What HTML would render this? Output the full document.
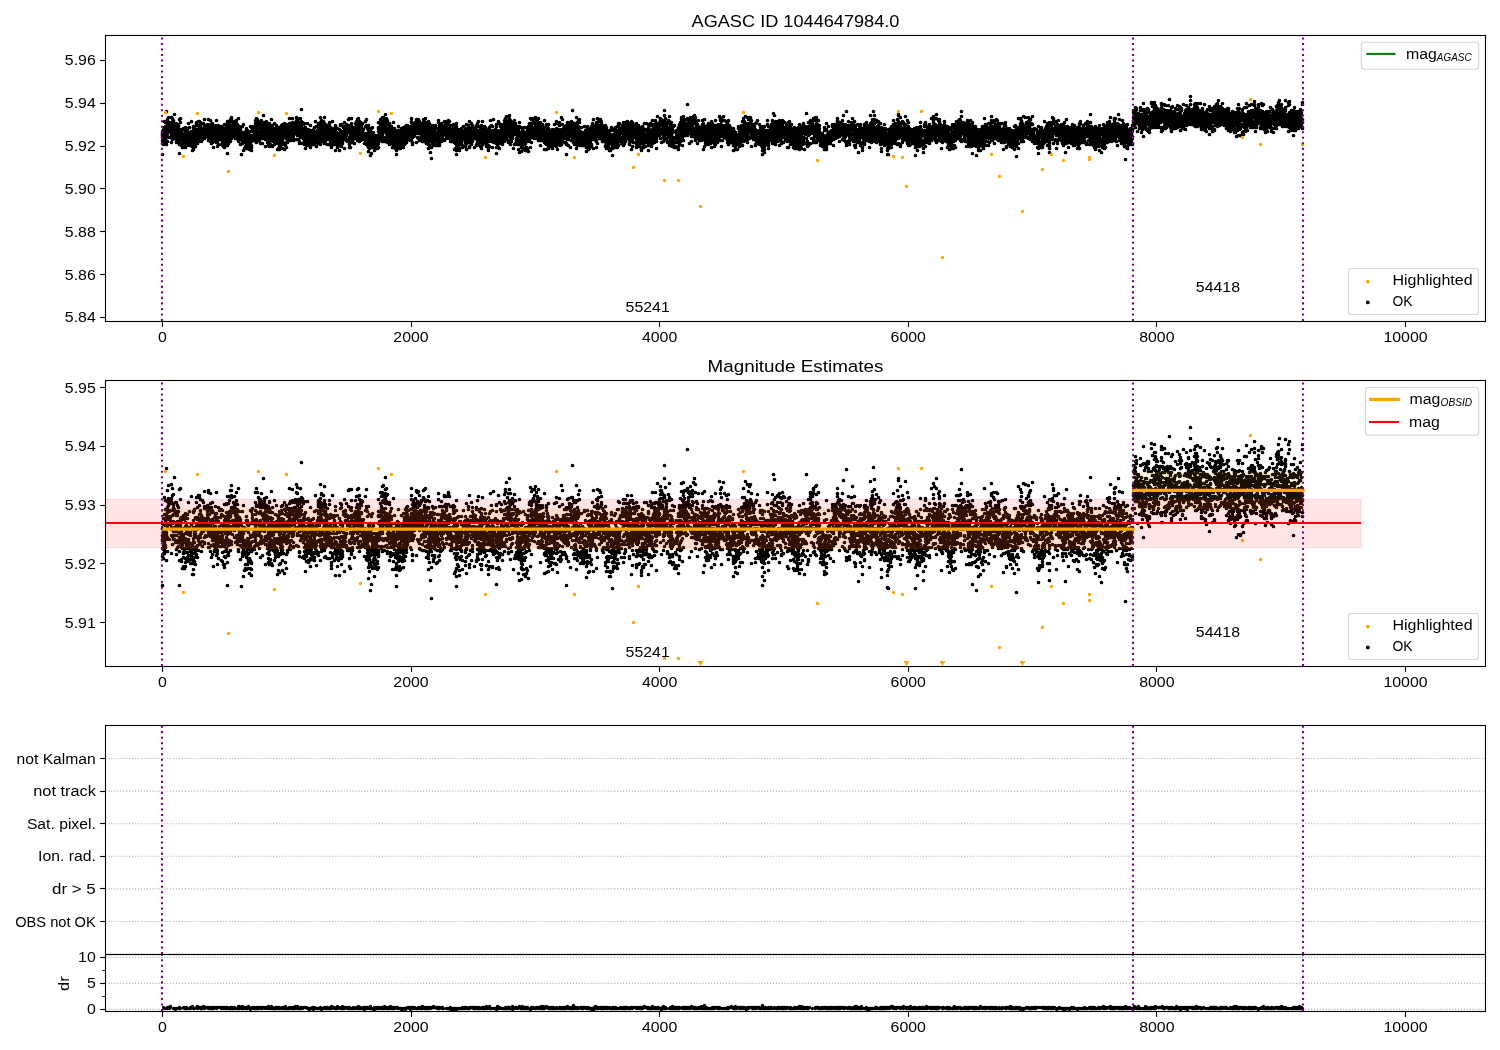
<!DOCTYPE html>
<html><head><meta charset="utf-8"><style>html,body{margin:0;padding:0;background:#fff;overflow:hidden}svg{display:block;will-change:transform}</style></head><body>
<svg width="1500" height="1050" viewBox="0 0 1500 1050" font-family="'Liberation Sans', sans-serif" fill="#000">
<rect width="1500" height="1050" fill="#fff"/>
<defs><clipPath id="c1"><rect x="105.5" y="35.5" width="1380.0" height="286.0"/></clipPath><clipPath id="c2"><rect x="105.5" y="380.5" width="1380.0" height="286.0"/></clipPath><clipPath id="c4"><rect x="105.5" y="954.5" width="1380.0" height="57.0"/></clipPath></defs>
<text x="795.50" y="26.90" font-size="16.67" text-anchor="middle" textLength="207.93" lengthAdjust="spacingAndGlyphs">AGASC ID 1044647984.0</text>
<g clip-path="url(#c1)">
<path d="M1625 1355h0m0 80h0m0 110h0m0 -170h0m0 0h0m0 0h0m0 -60h0m0 90h0m0 -50h0m0 20h0m0 -40h0m10 10h0m0 60h0m0 -10h0m0 -80h0m0 60h0m0 70h0m0 -110h0m0 80h0m0 10h0m0 -70h0m0 0h0m0 -60h0m10 130h0m0 -30h0m0 -100h0m0 -80h0m0 130h0m0 10h0m0 -10h0m0 40h0m0 0h0m0 -90h0m0 20h0m0 100h0m0 -140h0m0 80h0m0 60h0m0 -60h0m10 -130h0m0 120h0m0 -40h0m0 -40h0m0 70h0m0 70h0m0 -100h0m0 0h0m0 30h0m0 -10h0m0 70h0m0 -30h0m0 -50h0m10 130h0m0 -330h0m0 180h0m0 60h0m0 20h0m0 -20h0m0 -10h0m0 -60h0m10 10h0m0 -30h0m0 30h0m0 40h0m0 -10h0m0 90h0m0 -180h0m0 60h0m0 70h0m0 -90h0m0 -80h0m0 120h0m0 -60h0m10 -20h0m0 -60h0m0 70h0m0 -20h0m10 60h0m0 -60h0m0 70h0m0 -30h0m0 110h0m10 -110h0m0 50h0m0 -10h0m0 -10h0m0 20h0m10 -80h0m0 100h0m0 -160h0m0 50h0m0 130h0m0 70h0m0 -180h0m0 80h0m10 -10h0m0 -130h0m0 60h0m0 120h0m0 -100h0m0 90h0m0 -140h0m0 180h0m0 -10h0m0 -100h0m10 -30h0m0 120h0m0 -110h0m0 -20h0m0 40h0m0 20h0m0 -40h0m0 80h0m0 -80h0m0 -60h0m0 60h0m0 90h0m0 -20h0m10 10h0m0 -10h0m0 -190h0m0 120h0m0 50h0m0 10h0m0 30h0m0 0h0m0 -90h0m0 110h0m10 -100h0m0 0h0m0 110h0m0 -50h0m0 -100h0m10 90h0m0 -10h0m0 -80h0m0 40h0m0 10h0m0 60h0m0 80h0m0 -70h0m0 -30h0m0 90h0m0 -180h0m0 120h0m10 30h0m0 20h0m0 -160h0m0 40h0m0 90h0m0 -90h0m0 50h0m0 -30h0m0 20h0m0 0h0m0 50h0m0 -60h0m0 -10h0m10 90h0m0 -140h0m0 60h0m0 -50h0m0 50h0m0 60h0m0 10h0m0 -70h0m0 20h0m0 -30h0m10 20h0m0 10h0m0 -30h0m0 10h0m0 220h0m0 -340h0m0 220h0m0 -40h0m0 -30h0m0 20h0m0 80h0m0 -100h0m10 -20h0m0 -30h0m0 70h0m0 -60h0m0 0h0m0 50h0m0 30h0m0 -200h0m0 210h0m0 -100h0m0 -70h0m10 160h0m0 10h0m0 -50h0m0 -40h0m0 90h0m0 -60h0m0 50h0m0 20h0m0 -40h0m0 90h0m0 -160h0m0 150h0m0 -130h0m10 60h0m0 0h0m0 -40h0m0 140h0m0 -80h0m0 10h0m0 -40h0m0 30h0m10 -110h0m0 120h0m0 20h0m0 -40h0m0 90h0m0 -50h0m0 -70h0m0 -60h0m0 60h0m0 80h0m10 40h0m0 -100h0m0 -90h0m0 130h0m0 0h0m0 -120h0m10 110h0m0 -100h0m0 40h0m0 40h0m0 -60h0m0 -40h0m0 170h0m0 20h0m0 -200h0m0 20h0m0 120h0m0 -50h0m0 80h0m10 -60h0m0 0h0m0 60h0m0 -110h0m0 120h0m0 -110h0m0 -60h0m0 120h0m0 -110h0m0 40h0m0 60h0m0 -70h0m0 -10h0m10 80h0m0 -10h0m0 20h0m0 20h0m0 -70h0m0 80h0m0 -90h0m0 -50h0m0 80h0m0 70h0m0 -70h0m0 -90h0m10 -50h0m0 140h0m0 0h0m0 0h0m0 -20h0m0 70h0m0 -40h0m0 60h0m0 -60h0m0 0h0m0 20h0m10 50h0m0 -10h0m0 0h0m0 -170h0m0 130h0m0 -80h0m10 80h0m0 50h0m0 -70h0m0 30h0m0 -70h0m0 10h0m0 30h0m10 -70h0m0 100h0m0 20h0m0 -10h0m0 -210h0m0 210h0m10 20h0m0 -110h0m0 0h0m0 70h0m0 60h0m0 40h0m0 -110h0m0 50h0m0 -50h0m10 -120h0m0 150h0m0 60h0m0 -40h0m0 -140h0m0 60h0m0 -50h0m0 10h0m0 -60h0m0 120h0m0 0h0m0 110h0m0 -170h0m10 40h0m0 70h0m0 -50h0m0 -40h0m0 0h0m0 20h0m0 -10h0m0 50h0m0 -140h0m0 0h0m0 190h0m0 -120h0m10 30h0m0 60h0m0 -20h0m0 -110h0m0 0h0m0 60h0m0 -10h0m0 10h0m0 0h0m0 110h0m0 -170h0m0 120h0m10 -190h0m0 200h0m0 -30h0m0 -60h0m0 -40h0m0 110h0m0 -80h0m0 40h0m0 -130h0m0 80h0m0 20h0m10 0h0m0 -40h0m0 70h0m0 -110h0m0 80h0m0 100h0m0 -40h0m0 -100h0m10 120h0m0 -50h0m0 -150h0m0 150h0m0 -150h0m0 80h0m0 10h0m0 10h0m0 50h0m0 10h0m10 -70h0m0 80h0m0 -70h0m0 10h0m0 -110h0m0 90h0m0 20h0m0 -70h0m0 20h0m0 50h0m0 -30h0m0 -80h0m0 90h0m10 -10h0m0 90h0m0 -160h0m0 40h0m0 120h0m0 -120h0m0 90h0m0 10h0m0 -10h0m0 30h0m0 0h0m0 -20h0m0 -90h0m10 70h0m0 -50h0m0 10h0m0 20h0m0 -40h0m0 60h0m0 -40h0m0 20h0m0 90h0m10 -120h0m0 90h0m0 -60h0m0 -20h0m0 90h0m0 -70h0m0 -90h0m0 100h0m0 0h0m10 -100h0m0 80h0m0 -10h0m0 0h0m0 40h0m10 -30h0m0 -60h0m0 130h0m0 -190h0m0 110h0m0 20h0m0 -60h0m0 100h0m0 -50h0m0 -20h0m0 10h0m0 -50h0m0 130h0m10 -60h0m0 -60h0m0 90h0m0 -30h0m0 10h0m0 -30h0m10 30h0m0 30h0m0 -60h0m0 0h0m0 30h0m0 0h0m0 -10h0m10 -70h0m0 80h0m0 -70h0m0 10h0m0 -30h0m0 50h0m0 0h0m0 -10h0m0 -40h0m10 100h0m0 -30h0m0 70h0m0 -90h0m0 30h0m0 -70h0m0 100h0m0 -160h0m0 0h0m0 210h0m0 -140h0m10 90h0m0 -70h0m0 120h0m0 -80h0m0 -70h0m0 10h0m0 70h0m10 -30h0m0 -40h0m0 -60h0m0 40h0m0 110h0m0 -10h0m0 -20h0m0 -20h0m0 110h0m0 -50h0m10 -40h0m0 40h0m0 70h0m0 -80h0m0 -80h0m0 -20h0m0 140h0m10 -90h0m0 30h0m0 -20h0m0 -80h0m0 100h0m0 30h0m0 -20h0m0 10h0m0 70h0m0 -130h0m0 80h0m0 -100h0m0 -10h0m0 80h0m10 0h0m0 10h0m0 0h0m0 40h0m0 -20h0m0 100h0m0 -170h0m0 -30h0m0 90h0m0 -20h0m10 -20h0m0 30h0m0 -20h0m0 80h0m0 -90h0m0 20h0m0 -10h0m0 80h0m0 -20h0m0 -100h0m0 100h0m0 0h0m10 -90h0m0 30h0m0 60h0m0 -60h0m0 -10h0m0 -70h0m0 30h0m0 90h0m0 -30h0m0 60h0m10 -50h0m0 -40h0m0 60h0m0 -20h0m0 -50h0m0 -100h0m0 90h0m0 0h0m0 60h0m0 -60h0m0 110h0m0 -20h0m0 40h0m0 -150h0m10 70h0m0 0h0m0 0h0m0 10h0m0 10h0m0 -20h0m0 80h0m0 40h0m0 -50h0m0 -20h0m10 -90h0m0 -10h0m0 70h0m0 -110h0m0 80h0m0 40h0m0 70h0m10 -100h0m0 -20h0m0 60h0m0 0h0m0 10h0m0 -130h0m0 110h0m10 -10h0m0 10h0m0 0h0m0 -10h0m0 -100h0m0 30h0m0 0h0m10 100h0m0 -50h0m0 100h0m0 -120h0m0 10h0m0 -70h0m0 80h0m0 -60h0m0 90h0m10 -20h0m0 100h0m0 -70h0m0 -20h0m0 60h0m0 -90h0m0 -70h0m0 120h0m0 10h0m0 -110h0m10 40h0m0 60h0m0 -60h0m0 70h0m0 70h0m0 -80h0m0 -70h0m0 20h0m0 0h0m10 60h0m0 20h0m0 -100h0m0 30h0m0 -100h0m0 190h0m0 -150h0m0 20h0m0 40h0m0 120h0m0 10h0m0 -160h0m10 -20h0m0 20h0m0 80h0m0 -20h0m0 -30h0m0 90h0m0 -80h0m0 -10h0m0 -30h0m0 100h0m10 -130h0m0 70h0m0 -10h0m0 60h0m0 -20h0m0 -60h0m0 70h0m0 -60h0m0 0h0m0 30h0m0 40h0m0 -130h0m0 -30h0m0 0h0m10 130h0m0 -20h0m0 20h0m0 -30h0m0 0h0m0 0h0m0 -30h0m0 30h0m0 -40h0m0 230h0m0 -240h0m0 160h0m0 -240h0m0 220h0m0 -80h0m0 -20h0m10 -90h0m0 170h0m0 -30h0m0 -80h0m0 120h0m0 -210h0m0 60h0m0 160h0m0 -140h0m0 30h0m0 70h0m0 -110h0m10 60h0m0 -70h0m0 50h0m0 -100h0m0 50h0m0 40h0m0 30h0m0 30h0m0 -70h0m0 -30h0m0 20h0m10 50h0m0 -10h0m0 -50h0m0 0h0m0 -90h0m0 220h0m0 -80h0m0 20h0m0 -70h0m10 -70h0m0 170h0m0 -60h0m0 -70h0m0 80h0m0 -70h0m0 110h0m0 -160h0m0 40h0m0 80h0m0 -140h0m0 -20h0m0 100h0m10 0h0m0 30h0m0 50h0m10 -120h0m0 70h0m0 -30h0m0 40h0m0 -10h0m10 -30h0m0 -30h0m0 20h0m0 60h0m0 -110h0m0 50h0m0 -10h0m0 -10h0m0 10h0m0 80h0m0 -20h0m0 50h0m10 -120h0m0 140h0m0 -100h0m0 40h0m0 -10h0m0 20h0m0 -80h0m0 40h0m0 30h0m0 -10h0m0 10h0m10 -120h0m0 120h0m0 -40h0m0 30h0m0 -40h0m0 30h0m0 50h0m0 -60h0m0 -60h0m0 0h0m0 150h0m10 -140h0m0 20h0m0 50h0m0 -50h0m0 90h0m0 -70h0m0 100h0m0 -100h0m0 -20h0m0 100h0m0 20h0m10 -60h0m0 90h0m0 -120h0m0 20h0m0 -130h0m0 150h0m0 70h0m0 -90h0m10 20h0m0 -70h0m0 100h0m0 -30h0m0 10h0m0 0h0m0 20h0m0 -70h0m0 20h0m0 60h0m10 -70h0m0 -10h0m0 80h0m0 20h0m0 -30h0m0 -50h0m0 30h0m0 10h0m0 90h0m0 -70h0m10 -20h0m0 -30h0m0 30h0m0 40h0m0 0h0m0 -60h0m0 40h0m0 170h0m10 -110h0m0 -20h0m0 -70h0m0 20h0m0 -10h0m0 20h0m0 50h0m0 10h0m0 -70h0m0 -10h0m0 -90h0m0 140h0m0 -20h0m10 0h0m0 -140h0m0 110h0m0 -30h0m0 60h0m0 10h0m0 -60h0m0 170h0m0 -90h0m0 -70h0m10 40h0m0 100h0m0 -80h0m0 -20h0m0 30h0m0 -90h0m0 90h0m0 -40h0m10 90h0m0 -80h0m0 -50h0m0 10h0m0 130h0m0 -80h0m0 30h0m10 -10h0m0 20h0m0 0h0m0 -50h0m0 -80h0m0 90h0m0 -110h0m0 150h0m0 50h0m0 -60h0m0 -40h0m0 50h0m10 30h0m0 -160h0m0 10h0m0 20h0m0 30h0m0 20h0m0 40h0m0 -20h0m0 -20h0m10 60h0m0 -50h0m0 -10h0m0 20h0m0 -10h0m0 10h0m0 -90h0m0 130h0m0 10h0m0 -30h0m0 -80h0m0 30h0m0 100h0m10 -30h0m0 -130h0m0 180h0m10 -130h0m0 -100h0m0 210h0m0 -120h0m0 90h0m0 -50h0m0 20h0m10 90h0m0 -100h0m0 -50h0m0 30h0m0 -110h0m0 180h0m0 -40h0m0 60h0m0 -10h0m0 -150h0m10 -20h0m0 10h0m0 60h0m0 0h0m0 -100h0m0 20h0m0 90h0m0 -80h0m0 70h0m0 -100h0m10 50h0m0 40h0m10 50h0m0 -40h0m0 -30h0m0 10h0m0 10h0m0 40h0m0 -40h0m10 -10h0m0 -80h0m0 70h0m0 -30h0m0 70h0m0 0h0m0 20h0m0 -20h0m0 -70h0m0 -70h0m0 130h0m0 -160h0m0 120h0m0 -40h0m10 140h0m0 -110h0m0 -20h0m0 -40h0m0 100h0m0 -20h0m0 0h0m0 60h0m0 -150h0m0 60h0m0 -120h0m10 130h0m0 -40h0m0 120h0m0 -40h0m0 0h0m0 -160h0m0 120h0m10 80h0m0 -80h0m0 70h0m0 -170h0m0 120h0m10 20h0m0 -20h0m0 -110h0m0 110h0m0 -90h0m0 70h0m0 0h0m0 -60h0m0 90h0m0 -70h0m0 70h0m0 60h0m0 -80h0m0 10h0m0 20h0m0 -40h0m10 10h0m0 -70h0m0 50h0m0 80h0m0 -50h0m0 -20h0m0 -40h0m0 0h0m0 90h0m0 -140h0m0 40h0m0 40h0m0 30h0m0 100h0m10 -230h0m0 30h0m0 10h0m0 120h0m0 10h0m0 -40h0m0 -10h0m0 60h0m0 -60h0m10 -80h0m0 190h0m0 -150h0m0 0h0m0 60h0m0 -20h0m0 10h0m0 -20h0m0 -60h0m10 130h0m0 -230h0m0 80h0m0 60h0m0 -20h0m10 30h0m0 -80h0m0 0h0m0 150h0m0 -100h0m0 -30h0m0 100h0m0 -60h0m0 10h0m0 20h0m0 10h0m0 -70h0m10 110h0m0 -100h0m0 0h0m0 30h0m0 70h0m0 30h0m0 -20h0m0 -40h0m0 -40h0m0 170h0m10 -220h0m0 130h0m0 -80h0m0 80h0m0 -10h0m0 -70h0m0 100h0m0 -180h0m0 160h0m0 20h0m0 -110h0m10 -10h0m0 120h0m0 -90h0m0 120h0m0 -170h0m0 100h0m0 50h0m0 -110h0m0 30h0m10 -10h0m0 80h0m0 -130h0m0 60h0m0 80h0m0 -60h0m0 60h0m0 10h0m0 -150h0m0 -10h0m0 0h0m0 190h0m0 -80h0m0 -40h0m0 130h0m10 0h0m0 -200h0m0 90h0m0 20h0m0 60h0m0 -190h0m0 150h0m0 30h0m0 -180h0m0 130h0m0 100h0m0 -150h0m0 10h0m0 80h0m0 -60h0m0 -70h0m0 -10h0m0 30h0m0 100h0m10 -100h0m0 30h0m0 120h0m0 -90h0m0 50h0m0 -70h0m0 70h0m0 -130h0m0 110h0m0 -10h0m0 10h0m0 -110h0m10 120h0m0 60h0m0 -50h0m0 -100h0m0 20h0m0 -130h0m0 150h0m0 0h0m0 30h0m0 -40h0m0 10h0m0 -10h0m0 120h0m10 -180h0m0 80h0m0 30h0m0 10h0m0 -50h0m0 -30h0m0 -20h0m0 40h0m0 -80h0m0 210h0m10 -110h0m0 -40h0m0 0h0m0 30h0m0 70h0m0 -30h0m0 -50h0m0 60h0m10 -80h0m0 100h0m0 -40h0m0 70h0m0 -50h0m0 -70h0m0 50h0m0 40h0m0 -180h0m0 160h0m10 -60h0m0 -50h0m0 140h0m0 -50h0m0 0h0m0 -50h0m0 20h0m0 50h0m0 30h0m0 10h0m0 -100h0m10 -30h0m0 70h0m0 10h0m0 -70h0m0 100h0m0 -10h0m0 -150h0m0 80h0m10 30h0m0 130h0m0 -160h0m0 80h0m0 -100h0m0 10h0m0 50h0m0 -40h0m0 -50h0m10 10h0m0 80h0m0 -30h0m0 40h0m0 -10h0m0 60h0m0 -140h0m0 70h0m0 -30h0m0 90h0m0 60h0m0 -60h0m10 -80h0m0 -10h0m0 -60h0m0 80h0m0 20h0m0 -70h0m0 50h0m0 -30h0m0 -40h0m0 180h0m0 -160h0m0 190h0m10 -100h0m0 10h0m0 -40h0m0 -90h0m0 110h0m0 -20h0m0 -20h0m0 80h0m0 30h0m0 -110h0m0 0h0m0 10h0m0 20h0m0 50h0m0 -110h0m10 90h0m0 -110h0m0 120h0m0 -30h0m0 10h0m0 -130h0m0 100h0m0 -70h0m0 100h0m0 -140h0m10 80h0m0 -40h0m0 30h0m0 90h0m0 -140h0m0 60h0m0 -90h0m0 200h0m0 -30h0m0 -110h0m0 20h0m0 160h0m0 -90h0m0 10h0m0 -60h0m10 -50h0m0 20h0m0 60h0m0 -20h0m0 0h0m0 70h0m0 -100h0m0 30h0m10 140h0m0 -140h0m0 -40h0m0 -50h0m0 80h0m0 -30h0m0 50h0m0 -40h0m0 0h0m0 20h0m0 30h0m0 0h0m0 -140h0m10 50h0m0 -20h0m0 70h0m0 -20h0m0 140h0m0 -90h0m0 -50h0m0 50h0m0 -30h0m10 90h0m0 -40h0m0 -110h0m0 200h0m0 -160h0m0 10h0m0 -10h0m0 -70h0m0 10h0m0 90h0m0 -10h0m10 40h0m0 10h0m0 40h0m0 -40h0m0 -120h0m0 0h0m0 20h0m0 20h0m0 50h0m0 -20h0m0 80h0m0 -100h0m10 10h0m0 0h0m0 40h0m0 -10h0m0 10h0m0 -100h0m0 20h0m0 50h0m0 -80h0m10 10h0m0 -30h0m0 140h0m0 -100h0m0 20h0m0 30h0m0 60h0m0 -50h0m0 20h0m0 -90h0m0 -80h0m0 220h0m0 -70h0m0 -50h0m10 110h0m0 -50h0m0 -80h0m0 140h0m0 -170h0m0 30h0m0 50h0m0 0h0m10 10h0m0 30h0m0 -60h0m0 -40h0m0 0h0m0 30h0m0 90h0m0 -30h0m10 -120h0m0 50h0m0 -10h0m0 -80h0m0 180h0m0 -130h0m0 0h0m10 110h0m0 60h0m0 -50h0m0 -60h0m0 100h0m0 -10h0m0 -80h0m0 30h0m0 -60h0m10 60h0m0 -30h0m0 -30h0m0 60h0m0 -50h0m0 -10h0m0 -20h0m0 50h0m0 30h0m0 -20h0m0 -50h0m10 70h0m0 -50h0m0 10h0m0 -30h0m0 -30h0m0 -10h0m0 100h0m0 -40h0m0 -30h0m10 40h0m0 -30h0m0 130h0m0 -220h0m0 100h0m0 -70h0m0 80h0m0 -50h0m10 10h0m0 -40h0m0 120h0m0 -80h0m0 110h0m0 -30h0m0 20h0m0 -70h0m0 -90h0m0 170h0m0 -150h0m0 70h0m10 30h0m0 20h0m0 -100h0m0 40h0m0 -30h0m0 70h0m0 90h0m0 0h0m10 -130h0m0 80h0m0 -70h0m0 50h0m0 0h0m0 90h0m0 -190h0m0 190h0m0 -80h0m0 -70h0m0 170h0m0 -150h0m0 -40h0m10 -60h0m0 140h0m0 -60h0m0 90h0m0 -120h0m0 70h0m0 70h0m0 -50h0m10 -40h0m0 30h0m0 -100h0m0 110h0m0 20h0m0 -90h0m0 70h0m0 40h0m0 -140h0m0 110h0m0 -70h0m0 50h0m0 -220h0m0 230h0m0 -20h0m10 10h0m0 40h0m0 -130h0m0 100h0m0 10h0m0 -50h0m0 150h0m10 -100h0m0 -20h0m0 -70h0m0 70h0m0 70h0m0 -60h0m0 -30h0m0 60h0m0 80h0m0 -70h0m0 -20h0m0 -40h0m10 100h0m0 40h0m0 -70h0m0 30h0m0 -110h0m0 -60h0m0 180h0m0 -130h0m10 140h0m0 60h0m0 -90h0m0 -60h0m0 10h0m0 0h0m0 20h0m0 10h0m0 -10h0m0 70h0m0 -100h0m0 -60h0m0 60h0m0 10h0m0 -40h0m0 30h0m0 -10h0m10 90h0m0 -20h0m0 40h0m0 -30h0m0 50h0m0 -90h0m0 30h0m10 0h0m0 -90h0m0 50h0m0 0h0m0 30h0m0 -30h0m0 20h0m0 -140h0m0 130h0m0 60h0m10 20h0m0 -120h0m0 40h0m0 -70h0m0 80h0m0 20h0m0 60h0m0 -60h0m0 -30h0m0 90h0m0 -90h0m0 50h0m0 30h0m0 -100h0m10 100h0m0 -50h0m0 -50h0m0 -40h0m0 0h0m0 100h0m0 -80h0m10 90h0m0 -30h0m0 -80h0m0 60h0m0 80h0m0 -20h0m0 50h0m0 -40h0m0 -180h0m0 110h0m0 30h0m0 10h0m0 -100h0m0 40h0m0 20h0m10 60h0m0 -40h0m0 -70h0m0 70h0m0 40h0m0 -80h0m0 10h0m0 60h0m0 -10h0m0 -80h0m10 -20h0m0 130h0m0 -90h0m0 100h0m0 -130h0m0 20h0m0 40h0m0 20h0m0 30h0m10 20h0m0 -90h0m0 30h0m0 -30h0m0 -60h0m0 90h0m0 -30h0m10 80h0m0 -160h0m0 50h0m0 20h0m0 -20h0m0 120h0m0 -60h0m0 -20h0m0 -30h0m0 60h0m0 -50h0m0 0h0m0 70h0m0 -80h0m0 30h0m0 0h0m10 -10h0m0 50h0m0 -80h0m0 0h0m0 70h0m0 -20h0m0 20h0m0 -180h0m0 120h0m0 50h0m0 40h0m10 -70h0m0 -40h0m0 80h0m0 -60h0m0 50h0m0 30h0m0 -100h0m0 150h0m0 -200h0m10 150h0m0 -80h0m0 -30h0m0 0h0m0 20h0m0 50h0m10 -130h0m0 190h0m0 -160h0m0 40h0m0 -80h0m0 60h0m0 -40h0m0 160h0m0 -180h0m0 20h0m0 120h0m0 -20h0m0 -120h0m10 90h0m0 -20h0m0 0h0m0 -70h0m0 140h0m0 -110h0m0 90h0m0 0h0m10 20h0m0 20h0m0 -150h0m0 -20h0m0 70h0m0 -120h0m0 210h0m0 0h0m0 -110h0m0 -40h0m0 160h0m0 -50h0m0 -30h0m0 40h0m0 -50h0m0 140h0m0 -60h0m0 -120h0m0 10h0m0 -40h0m10 20h0m0 150h0m0 -100h0m0 -20h0m0 90h0m0 -60h0m0 40h0m0 60h0m0 -160h0m0 40h0m0 -50h0m0 -40h0m0 80h0m0 -20h0m0 0h0m0 120h0m0 -180h0m10 140h0m0 0h0m0 60h0m0 -150h0m0 50h0m10 -90h0m0 110h0m0 0h0m0 70h0m0 -160h0m0 70h0m0 -40h0m0 130h0m0 0h0m0 -110h0m0 60h0m0 -10h0m0 40h0m10 -60h0m0 20h0m0 -30h0m0 70h0m0 -200h0m0 150h0m0 -90h0m0 20h0m0 100h0m0 -90h0m0 150h0m0 20h0m0 -70h0m0 -50h0m0 -80h0m10 100h0m0 -80h0m0 20h0m0 100h0m0 -100h0m0 -30h0m0 10h0m0 100h0m0 -40h0m0 10h0m0 70h0m0 40h0m0 -80h0m0 -70h0m0 120h0m0 -130h0m10 110h0m0 -110h0m0 100h0m0 -70h0m0 70h0m0 -60h0m0 10h0m0 30h0m0 0h0m0 -40h0m0 -20h0m0 50h0m0 -40h0m10 20h0m0 -70h0m0 190h0m0 -80h0m0 -10h0m0 30h0m10 10h0m0 -10h0m0 -40h0m0 0h0m0 10h0m0 -30h0m0 40h0m0 30h0m10 -100h0m0 -50h0m0 50h0m0 90h0m0 -10h0m0 -150h0m0 220h0m0 -160h0m10 50h0m0 60h0m0 30h0m0 -150h0m0 40h0m0 20h0m0 40h0m0 20h0m0 -40h0m0 30h0m0 -20h0m10 40h0m0 -10h0m0 -100h0m0 80h0m0 90h0m0 -10h0m0 -90h0m0 10h0m0 100h0m0 -150h0m10 -110h0m0 170h0m0 50h0m0 -150h0m0 30h0m0 120h0m10 -10h0m0 -60h0m0 30h0m0 -60h0m0 70h0m0 -60h0m0 -50h0m0 40h0m10 -10h0m0 40h0m0 -80h0m0 20h0m0 140h0m0 -140h0m0 120h0m0 -140h0m0 130h0m0 -30h0m0 10h0m10 -10h0m0 20h0m0 100h0m0 -130h0m0 -110h0m0 60h0m0 80h0m0 -90h0m0 -60h0m10 170h0m0 10h0m0 -100h0m0 60h0m0 -40h0m0 70h0m0 -100h0m0 120h0m0 -30h0m0 -20h0m0 -10h0m0 30h0m10 -20h0m0 20h0m0 -70h0m0 70h0m0 -50h0m0 -80h0m0 50h0m0 10h0m0 70h0m0 60h0m0 -70h0m10 20h0m0 -30h0m0 -50h0m0 110h0m10 -20h0m0 -40h0m0 -50h0m0 50h0m0 110h0m0 -100h0m0 -70h0m0 70h0m0 -110h0m0 70h0m0 0h0m10 50h0m0 -170h0m0 170h0m0 -30h0m0 -20h0m0 60h0m0 -90h0m0 0h0m0 40h0m0 20h0m0 -80h0m0 -60h0m0 50h0m10 70h0m0 70h0m0 -80h0m0 100h0m0 -210h0m0 140h0m0 -60h0m0 60h0m0 20h0m0 -170h0m0 70h0m10 100h0m0 -50h0m0 -30h0m0 100h0m0 -120h0m0 20h0m0 90h0m0 -100h0m10 70h0m0 -10h0m0 -10h0m0 -30h0m0 -70h0m0 -10h0m0 100h0m0 20h0m0 -20h0m0 20h0m10 -160h0m0 60h0m0 200h0m0 -100h0m0 -10h0m0 -90h0m0 80h0m10 -80h0m0 -20h0m0 40h0m0 50h0m0 10h0m0 -90h0m0 110h0m0 0h0m0 -70h0m0 40h0m0 -40h0m10 20h0m0 60h0m0 -40h0m0 40h0m0 -150h0m0 160h0m10 -90h0m0 100h0m0 -130h0m0 30h0m0 100h0m0 -110h0m10 -110h0m0 100h0m0 110h0m0 -150h0m0 160h0m10 -40h0m0 40h0m0 -10h0m0 40h0m0 -60h0m0 -60h0m0 -140h0m0 140h0m0 -10h0m0 0h0m0 -30h0m0 190h0m10 -120h0m0 -100h0m0 220h0m0 -130h0m0 -30h0m0 -50h0m0 120h0m10 40h0m0 -120h0m0 30h0m0 30h0m0 -100h0m0 160h0m0 -120h0m0 -50h0m0 -70h0m0 130h0m0 -30h0m0 10h0m0 -60h0m10 170h0m0 -70h0m0 50h0m0 -20h0m0 -50h0m0 -30h0m0 0h0m0 130h0m0 0h0m0 -90h0m0 -20h0m10 80h0m0 -70h0m0 30h0m0 -20h0m0 -30h0m0 70h0m0 -70h0m0 50h0m10 40h0m0 -10h0m0 -50h0m0 0h0m0 20h0m0 -70h0m0 50h0m0 110h0m0 -70h0m10 -60h0m0 -10h0m0 80h0m0 -100h0m0 -40h0m0 50h0m0 90h0m0 -30h0m0 0h0m0 -20h0m10 -70h0m0 20h0m0 -60h0m0 100h0m0 -30h0m0 0h0m0 -30h0m0 50h0m0 40h0m10 10h0m0 -160h0m0 180h0m0 30h0m0 -190h0m0 60h0m0 0h0m0 -30h0m0 100h0m0 20h0m0 -80h0m0 40h0m0 -30h0m0 -20h0m10 40h0m0 -50h0m0 130h0m0 -100h0m0 -30h0m0 30h0m0 20h0m0 -30h0m0 40h0m0 -20h0m0 20h0m0 -140h0m0 200h0m0 -50h0m0 0h0m10 -50h0m0 120h0m0 -60h0m0 70h0m0 -100h0m0 90h0m0 -60h0m0 -120h0m0 170h0m0 -90h0m0 -90h0m0 40h0m0 140h0m0 -140h0m0 30h0m0 0h0m10 120h0m0 -180h0m0 100h0m0 70h0m0 -60h0m0 -20h0m0 -70h0m0 50h0m0 50h0m0 -40h0m0 -30h0m0 40h0m0 -10h0m0 50h0m0 30h0m0 -60h0m10 -50h0m0 30h0m0 -30h0m0 -40h0m0 70h0m0 -30h0m0 20h0m0 60h0m0 -120h0m0 20h0m10 130h0m0 -60h0m0 -20h0m0 90h0m0 -30h0m0 -60h0m0 20h0m0 70h0m0 -50h0m0 -20h0m0 -20h0m0 10h0m0 20h0m0 0h0m0 -100h0m0 110h0m0 10h0m10 20h0m0 -10h0m0 10h0m0 -80h0m0 40h0m10 100h0m0 -80h0m0 30h0m0 -40h0m0 20h0m0 -20h0m10 60h0m0 -70h0m0 -70h0m0 -50h0m0 140h0m0 10h0m0 30h0m10 -50h0m0 100h0m0 -10h0m0 -180h0m0 -60h0m0 160h0m0 20h0m0 -10h0m0 -100h0m0 180h0m10 -40h0m0 -20h0m0 -110h0m0 10h0m0 90h0m0 10h0m0 10h0m0 0h0m0 -30h0m0 90h0m0 -50h0m0 30h0m0 -90h0m0 80h0m0 -50h0m10 -60h0m0 80h0m0 80h0m0 -50h0m0 90h0m0 -260h0m0 90h0m0 -10h0m10 150h0m0 -50h0m0 10h0m0 40h0m0 -160h0m0 -40h0m0 90h0m0 -60h0m0 30h0m0 120h0m0 -60h0m0 50h0m0 -30h0m0 -90h0m0 90h0m0 -70h0m0 60h0m10 -100h0m0 30h0m0 0h0m0 30h0m0 30h0m0 -50h0m0 110h0m0 90h0m0 -190h0m0 50h0m0 20h0m10 20h0m0 -90h0m0 40h0m0 70h0m0 -190h0m0 50h0m0 200h0m10 -60h0m0 -80h0m0 -10h0m0 70h0m0 -180h0m0 60h0m0 50h0m0 -10h0m0 30h0m0 20h0m10 -100h0m0 150h0m0 -130h0m0 20h0m0 10h0m0 0h0m0 70h0m0 -20h0m0 30h0m0 -50h0m0 50h0m10 -30h0m0 10h0m0 70h0m0 -40h0m0 -20h0m0 -70h0m0 50h0m0 -40h0m0 40h0m0 -30h0m0 -10h0m10 60h0m0 20h0m0 -50h0m0 -10h0m0 -50h0m10 10h0m0 110h0m0 -50h0m0 -70h0m0 50h0m0 10h0m0 -60h0m0 50h0m0 -30h0m0 80h0m0 -70h0m0 90h0m0 -70h0m0 -20h0m0 10h0m0 10h0m0 0h0m10 50h0m0 -90h0m0 0h0m0 120h0m0 -120h0m0 90h0m10 -90h0m0 -80h0m0 190h0m0 -250h0m0 90h0m0 50h0m0 -90h0m0 100h0m0 -90h0m0 110h0m0 30h0m0 -10h0m0 -40h0m0 40h0m0 20h0m0 -80h0m0 20h0m10 -100h0m0 80h0m0 -70h0m0 20h0m0 60h0m0 30h0m0 -50h0m10 -10h0m0 -50h0m0 -90h0m0 130h0m0 40h0m0 -10h0m0 -110h0m0 90h0m0 40h0m10 -20h0m0 -40h0m0 10h0m0 -20h0m0 -40h0m0 140h0m0 -130h0m0 30h0m0 50h0m0 -100h0m0 -40h0m0 70h0m0 110h0m0 -130h0m10 30h0m0 10h0m0 40h0m0 -50h0m0 30h0m0 -130h0m0 10h0m0 210h0m0 -160h0m0 70h0m0 -10h0m0 30h0m0 -10h0m0 -100h0m0 130h0m0 -70h0m0 -120h0m0 240h0m0 -60h0m0 -30h0m0 -50h0m0 -40h0m0 30h0m0 60h0m0 -20h0m10 -40h0m0 40h0m0 -10h0m0 80h0m0 -60h0m0 -140h0m0 60h0m0 40h0m0 -60h0m0 90h0m10 90h0m0 -110h0m0 10h0m0 120h0m0 -130h0m0 -10h0m10 -130h0m0 140h0m0 -80h0m0 -10h0m0 30h0m0 80h0m0 -60h0m0 10h0m0 120h0m10 -80h0m0 100h0m0 0h0m0 -80h0m0 20h0m0 -10h0m0 -30h0m0 -20h0m0 100h0m0 -50h0m0 -80h0m0 -10h0m0 -20h0m0 -30h0m10 190h0m0 -50h0m0 0h0m0 30h0m0 -30h0m0 -20h0m0 120h0m0 -100h0m0 50h0m0 30h0m0 10h0m0 -210h0m0 150h0m0 -40h0m10 -30h0m0 80h0m0 -50h0m0 20h0m0 20h0m0 -10h0m0 0h0m0 -60h0m0 30h0m0 10h0m0 -90h0m0 0h0m0 70h0m10 60h0m0 -120h0m0 50h0m0 20h0m0 70h0m0 -60h0m0 40h0m0 -90h0m0 90h0m0 -70h0m0 -60h0m0 150h0m0 60h0m10 -150h0m0 70h0m0 20h0m0 40h0m0 -20h0m0 0h0m0 -60h0m0 90h0m0 -20h0m0 -90h0m0 10h0m0 50h0m0 -110h0m0 40h0m10 60h0m0 20h0m0 -30h0m0 20h0m0 50h0m0 -170h0m0 20h0m0 10h0m0 30h0m0 20h0m0 30h0m0 -20h0m0 20h0m10 10h0m0 -50h0m0 30h0m0 30h0m0 30h0m0 -60h0m0 110h0m10 -120h0m0 -40h0m0 -90h0m0 180h0m0 -30h0m0 10h0m0 -20h0m0 90h0m0 -80h0m0 -20h0m0 10h0m0 60h0m0 -80h0m0 50h0m10 -10h0m0 0h0m0 -100h0m0 90h0m0 -10h0m0 -30h0m0 70h0m10 -40h0m0 60h0m0 10h0m0 -50h0m0 10h0m0 40h0m0 -50h0m0 0h0m0 100h0m0 -120h0m0 0h0m0 -50h0m0 160h0m0 -100h0m0 -20h0m10 120h0m0 -50h0m0 -10h0m0 40h0m0 -130h0m0 -10h0m0 40h0m0 150h0m0 -70h0m0 -100h0m0 30h0m0 180h0m10 -240h0m0 60h0m0 60h0m0 -10h0m0 30h0m0 -50h0m0 -20h0m0 -30h0m0 20h0m0 -40h0m0 110h0m10 -170h0m0 90h0m0 40h0m0 10h0m0 -60h0m0 110h0m0 -90h0m0 120h0m0 -180h0m0 20h0m0 120h0m0 -130h0m10 90h0m0 40h0m0 -130h0m0 120h0m0 -110h0m0 -10h0m0 120h0m0 30h0m0 -50h0m0 70h0m0 -70h0m0 -30h0m0 10h0m10 10h0m0 30h0m0 -30h0m0 -60h0m0 10h0m0 10h0m0 110h0m0 -120h0m0 130h0m0 -140h0m0 40h0m10 40h0m0 30h0m0 -110h0m0 100h0m0 -30h0m0 -50h0m0 50h0m0 -70h0m0 60h0m0 -60h0m0 10h0m0 30h0m0 0h0m0 -100h0m0 130h0m10 40h0m0 -130h0m0 90h0m0 30h0m0 -80h0m0 -50h0m0 0h0m0 30h0m0 -10h0m0 90h0m0 -80h0m0 10h0m0 20h0m0 -40h0m10 140h0m0 -40h0m0 40h0m0 -200h0m0 60h0m0 30h0m0 -30h0m0 60h0m0 -10h0m0 50h0m0 -60h0m0 30h0m10 -80h0m0 70h0m0 -30h0m0 20h0m0 -20h0m0 30h0m0 50h0m0 -130h0m0 20h0m0 -40h0m0 20h0m0 -20h0m0 10h0m10 40h0m0 -80h0m0 90h0m0 80h0m0 -20h0m0 -80h0m0 -30h0m0 80h0m0 20h0m0 -40h0m0 -60h0m0 70h0m0 20h0m0 -80h0m0 0h0m10 -30h0m0 110h0m0 -120h0m0 0h0m0 10h0m0 60h0m0 -20h0m0 90h0m0 -120h0m0 -40h0m0 100h0m0 70h0m10 -170h0m0 70h0m0 -30h0m0 0h0m0 80h0m0 -50h0m0 40h0m0 -10h0m0 -100h0m0 140h0m0 -110h0m10 50h0m0 0h0m0 -40h0m0 60h0m0 10h0m0 10h0m0 -70h0m0 0h0m0 60h0m0 -30h0m0 -70h0m0 120h0m10 -60h0m0 50h0m0 -20h0m0 0h0m0 -40h0m0 -10h0m0 50h0m10 -90h0m0 60h0m0 20h0m0 -30h0m0 90h0m0 -40h0m0 -60h0m10 -80h0m0 -40h0m0 100h0m0 40h0m0 -30h0m0 -10h0m0 -10h0m0 -60h0m0 190h0m0 -60h0m10 -40h0m0 70h0m0 -90h0m0 80h0m0 -90h0m0 80h0m0 90h0m0 -170h0m0 50h0m0 -10h0m0 30h0m0 -80h0m0 20h0m0 0h0m0 -30h0m0 180h0m0 -190h0m0 180h0m10 -140h0m0 -10h0m0 -30h0m0 -10h0m0 60h0m0 60h0m0 -120h0m0 10h0m0 20h0m0 100h0m0 -130h0m10 60h0m0 -10h0m0 30h0m0 10h0m0 -50h0m0 10h0m0 50h0m0 -40h0m0 -10h0m0 -10h0m0 40h0m0 40h0m0 -70h0m0 50h0m10 -30h0m0 -30h0m0 10h0m0 10h0m0 30h0m0 -100h0m0 70h0m0 -40h0m0 80h0m0 -60h0m0 50h0m0 -60h0m0 70h0m0 -50h0m10 20h0m0 -110h0m0 0h0m0 80h0m0 -30h0m0 80h0m0 100h0m0 -100h0m0 0h0m0 -40h0m10 20h0m0 -10h0m0 20h0m0 -110h0m0 30h0m0 20h0m0 60h0m0 60h0m0 -60h0m10 -10h0m0 -30h0m0 0h0m0 -80h0m0 80h0m0 30h0m0 30h0m0 -10h0m0 0h0m0 0h0m0 -30h0m0 90h0m10 -140h0m0 160h0m0 -170h0m0 100h0m0 -10h0m0 -40h0m0 -70h0m0 190h0m0 -20h0m0 -60h0m10 -60h0m0 30h0m0 80h0m0 -130h0m0 0h0m0 60h0m0 100h0m0 -90h0m10 -40h0m0 -40h0m0 0h0m0 130h0m0 -30h0m0 20h0m0 -90h0m0 20h0m0 0h0m0 0h0m0 10h0m10 100h0m0 -70h0m0 30h0m0 -50h0m0 -20h0m0 50h0m0 80h0m0 -120h0m10 -70h0m0 120h0m0 20h0m0 -70h0m0 0h0m0 -20h0m0 -80h0m0 110h0m10 -10h0m0 -40h0m0 50h0m0 -60h0m0 120h0m0 50h0m0 -70h0m0 40h0m0 -90h0m0 -100h0m0 30h0m0 70h0m0 30h0m10 -140h0m0 180h0m0 -30h0m0 -50h0m0 60h0m0 -30h0m0 40h0m0 -70h0m0 -50h0m0 110h0m0 30h0m0 -20h0m0 -50h0m0 -80h0m0 120h0m0 50h0m0 -30h0m0 -90h0m10 30h0m0 10h0m0 120h0m0 -100h0m0 80h0m0 -180h0m0 30h0m0 10h0m0 -20h0m0 80h0m0 10h0m0 -30h0m0 10h0m10 80h0m0 30h0m0 -80h0m0 -40h0m0 -50h0m0 30h0m0 -70h0m0 90h0m0 80h0m0 -110h0m0 60h0m0 -90h0m0 60h0m10 30h0m0 80h0m0 -210h0m0 40h0m0 130h0m0 0h0m0 -10h0m0 -120h0m0 230h0m0 -60h0m0 -50h0m0 70h0m10 -90h0m0 -10h0m0 20h0m0 -20h0m0 10h0m0 10h0m0 -60h0m0 110h0m0 40h0m0 -160h0m0 0h0m0 -60h0m10 150h0m0 20h0m0 -80h0m0 10h0m0 -50h0m0 30h0m0 60h0m0 150h0m0 -150h0m0 -100h0m0 100h0m0 -10h0m0 30h0m10 -60h0m0 -20h0m0 80h0m0 -50h0m0 130h0m0 -150h0m0 30h0m0 10h0m0 220h0m0 -290h0m0 120h0m10 -60h0m0 -40h0m0 -60h0m0 100h0m0 80h0m0 -90h0m0 -40h0m0 -30h0m0 70h0m0 -20h0m0 80h0m0 -90h0m10 -60h0m0 120h0m0 -50h0m0 60h0m0 60h0m0 -50h0m0 60h0m0 -90h0m0 10h0m0 -70h0m0 -20h0m10 80h0m0 -20h0m0 90h0m0 -160h0m0 150h0m0 -20h0m0 -20h0m0 -30h0m0 -40h0m0 90h0m0 -110h0m0 70h0m0 20h0m10 20h0m0 -80h0m0 30h0m0 10h0m0 20h0m0 -30h0m0 -100h0m0 90h0m0 -20h0m0 20h0m0 30h0m0 0h0m0 -40h0m10 60h0m0 -10h0m0 -20h0m0 -20h0m0 110h0m10 -90h0m0 -80h0m0 50h0m0 40h0m0 80h0m0 -40h0m0 -30h0m0 -30h0m10 20h0m0 -40h0m0 -130h0m0 80h0m0 40h0m0 60h0m0 10h0m0 -20h0m0 -70h0m0 50h0m0 -130h0m0 170h0m0 40h0m0 -60h0m10 -40h0m0 60h0m0 -70h0m0 10h0m0 90h0m0 -100h0m0 70h0m0 -90h0m0 -50h0m0 60h0m0 140h0m0 -10h0m0 -140h0m10 30h0m0 40h0m0 40h0m0 -160h0m0 150h0m0 -50h0m0 -30h0m0 80h0m10 -130h0m0 40h0m0 -10h0m0 10h0m0 40h0m0 60h0m0 -120h0m0 0h0m0 30h0m0 -90h0m10 60h0m0 50h0m0 60h0m0 -50h0m0 -20h0m0 -80h0m0 10h0m0 10h0m0 40h0m0 70h0m0 -110h0m0 0h0m0 90h0m10 -40h0m0 -30h0m0 40h0m0 10h0m0 -30h0m0 -20h0m0 50h0m0 -30h0m0 80h0m10 10h0m0 -190h0m0 110h0m0 10h0m0 -20h0m0 -30h0m0 -70h0m0 60h0m10 -30h0m0 50h0m0 30h0m0 0h0m0 -30h0m0 -10h0m0 10h0m0 50h0m0 -50h0m0 50h0m0 -90h0m0 70h0m0 -30h0m0 40h0m10 30h0m0 -110h0m0 -40h0m0 40h0m0 60h0m0 -50h0m0 -20h0m0 140h0m0 -140h0m0 130h0m10 -20h0m0 -10h0m0 -40h0m10 20h0m0 -30h0m0 -90h0m0 160h0m0 -80h0m0 80h0m0 -160h0m0 120h0m0 -80h0m0 70h0m10 20h0m0 -120h0m0 130h0m0 0h0m0 -60h0m0 20h0m0 -20h0m0 100h0m10 -130h0m0 70h0m0 -30h0m0 100h0m0 -30h0m0 -70h0m0 120h0m0 -60h0m10 -60h0m0 110h0m0 -30h0m0 10h0m0 -40h0m0 -90h0m0 160h0m0 -120h0m0 60h0m0 40h0m10 -20h0m0 -30h0m0 20h0m0 40h0m10 0h0m0 -140h0m0 -20h0m0 70h0m0 50h0m0 -40h0m0 -50h0m0 40h0m0 -50h0m0 100h0m10 10h0m0 -10h0m0 -30h0m0 -80h0m0 70h0m0 100h0m0 -150h0m0 70h0m0 -20h0m0 -30h0m0 10h0m0 190h0m0 -170h0m10 50h0m0 -10h0m0 -40h0m0 -20h0m0 130h0m0 -90h0m0 40h0m0 -80h0m0 180h0m0 -110h0m0 -40h0m10 110h0m0 -70h0m0 -20h0m0 120h0m0 -240h0m0 150h0m0 -60h0m0 80h0m0 -10h0m0 -40h0m0 150h0m0 -70h0m0 -60h0m0 -50h0m0 -60h0m0 280h0m0 -160h0m10 20h0m0 -30h0m0 20h0m0 -100h0m0 130h0m0 -100h0m0 30h0m0 20h0m0 -30h0m0 120h0m10 -170h0m0 110h0m0 -60h0m0 10h0m0 -20h0m0 40h0m0 20h0m0 80h0m10 10h0m0 -110h0m0 10h0m0 -80h0m0 200h0m0 -130h0m0 60h0m0 -30h0m0 -60h0m10 -40h0m0 90h0m0 10h0m0 -50h0m0 90h0m0 -70h0m0 -20h0m0 50h0m0 -40h0m10 50h0m0 -60h0m0 30h0m0 -30h0m0 -40h0m0 120h0m0 -70h0m0 -30h0m0 0h0m0 0h0m0 80h0m0 -130h0m0 90h0m0 20h0m0 -60h0m10 120h0m0 -110h0m0 30h0m0 100h0m10 -80h0m0 -70h0m0 -60h0m10 60h0m0 60h0m0 -60h0m0 50h0m0 -70h0m0 80h0m0 0h0m10 -10h0m0 -90h0m0 170h0m0 -30h0m0 -70h0m0 60h0m0 -40h0m0 90h0m0 -160h0m0 60h0m0 -20h0m10 90h0m0 -120h0m0 20h0m0 40h0m0 -50h0m0 80h0m0 90h0m0 -110h0m0 -140h0m0 160h0m0 -30h0m10 20h0m0 -50h0m0 -10h0m0 30h0m0 -20h0m0 20h0m0 -20h0m0 -50h0m0 70h0m10 -60h0m0 80h0m0 -120h0m0 120h0m0 -30h0m0 -40h0m0 0h0m0 -60h0m0 170h0m0 -90h0m10 -10h0m0 0h0m0 60h0m0 90h0m0 -10h0m0 -250h0m0 0h0m0 210h0m0 -100h0m0 30h0m10 -50h0m0 0h0m0 40h0m0 -60h0m0 130h0m10 -50h0m0 -80h0m0 -50h0m0 210h0m0 -120h0m10 30h0m0 -30h0m0 -70h0m0 90h0m0 60h0m0 -70h0m0 80h0m0 -150h0m0 130h0m10 -30h0m0 -10h0m0 -50h0m0 0h0m0 -10h0m0 40h0m0 30h0m0 -30h0m0 -50h0m0 60h0m10 0h0m0 -20h0m0 -30h0m0 80h0m0 -40h0m0 -50h0m0 190h0m10 -190h0m0 10h0m0 90h0m0 -10h0m0 -40h0m10 30h0m0 -100h0m0 40h0m0 150h0m0 -200h0m0 100h0m0 -50h0m0 140h0m0 -150h0m0 70h0m0 -20h0m0 -20h0m10 30h0m0 70h0m0 -30h0m0 -160h0m0 200h0m0 -30h0m0 20h0m0 -90h0m0 30h0m10 0h0m0 80h0m0 -230h0m0 90h0m0 60h0m0 -40h0m0 30h0m0 30h0m10 -120h0m0 40h0m0 80h0m0 -40h0m0 10h0m0 0h0m0 60h0m0 -80h0m0 60h0m0 -130h0m0 0h0m10 40h0m0 60h0m0 30h0m0 30h0m0 -110h0m0 40h0m0 0h0m0 50h0m0 -110h0m0 170h0m0 -120h0m0 60h0m10 -60h0m0 120h0m0 -180h0m0 200h0m0 -110h0m0 -20h0m0 -50h0m0 20h0m0 10h0m0 20h0m0 -100h0m0 210h0m0 -190h0m10 80h0m0 -50h0m0 90h0m0 -180h0m0 230h0m0 -140h0m0 110h0m0 -100h0m0 -10h0m0 50h0m0 0h0m0 30h0m10 10h0m0 -10h0m0 -20h0m0 -20h0m0 60h0m0 -110h0m0 70h0m0 -20h0m0 10h0m0 10h0m0 30h0m0 -50h0m10 10h0m0 30h0m0 -80h0m0 60h0m0 20h0m0 -40h0m0 60h0m0 -10h0m0 -20h0m0 0h0m0 40h0m0 -150h0m0 150h0m0 -30h0m0 -90h0m10 10h0m0 -30h0m0 40h0m0 120h0m0 -20h0m0 -110h0m0 30h0m10 40h0m0 90h0m0 -120h0m0 30h0m0 -20h0m0 10h0m0 0h0m0 -40h0m0 40h0m0 0h0m0 50h0m0 -90h0m0 110h0m0 -120h0m0 -20h0m10 60h0m0 40h0m0 -80h0m0 70h0m0 -30h0m0 -30h0m10 60h0m0 -90h0m0 70h0m0 0h0m0 140h0m0 -180h0m0 130h0m0 -100h0m0 30h0m0 0h0m0 100h0m10 -110h0m0 -30h0m0 50h0m0 -10h0m0 -110h0m0 190h0m0 -160h0m0 110h0m10 -30h0m0 -80h0m0 60h0m0 20h0m0 -180h0m0 60h0m0 70h0m0 0h0m0 70h0m0 -40h0m10 -40h0m0 20h0m0 10h0m0 -10h0m0 50h0m0 -40h0m0 -100h0m10 220h0m0 -60h0m0 -30h0m0 -60h0m0 60h0m0 -30h0m0 20h0m0 -110h0m0 120h0m0 10h0m0 -50h0m0 50h0m0 -20h0m0 100h0m10 -70h0m0 -40h0m0 60h0m0 -70h0m0 30h0m0 -60h0m0 -130h0m0 150h0m0 -40h0m0 50h0m10 0h0m0 20h0m0 30h0m0 10h0m0 -70h0m0 80h0m10 -70h0m0 -60h0m0 100h0m0 20h0m0 -60h0m0 -20h0m10 200h0m0 -60h0m0 -110h0m0 50h0m0 -50h0m0 -60h0m0 -60h0m0 140h0m0 -10h0m0 0h0m0 -130h0m0 20h0m0 170h0m10 -20h0m0 30h0m0 -60h0m0 90h0m0 -160h0m0 -10h0m0 20h0m0 70h0m0 -20h0m0 -70h0m10 50h0m0 50h0m0 -50h0m0 70h0m0 -60h0m0 -150h0m0 260h0m0 -140h0m0 10h0m0 -30h0m10 20h0m0 50h0m0 -20h0m0 -20h0m0 90h0m0 -50h0m0 100h0m0 -100h0m0 10h0m0 10h0m0 -60h0m0 -30h0m0 60h0m0 -140h0m0 200h0m0 -90h0m0 -110h0m10 130h0m0 -20h0m0 -80h0m0 90h0m0 70h0m0 -70h0m0 -50h0m0 60h0m0 20h0m10 0h0m0 -60h0m0 50h0m0 -130h0m0 140h0m0 -60h0m0 -50h0m0 40h0m10 130h0m0 -120h0m0 40h0m0 -10h0m0 30h0m0 -50h0m0 -10h0m0 70h0m0 30h0m10 -120h0m0 -10h0m0 -30h0m0 60h0m0 30h0m10 30h0m0 -120h0m0 10h0m0 -70h0m0 150h0m0 -10h0m0 -110h0m0 150h0m0 30h0m0 -70h0m0 -80h0m10 -20h0m0 100h0m0 -30h0m0 80h0m0 -200h0m0 -10h0m0 110h0m10 40h0m0 -70h0m0 0h0m0 70h0m0 40h0m0 -20h0m0 -190h0m0 210h0m0 -40h0m10 -40h0m0 30h0m0 0h0m0 -50h0m0 10h0m0 -70h0m0 110h0m0 -40h0m0 -30h0m0 30h0m0 30h0m10 -10h0m0 120h0m0 -160h0m0 10h0m0 20h0m0 -90h0m0 210h0m0 -130h0m0 60h0m0 -70h0m0 130h0m0 -80h0m0 -90h0m0 50h0m10 10h0m0 -30h0m0 -10h0m0 20h0m0 80h0m0 10h0m0 -140h0m0 -40h0m0 -30h0m10 90h0m0 50h0m0 -50h0m0 60h0m0 -100h0m0 30h0m0 210h0m0 -180h0m0 20h0m0 110h0m0 -20h0m10 -50h0m0 -40h0m0 30h0m0 -50h0m0 150h0m0 -100h0m0 -20h0m0 -30h0m0 50h0m0 80h0m10 -150h0m0 100h0m0 -70h0m0 70h0m0 -30h0m0 70h0m0 -20h0m0 0h0m0 -80h0m0 -60h0m0 0h0m0 70h0m0 20h0m10 170h0m0 -180h0m0 10h0m0 -10h0m0 40h0m0 -70h0m0 -40h0m0 80h0m10 -110h0m0 50h0m0 0h0m0 50h0m0 140h0m0 -140h0m0 20h0m0 -60h0m0 50h0m10 0h0m0 120h0m0 -100h0m0 -40h0m0 30h0m0 -90h0m0 110h0m0 -20h0m0 20h0m10 -20h0m0 60h0m0 -70h0m0 30h0m0 -30h0m0 -30h0m0 50h0m0 -60h0m0 130h0m0 -100h0m0 110h0m10 -90h0m0 20h0m0 30h0m0 70h0m0 -130h0m0 -40h0m0 120h0m0 -40h0m0 40h0m0 -20h0m0 -110h0m0 50h0m0 40h0m10 30h0m0 0h0m0 -110h0m0 40h0m0 0h0m0 20h0m0 -30h0m0 190h0m0 -140h0m0 80h0m0 -80h0m0 -40h0m0 100h0m10 30h0m0 -10h0m0 -210h0m0 220h0m0 -110h0m0 -70h0m0 150h0m0 -60h0m0 170h0m0 -110h0m0 -30h0m10 40h0m0 -60h0m0 -90h0m0 100h0m0 30h0m0 -20h0m0 -40h0m0 50h0m0 -50h0m10 20h0m0 150h0m0 -110h0m0 70h0m0 -20h0m0 20h0m0 -30h0m0 -60h0m0 40h0m0 -100h0m0 110h0m0 20h0m10 20h0m0 -40h0m0 -30h0m0 -100h0m0 100h0m0 -30h0m0 90h0m0 -120h0m0 -10h0m0 20h0m0 -10h0m0 30h0m0 -30h0m0 90h0m10 60h0m0 -50h0m0 -70h0m0 -100h0m0 70h0m0 -30h0m0 130h0m0 -20h0m0 60h0m0 -110h0m0 -20h0m0 10h0m10 80h0m0 -40h0m0 -50h0m0 40h0m0 -50h0m0 60h0m0 -10h0m0 -50h0m0 50h0m0 -50h0m0 40h0m0 -10h0m10 -30h0m0 50h0m0 40h0m0 70h0m0 -80h0m0 10h0m0 -60h0m0 -40h0m0 50h0m0 -110h0m0 110h0m0 -60h0m0 40h0m10 0h0m0 10h0m0 120h0m0 -80h0m0 -80h0m0 140h0m0 -130h0m10 30h0m0 -50h0m0 40h0m0 120h0m0 -190h0m0 90h0m0 -40h0m0 50h0m0 -30h0m0 -70h0m10 -30h0m0 60h0m0 -40h0m0 120h0m0 -30h0m0 140h0m0 -210h0m0 30h0m10 60h0m0 20h0m0 -40h0m0 -140h0m0 80h0m0 -70h0m0 80h0m0 30h0m0 0h0m0 -90h0m0 50h0m10 30h0m0 -110h0m0 240h0m0 -170h0m0 20h0m0 -140h0m0 190h0m0 -70h0m0 0h0m0 10h0m10 110h0m0 -180h0m0 40h0m0 -10h0m0 -40h0m0 0h0m0 140h0m0 -60h0m0 -70h0m0 80h0m0 -90h0m0 120h0m0 -160h0m0 70h0m10 10h0m0 50h0m0 -10h0m0 0h0m0 -20h0m0 0h0m0 10h0m0 20h0m0 10h0m0 -30h0m0 -30h0m0 70h0m0 -50h0m0 70h0m0 -90h0m0 -90h0m0 160h0m0 -150h0m0 40h0m0 90h0m10 -30h0m0 -10h0m0 -50h0m0 120h0m0 -70h0m0 -60h0m10 90h0m0 -20h0m0 40h0m0 50h0m0 -30h0m0 -40h0m0 -100h0m0 -20h0m0 120h0m0 -10h0m10 -30h0m0 10h0m0 20h0m0 -40h0m0 40h0m0 -70h0m0 110h0m0 -40h0m0 -130h0m0 110h0m0 50h0m0 -40h0m10 -30h0m0 -10h0m0 10h0m0 -70h0m0 130h0m0 -80h0m10 70h0m0 -20h0m0 -80h0m0 70h0m0 100h0m0 -80h0m0 -80h0m0 110h0m0 -20h0m0 0h0m0 -60h0m0 40h0m0 60h0m10 -60h0m0 80h0m0 -150h0m0 110h0m0 -110h0m0 -40h0m0 110h0m0 110h0m0 -140h0m0 -30h0m0 80h0m10 0h0m0 -20h0m0 10h0m0 -10h0m0 20h0m0 -10h0m0 20h0m0 -80h0m0 40h0m0 70h0m10 100h0m0 -100h0m0 -100h0m0 90h0m0 -20h0m0 0h0m0 -100h0m0 130h0m0 30h0m0 -10h0m0 30h0m0 -140h0m0 130h0m0 -110h0m0 30h0m0 10h0m10 -40h0m0 110h0m0 -90h0m0 40h0m0 -20h0m0 60h0m0 -40h0m0 30h0m0 -40h0m0 -40h0m10 10h0m0 50h0m0 10h0m0 -80h0m0 -30h0m0 30h0m0 120h0m0 -50h0m0 -30h0m0 -20h0m0 -60h0m0 130h0m10 -40h0m0 -60h0m0 90h0m0 -80h0m0 110h0m0 -80h0m0 50h0m10 60h0m0 -30h0m0 -80h0m0 110h0m0 70h0m0 -140h0m0 0h0m0 50h0m0 -200h0m10 100h0m0 40h0m0 90h0m0 -40h0m0 20h0m0 -10h0m0 -60h0m0 20h0m0 -30h0m0 70h0m10 -140h0m0 140h0m0 0h0m0 -10h0m0 -20h0m0 -120h0m0 110h0m0 50h0m0 -90h0m0 120h0m0 -200h0m0 140h0m0 0h0m0 40h0m0 -40h0m0 -50h0m0 -10h0m0 60h0m0 110h0m10 -160h0m0 0h0m0 10h0m0 70h0m0 -140h0m0 90h0m0 10h0m0 -30h0m0 -40h0m0 -20h0m0 130h0m0 10h0m10 -10h0m0 -10h0m0 -120h0m0 70h0m0 -30h0m0 140h0m0 -220h0m0 200h0m0 -110h0m0 -40h0m0 140h0m0 50h0m0 -130h0m10 100h0m0 -70h0m0 0h0m0 -80h0m0 30h0m0 40h0m0 -50h0m0 20h0m10 0h0m0 -10h0m0 80h0m0 30h0m0 -110h0m0 40h0m0 50h0m0 -10h0m0 -110h0m0 160h0m0 -100h0m10 50h0m0 40h0m0 -90h0m0 20h0m0 20h0m0 30h0m0 -70h0m0 0h0m0 -20h0m0 70h0m10 -70h0m0 -20h0m0 50h0m0 50h0m0 60h0m0 -190h0m0 30h0m0 0h0m10 40h0m0 0h0m0 -40h0m0 20h0m0 -40h0m0 140h0m0 -70h0m0 40h0m0 -110h0m10 40h0m0 30h0m0 -40h0m0 70h0m0 -50h0m0 40h0m0 60h0m0 -70h0m0 -140h0m10 160h0m0 50h0m0 -140h0m0 50h0m0 30h0m0 -30h0m0 40h0m0 -110h0m0 40h0m0 70h0m10 -190h0m0 170h0m0 80h0m0 -180h0m0 80h0m0 -20h0m0 60h0m0 -10h0m0 -70h0m0 -90h0m0 90h0m0 -10h0m0 110h0m0 -140h0m10 60h0m0 20h0m0 -20h0m0 40h0m0 30h0m0 80h0m0 -160h0m0 -20h0m0 90h0m0 -110h0m0 100h0m10 0h0m0 50h0m0 -110h0m0 -40h0m0 40h0m0 60h0m0 0h0m10 0h0m0 -140h0m0 -30h0m0 100h0m0 40h0m0 -40h0m0 -20h0m0 -50h0m10 160h0m0 -70h0m0 10h0m0 100h0m0 -100h0m0 80h0m0 -130h0m0 30h0m0 -20h0m10 20h0m0 40h0m0 70h0m0 0h0m0 -130h0m0 -140h0m0 160h0m0 -20h0m0 -10h0m0 -10h0m0 0h0m0 10h0m0 50h0m0 10h0m10 -60h0m0 0h0m0 120h0m0 -230h0m0 230h0m0 -80h0m0 50h0m0 -150h0m10 130h0m0 -50h0m0 20h0m0 -20h0m0 0h0m0 -30h0m0 80h0m0 -80h0m0 70h0m0 -20h0m0 20h0m0 -80h0m0 70h0m10 20h0m0 -50h0m0 -20h0m0 0h0m0 30h0m0 10h0m0 80h0m0 -160h0m0 70h0m0 50h0m0 -90h0m0 60h0m0 -20h0m0 -40h0m0 50h0m10 40h0m0 -50h0m0 10h0m0 80h0m0 -100h0m0 -30h0m0 80h0m10 -50h0m0 -20h0m0 0h0m0 30h0m0 210h0m0 -230h0m0 -30h0m0 10h0m0 140h0m0 -170h0m0 -10h0m0 190h0m0 -10h0m0 -70h0m0 -50h0m0 20h0m10 -60h0m0 20h0m0 -40h0m0 -30h0m0 130h0m0 -70h0m0 90h0m0 -50h0m0 70h0m0 -140h0m10 70h0m0 10h0m0 -80h0m0 80h0m0 30h0m0 90h0m0 -70h0m0 -160h0m0 170h0m0 -140h0m10 110h0m0 -120h0m0 60h0m0 50h0m0 -10h0m0 -40h0m0 40h0m0 -90h0m10 0h0m0 220h0m0 -170h0m0 -10h0m0 -30h0m0 70h0m0 -50h0m0 80h0m0 -10h0m0 0h0m0 10h0m10 -100h0m0 -10h0m0 -40h0m0 100h0m0 40h0m0 50h0m0 -160h0m0 40h0m0 20h0m10 -200h0m0 200h0m0 0h0m0 30h0m0 40h0m0 -150h0m10 70h0m0 -10h0m0 -20h0m0 160h0m0 -70h0m0 0h0m0 -120h0m0 110h0m10 50h0m0 -40h0m0 -30h0m0 30h0m0 -90h0m0 -30h0m0 90h0m0 80h0m0 -130h0m0 170h0m0 -20h0m0 -110h0m0 -50h0m10 0h0m0 80h0m0 -60h0m0 120h0m0 -10h0m0 -90h0m0 70h0m0 20h0m0 -60h0m0 -100h0m0 50h0m0 -50h0m10 100h0m0 10h0m0 -70h0m0 170h0m0 -140h0m0 180h0m0 -130h0m0 -40h0m0 20h0m0 -40h0m0 20h0m0 110h0m0 -20h0m0 -230h0m0 250h0m0 -60h0m0 -10h0m10 -30h0m0 -30h0m0 160h0m0 -100h0m0 -130h0m0 30h0m0 70h0m0 -40h0m0 0h0m0 130h0m10 -90h0m0 90h0m0 -120h0m0 -90h0m0 130h0m0 50h0m0 -120h0m0 160h0m0 -60h0m0 60h0m0 -130h0m0 50h0m10 -150h0m0 80h0m0 150h0m0 -50h0m0 10h0m0 -160h0m0 140h0m10 70h0m0 -40h0m0 -30h0m0 40h0m0 -40h0m0 90h0m0 -140h0m0 30h0m10 -10h0m0 -60h0m0 60h0m0 80h0m0 -40h0m0 -40h0m0 90h0m0 -80h0m0 10h0m10 10h0m0 50h0m0 20h0m0 -100h0m0 120h0m0 -100h0m0 -30h0m0 110h0m0 -80h0m0 30h0m0 -50h0m0 110h0m0 -20h0m10 -20h0m0 -60h0m0 100h0m0 -10h0m0 20h0m10 -190h0m0 170h0m0 0h0m0 -60h0m0 50h0m0 -10h0m0 -40h0m0 20h0m0 -130h0m0 70h0m10 60h0m0 -40h0m0 70h0m0 -10h0m0 -110h0m0 150h0m10 -40h0m0 10h0m0 -80h0m0 50h0m0 40h0m0 40h0m0 -40h0m0 -100h0m0 0h0m0 50h0m0 30h0m0 20h0m0 -90h0m0 170h0m10 -170h0m0 -60h0m0 110h0m0 -130h0m0 190h0m0 10h0m10 -150h0m0 40h0m0 10h0m0 -80h0m0 30h0m0 0h0m0 -10h0m0 70h0m0 -30h0m0 150h0m0 -60h0m0 -130h0m10 20h0m0 110h0m0 -90h0m0 30h0m0 60h0m0 -10h0m0 -40h0m0 100h0m0 -150h0m0 -30h0m0 50h0m10 20h0m0 10h0m0 70h0m0 -40h0m0 -30h0m0 -80h0m0 90h0m0 -110h0m0 80h0m0 40h0m0 -70h0m10 60h0m0 -70h0m0 40h0m0 -100h0m0 10h0m0 50h0m0 -50h0m0 80h0m0 90h0m0 -60h0m0 -60h0m0 -10h0m0 60h0m0 -90h0m0 0h0m0 70h0m0 20h0m0 90h0m10 -170h0m0 70h0m0 10h0m0 20h0m0 -90h0m0 70h0m0 -40h0m0 -60h0m0 -40h0m10 70h0m0 180h0m0 -120h0m0 0h0m0 -70h0m0 100h0m0 -200h0m0 150h0m0 10h0m0 -10h0m10 40h0m0 10h0m0 -60h0m0 -80h0m0 80h0m0 -30h0m10 60h0m0 -110h0m0 20h0m0 80h0m0 -40h0m0 -40h0m0 60h0m0 -30h0m0 -30h0m0 120h0m0 -90h0m10 -20h0m0 70h0m0 -130h0m0 90h0m0 160h0m0 -170h0m0 -50h0m0 40h0m0 0h0m0 -20h0m0 140h0m0 -10h0m0 -40h0m0 -40h0m0 -70h0m0 20h0m0 40h0m10 -130h0m0 130h0m0 -70h0m0 90h0m0 0h0m0 -60h0m0 160h0m0 -180h0m0 -10h0m0 10h0m0 70h0m0 -100h0m10 80h0m0 -50h0m0 -40h0m0 130h0m0 -20h0m10 10h0m0 20h0m0 -160h0m0 80h0m0 90h0m0 -20h0m0 40h0m0 -70h0m0 30h0m0 -20h0m0 -20h0m0 -30h0m10 -80h0m0 100h0m0 30h0m0 -70h0m0 50h0m0 30h0m0 -20h0m0 -30h0m10 90h0m0 0h0m0 -130h0m0 80h0m0 0h0m0 60h0m0 -170h0m0 100h0m0 10h0m0 40h0m0 -130h0m0 140h0m0 -130h0m0 60h0m0 60h0m0 -70h0m0 20h0m10 10h0m0 40h0m0 -20h0m0 30h0m0 30h0m0 -150h0m0 160h0m0 -100h0m10 -50h0m0 80h0m0 0h0m0 10h0m0 60h0m0 -130h0m0 120h0m0 -80h0m0 20h0m0 -60h0m0 60h0m0 -50h0m10 70h0m0 10h0m0 -80h0m0 30h0m0 40h0m0 10h0m0 -70h0m0 0h0m0 -10h0m0 -30h0m10 -10h0m0 60h0m0 140h0m0 -50h0m0 60h0m0 -170h0m0 -10h0m10 -10h0m0 50h0m0 80h0m0 -60h0m0 140h0m0 -80h0m0 -110h0m0 60h0m0 50h0m0 30h0m0 -80h0m0 -30h0m0 -10h0m10 50h0m0 20h0m0 20h0m0 70h0m0 -80h0m0 50h0m0 -100h0m0 70h0m0 20h0m0 -120h0m0 80h0m0 -30h0m0 80h0m0 -40h0m10 -40h0m0 80h0m0 -100h0m0 -10h0m0 0h0m0 100h0m0 -110h0m0 130h0m0 -140h0m0 80h0m10 -40h0m0 30h0m0 50h0m0 50h0m0 10h0m0 -190h0m0 30h0m0 170h0m0 -130h0m0 40h0m10 -70h0m0 160h0m0 -70h0m0 60h0m0 10h0m0 -160h0m0 90h0m0 -90h0m0 50h0m0 90h0m0 -90h0m10 0h0m0 -110h0m0 110h0m0 -100h0m0 -20h0m0 100h0m0 -20h0m0 60h0m0 10h0m0 0h0m10 -120h0m0 70h0m0 110h0m0 70h0m0 -100h0m0 -30h0m0 -10h0m10 60h0m0 -20h0m0 20h0m0 -130h0m0 60h0m0 -20h0m0 10h0m0 40h0m0 -80h0m0 50h0m0 10h0m0 -20h0m10 20h0m0 -70h0m0 100h0m0 -90h0m0 -70h0m0 140h0m0 30h0m0 -40h0m0 10h0m10 -110h0m0 60h0m0 -60h0m0 40h0m0 70h0m0 -40h0m0 -70h0m0 50h0m0 60h0m0 20h0m0 -40h0m0 30h0m0 -160h0m0 200h0m10 -130h0m0 70h0m0 -50h0m0 50h0m0 -70h0m0 60h0m0 -20h0m0 -80h0m0 110h0m0 -40h0m0 -50h0m0 140h0m0 -90h0m10 30h0m0 -140h0m0 40h0m0 80h0m0 -50h0m0 140h0m0 -20h0m0 -100h0m0 60h0m0 -50h0m0 80h0m0 -110h0m0 60h0m10 -30h0m0 -100h0m0 140h0m0 50h0m0 -70h0m0 -150h0m0 150h0m0 30h0m0 -30h0m0 0h0m0 10h0m0 -20h0m10 -80h0m0 50h0m0 10h0m0 20h0m0 -40h0m0 80h0m0 -110h0m0 -70h0m0 60h0m0 70h0m0 -70h0m0 60h0m0 30h0m0 -30h0m0 -10h0m10 -60h0m0 20h0m0 -20h0m0 50h0m10 100h0m0 -40h0m0 -80h0m0 60h0m0 -70h0m0 100h0m0 -120h0m0 120h0m10 -100h0m0 -20h0m0 50h0m0 -80h0m0 20h0m0 60h0m0 -70h0m10 60h0m0 0h0m0 -40h0m0 40h0m0 130h0m0 -70h0m0 -140h0m0 -20h0m0 20h0m0 120h0m10 70h0m0 -130h0m0 -60h0m0 80h0m0 100h0m0 -140h0m0 30h0m0 40h0m0 -70h0m0 110h0m0 -130h0m0 70h0m0 40h0m10 -150h0m0 90h0m0 90h0m0 -130h0m0 40h0m0 -50h0m0 150h0m0 0h0m10 -70h0m0 -10h0m0 -60h0m0 20h0m0 -50h0m0 60h0m0 10h0m0 -30h0m0 -30h0m0 20h0m0 100h0m10 -90h0m0 20h0m0 0h0m0 80h0m0 -170h0m0 60h0m0 90h0m0 -30h0m0 -40h0m0 30h0m0 30h0m0 -50h0m10 70h0m0 10h0m0 -60h0m0 -80h0m0 30h0m0 110h0m10 -150h0m0 60h0m0 30h0m0 80h0m0 40h0m0 -90h0m0 80h0m0 -80h0m0 -90h0m0 120h0m0 -130h0m10 20h0m0 0h0m0 70h0m0 -50h0m0 -40h0m0 60h0m0 50h0m0 -130h0m0 100h0m0 -70h0m10 10h0m0 80h0m0 -20h0m0 160h0m0 -130h0m0 -150h0m0 150h0m0 -10h0m0 0h0m0 20h0m0 -40h0m0 50h0m0 -150h0m10 120h0m0 -10h0m0 -120h0m0 170h0m0 -140h0m0 50h0m0 110h0m0 -90h0m0 60h0m0 -20h0m0 20h0m0 -30h0m0 -40h0m0 150h0m10 -110h0m0 -20h0m0 -10h0m0 40h0m0 60h0m0 -80h0m0 -10h0m0 -30h0m0 -60h0m0 70h0m0 -60h0m0 90h0m0 -70h0m10 80h0m0 -30h0m0 30h0m0 0h0m0 -60h0m0 20h0m0 50h0m0 -30h0m0 -60h0m0 0h0m0 100h0m10 -30h0m0 -10h0m0 10h0m0 -40h0m0 30h0m0 -70h0m0 60h0m10 60h0m0 -20h0m0 -100h0m0 170h0m0 -100h0m0 -100h0m0 60h0m0 170h0m0 -80h0m0 -130h0m0 220h0m0 -150h0m0 -60h0m0 150h0m10 10h0m0 -70h0m0 -50h0m0 40h0m0 0h0m0 -20h0m0 -20h0m0 90h0m0 -20h0m0 10h0m0 -50h0m10 -40h0m0 -40h0m0 130h0m0 -30h0m0 110h0m0 -40h0m0 -70h0m0 -70h0m0 10h0m0 130h0m0 -40h0m0 -130h0m0 70h0m10 10h0m0 -10h0m0 40h0m0 -40h0m0 10h0m0 70h0m0 50h0m0 -90h0m0 -80h0m0 130h0m10 -50h0m0 -20h0m0 -50h0m0 60h0m0 80h0m0 -100h0m0 60h0m0 -30h0m0 -80h0m0 50h0m10 30h0m0 -90h0m0 80h0m0 80h0m0 -20h0m0 -90h0m0 10h0m0 150h0m0 20h0m0 -140h0m0 0h0m0 130h0m0 -140h0m0 10h0m10 110h0m0 -70h0m0 -100h0m0 90h0m0 40h0m0 -50h0m0 -120h0m0 210h0m0 -110h0m0 -30h0m10 -10h0m0 -40h0m0 190h0m0 -180h0m0 0h0m0 60h0m0 40h0m0 50h0m0 -20h0m0 -20h0m0 10h0m0 -70h0m10 120h0m0 -80h0m0 -80h0m0 100h0m0 20h0m0 -190h0m0 70h0m10 160h0m0 -120h0m0 0h0m0 40h0m0 0h0m0 -80h0m0 70h0m0 0h0m0 50h0m0 -130h0m0 60h0m10 20h0m0 -20h0m0 50h0m0 20h0m0 0h0m0 -190h0m0 120h0m0 -10h0m0 0h0m0 70h0m10 -20h0m0 -40h0m0 30h0m0 -10h0m0 -80h0m0 40h0m0 -20h0m10 50h0m0 90h0m0 -20h0m0 -190h0m0 260h0m0 -180h0m0 -50h0m0 0h0m0 0h0m0 160h0m0 -90h0m0 110h0m0 -100h0m0 -30h0m10 -30h0m0 130h0m0 0h0m0 -40h0m0 50h0m0 -140h0m0 20h0m0 40h0m0 10h0m0 70h0m10 -130h0m0 -70h0m0 140h0m0 20h0m0 -60h0m0 60h0m0 -20h0m0 -40h0m0 40h0m0 -50h0m0 60h0m0 -60h0m10 110h0m0 -180h0m0 0h0m0 110h0m0 -30h0m0 100h0m0 -60h0m0 -130h0m0 140h0m0 80h0m0 -100h0m0 -50h0m0 70h0m0 -20h0m10 -30h0m0 10h0m0 60h0m0 -110h0m0 0h0m0 50h0m0 -20h0m0 -120h0m0 110h0m0 50h0m0 -70h0m0 140h0m0 -140h0m10 110h0m0 -10h0m0 0h0m0 -70h0m0 -30h0m0 50h0m0 -60h0m0 0h0m0 50h0m0 -90h0m0 0h0m10 60h0m0 -40h0m0 10h0m0 140h0m0 -110h0m0 120h0m0 -130h0m0 -10h0m0 50h0m0 -80h0m0 130h0m0 -140h0m10 30h0m0 70h0m0 -40h0m0 70h0m0 -80h0m0 30h0m0 -120h0m0 170h0m0 -140h0m0 70h0m0 90h0m0 -40h0m0 0h0m10 130h0m0 -110h0m0 -60h0m0 -40h0m0 -40h0m0 180h0m0 -70h0m0 50h0m0 -30h0m0 -90h0m0 60h0m0 20h0m10 -40h0m0 20h0m0 -60h0m0 -110h0m0 120h0m0 10h0m0 -30h0m0 60h0m0 -60h0m10 60h0m0 -80h0m0 0h0m0 100h0m0 -110h0m0 40h0m0 -10h0m0 50h0m0 -20h0m0 -40h0m0 50h0m0 0h0m0 -60h0m10 80h0m0 -40h0m0 -30h0m0 90h0m0 -70h0m0 -40h0m0 -10h0m0 120h0m0 -10h0m0 20h0m0 -50h0m0 40h0m0 -110h0m10 60h0m0 10h0m0 -110h0m0 190h0m0 -130h0m0 -30h0m0 -20h0m0 40h0m0 60h0m0 -120h0m10 110h0m0 -100h0m0 60h0m0 -50h0m0 110h0m0 0h0m0 110h0m0 -170h0m0 -60h0m10 110h0m0 -100h0m0 20h0m0 20h0m0 50h0m0 20h0m0 -60h0m0 0h0m0 70h0m0 -70h0m0 50h0m0 30h0m0 -30h0m10 -20h0m0 30h0m0 -80h0m0 60h0m0 60h0m0 60h0m0 -60h0m0 -70h0m0 90h0m0 -10h0m10 -100h0m0 -50h0m0 50h0m0 -160h0m0 290h0m0 -40h0m0 -200h0m0 190h0m0 -50h0m0 -80h0m0 100h0m0 10h0m0 -10h0m0 -40h0m0 -10h0m0 70h0m10 -40h0m0 -110h0m0 100h0m10 60h0m0 -80h0m0 120h0m0 -70h0m0 -20h0m0 -70h0m0 30h0m0 70h0m0 -30h0m0 -50h0m0 0h0m0 50h0m0 30h0m10 -40h0m0 130h0m0 0h0m0 10h0m0 -130h0m0 -20h0m0 70h0m0 -70h0m10 60h0m0 -130h0m0 170h0m0 -40h0m0 10h0m0 -60h0m0 70h0m0 -20h0m0 -20h0m10 30h0m0 -60h0m0 -120h0m0 190h0m0 100h0m0 -230h0m0 120h0m0 10h0m0 10h0m0 -10h0m0 70h0m0 -210h0m0 20h0m0 200h0m10 -100h0m0 50h0m0 -30h0m0 10h0m0 -30h0m0 -10h0m0 0h0m0 -60h0m0 110h0m0 80h0m0 -150h0m0 30h0m0 -30h0m0 90h0m0 -20h0m0 -90h0m0 110h0m10 -50h0m0 -60h0m0 90h0m0 20h0m0 -170h0m0 140h0m0 -30h0m0 30h0m0 20h0m0 -70h0m0 40h0m0 50h0m0 -110h0m10 130h0m0 -30h0m0 -20h0m0 -120h0m0 40h0m0 10h0m0 0h0m0 20h0m0 50h0m0 20h0m0 70h0m0 -30h0m0 -60h0m10 0h0m0 -60h0m0 80h0m0 60h0m0 -190h0m10 120h0m0 90h0m0 -220h0m10 170h0m0 -110h0m0 150h0m0 -80h0m0 0h0m10 -20h0m0 110h0m0 -170h0m0 40h0m0 40h0m0 0h0m0 40h0m10 -20h0m0 -50h0m0 -30h0m0 40h0m0 10h0m10 -100h0m0 190h0m0 30h0m0 -150h0m0 10h0m0 50h0m0 -80h0m0 -20h0m0 -20h0m0 70h0m0 -70h0m10 20h0m0 40h0m0 -10h0m0 100h0m0 -190h0m0 60h0m0 80h0m0 -130h0m0 190h0m0 -190h0m0 60h0m0 40h0m0 40h0m0 -110h0m10 -10h0m0 80h0m0 -50h0m0 -80h0m0 190h0m0 -150h0m0 120h0m0 -110h0m0 -20h0m10 70h0m0 -60h0m0 -90h0m0 230h0m0 -210h0m0 110h0m0 40h0m0 -20h0m0 -50h0m0 -80h0m0 90h0m0 -10h0m0 60h0m0 40h0m10 -130h0m0 70h0m0 140h0m0 -170h0m0 50h0m0 20h0m0 -10h0m0 -110h0m0 120h0m0 -90h0m0 60h0m0 50h0m10 -160h0m0 40h0m0 -50h0m0 80h0m0 -40h0m0 -80h0m0 150h0m0 -80h0m0 40h0m0 -20h0m0 90h0m0 -40h0m0 100h0m0 -130h0m10 -10h0m0 60h0m0 -130h0m0 60h0m0 10h0m0 90h0m0 -70h0m0 -60h0m0 110h0m0 0h0m0 -40h0m0 -10h0m10 -40h0m0 20h0m0 80h0m0 -110h0m0 40h0m0 -30h0m0 100h0m0 -40h0m0 -20h0m0 -30h0m10 20h0m0 80h0m0 -160h0m0 100h0m0 -10h0m0 -90h0m0 100h0m10 -10h0m0 -50h0m0 10h0m0 110h0m0 -80h0m0 -90h0m0 -140h0m0 280h0m0 -140h0m10 30h0m0 30h0m0 -40h0m0 120h0m0 -40h0m0 30h0m0 -80h0m0 -40h0m0 90h0m10 -40h0m0 -40h0m0 90h0m0 10h0m0 130h0m0 -100h0m0 -80h0m0 60h0m10 10h0m0 -150h0m0 80h0m0 -40h0m0 -10h0m0 50h0m0 -40h0m0 120h0m0 -130h0m0 90h0m10 50h0m0 70h0m0 -220h0m0 170h0m0 -150h0m0 120h0m0 -70h0m0 -60h0m10 70h0m0 70h0m0 -50h0m0 0h0m0 50h0m0 -40h0m0 40h0m0 -50h0m0 -50h0m0 -30h0m0 120h0m0 -40h0m0 -60h0m0 -30h0m0 40h0m0 -50h0m10 40h0m0 130h0m0 -30h0m0 -170h0m0 140h0m10 -20h0m0 70h0m0 -30h0m0 -40h0m0 50h0m0 -180h0m0 170h0m10 -120h0m0 150h0m0 10h0m0 40h0m0 -80h0m0 -20h0m0 80h0m0 -20h0m0 -190h0m0 110h0m0 10h0m0 20h0m10 -50h0m0 110h0m0 -20h0m0 0h0m0 30h0m0 -40h0m0 -110h0m0 80h0m0 -60h0m0 120h0m10 -130h0m0 40h0m0 10h0m0 70h0m0 70h0m0 -130h0m0 50h0m0 10h0m10 -40h0m0 40h0m0 -160h0m0 110h0m0 20h0m0 -40h0m0 -30h0m0 110h0m0 -40h0m0 0h0m0 -70h0m10 60h0m0 50h0m0 -80h0m0 10h0m0 10h0m0 10h0m0 80h0m0 -70h0m0 20h0m0 10h0m0 -30h0m10 40h0m0 -30h0m0 0h0m0 -70h0m0 20h0m0 30h0m0 -40h0m10 -10h0m0 20h0m0 20h0m0 20h0m0 70h0m10 -70h0m0 -90h0m0 50h0m0 40h0m0 40h0m0 -20h0m0 30h0m0 -80h0m0 30h0m0 -130h0m0 190h0m0 -10h0m0 -130h0m0 70h0m0 -50h0m0 60h0m10 -10h0m0 40h0m0 130h0m0 -160h0m0 160h0m0 -220h0m0 30h0m0 -20h0m0 -50h0m10 -40h0m0 130h0m0 10h0m0 0h0m0 -60h0m0 190h0m0 -100h0m0 -10h0m0 10h0m0 -100h0m0 50h0m10 -10h0m0 -20h0m0 50h0m0 20h0m0 -70h0m0 120h0m0 -60h0m0 90h0m0 -50h0m0 -70h0m0 -40h0m0 140h0m0 -100h0m0 80h0m0 -50h0m0 20h0m0 -100h0m0 140h0m0 -50h0m10 40h0m0 -90h0m0 30h0m0 110h0m0 -100h0m0 80h0m0 -150h0m0 40h0m0 60h0m10 0h0m0 60h0m0 -50h0m0 -100h0m0 140h0m0 -50h0m0 -60h0m0 -60h0m0 40h0m0 40h0m10 -60h0m0 90h0m0 -130h0m0 50h0m0 20h0m0 -10h0m0 30h0m0 10h0m0 100h0m0 -70h0m0 40h0m0 40h0m0 -110h0m0 60h0m10 -20h0m0 -110h0m0 40h0m0 40h0m0 0h0m0 20h0m0 -20h0m0 -30h0m0 80h0m0 -60h0m0 50h0m0 -10h0m0 -50h0m0 50h0m0 -50h0m10 -10h0m0 -80h0m0 100h0m0 50h0m0 -30h0m0 10h0m0 -80h0m0 0h0m0 130h0m0 20h0m0 0h0m0 -200h0m10 80h0m0 50h0m0 -50h0m0 30h0m0 60h0m0 70h0m0 -80h0m0 -100h0m0 10h0m0 50h0m0 50h0m0 -190h0m0 120h0m10 -20h0m0 40h0m0 -90h0m0 -30h0m0 150h0m0 -130h0m0 80h0m0 20h0m0 20h0m0 -90h0m0 50h0m0 30h0m0 60h0m10 -140h0m0 80h0m0 -10h0m0 -50h0m0 40h0m0 0h0m0 -50h0m0 60h0m0 -20h0m0 -50h0m0 20h0m10 10h0m0 0h0m0 -60h0m0 40h0m0 80h0m0 -90h0m0 70h0m0 50h0m0 0h0m0 60h0m0 -100h0m0 70h0m0 -160h0m0 80h0m0 20h0m0 -10h0m0 10h0m10 -30h0m0 30h0m0 -40h0m0 10h0m0 -10h0m0 110h0m0 -60h0m0 -100h0m0 -30h0m0 60h0m0 80h0m0 -20h0m0 -170h0m0 240h0m0 -130h0m10 -60h0m0 170h0m0 -40h0m0 -70h0m0 100h0m0 -40h0m0 -60h0m10 70h0m0 -110h0m0 80h0m0 0h0m0 70h0m0 -100h0m0 -40h0m0 30h0m0 90h0m0 -90h0m0 60h0m0 -50h0m10 -20h0m0 50h0m0 -70h0m0 50h0m0 -10h0m0 -20h0m0 30h0m0 -60h0m0 100h0m0 -110h0m0 110h0m0 -10h0m0 -30h0m0 -90h0m0 30h0m0 110h0m0 20h0m0 -10h0m0 -80h0m0 50h0m10 -110h0m0 20h0m0 60h0m0 -30h0m0 40h0m0 -10h0m0 70h0m0 -50h0m0 -10h0m0 -180h0m0 190h0m10 -10h0m0 -150h0m0 150h0m0 -140h0m0 40h0m0 160h0m10 -70h0m0 130h0m0 -160h0m0 30h0m0 30h0m0 0h0m0 -180h0m0 30h0m10 50h0m0 30h0m0 10h0m0 20h0m0 -30h0m0 -40h0m0 10h0m0 50h0m0 40h0m0 50h0m0 -150h0m10 40h0m0 0h0m0 -30h0m0 -100h0m0 200h0m0 -60h0m0 0h0m10 -100h0m0 120h0m0 -40h0m0 90h0m0 -100h0m0 70h0m10 -40h0m0 -30h0m0 40h0m0 10h0m0 -70h0m0 120h0m0 -60h0m0 60h0m10 -160h0m0 130h0m0 30h0m0 -70h0m0 -30h0m0 60h0m0 -80h0m0 -10h0m0 130h0m0 10h0m0 -30h0m0 -10h0m10 50h0m0 -60h0m0 50h0m0 -20h0m0 -140h0m0 90h0m0 -50h0m0 140h0m0 20h0m0 -90h0m0 10h0m0 50h0m0 -80h0m10 50h0m0 -20h0m0 -140h0m0 150h0m0 -40h0m0 130h0m0 -150h0m0 100h0m0 -40h0m0 40h0m10 30h0m0 -10h0m0 -130h0m0 -30h0m0 0h0m0 150h0m0 10h0m0 -110h0m0 80h0m10 -90h0m0 40h0m0 0h0m0 50h0m0 -10h0m0 -80h0m0 110h0m0 -40h0m0 40h0m0 20h0m0 -150h0m10 130h0m0 -40h0m0 -40h0m0 0h0m0 40h0m0 -60h0m10 30h0m0 40h0m0 -60h0m0 -20h0m0 20h0m0 60h0m0 -30h0m0 -40h0m0 90h0m10 -20h0m0 80h0m0 -110h0m0 40h0m0 50h0m0 -150h0m0 220h0m0 -70h0m0 20h0m0 -100h0m0 90h0m0 0h0m0 -60h0m10 -50h0m0 0h0m0 50h0m0 -30h0m0 50h0m0 -60h0m0 0h0m0 -30h0m0 130h0m0 -70h0m0 80h0m10 -40h0m0 -90h0m0 150h0m0 -120h0m0 10h0m0 70h0m0 -50h0m0 30h0m0 80h0m0 -150h0m0 110h0m0 -100h0m10 0h0m0 40h0m0 30h0m0 20h0m0 -20h0m10 0h0m0 -60h0m0 20h0m0 110h0m10 -100h0m0 -30h0m0 10h0m0 60h0m0 -20h0m0 -130h0m0 60h0m0 0h0m0 -80h0m0 180h0m0 -100h0m10 0h0m0 -10h0m0 130h0m0 -40h0m0 -40h0m0 -50h0m0 -20h0m0 -30h0m10 60h0m0 -70h0m0 100h0m0 -30h0m0 0h0m0 110h0m0 -50h0m0 -60h0m0 80h0m0 -40h0m0 -30h0m0 10h0m10 -40h0m0 -20h0m0 50h0m0 0h0m0 -100h0m0 50h0m0 0h0m0 80h0m0 -80h0m0 20h0m10 130h0m0 -80h0m0 -110h0m0 0h0m0 -50h0m0 70h0m0 110h0m0 -50h0m0 -40h0m0 0h0m0 50h0m10 10h0m0 -10h0m0 -100h0m0 90h0m0 -160h0m0 130h0m0 -10h0m0 110h0m0 -10h0m0 -70h0m0 70h0m0 -80h0m10 -20h0m0 -50h0m0 -20h0m0 100h0m0 70h0m0 -60h0m0 -130h0m0 110h0m0 40h0m10 0h0m0 -110h0m0 0h0m0 60h0m0 -150h0m0 80h0m0 70h0m0 -70h0m0 90h0m0 -50h0m0 80h0m10 -130h0m0 40h0m0 20h0m0 90h0m0 -120h0m0 30h0m0 20h0m0 10h0m0 60h0m0 -110h0m0 120h0m0 -90h0m10 0h0m0 50h0m0 -180h0m0 250h0m0 -170h0m0 60h0m0 60h0m0 -70h0m0 90h0m0 -150h0m0 10h0m10 -20h0m0 70h0m0 60h0m0 -130h0m0 -40h0m0 60h0m0 20h0m0 90h0m10 -60h0m0 80h0m0 -60h0m0 -10h0m0 -70h0m0 20h0m0 -90h0m0 100h0m0 -20h0m0 0h0m0 20h0m0 20h0m10 -70h0m0 80h0m0 20h0m0 -10h0m0 -140h0m0 70h0m0 30h0m0 30h0m10 -100h0m0 260h0m0 -150h0m0 -20h0m0 50h0m0 0h0m0 30h0m0 -130h0m0 30h0m0 -40h0m0 110h0m10 0h0m0 30h0m0 -130h0m0 110h0m10 -110h0m0 20h0m0 50h0m0 -50h0m0 30h0m0 10h0m0 -50h0m0 20h0m0 40h0m0 -40h0m0 -30h0m0 150h0m0 -90h0m10 40h0m0 -60h0m0 70h0m0 30h0m0 -30h0m0 -90h0m0 70h0m0 40h0m10 80h0m0 -110h0m0 -10h0m0 -40h0m0 -60h0m0 60h0m0 50h0m0 0h0m0 100h0m0 -70h0m0 -80h0m10 -70h0m0 80h0m0 80h0m0 -50h0m0 80h0m0 -50h0m0 -10h0m0 30h0m0 -70h0m10 120h0m0 -60h0m0 -40h0m0 100h0m0 -230h0m10 180h0m0 -10h0m0 10h0m0 50h0m0 -100h0m0 90h0m0 -110h0m0 60h0m10 70h0m0 -140h0m0 -60h0m0 130h0m0 30h0m0 -90h0m0 0h0m0 120h0m0 -40h0m10 -130h0m0 120h0m0 -120h0m0 110h0m0 60h0m0 -140h0m0 70h0m0 -90h0m0 140h0m10 -40h0m0 -40h0m0 -10h0m0 20h0m0 40h0m0 -20h0m0 80h0m0 10h0m0 -40h0m0 10h0m10 120h0m0 -180h0m0 40h0m0 70h0m0 -140h0m0 50h0m0 20h0m0 -90h0m0 40h0m0 -90h0m0 110h0m0 -10h0m0 -60h0m0 130h0m0 -50h0m0 70h0m0 -170h0m0 40h0m0 180h0m10 -120h0m0 0h0m0 -60h0m0 100h0m0 -130h0m0 130h0m0 -100h0m0 100h0m0 -30h0m0 50h0m10 -60h0m0 110h0m0 -60h0m0 -110h0m0 -10h0m0 30h0m0 30h0m0 150h0m0 -260h0m0 160h0m0 -90h0m0 30h0m0 30h0m0 70h0m10 -160h0m0 120h0m0 20h0m0 -50h0m0 -20h0m0 0h0m0 -60h0m10 110h0m0 -10h0m0 -110h0m0 120h0m0 0h0m0 -30h0m0 -20h0m0 40h0m10 -170h0m0 80h0m0 110h0m0 -40h0m0 -60h0m0 70h0m0 10h0m0 -210h0m0 100h0m0 120h0m0 0h0m0 -30h0m0 -40h0m0 0h0m0 50h0m10 50h0m0 -60h0m0 -60h0m0 30h0m0 120h0m0 -50h0m0 -130h0m0 20h0m0 20h0m0 -80h0m10 60h0m0 -10h0m0 10h0m0 20h0m0 40h0m0 -40h0m0 0h0m0 50h0m0 10h0m0 -20h0m10 -10h0m0 -100h0m0 60h0m0 0h0m0 -30h0m10 10h0m0 40h0m0 30h0m0 -90h0m0 -10h0m0 120h0m0 -110h0m0 50h0m0 -60h0m0 -40h0m0 60h0m0 -40h0m0 80h0m0 -30h0m0 20h0m0 -70h0m0 90h0m10 0h0m0 80h0m0 -140h0m0 90h0m0 -30h0m0 -120h0m0 10h0m0 -40h0m0 210h0m0 -120h0m0 100h0m0 -20h0m10 -110h0m0 70h0m0 90h0m0 -70h0m0 -220h0m0 240h0m0 -30h0m0 0h0m0 -70h0m0 80h0m0 60h0m0 -90h0m10 -20h0m0 120h0m0 -20h0m0 -100h0m0 30h0m0 40h0m0 -150h0m0 20h0m0 40h0m0 -130h0m10 160h0m0 20h0m0 -120h0m0 150h0m0 80h0m0 -90h0m0 10h0m0 -80h0m0 30h0m0 -10h0m10 0h0m0 -60h0m0 130h0m0 0h0m0 -30h0m0 30h0m0 -100h0m0 100h0m10 -140h0m0 160h0m0 20h0m0 -80h0m0 -120h0m0 120h0m0 -40h0m0 60h0m10 -60h0m0 -40h0m0 80h0m0 30h0m0 -150h0m0 150h0m0 -10h0m0 -50h0m10 60h0m0 -70h0m0 -90h0m0 70h0m0 70h0m0 -80h0m0 190h0m0 -180h0m0 60h0m0 -60h0m0 120h0m10 -50h0m0 -120h0m0 80h0m0 40h0m0 60h0m0 -100h0m0 30h0m0 -100h0m0 160h0m0 -120h0m10 -50h0m0 40h0m0 160h0m0 10h0m0 -80h0m0 60h0m0 -60h0m0 -60h0m10 50h0m0 0h0m0 20h0m0 -160h0m0 130h0m0 0h0m0 0h0m0 30h0m0 -120h0m0 100h0m0 -50h0m0 -50h0m0 120h0m0 -40h0m0 -20h0m0 10h0m10 50h0m0 60h0m0 -150h0m0 80h0m0 -10h0m0 30h0m0 -90h0m0 -70h0m0 90h0m0 70h0m10 -70h0m0 -20h0m0 -60h0m0 80h0m0 40h0m10 0h0m0 -30h0m0 30h0m0 -50h0m0 30h0m0 0h0m0 30h0m0 30h0m0 -70h0m0 90h0m0 -100h0m10 60h0m0 -130h0m0 50h0m0 70h0m0 -100h0m10 80h0m0 -70h0m0 60h0m0 20h0m0 70h0m0 60h0m0 -160h0m0 -50h0m0 60h0m10 150h0m0 -190h0m0 20h0m0 70h0m0 -50h0m0 -10h0m0 50h0m0 -110h0m0 150h0m0 -180h0m0 80h0m0 50h0m10 20h0m0 20h0m0 -70h0m0 20h0m0 -30h0m0 -100h0m0 100h0m0 -20h0m0 20h0m0 30h0m0 -70h0m0 -30h0m0 140h0m10 -130h0m0 10h0m0 150h0m0 -110h0m0 100h0m0 -110h0m0 150h0m0 -130h0m0 -20h0m0 70h0m10 -30h0m0 -50h0m0 -40h0m0 140h0m0 -40h0m0 40h0m0 -30h0m0 0h0m0 -30h0m0 -10h0m10 110h0m0 -20h0m0 -60h0m0 20h0m0 -50h0m0 70h0m0 10h0m0 10h0m0 -30h0m0 -70h0m0 20h0m0 30h0m0 -10h0m10 60h0m0 -20h0m0 60h0m0 -120h0m0 90h0m0 -60h0m0 -60h0m0 180h0m10 -80h0m0 30h0m0 -70h0m0 130h0m0 -130h0m0 -70h0m0 170h0m0 -90h0m0 0h0m0 20h0m0 -20h0m0 -90h0m0 20h0m10 190h0m0 -110h0m0 60h0m0 -10h0m0 -40h0m0 40h0m0 -140h0m0 90h0m0 -50h0m0 70h0m0 -50h0m0 50h0m10 0h0m0 -30h0m0 20h0m0 -90h0m0 80h0m0 80h0m0 -60h0m0 -10h0m0 -40h0m0 30h0m0 -90h0m0 60h0m0 -10h0m0 30h0m10 70h0m0 -40h0m0 50h0m0 -20h0m0 50h0m0 10h0m0 -130h0m0 110h0m0 -60h0m10 10h0m0 -140h0m0 110h0m0 100h0m0 -60h0m0 -30h0m0 -20h0m0 60h0m0 0h0m0 10h0m0 -120h0m0 130h0m0 -110h0m10 10h0m0 20h0m0 -70h0m0 190h0m0 -170h0m0 20h0m0 -100h0m0 90h0m0 0h0m10 60h0m0 -110h0m0 40h0m0 140h0m0 0h0m0 -60h0m10 -100h0m0 180h0m0 -60h0m0 -50h0m0 0h0m0 -100h0m0 -10h0m0 80h0m0 50h0m0 -50h0m10 40h0m0 -60h0m0 120h0m0 -140h0m0 120h0m0 -110h0m0 70h0m10 -80h0m0 120h0m0 -10h0m0 -80h0m0 -20h0m0 -80h0m0 30h0m0 70h0m0 40h0m0 10h0m10 -110h0m0 110h0m0 0h0m0 0h0m0 -50h0m0 -40h0m0 200h0m0 -190h0m10 130h0m0 -170h0m0 20h0m0 60h0m0 40h0m0 -100h0m0 20h0m10 40h0m0 40h0m0 -80h0m0 10h0m0 30h0m0 -40h0m0 -30h0m0 -140h0m0 160h0m0 30h0m10 -50h0m0 190h0m0 -180h0m0 0h0m0 -10h0m0 30h0m0 -20h0m0 60h0m0 -50h0m0 120h0m10 -120h0m0 150h0m0 -220h0m0 120h0m0 -10h0m0 -70h0m0 190h0m0 -100h0m0 -60h0m0 10h0m10 40h0m0 -10h0m0 10h0m0 -20h0m10 -50h0m0 -70h0m0 130h0m0 -120h0m0 10h0m0 50h0m0 160h0m0 -190h0m0 40h0m0 40h0m0 -70h0m0 -50h0m0 120h0m10 -30h0m0 -30h0m0 120h0m0 -100h0m10 30h0m0 -20h0m0 -40h0m0 -40h0m0 90h0m0 -40h0m0 -20h0m0 40h0m0 -50h0m10 -50h0m0 150h0m0 -50h0m0 100h0m0 10h0m0 -210h0m0 240h0m0 -220h0m0 0h0m0 70h0m0 10h0m0 0h0m10 130h0m0 -120h0m0 20h0m0 0h0m0 90h0m0 -100h0m0 60h0m10 -110h0m0 100h0m0 -100h0m0 40h0m0 20h0m0 20h0m0 -160h0m0 130h0m0 120h0m0 -110h0m10 -50h0m0 80h0m0 -30h0m0 -110h0m0 80h0m0 40h0m0 -150h0m0 60h0m0 10h0m0 180h0m10 -40h0m0 -120h0m0 60h0m0 10h0m0 -90h0m0 100h0m10 0h0m0 -50h0m0 30h0m0 20h0m0 30h0m0 -170h0m0 100h0m0 -10h0m0 -10h0m0 -10h0m0 90h0m0 -40h0m0 10h0m0 -40h0m0 90h0m0 20h0m10 -120h0m0 -30h0m0 70h0m0 -10h0m0 80h0m0 -10h0m0 -40h0m0 40h0m0 -40h0m0 20h0m10 80h0m0 -40h0m0 -60h0m0 110h0m0 -70h0m0 30h0m10 -20h0m0 0h0m0 -60h0m0 90h0m0 0h0m0 -50h0m0 20h0m0 10h0m0 30h0m0 -70h0m0 70h0m0 -40h0m10 20h0m0 -70h0m0 20h0m0 100h0m0 -70h0m0 -60h0m10 20h0m0 70h0m0 -20h0m0 20h0m0 20h0m0 10h0m0 -90h0m0 0h0m0 -10h0m0 30h0m0 10h0m10 10h0m0 20h0m0 70h0m0 -30h0m0 -160h0m0 -30h0m0 90h0m0 40h0m0 -10h0m0 100h0m0 -110h0m0 40h0m0 -60h0m10 20h0m0 -10h0m0 -10h0m0 40h0m0 10h0m0 50h0m0 -30h0m0 -40h0m10 20h0m0 -110h0m0 90h0m0 -160h0m0 220h0m0 -160h0m0 200h0m0 -100h0m0 0h0m0 -30h0m0 110h0m0 -120h0m10 -10h0m0 70h0m0 -10h0m0 -60h0m0 40h0m0 -40h0m0 0h0m0 20h0m10 70h0m0 -70h0m0 20h0m0 -20h0m0 30h0m0 -60h0m0 50h0m0 -60h0m0 -60h0m10 60h0m0 50h0m0 10h0m0 -30h0m0 50h0m0 -30h0m0 -50h0m10 110h0m0 -30h0m0 -60h0m0 60h0m0 -70h0m0 30h0m0 -50h0m0 0h0m10 80h0m0 -80h0m0 -10h0m0 100h0m0 -60h0m0 60h0m0 0h0m0 -100h0m10 -60h0m0 100h0m0 30h0m0 10h0m0 -70h0m0 -50h0m0 -10h0m0 130h0m10 -90h0m0 90h0m0 -60h0m0 30h0m0 -90h0m0 80h0m0 50h0m0 60h0m10 -70h0m0 -90h0m0 -50h0m0 30h0m0 10h0m0 50h0m0 -30h0m0 30h0m0 40h0m0 -100h0m0 90h0m0 -80h0m10 100h0m0 -80h0m0 -40h0m0 -20h0m0 120h0m0 -50h0m0 -60h0m0 120h0m0 -110h0m0 20h0m10 -10h0m0 50h0m0 10h0m0 -40h0m0 70h0m0 -110h0m0 50h0m0 -40h0m0 60h0m0 -50h0m0 0h0m0 40h0m0 -60h0m10 80h0m0 -30h0m0 -70h0m0 30h0m0 10h0m0 0h0m0 -60h0m0 50h0m0 -60h0m0 -20h0m0 130h0m0 10h0m0 50h0m10 -60h0m0 0h0m0 -80h0m0 100h0m0 -90h0m0 -10h0m10 50h0m0 -40h0m0 20h0m0 80h0m0 -70h0m0 0h0m0 0h0m0 90h0m0 -140h0m0 130h0m0 -30h0m0 90h0m0 -100h0m10 -60h0m0 20h0m0 60h0m0 -50h0m0 -40h0m0 30h0m0 70h0m0 -60h0m0 50h0m10 -50h0m0 -60h0m0 70h0m0 20h0m0 -20h0m10 -90h0m0 90h0m0 40h0m0 60h0m0 -130h0m0 20h0m0 -80h0m10 100h0m0 -60h0m0 -90h0m0 210h0m0 -10h0m0 -70h0m0 -20h0m0 0h0m0 -10h0m0 100h0m10 -30h0m0 -30h0m0 90h0m0 -70h0m0 50h0m0 -80h0m0 60h0m0 60h0m0 -140h0m10 -20h0m0 20h0m0 70h0m0 -40h0m0 -50h0m0 170h0m0 -50h0m10 70h0m0 -160h0m0 30h0m0 -190h0m0 230h0m0 -40h0m0 150h0m0 -180h0m0 50h0m0 -20h0m0 0h0m10 -30h0m0 30h0m0 0h0m0 10h0m0 0h0m0 -30h0m0 10h0m0 30h0m0 90h0m0 -80h0m10 -120h0m0 60h0m0 -20h0m0 40h0m0 40h0m0 -20h0m0 -50h0m0 0h0m10 130h0m0 -60h0m0 10h0m0 20h0m0 70h0m0 -30h0m0 40h0m0 -140h0m10 60h0m0 -110h0m0 90h0m0 -70h0m0 30h0m0 20h0m0 50h0m0 -40h0m0 60h0m0 -100h0m0 30h0m10 40h0m0 -140h0m0 170h0m0 -40h0m0 -20h0m0 30h0m0 20h0m0 -90h0m0 60h0m0 -70h0m10 50h0m0 0h0m0 -150h0m0 160h0m0 10h0m0 -20h0m0 20h0m0 -10h0m0 -100h0m0 20h0m10 110h0m0 -80h0m0 50h0m0 50h0m0 -100h0m0 50h0m0 50h0m0 -110h0m0 90h0m0 40h0m0 -120h0m0 -50h0m10 90h0m0 40h0m0 80h0m0 -130h0m0 0h0m0 -10h0m0 50h0m0 -10h0m0 -70h0m0 90h0m0 -160h0m0 120h0m10 -70h0m0 -10h0m0 220h0m0 -60h0m0 -120h0m0 60h0m0 100h0m10 -50h0m0 -20h0m0 -90h0m0 60h0m0 -30h0m0 70h0m0 0h0m0 -80h0m0 60h0m0 -60h0m0 100h0m10 -40h0m0 -130h0m0 180h0m0 -50h0m0 -50h0m0 -10h0m10 40h0m0 20h0m0 10h0m0 140h0m0 -190h0m0 60h0m0 -80h0m0 -10h0m10 40h0m0 -40h0m0 10h0m0 80h0m0 -140h0m0 160h0m0 -70h0m0 -60h0m10 150h0m0 -60h0m0 -80h0m0 -20h0m0 -30h0m0 110h0m0 -30h0m0 40h0m0 -50h0m0 140h0m0 -80h0m0 -70h0m10 130h0m0 -90h0m0 -20h0m0 -20h0m0 0h0m10 200h0m0 -150h0m0 120h0m0 -130h0m0 -30h0m0 110h0m0 -140h0m0 60h0m0 20h0m10 50h0m0 -40h0m0 50h0m0 -50h0m0 -70h0m0 120h0m0 -10h0m0 10h0m0 -40h0m0 -60h0m0 30h0m0 -60h0m10 -10h0m0 -40h0m0 160h0m0 -70h0m0 -60h0m0 130h0m0 -10h0m0 50h0m0 -40h0m0 40h0m0 -150h0m0 130h0m0 -80h0m0 -90h0m0 40h0m10 70h0m0 -120h0m0 20h0m0 110h0m0 -60h0m0 30h0m0 30h0m0 10h0m0 -40h0m0 50h0m10 -20h0m0 -20h0m0 -50h0m0 -40h0m0 110h0m0 -50h0m0 -50h0m0 60h0m0 -10h0m0 -100h0m0 180h0m0 -80h0m10 -70h0m0 120h0m0 -90h0m0 -20h0m0 90h0m0 -40h0m10 50h0m0 -80h0m0 40h0m0 0h0m0 20h0m0 -50h0m0 70h0m0 -40h0m0 -50h0m0 30h0m0 30h0m0 50h0m0 -80h0m10 0h0m0 0h0m0 -10h0m0 10h0m0 -20h0m0 190h0m0 -100h0m0 -90h0m0 -10h0m0 60h0m0 50h0m0 -40h0m0 70h0m0 -50h0m0 -40h0m10 90h0m0 -90h0m0 -80h0m0 -10h0m0 -80h0m0 160h0m0 -10h0m0 -20h0m0 50h0m0 10h0m0 30h0m0 -130h0m0 90h0m10 60h0m0 -100h0m0 130h0m0 -70h0m0 -110h0m0 70h0m0 30h0m0 -110h0m0 120h0m0 -100h0m0 -20h0m0 150h0m0 -20h0m0 -110h0m0 -30h0m10 190h0m0 -180h0m0 170h0m0 -210h0m0 110h0m0 20h0m0 -10h0m0 -20h0m0 110h0m0 -180h0m0 60h0m0 -70h0m0 170h0m0 -140h0m0 90h0m0 -120h0m10 20h0m0 150h0m0 -40h0m0 -80h0m0 80h0m0 10h0m0 40h0m0 -280h0m0 160h0m0 90h0m0 -30h0m0 -110h0m0 70h0m10 -60h0m0 110h0m0 -70h0m0 10h0m0 50h0m0 -20h0m0 -160h0m0 160h0m0 40h0m0 -120h0m0 120h0m0 -60h0m0 -100h0m0 100h0m10 40h0m0 -110h0m0 170h0m0 20h0m0 -70h0m0 -40h0m0 0h0m10 60h0m0 60h0m0 -80h0m0 -40h0m0 50h0m0 0h0m0 30h0m0 -180h0m0 190h0m0 -10h0m10 -80h0m0 -20h0m0 80h0m0 -20h0m0 -80h0m0 80h0m10 -20h0m0 70h0m0 -80h0m0 60h0m0 20h0m0 -70h0m0 10h0m0 -30h0m0 70h0m0 -50h0m0 -10h0m0 10h0m0 -110h0m0 40h0m0 80h0m0 -10h0m0 -70h0m0 50h0m10 90h0m0 -110h0m0 10h0m0 -60h0m0 80h0m0 100h0m0 -80h0m0 -30h0m0 80h0m0 20h0m0 10h0m0 -90h0m10 30h0m0 50h0m0 40h0m0 -150h0m0 80h0m0 -140h0m0 120h0m0 30h0m0 20h0m0 -170h0m10 170h0m0 -110h0m0 90h0m0 130h0m0 -240h0m0 0h0m0 210h0m0 -150h0m0 90h0m10 10h0m0 -140h0m0 50h0m0 60h0m0 20h0m0 -60h0m0 30h0m0 0h0m0 -40h0m0 30h0m0 -50h0m0 -20h0m10 10h0m0 90h0m0 -110h0m0 -20h0m0 130h0m0 -80h0m0 80h0m10 0h0m0 -170h0m0 0h0m0 160h0m0 10h0m0 -120h0m0 70h0m0 90h0m0 -90h0m0 10h0m0 70h0m0 -20h0m0 20h0m0 -50h0m0 -10h0m0 -70h0m0 100h0m0 -30h0m0 50h0m0 -40h0m0 0h0m10 -110h0m0 70h0m0 10h0m0 0h0m0 30h0m0 -90h0m0 40h0m0 90h0m10 -60h0m0 60h0m0 -50h0m0 60h0m0 -60h0m10 20h0m0 40h0m0 -20h0m0 -30h0m0 30h0m0 80h0m0 -110h0m0 40h0m0 -100h0m0 210h0m0 -60h0m0 -60h0m10 40h0m0 -30h0m0 -90h0m0 140h0m0 -40h0m0 -20h0m0 -50h0m0 90h0m0 -110h0m0 20h0m0 170h0m0 -250h0m0 50h0m10 -20h0m0 30h0m0 90h0m0 -70h0m0 90h0m0 -120h0m0 0h0m0 -30h0m0 60h0m0 60h0m0 -60h0m10 20h0m0 -110h0m0 110h0m0 60h0m0 -10h0m0 -100h0m0 50h0m0 80h0m0 -30h0m0 10h0m0 -60h0m0 -70h0m0 90h0m0 -50h0m10 30h0m0 80h0m0 -120h0m0 70h0m0 -110h0m0 60h0m0 -60h0m0 130h0m0 -100h0m0 -80h0m0 20h0m10 50h0m0 10h0m0 90h0m0 -70h0m0 30h0m0 0h0m0 -120h0m0 70h0m0 -60h0m0 120h0m0 -10h0m10 -70h0m0 40h0m0 -40h0m0 0h0m0 -120h0m0 130h0m0 -90h0m10 170h0m0 10h0m0 -110h0m0 80h0m0 -120h0m0 60h0m0 40h0m0 -80h0m0 -20h0m0 110h0m10 50h0m0 -80h0m0 0h0m0 -20h0m0 -70h0m0 70h0m0 -30h0m0 -70h0m0 170h0m0 -100h0m0 60h0m0 -90h0m0 110h0m0 -20h0m0 -90h0m10 60h0m0 -100h0m0 100h0m0 -60h0m0 0h0m0 50h0m0 -20h0m0 -30h0m0 20h0m0 -40h0m10 90h0m0 0h0m0 -110h0m0 50h0m0 90h0m0 -80h0m0 -100h0m0 90h0m0 20h0m0 30h0m0 -50h0m0 -40h0m0 10h0m0 70h0m0 0h0m0 40h0m0 -80h0m0 160h0m10 -170h0m0 50h0m0 -50h0m0 -60h0m0 220h0m0 -50h0m0 -60h0m0 -180h0m0 170h0m0 -160h0m0 100h0m0 0h0m0 50h0m0 -40h0m0 10h0m0 10h0m0 0h0m10 90h0m0 -50h0m0 -50h0m0 30h0m0 60h0m0 -110h0m0 80h0m0 -50h0m0 0h0m0 -30h0m0 -10h0m10 200h0m0 -100h0m0 -40h0m0 0h0m0 30h0m0 -160h0m0 140h0m0 -80h0m0 40h0m0 -20h0m0 0h0m0 210h0m0 -190h0m0 30h0m10 40h0m0 -70h0m0 60h0m0 -20h0m0 -20h0m0 0h0m0 10h0m0 -30h0m0 80h0m0 -40h0m0 40h0m0 -60h0m0 -10h0m0 60h0m10 10h0m0 30h0m0 0h0m0 -170h0m0 210h0m0 -120h0m0 20h0m0 90h0m0 -180h0m0 80h0m0 20h0m0 -50h0m10 20h0m0 80h0m0 -80h0m0 0h0m0 -10h0m0 -70h0m0 60h0m10 50h0m0 -30h0m0 -60h0m0 30h0m0 30h0m0 20h0m0 40h0m0 -50h0m0 40h0m0 -40h0m0 20h0m0 0h0m0 -30h0m10 20h0m0 -80h0m0 70h0m0 -150h0m0 230h0m0 -40h0m0 -10h0m0 0h0m0 -60h0m0 -10h0m10 40h0m0 -10h0m0 50h0m0 -20h0m0 40h0m0 20h0m0 -70h0m0 -50h0m0 -10h0m0 140h0m0 -50h0m0 -90h0m0 100h0m0 -40h0m0 20h0m0 -40h0m10 80h0m0 -70h0m0 -110h0m0 230h0m0 -170h0m0 150h0m0 -50h0m0 -100h0m0 60h0m10 -50h0m0 -50h0m0 40h0m0 130h0m0 -30h0m0 50h0m0 -70h0m0 110h0m0 -190h0m0 30h0m0 100h0m0 -10h0m10 -40h0m0 -10h0m0 0h0m0 20h0m0 -60h0m0 30h0m0 10h0m0 90h0m0 -90h0m0 60h0m0 -110h0m0 170h0m10 -10h0m0 -80h0m0 -60h0m0 40h0m0 90h0m0 -140h0m0 130h0m0 -90h0m0 70h0m0 20h0m10 -30h0m0 -100h0m0 120h0m0 -70h0m0 50h0m0 -70h0m0 110h0m0 -70h0m0 40h0m0 -70h0m0 30h0m0 30h0m10 10h0m0 -40h0m0 -50h0m0 20h0m0 40h0m0 -30h0m0 60h0m10 -60h0m0 -10h0m0 20h0m0 70h0m0 -40h0m0 -20h0m0 40h0m0 30h0m0 -80h0m10 -30h0m0 60h0m0 -80h0m0 110h0m0 -130h0m0 130h0m0 -20h0m0 -20h0m0 -80h0m0 80h0m0 -10h0m0 -20h0m0 80h0m0 0h0m10 50h0m0 -40h0m0 -40h0m0 50h0m0 -150h0m0 130h0m0 -60h0m0 190h0m0 -240h0m0 80h0m0 -10h0m10 -30h0m0 -20h0m0 -60h0m0 190h0m0 -80h0m0 50h0m0 -70h0m10 40h0m0 30h0m0 70h0m0 -200h0m0 80h0m0 70h0m0 -40h0m0 50h0m0 40h0m0 -60h0m0 10h0m10 -170h0m0 100h0m0 50h0m0 20h0m0 -110h0m0 50h0m0 40h0m0 -50h0m0 20h0m0 -100h0m0 -30h0m0 120h0m0 -70h0m0 40h0m10 100h0m0 -90h0m0 90h0m0 -140h0m0 30h0m0 60h0m0 50h0m0 -90h0m0 40h0m0 20h0m0 -130h0m0 10h0m0 30h0m0 60h0m0 10h0m10 -190h0m0 160h0m0 -120h0m0 90h0m0 20h0m0 30h0m10 40h0m0 -40h0m0 -110h0m0 40h0m0 100h0m0 -20h0m0 -50h0m0 -20h0m0 110h0m10 -30h0m0 -10h0m0 -110h0m0 40h0m0 80h0m0 -100h0m10 200h0m0 -40h0m0 -80h0m0 40h0m0 -40h0m0 40h0m0 0h0m0 -110h0m10 60h0m0 -130h0m0 160h0m0 -70h0m0 -110h0m0 60h0m0 110h0m10 -10h0m0 -50h0m0 70h0m0 -90h0m0 30h0m0 0h0m0 30h0m0 -10h0m0 80h0m0 -230h0m0 130h0m0 10h0m0 -40h0m0 -110h0m0 130h0m0 -10h0m10 20h0m0 -60h0m0 40h0m0 40h0m0 40h0m0 -60h0m0 0h0m0 -100h0m0 70h0m0 -20h0m0 60h0m0 40h0m10 -40h0m0 -50h0m0 80h0m0 -60h0m0 -80h0m0 60h0m0 30h0m0 -10h0m0 10h0m0 -50h0m0 -10h0m10 80h0m0 30h0m0 -100h0m0 -10h0m0 40h0m0 50h0m0 -120h0m10 160h0m0 10h0m0 -150h0m0 -40h0m0 60h0m0 -40h0m0 50h0m10 -50h0m0 110h0m0 -30h0m0 10h0m0 10h0m0 -80h0m0 50h0m10 70h0m0 -220h0m0 150h0m10 30h0m0 -20h0m0 -20h0m0 -30h0m0 -20h0m10 110h0m0 -220h0m0 60h0m0 160h0m0 -100h0m0 20h0m0 80h0m0 -50h0m0 -30h0m0 -100h0m0 120h0m0 -70h0m10 90h0m0 -70h0m0 -90h0m0 60h0m0 20h0m0 20h0m10 10h0m0 40h0m0 30h0m0 -90h0m0 20h0m0 110h0m0 -80h0m0 60h0m0 -140h0m0 120h0m10 -70h0m0 -110h0m0 -40h0m0 170h0m0 110h0m0 -120h0m10 -40h0m0 10h0m0 10h0m0 10h0m0 60h0m0 -20h0m0 -60h0m0 -10h0m0 70h0m0 -10h0m10 -20h0m0 -40h0m0 80h0m0 50h0m0 -50h0m0 -30h0m0 -110h0m0 60h0m0 80h0m10 -130h0m0 190h0m0 -50h0m0 -160h0m0 100h0m0 20h0m0 60h0m0 -30h0m0 -100h0m0 70h0m0 30h0m0 -90h0m0 -30h0m10 140h0m0 -100h0m0 40h0m0 10h0m0 70h0m0 -70h0m0 60h0m0 -40h0m0 -50h0m0 40h0m0 -20h0m0 -30h0m0 -30h0m10 50h0m0 0h0m0 70h0m0 40h0m0 -110h0m0 90h0m0 -10h0m0 -40h0m0 -10h0m0 -70h0m0 160h0m0 0h0m0 70h0m10 -170h0m0 10h0m0 30h0m0 10h0m0 0h0m0 50h0m0 10h0m0 -40h0m0 -80h0m0 -20h0m0 70h0m0 -20h0m10 40h0m0 -70h0m0 10h0m0 -60h0m0 100h0m0 40h0m0 -60h0m0 50h0m10 -30h0m0 -80h0m0 80h0m0 -10h0m0 10h0m0 -60h0m0 -50h0m0 140h0m0 -170h0m0 140h0m0 10h0m0 -20h0m0 60h0m0 -30h0m0 10h0m0 -70h0m10 90h0m0 -80h0m0 80h0m0 -30h0m0 -10h0m0 40h0m0 -50h0m0 40h0m0 -120h0m10 120h0m0 -10h0m0 -80h0m0 110h0m0 -40h0m0 -40h0m0 50h0m10 90h0m0 -70h0m0 -140h0m0 130h0m0 -70h0m0 30h0m0 20h0m0 20h0m0 -40h0m0 40h0m0 -70h0m10 40h0m0 20h0m0 -10h0m0 -40h0m0 40h0m0 40h0m0 20h0m0 0h0m0 -40h0m0 -50h0m0 -50h0m0 30h0m0 -10h0m0 100h0m0 40h0m0 -130h0m0 -10h0m10 120h0m0 -70h0m0 -30h0m0 -40h0m0 200h0m0 -220h0m0 90h0m0 20h0m0 -30h0m0 80h0m10 20h0m0 -70h0m0 -20h0m0 50h0m0 30h0m0 -160h0m10 120h0m0 60h0m0 -40h0m0 10h0m0 -70h0m10 -40h0m0 -10h0m0 80h0m0 -40h0m0 100h0m0 -40h0m0 -100h0m0 170h0m0 -70h0m0 -170h0m0 140h0m0 -20h0m0 10h0m0 0h0m0 0h0m0 -10h0m0 -100h0m10 80h0m0 -10h0m0 30h0m0 120h0m0 -160h0m0 90h0m0 -70h0m0 40h0m0 -110h0m0 100h0m10 30h0m0 -20h0m0 -30h0m0 20h0m0 80h0m0 -70h0m0 -70h0m0 -70h0m0 130h0m0 -80h0m10 100h0m0 10h0m0 -60h0m0 10h0m0 -10h0m0 130h0m0 -160h0m0 0h0m10 30h0m0 -30h0m0 -100h0m0 100h0m0 10h0m0 40h0m0 -90h0m0 90h0m0 -110h0m10 110h0m0 20h0m0 -40h0m0 -130h0m0 50h0m0 60h0m0 60h0m0 -90h0m0 70h0m0 -50h0m0 10h0m0 -20h0m0 -40h0m10 30h0m0 20h0m0 20h0m0 20h0m0 -90h0m0 70h0m0 -10h0m0 -60h0m0 -10h0m0 -20h0m10 40h0m0 -10h0m0 40h0m0 50h0m0 -70h0m0 -90h0m0 80h0m0 -60h0m0 110h0m10 30h0m0 -120h0m0 40h0m0 80h0m0 30h0m0 -50h0m0 70h0m0 -110h0m0 -90h0m0 60h0m0 120h0m0 -110h0m0 -30h0m10 40h0m0 -30h0m0 10h0m0 10h0m0 -110h0m0 170h0m0 -10h0m0 0h0m0 -210h0m0 300h0m0 -150h0m10 50h0m0 -10h0m0 -20h0m0 -50h0m0 40h0m0 60h0m0 -70h0m10 20h0m0 0h0m0 110h0m0 -170h0m0 40h0m0 30h0m0 -40h0m0 80h0m10 30h0m0 -70h0m0 80h0m0 -60h0m0 0h0m0 40h0m0 -30h0m0 80h0m0 -170h0m10 170h0m0 -100h0m0 -40h0m0 -10h0m0 160h0m0 -130h0m0 -10h0m10 50h0m0 -40h0m0 0h0m0 180h0m0 -140h0m0 -70h0m10 -40h0m0 120h0m0 30h0m0 -50h0m0 -60h0m0 60h0m0 -110h0m10 180h0m0 -30h0m0 -20h0m0 20h0m0 -50h0m0 10h0m0 120h0m0 -130h0m0 90h0m0 -30h0m0 30h0m0 -50h0m0 20h0m0 -60h0m0 40h0m0 -20h0m0 -90h0m0 40h0m0 130h0m0 -80h0m0 -80h0m10 220h0m0 -130h0m0 50h0m0 -120h0m0 50h0m0 -50h0m0 40h0m0 50h0m0 60h0m0 40h0m0 -60h0m0 -130h0m0 100h0m0 -110h0m10 150h0m0 0h0m0 -30h0m0 -60h0m0 70h0m0 -80h0m0 130h0m0 -90h0m0 -60h0m0 -40h0m0 -40h0m10 120h0m0 70h0m0 -120h0m0 190h0m0 -120h0m0 0h0m0 80h0m0 -10h0m0 10h0m10 -60h0m0 -80h0m0 -60h0m0 70h0m0 80h0m0 10h0m0 -130h0m0 10h0m0 130h0m0 -10h0m0 -40h0m0 190h0m0 -80h0m0 -50h0m10 -30h0m0 -10h0m0 10h0m0 -40h0m0 20h0m0 -60h0m0 30h0m0 60h0m10 -50h0m0 90h0m0 -80h0m0 110h0m0 -170h0m0 90h0m0 -110h0m0 60h0m0 70h0m10 -20h0m0 0h0m0 -80h0m0 130h0m0 -80h0m0 -60h0m0 -20h0m0 80h0m0 40h0m0 70h0m10 -140h0m0 10h0m0 230h0m0 -90h0m0 -110h0m0 60h0m0 -80h0m0 30h0m0 20h0m0 10h0m0 -90h0m10 10h0m0 80h0m0 -100h0m0 70h0m0 80h0m0 -50h0m0 70h0m0 -110h0m10 -10h0m0 10h0m0 120h0m0 -50h0m0 80h0m0 -100h0m0 -70h0m0 50h0m0 -20h0m10 10h0m0 70h0m0 -30h0m0 10h0m0 -80h0m0 0h0m0 90h0m0 -10h0m0 -80h0m0 10h0m0 40h0m10 -100h0m0 120h0m0 -80h0m0 30h0m0 -60h0m0 80h0m0 -80h0m0 20h0m0 180h0m0 -100h0m0 -80h0m10 70h0m0 -90h0m0 50h0m0 100h0m0 -120h0m0 -10h0m0 -30h0m0 20h0m0 -10h0m10 10h0m0 70h0m0 -120h0m0 70h0m0 110h0m0 20h0m0 -180h0m0 30h0m0 0h0m0 90h0m0 -80h0m0 10h0m0 110h0m0 -60h0m10 -20h0m0 120h0m0 -50h0m0 -80h0m0 -40h0m0 40h0m0 10h0m0 -10h0m10 -40h0m0 60h0m0 -50h0m0 -20h0m0 20h0m0 -50h0m0 70h0m0 -30h0m0 110h0m0 -50h0m0 -190h0m0 230h0m10 40h0m0 -110h0m0 -20h0m0 -60h0m0 40h0m0 0h0m0 80h0m0 -140h0m10 10h0m0 0h0m0 80h0m0 -40h0m0 80h0m0 -20h0m0 -60h0m0 0h0m0 70h0m0 -10h0m10 -80h0m0 10h0m0 60h0m0 -30h0m0 100h0m0 -110h0m0 30h0m0 -30h0m0 10h0m10 -80h0m0 60h0m0 30h0m0 -30h0m0 30h0m0 50h0m0 -40h0m0 120h0m0 -150h0m10 20h0m0 -30h0m0 80h0m0 -20h0m0 -10h0m0 30h0m0 50h0m0 -90h0m0 50h0m10 -150h0m0 90h0m0 -10h0m0 -30h0m0 90h0m0 -110h0m0 70h0m0 -100h0m0 40h0m0 -30h0m0 80h0m0 50h0m0 -70h0m0 70h0m0 -70h0m0 20h0m0 0h0m0 30h0m10 -80h0m0 -70h0m0 190h0m0 -20h0m0 -40h0m0 -170h0m0 190h0m0 -140h0m10 130h0m0 -20h0m0 0h0m0 60h0m0 -110h0m0 50h0m0 80h0m0 -130h0m0 0h0m0 50h0m0 -60h0m10 10h0m0 90h0m0 -160h0m0 110h0m0 10h0m0 -100h0m0 70h0m0 50h0m0 -70h0m0 110h0m10 -160h0m0 210h0m0 -140h0m0 90h0m0 -60h0m0 30h0m10 10h0m0 -70h0m0 -30h0m0 50h0m0 -30h0m0 60h0m0 -20h0m0 -80h0m0 130h0m0 -120h0m10 120h0m0 -40h0m0 -10h0m0 60h0m0 -80h0m0 20h0m0 -70h0m0 50h0m0 -40h0m0 30h0m0 -100h0m10 110h0m0 50h0m0 40h0m0 -30h0m0 -50h0m0 10h0m0 -120h0m0 110h0m0 0h0m10 -80h0m0 20h0m0 10h0m0 140h0m0 -50h0m0 0h0m0 -110h0m0 -10h0m0 100h0m0 -60h0m0 -20h0m10 70h0m0 -10h0m0 -50h0m0 40h0m0 70h0m0 -60h0m0 0h0m0 20h0m0 10h0m0 -10h0m0 50h0m0 -10h0m0 -30h0m0 60h0m0 -20h0m0 -10h0m0 -100h0m0 100h0m10 -140h0m0 140h0m0 0h0m0 -50h0m0 -20h0m0 10h0m0 -10h0m10 30h0m0 -20h0m0 10h0m0 70h0m0 30h0m0 -20h0m0 -30h0m0 -80h0m10 60h0m0 -120h0m0 100h0m0 60h0m0 0h0m0 -40h0m0 -60h0m0 60h0m0 -30h0m0 50h0m10 50h0m0 70h0m0 -160h0m0 30h0m0 -70h0m0 0h0m0 90h0m0 -70h0m0 40h0m0 50h0m0 -40h0m0 -20h0m0 -60h0m0 100h0m10 20h0m0 -10h0m0 -130h0m0 90h0m0 10h0m0 20h0m0 -10h0m0 0h0m0 50h0m0 -90h0m0 -70h0m0 90h0m10 30h0m0 -70h0m0 30h0m0 -60h0m0 80h0m0 -140h0m0 130h0m0 -80h0m0 100h0m0 -20h0m0 -20h0m0 50h0m0 -130h0m10 210h0m0 -150h0m0 100h0m0 -80h0m0 50h0m0 -50h0m0 -10h0m0 70h0m0 -50h0m0 130h0m10 -90h0m0 -100h0m0 0h0m0 10h0m0 70h0m0 -50h0m0 100h0m0 -50h0m0 30h0m0 0h0m10 20h0m0 -110h0m0 -10h0m0 140h0m0 -90h0m0 -10h0m0 -10h0m0 50h0m0 -10h0m0 -40h0m0 90h0m10 -80h0m0 110h0m0 -80h0m0 -70h0m0 50h0m0 10h0m0 70h0m0 -90h0m0 -50h0m0 20h0m10 70h0m0 -50h0m0 70h0m0 -40h0m0 90h0m0 20h0m0 -30h0m0 -60h0m10 40h0m0 -110h0m0 70h0m0 -60h0m0 20h0m0 20h0m0 -40h0m0 40h0m10 40h0m0 40h0m0 0h0m0 -30h0m0 -70h0m0 -30h0m0 170h0m0 -50h0m0 -50h0m10 70h0m0 -110h0m0 70h0m0 0h0m0 40h0m10 -30h0m0 -80h0m0 160h0m0 -230h0m0 110h0m0 40h0m0 -70h0m0 110h0m0 -70h0m0 -20h0m0 -50h0m10 90h0m0 -10h0m0 -40h0m0 50h0m0 -150h0m0 70h0m0 50h0m0 0h0m0 -60h0m0 20h0m0 0h0m0 -30h0m10 0h0m0 160h0m0 100h0m0 -230h0m0 -30h0m0 60h0m0 10h0m0 -20h0m0 80h0m0 -140h0m10 130h0m0 -140h0m0 80h0m0 40h0m0 -30h0m0 -60h0m0 40h0m0 -20h0m0 30h0m0 10h0m0 -50h0m10 160h0m0 -210h0m0 160h0m0 -60h0m0 10h0m0 0h0m0 -90h0m0 90h0m0 -10h0m0 -190h0m0 100h0m10 100h0m0 -50h0m0 -20h0m0 -10h0m0 70h0m10 0h0m0 -120h0m0 60h0m0 50h0m0 -80h0m0 20h0m0 -70h0m0 120h0m0 -170h0m0 150h0m10 -130h0m0 150h0m0 50h0m0 -70h0m0 -70h0m0 -10h0m0 70h0m0 -10h0m0 -100h0m0 80h0m0 120h0m10 -180h0m0 90h0m0 10h0m0 0h0m0 -40h0m0 70h0m0 20h0m0 -80h0m0 110h0m10 -80h0m0 -70h0m0 40h0m0 -20h0m0 -20h0m0 150h0m0 -250h0m10 160h0m0 -10h0m0 -60h0m0 0h0m10 90h0m0 0h0m0 0h0m0 -40h0m0 -30h0m0 90h0m0 -20h0m0 -170h0m0 200h0m0 -110h0m0 90h0m10 -30h0m0 40h0m0 -70h0m0 -70h0m0 20h0m0 90h0m0 -60h0m0 100h0m10 -80h0m0 -40h0m0 80h0m0 -70h0m0 40h0m0 -10h0m0 10h0m0 70h0m10 -200h0m0 40h0m0 110h0m0 10h0m0 -60h0m0 -40h0m0 70h0m0 80h0m0 -110h0m0 20h0m0 10h0m0 -90h0m0 80h0m10 -30h0m0 10h0m0 -10h0m0 60h0m0 -120h0m0 110h0m0 -30h0m0 -50h0m0 50h0m10 60h0m0 -110h0m0 80h0m0 -20h0m0 10h0m0 10h0m0 -10h0m0 20h0m0 -20h0m0 30h0m0 -140h0m0 40h0m0 120h0m0 10h0m0 -120h0m0 0h0m0 150h0m10 -160h0m0 80h0m0 60h0m0 -40h0m0 -40h0m10 0h0m0 -130h0m0 140h0m0 40h0m0 -100h0m0 50h0m0 30h0m0 10h0m0 80h0m10 -100h0m0 90h0m0 -70h0m0 -10h0m0 50h0m0 -20h0m0 -30h0m0 50h0m10 20h0m0 30h0m0 -70h0m0 -70h0m0 70h0m0 30h0m0 10h0m0 40h0m0 -140h0m10 100h0m0 10h0m0 -10h0m0 10h0m0 -30h0m10 20h0m0 -10h0m0 -20h0m0 -70h0m0 120h0m0 -120h0m0 110h0m0 10h0m0 -120h0m0 60h0m0 50h0m10 20h0m0 -20h0m0 70h0m0 -160h0m0 120h0m0 -100h0m10 80h0m0 -40h0m0 40h0m0 70h0m0 -90h0m0 30h0m0 -60h0m0 40h0m0 -140h0m0 270h0m10 -90h0m0 0h0m0 30h0m0 -10h0m0 -30h0m0 -100h0m10 -40h0m0 30h0m0 100h0m0 -80h0m0 10h0m0 0h0m10 -60h0m0 120h0m0 -40h0m0 -100h0m0 30h0m0 120h0m0 -120h0m0 30h0m0 20h0m0 70h0m0 -10h0m0 10h0m0 50h0m0 -180h0m10 70h0m0 30h0m0 70h0m0 -10h0m0 -130h0m0 100h0m0 -60h0m0 110h0m0 -130h0m0 -10h0m0 70h0m0 40h0m0 -140h0m0 20h0m0 10h0m10 50h0m0 -20h0m0 -40h0m0 110h0m0 -50h0m0 50h0m0 -40h0m0 20h0m10 -70h0m0 -30h0m0 110h0m0 -210h0m0 140h0m0 -30h0m0 100h0m0 -100h0m0 70h0m0 0h0m0 10h0m0 -90h0m10 -30h0m0 50h0m0 -40h0m0 80h0m0 40h0m10 -60h0m0 60h0m0 -70h0m0 -30h0m0 -50h0m0 80h0m10 30h0m0 80h0m0 -130h0m0 60h0m0 -80h0m0 -10h0m0 80h0m0 -90h0m0 -50h0m0 90h0m0 0h0m0 20h0m0 30h0m10 40h0m0 -120h0m0 60h0m0 -60h0m0 -30h0m0 100h0m0 -80h0m0 90h0m0 -50h0m0 -40h0m0 20h0m0 70h0m10 -70h0m0 -10h0m0 170h0m0 -60h0m0 -10h0m0 90h0m0 -160h0m0 130h0m0 70h0m0 -100h0m0 -200h0m0 80h0m0 10h0m0 -70h0m0 130h0m0 -110h0m10 90h0m0 10h0m0 -70h0m0 0h0m0 30h0m10 10h0m0 -80h0m0 110h0m0 -130h0m0 20h0m0 50h0m0 40h0m10 -60h0m0 20h0m0 -10h0m0 100h0m0 -100h0m0 -120h0m0 140h0m0 50h0m0 -140h0m10 -40h0m0 110h0m0 20h0m0 10h0m0 -130h0m0 40h0m0 200h0m10 -220h0m0 70h0m0 40h0m0 -20h0m0 -20h0m0 20h0m0 -10h0m0 40h0m0 0h0m10 0h0m0 -30h0m0 100h0m0 -130h0m0 120h0m0 -140h0m0 60h0m0 -10h0m0 90h0m0 -80h0m0 -20h0m10 60h0m0 130h0m0 -270h0m0 140h0m0 -70h0m0 50h0m0 -80h0m0 70h0m0 -20h0m0 10h0m10 120h0m0 -190h0m0 170h0m0 -150h0m10 20h0m0 50h0m0 20h0m0 0h0m0 -20h0m0 -130h0m0 90h0m0 60h0m0 -10h0m0 50h0m0 -140h0m0 90h0m0 0h0m10 20h0m0 -40h0m0 20h0m0 20h0m0 -30h0m0 -60h0m0 50h0m0 -10h0m0 40h0m0 -20h0m10 -10h0m0 20h0m0 -70h0m0 120h0m0 -40h0m0 -60h0m0 50h0m10 20h0m0 -120h0m0 160h0m0 -130h0m0 90h0m0 -50h0m0 30h0m10 90h0m0 -100h0m0 90h0m0 -30h0m0 -60h0m0 70h0m0 -70h0m0 10h0m0 30h0m0 -70h0m0 10h0m0 90h0m10 50h0m0 -70h0m0 -140h0m0 80h0m0 20h0m0 -10h0m0 30h0m0 30h0m0 0h0m0 10h0m10 -20h0m0 -30h0m0 0h0m0 -60h0m0 110h0m0 -70h0m0 -70h0m0 90h0m0 -130h0m0 40h0m0 80h0m0 -70h0m0 -10h0m0 40h0m0 60h0m10 -40h0m0 40h0m0 40h0m0 -100h0m0 30h0m0 190h0m0 -150h0m0 -40h0m0 30h0m0 -60h0m0 50h0m0 30h0m0 40h0m10 -110h0m0 0h0m0 -120h0m0 240h0m0 -90h0m0 10h0m10 -30h0m0 -60h0m0 90h0m0 10h0m0 -90h0m0 10h0m0 120h0m0 -60h0m10 -40h0m0 50h0m0 -60h0m0 60h0m0 -80h0m0 130h0m0 70h0m0 -150h0m0 0h0m10 100h0m0 -80h0m0 40h0m0 -70h0m0 70h0m0 -90h0m0 10h0m10 -30h0m0 90h0m0 -10h0m0 10h0m0 -10h0m0 -40h0m0 -30h0m0 110h0m0 -60h0m0 -50h0m0 80h0m0 0h0m10 -10h0m0 60h0m0 -30h0m0 50h0m0 -120h0m0 -30h0m0 120h0m0 -60h0m0 -30h0m10 -20h0m0 60h0m0 50h0m0 -100h0m0 50h0m0 0h0m0 40h0m0 -70h0m0 10h0m0 -50h0m0 -40h0m0 100h0m0 10h0m0 -30h0m0 30h0m10 30h0m0 -110h0m0 50h0m0 20h0m0 110h0m0 -130h0m0 -70h0m0 80h0m0 0h0m10 40h0m0 -60h0m0 70h0m0 20h0m0 -10h0m0 0h0m0 -80h0m0 110h0m0 -80h0m0 -90h0m0 200h0m0 -120h0m10 -40h0m0 80h0m0 0h0m0 -50h0m0 -20h0m10 70h0m0 -20h0m0 -30h0m0 120h0m0 -90h0m0 10h0m0 -30h0m0 40h0m0 -60h0m0 50h0m10 60h0m0 -130h0m0 -20h0m0 0h0m0 60h0m0 20h0m0 -20h0m0 30h0m0 -10h0m0 60h0m0 -110h0m0 100h0m0 0h0m0 -80h0m0 160h0m10 -30h0m0 -50h0m0 10h0m0 -90h0m0 10h0m0 40h0m0 -100h0m0 80h0m0 30h0m10 30h0m0 -180h0m0 200h0m0 50h0m0 -110h0m0 40h0m0 -170h0m0 50h0m0 -20h0m0 10h0m10 130h0m0 -130h0m0 80h0m0 -20h0m0 -110h0m0 180h0m0 -120h0m0 10h0m0 -10h0m0 -80h0m0 100h0m0 30h0m0 -20h0m10 40h0m0 60h0m0 -40h0m0 -100h0m0 130h0m0 -80h0m0 90h0m0 -80h0m10 10h0m0 -40h0m0 -30h0m0 30h0m0 70h0m10 -110h0m0 60h0m0 -40h0m0 50h0m0 -40h0m0 120h0m0 -40h0m0 20h0m0 -20h0m0 0h0m0 -70h0m0 60h0m0 -20h0m0 0h0m0 -100h0m0 50h0m0 80h0m10 -80h0m0 10h0m0 60h0m0 -30h0m0 30h0m0 -40h0m0 70h0m10 -70h0m0 -100h0m0 80h0m0 110h0m0 -100h0m0 30h0m0 10h0m0 -10h0m0 -70h0m10 40h0m0 100h0m0 -60h0m0 -130h0m0 50h0m0 160h0m0 -120h0m10 -80h0m0 100h0m0 -70h0m0 -30h0m0 -30h0m0 50h0m0 30h0m10 -40h0m0 30h0m0 120h0m0 -80h0m0 20h0m0 20h0m0 -50h0m0 0h0m0 0h0m10 40h0m0 -60h0m0 10h0m0 140h0m0 -100h0m0 -30h0m10 -90h0m0 200h0m0 -120h0m0 40h0m0 40h0m0 -120h0m0 -120h0m10 210h0m0 -90h0m0 70h0m0 -60h0m0 30h0m0 40h0m0 -20h0m0 80h0m0 -110h0m0 90h0m0 -30h0m0 -90h0m0 180h0m0 -100h0m0 -30h0m0 -50h0m0 70h0m10 50h0m0 -90h0m0 110h0m0 -80h0m0 40h0m0 30h0m0 -10h0m0 -10h0m0 -10h0m0 -50h0m0 40h0m10 10h0m0 -40h0m0 70h0m0 -80h0m0 140h0m0 -110h0m0 90h0m0 -90h0m0 -50h0m0 100h0m0 -90h0m0 30h0m0 -50h0m0 140h0m10 -70h0m0 -50h0m0 170h0m0 -160h0m0 20h0m0 90h0m0 -40h0m0 -100h0m0 40h0m10 30h0m0 -50h0m0 20h0m0 20h0m0 -10h0m0 -30h0m0 190h0m0 -160h0m0 10h0m0 -80h0m10 50h0m0 100h0m0 -20h0m0 -30h0m0 -20h0m0 20h0m0 100h0m0 -100h0m0 70h0m0 -110h0m0 60h0m0 0h0m0 50h0m0 -50h0m10 40h0m0 -30h0m0 -30h0m0 -40h0m0 90h0m0 30h0m0 -160h0m0 180h0m0 -100h0m0 50h0m10 -80h0m0 70h0m0 -10h0m0 -80h0m0 50h0m0 80h0m0 -40h0m0 -20h0m0 -70h0m0 150h0m0 -70h0m0 0h0m10 -100h0m0 100h0m0 20h0m0 -50h0m0 10h0m0 -80h0m0 140h0m0 -180h0m0 80h0m0 0h0m0 -50h0m0 220h0m10 -50h0m0 -70h0m0 -90h0m0 100h0m0 10h0m0 -10h0m0 30h0m0 10h0m0 -110h0m0 110h0m10 90h0m0 -90h0m0 -120h0m0 90h0m0 0h0m0 -60h0m0 80h0m0 -80h0m0 60h0m0 -60h0m0 100h0m10 -160h0m0 130h0m0 -100h0m0 160h0m0 -170h0m0 90h0m0 60h0m0 -60h0m0 -70h0m0 110h0m0 -130h0m0 150h0m0 -130h0m10 130h0m0 -100h0m0 20h0m0 40h0m0 -170h0m10 200h0m0 40h0m0 -160h0m0 60h0m0 -80h0m0 70h0m0 -70h0m0 -30h0m10 80h0m0 10h0m0 20h0m0 -10h0m0 -20h0m0 -80h0m0 200h0m0 -160h0m0 40h0m0 50h0m0 -60h0m10 -10h0m0 0h0m0 -10h0m0 80h0m0 -90h0m0 110h0m0 -170h0m0 20h0m0 110h0m0 -50h0m10 30h0m0 -140h0m0 160h0m0 -20h0m0 30h0m0 30h0m0 -70h0m0 -40h0m0 0h0m0 110h0m0 -140h0m0 30h0m10 -10h0m0 40h0m0 60h0m0 10h0m0 -70h0m0 -110h0m10 90h0m0 -90h0m0 30h0m0 60h0m0 20h0m0 10h0m0 -20h0m0 -30h0m0 50h0m0 -80h0m0 0h0m0 90h0m0 -90h0m0 30h0m0 30h0m0 30h0m0 -30h0m0 -110h0m0 140h0m0 -150h0m0 70h0m10 70h0m0 -90h0m0 130h0m0 -40h0m0 -60h0m0 0h0m0 100h0m0 -220h0m10 120h0m0 10h0m0 0h0m0 0h0m0 30h0m0 30h0m0 50h0m0 -90h0m0 -30h0m10 40h0m0 20h0m0 30h0m0 -50h0m0 10h0m0 -70h0m0 -30h0m0 90h0m10 -10h0m0 -20h0m0 0h0m0 80h0m0 -50h0m0 -30h0m0 20h0m0 70h0m0 -40h0m0 -40h0m0 10h0m0 30h0m0 -60h0m0 0h0m10 -90h0m0 150h0m0 -110h0m0 140h0m0 10h0m0 -130h0m0 70h0m0 -70h0m0 100h0m0 -110h0m0 150h0m0 -210h0m0 -10h0m0 40h0m10 40h0m0 60h0m0 -70h0m0 20h0m0 70h0m0 50h0m0 -80h0m0 -40h0m0 60h0m0 40h0m0 -20h0m0 -30h0m0 -140h0m10 130h0m0 -30h0m0 130h0m0 -130h0m0 20h0m0 10h0m0 20h0m0 20h0m10 -60h0m0 60h0m0 -40h0m0 0h0m0 -60h0m0 -20h0m0 220h0m0 -130h0m0 -40h0m10 40h0m0 -60h0m0 -120h0m0 180h0m0 40h0m0 -120h0m0 120h0m0 -10h0m0 -70h0m10 40h0m0 80h0m0 -40h0m0 -10h0m0 -160h0m0 90h0m0 -30h0m0 120h0m0 -110h0m0 50h0m0 -40h0m0 0h0m0 40h0m10 -50h0m0 60h0m0 -70h0m0 50h0m0 50h0m0 -10h0m0 -90h0m0 20h0m0 90h0m0 -20h0m10 30h0m0 -60h0m0 70h0m0 -30h0m0 -20h0m0 100h0m0 -70h0m0 -10h0m10 70h0m0 -30h0m0 -80h0m0 10h0m0 80h0m0 -40h0m0 -100h0m0 -60h0m0 90h0m10 110h0m0 -160h0m0 20h0m0 50h0m0 10h0m0 -50h0m0 100h0m0 60h0m0 -130h0m0 50h0m0 50h0m0 10h0m0 -180h0m10 90h0m0 50h0m0 80h0m0 -90h0m0 100h0m0 -70h0m0 -30h0m10 10h0m0 0h0m0 90h0m0 -140h0m0 40h0m0 -20h0m0 10h0m0 240h0m0 -300h0m0 -40h0m10 130h0m0 -30h0m0 -80h0m0 130h0m0 -40h0m0 -10h0m0 0h0m0 70h0m0 -110h0m0 90h0m0 70h0m0 -60h0m0 -10h0m0 -90h0m10 -70h0m0 100h0m0 -50h0m0 190h0m0 -80h0m0 -50h0m0 -20h0m0 130h0m10 -20h0m0 -80h0m0 -60h0m0 30h0m0 0h0m10 50h0m0 -80h0m0 30h0m0 100h0m0 0h0m0 -100h0m0 90h0m0 -60h0m0 -50h0m0 90h0m10 40h0m0 -70h0m0 -80h0m0 70h0m0 -20h0m0 -60h0m10 50h0m0 70h0m0 -40h0m0 10h0m0 60h0m0 -80h0m0 -10h0m0 -20h0m10 120h0m0 -150h0m0 90h0m0 50h0m0 -70h0m0 -70h0m0 10h0m0 -50h0m10 -80h0m0 -70h0m0 110h0m0 -90h0m0 50h0m0 50h0m0 -20h0m10 -30h0m0 -30h0m0 40h0m0 -50h0m0 130h0m0 -150h0m0 110h0m0 -30h0m0 -10h0m0 -40h0m10 -70h0m0 20h0m0 20h0m0 10h0m0 150h0m0 -100h0m0 40h0m0 0h0m0 -50h0m0 -10h0m0 80h0m10 -140h0m0 -10h0m0 150h0m0 -60h0m0 30h0m0 -50h0m0 50h0m10 10h0m0 -80h0m0 180h0m0 -120h0m0 30h0m10 -60h0m0 -30h0m0 0h0m0 70h0m0 -20h0m0 0h0m0 -10h0m0 -10h0m0 40h0m0 -10h0m0 -20h0m0 40h0m0 10h0m0 -50h0m0 -10h0m0 20h0m0 -40h0m10 140h0m0 -70h0m0 -40h0m0 40h0m0 -10h0m0 40h0m0 -40h0m0 30h0m0 20h0m0 -70h0m10 -80h0m0 70h0m0 20h0m0 0h0m0 -10h0m0 0h0m0 -110h0m0 80h0m10 60h0m0 -70h0m0 70h0m0 10h0m0 -20h0m0 20h0m0 20h0m0 -50h0m0 80h0m0 0h0m0 50h0m0 -120h0m10 90h0m0 -10h0m0 -110h0m0 60h0m0 -10h0m0 -50h0m0 40h0m0 40h0m0 10h0m0 -160h0m0 140h0m10 -80h0m0 -130h0m0 150h0m0 180h0m0 -270h0m0 180h0m0 -40h0m0 -70h0m0 10h0m0 10h0m0 30h0m0 60h0m0 -50h0m10 20h0m0 -120h0m0 60h0m0 30h0m0 -10h0m0 40h0m0 20h0m0 -20h0m10 -30h0m0 40h0m0 -90h0m0 -70h0m0 190h0m0 -60h0m0 -110h0m0 30h0m10 100h0m0 -10h0m0 -40h0m0 90h0m0 0h0m0 -120h0m0 30h0m0 -90h0m0 190h0m0 -130h0m0 -10h0m0 80h0m0 -10h0m0 -20h0m0 -100h0m10 100h0m0 100h0m0 -100h0m0 -120h0m0 90h0m0 -10h0m0 30h0m10 30h0m0 -130h0m0 20h0m0 -20h0m0 100h0m0 10h0m0 -20h0m0 10h0m0 -70h0m0 190h0m0 -120h0m10 90h0m0 -40h0m0 10h0m0 -90h0m0 50h0m0 -40h0m0 150h0m0 -70h0m0 40h0m10 -90h0m0 -20h0m0 40h0m0 -20h0m0 20h0m0 -70h0m10 10h0m0 110h0m0 -150h0m0 130h0m0 -60h0m0 10h0m0 -170h0m0 -10h0m0 170h0m0 0h0m10 -40h0m0 -20h0m0 -70h0m0 120h0m0 10h0m0 30h0m0 -70h0m10 100h0m0 -140h0m0 90h0m0 70h0m0 -10h0m0 -100h0m0 110h0m0 -40h0m0 -100h0m0 60h0m10 -110h0m0 30h0m0 60h0m0 30h0m0 40h0m0 -40h0m0 -40h0m0 -10h0m0 70h0m0 -170h0m0 160h0m0 -70h0m0 -30h0m0 120h0m0 -210h0m10 130h0m0 40h0m0 -30h0m0 20h0m0 -60h0m0 20h0m0 -70h0m0 -20h0m0 160h0m10 -110h0m0 120h0m0 -60h0m0 60h0m0 -50h0m0 100h0m0 -40h0m0 -100h0m0 -60h0m0 80h0m0 -70h0m0 70h0m0 90h0m0 -160h0m0 90h0m0 20h0m10 10h0m0 10h0m0 -80h0m0 -30h0m0 -20h0m0 190h0m0 -130h0m10 -20h0m0 50h0m0 70h0m0 -100h0m0 50h0m0 -10h0m0 50h0m0 -60h0m0 90h0m10 -160h0m0 80h0m0 10h0m0 0h0m0 -30h0m0 -10h0m0 20h0m0 -60h0m0 50h0m10 60h0m0 -20h0m0 -50h0m0 -50h0m0 30h0m0 0h0m0 70h0m0 70h0m10 10h0m0 -250h0m0 40h0m0 90h0m0 150h0m0 -40h0m0 -90h0m0 -100h0m0 -40h0m0 150h0m0 -20h0m0 10h0m10 30h0m0 -40h0m0 20h0m0 110h0m0 -180h0m0 70h0m0 -90h0m0 90h0m0 -50h0m0 -100h0m10 50h0m0 180h0m0 -180h0m0 100h0m0 0h0m0 -10h0m0 0h0m0 0h0m0 0h0m0 -70h0m0 50h0m0 0h0m10 -120h0m0 130h0m0 80h0m0 -90h0m0 10h0m0 -50h0m0 100h0m0 -20h0m10 0h0m0 -150h0m0 220h0m0 -80h0m0 -90h0m0 120h0m0 50h0m0 -20h0m0 -130h0m0 160h0m0 -110h0m0 -30h0m10 120h0m0 -50h0m0 -70h0m0 130h0m0 -20h0m0 -140h0m0 100h0m0 -40h0m0 50h0m0 -70h0m0 40h0m0 -30h0m10 80h0m0 -120h0m0 70h0m0 60h0m0 -110h0m0 50h0m0 -90h0m0 50h0m0 100h0m10 -60h0m0 0h0m0 -10h0m0 -60h0m0 -70h0m0 110h0m0 90h0m0 -90h0m0 80h0m0 -100h0m10 110h0m0 -60h0m0 -30h0m0 -50h0m0 60h0m0 -10h0m0 10h0m0 -180h0m0 210h0m0 -10h0m0 -30h0m0 -50h0m0 120h0m0 -50h0m10 -20h0m0 -40h0m0 150h0m0 -110h0m0 30h0m0 -30h0m0 -30h0m0 -10h0m0 60h0m0 40h0m0 -120h0m10 60h0m0 -10h0m0 140h0m0 -80h0m0 90h0m0 -60h0m0 -170h0m0 160h0m0 -110h0m0 190h0m10 -250h0m0 170h0m0 -50h0m0 50h0m0 -10h0m0 -50h0m0 70h0m0 -30h0m0 -20h0m0 -40h0m0 -40h0m0 110h0m0 40h0m10 -30h0m0 50h0m10 -110h0m0 0h0m0 40h0m0 -40h0m0 40h0m0 -100h0m0 30h0m0 20h0m0 -20h0m0 50h0m10 60h0m0 -170h0m0 100h0m0 100h0m0 -50h0m0 -100h0m0 130h0m0 -90h0m10 10h0m0 -10h0m0 20h0m0 -20h0m0 90h0m0 -70h0m0 60h0m10 -60h0m0 -30h0m0 60h0m0 0h0m0 -170h0m0 160h0m0 -120h0m0 180h0m10 -140h0m0 100h0m0 -20h0m0 -50h0m0 90h0m0 -70h0m0 20h0m0 -70h0m10 100h0m0 -100h0m0 110h0m0 -10h0m0 -70h0m0 60h0m0 -30h0m0 -130h0m0 150h0m0 30h0m0 -40h0m0 -120h0m0 140h0m0 -80h0m10 110h0m0 -140h0m0 190h0m0 -50h0m0 10h0m0 -190h0m0 20h0m0 50h0m10 60h0m0 -20h0m0 30h0m0 0h0m0 50h0m0 -90h0m0 -90h0m0 20h0m10 180h0m0 -110h0m0 0h0m0 50h0m0 60h0m0 -120h0m0 120h0m10 -60h0m0 -180h0m0 150h0m0 -20h0m0 60h0m0 -20h0m0 10h0m0 40h0m10 -30h0m0 -70h0m0 30h0m0 -60h0m0 40h0m10 0h0m0 -70h0m0 80h0m0 110h0m0 -80h0m0 -80h0m0 0h0m0 60h0m0 30h0m10 -170h0m0 130h0m0 -90h0m0 70h0m0 10h0m0 0h0m0 20h0m0 20h0m0 -30h0m0 70h0m0 -150h0m10 40h0m0 50h0m0 0h0m0 30h0m0 -120h0m0 60h0m0 10h0m0 50h0m10 -150h0m0 50h0m0 120h0m0 -110h0m0 -40h0m0 90h0m0 -80h0m0 130h0m0 -160h0m0 40h0m0 30h0m10 -10h0m0 70h0m0 -100h0m0 70h0m0 50h0m0 -10h0m0 0h0m0 -10h0m10 -240h0m0 230h0m0 -90h0m0 100h0m0 -200h0m0 170h0m0 -40h0m0 90h0m0 -180h0m0 50h0m0 100h0m0 -50h0m0 50h0m0 -70h0m10 0h0m0 90h0m0 30h0m0 -50h0m10 -50h0m0 -20h0m0 60h0m0 -60h0m0 90h0m0 -120h0m10 50h0m0 60h0m0 20h0m0 -20h0m0 20h0m0 -70h0m0 30h0m10 -110h0m0 180h0m0 -120h0m0 -90h0m0 90h0m0 -30h0m0 10h0m0 60h0m0 -70h0m0 110h0m10 -100h0m0 40h0m0 30h0m0 80h0m0 -200h0m0 90h0m0 20h0m0 20h0m0 -50h0m0 -10h0m0 -40h0m0 0h0m0 80h0m0 60h0m0 -200h0m10 50h0m0 40h0m0 30h0m0 30h0m0 80h0m0 -90h0m0 -10h0m0 40h0m0 -120h0m0 70h0m0 50h0m0 -10h0m0 -140h0m0 170h0m0 -110h0m10 -30h0m0 0h0m0 110h0m0 20h0m0 -180h0m0 200h0m0 -110h0m0 -20h0m0 0h0m0 -30h0m0 190h0m10 -100h0m0 -20h0m0 10h0m0 20h0m0 30h0m0 -50h0m0 40h0m0 0h0m0 60h0m10 -80h0m0 80h0m0 -30h0m0 -120h0m0 80h0m0 -70h0m0 120h0m0 -70h0m0 -40h0m0 110h0m10 10h0m0 -30h0m0 -100h0m0 60h0m0 0h0m0 -40h0m0 90h0m0 -60h0m0 30h0m0 50h0m0 -210h0m0 110h0m10 140h0m0 -100h0m0 10h0m0 10h0m0 90h0m0 -30h0m0 10h0m0 -80h0m10 -50h0m0 80h0m0 -120h0m0 100h0m0 -120h0m0 50h0m0 130h0m0 -130h0m10 50h0m0 110h0m0 -40h0m0 -70h0m0 -20h0m0 50h0m0 -10h0m0 -80h0m0 20h0m10 70h0m0 -30h0m0 60h0m0 -60h0m0 -20h0m0 -120h0m0 170h0m10 0h0m0 10h0m0 50h0m0 20h0m0 -70h0m0 30h0m0 -120h0m0 120h0m0 -30h0m0 80h0m10 -140h0m0 -20h0m0 -30h0m0 120h0m0 80h0m0 0h0m0 -110h0m0 -60h0m0 50h0m0 -60h0m0 110h0m0 -100h0m10 -10h0m0 50h0m0 40h0m0 -50h0m0 70h0m0 20h0m0 -170h0m0 50h0m0 0h0m10 30h0m0 60h0m0 -30h0m0 -10h0m0 10h0m0 50h0m0 -30h0m0 -50h0m0 10h0m10 100h0m0 -220h0m0 140h0m0 -110h0m0 0h0m0 50h0m0 90h0m0 -80h0m0 190h0m0 -130h0m10 -70h0m0 110h0m0 -150h0m0 50h0m0 10h0m0 120h0m0 -200h0m0 140h0m0 -40h0m0 10h0m0 90h0m0 -90h0m0 50h0m0 -30h0m0 -40h0m10 90h0m0 -40h0m0 0h0m0 -30h0m0 10h0m0 -100h0m10 120h0m0 60h0m0 30h0m0 -50h0m0 -80h0m0 -100h0m0 130h0m10 -20h0m0 10h0m0 -50h0m0 -30h0m10 30h0m0 -10h0m0 -80h0m0 240h0m0 -200h0m0 120h0m0 -10h0m0 -60h0m0 -40h0m0 180h0m10 -210h0m0 10h0m0 60h0m0 -20h0m0 110h0m0 -80h0m0 90h0m0 -40h0m0 -110h0m0 110h0m0 -100h0m10 30h0m0 40h0m0 -70h0m0 80h0m0 -20h0m0 -130h0m0 110h0m0 -30h0m0 40h0m10 -50h0m0 110h0m0 40h0m0 -210h0m0 90h0m0 -10h0m0 10h0m0 20h0m0 20h0m0 -40h0m0 50h0m0 -20h0m0 20h0m0 -80h0m0 -80h0m10 150h0m0 0h0m0 20h0m0 -70h0m0 -130h0m0 130h0m0 60h0m0 -40h0m0 20h0m0 -60h0m0 40h0m0 -60h0m0 70h0m0 -80h0m0 80h0m0 60h0m0 30h0m10 -150h0m0 90h0m0 -20h0m0 80h0m0 -40h0m0 -20h0m0 -40h0m0 -50h0m0 70h0m0 -40h0m0 40h0m10 10h0m0 -80h0m0 -40h0m0 70h0m0 40h0m0 -30h0m0 -40h0m0 -30h0m0 90h0m0 -20h0m0 10h0m0 -40h0m0 110h0m0 -80h0m0 100h0m0 -60h0m0 -90h0m10 60h0m0 -10h0m0 10h0m0 0h0m0 -70h0m0 70h0m0 -10h0m0 -20h0m0 30h0m0 10h0m0 0h0m0 -90h0m0 90h0m0 30h0m0 20h0m0 20h0m10 -100h0m0 20h0m0 -120h0m0 50h0m0 160h0m0 -100h0m0 -20h0m10 20h0m0 60h0m0 -50h0m0 0h0m0 -60h0m0 80h0m0 -50h0m10 10h0m0 100h0m0 0h0m0 -50h0m0 0h0m0 70h0m0 -10h0m10 -40h0m0 -20h0m0 60h0m0 -50h0m0 -60h0m0 90h0m0 0h0m10 40h0m0 -150h0m0 50h0m0 120h0m0 -120h0m0 80h0m0 -150h0m0 130h0m0 -70h0m0 20h0m10 -90h0m0 120h0m0 -60h0m0 30h0m0 40h0m0 -80h0m0 120h0m0 -120h0m0 -50h0m10 90h0m0 20h0m0 10h0m0 -30h0m0 -90h0m0 130h0m0 -70h0m0 90h0m0 -20h0m0 -30h0m0 90h0m0 -140h0m0 100h0m0 20h0m0 -170h0m0 220h0m0 -200h0m0 140h0m10 -60h0m0 -20h0m0 130h0m0 -80h0m0 10h0m0 50h0m0 -110h0m0 30h0m0 40h0m0 -100h0m0 110h0m10 -40h0m0 -40h0m0 90h0m0 -90h0m0 -10h0m0 70h0m0 -40h0m0 100h0m0 -90h0m0 -50h0m0 150h0m0 -70h0m0 90h0m0 -160h0m0 100h0m10 -20h0m0 -40h0m0 40h0m0 -40h0m0 70h0m0 0h0m0 -60h0m0 40h0m0 -30h0m10 -100h0m0 100h0m0 -10h0m0 -50h0m0 80h0m0 10h0m0 50h0m0 -10h0m0 -130h0m0 30h0m10 -10h0m0 70h0m0 -100h0m0 110h0m0 10h0m0 30h0m0 -150h0m0 40h0m0 -20h0m0 10h0m10 -50h0m0 170h0m0 -80h0m0 90h0m0 20h0m0 -200h0m0 70h0m0 30h0m0 -70h0m0 0h0m0 -20h0m0 50h0m0 -20h0m0 60h0m0 -20h0m10 90h0m0 -160h0m0 40h0m0 -40h0m0 110h0m0 50h0m0 -40h0m0 0h0m0 70h0m0 -150h0m0 -40h0m10 120h0m0 -130h0m0 90h0m0 -60h0m0 60h0m0 150h0m0 -110h0m0 -70h0m10 100h0m0 -120h0m0 40h0m0 -10h0m0 30h0m0 -140h0m0 220h0m0 -140h0m0 90h0m0 -70h0m0 70h0m0 0h0m0 -100h0m0 120h0m10 -180h0m0 130h0m0 60h0m0 -240h0m0 220h0m0 -120h0m0 60h0m0 -20h0m0 -30h0m0 30h0m0 10h0m0 0h0m0 -70h0m0 120h0m0 110h0m10 -170h0m0 -100h0m0 60h0m0 150h0m0 -60h0m0 -70h0m0 120h0m0 -10h0m0 -30h0m0 -120h0m0 90h0m10 30h0m0 20h0m0 -110h0m0 0h0m0 0h0m0 130h0m0 70h0m0 0h0m10 -190h0m0 30h0m0 -20h0m0 20h0m0 -10h0m0 -50h0m0 30h0m0 20h0m0 20h0m0 -50h0m0 20h0m0 70h0m10 -60h0m0 0h0m0 -90h0m0 110h0m0 -80h0m0 70h0m0 -30h0m0 30h0m0 -50h0m0 50h0m0 -70h0m0 200h0m10 -130h0m0 -60h0m0 210h0m0 -160h0m0 80h0m0 50h0m10 -150h0m0 110h0m0 -100h0m0 70h0m0 -40h0m0 -20h0m0 40h0m0 -70h0m0 60h0m0 -140h0m0 180h0m0 -60h0m10 20h0m0 0h0m0 100h0m0 -240h0m0 140h0m0 -20h0m0 -20h0m0 110h0m0 -100h0m0 50h0m0 -80h0m0 120h0m0 -200h0m0 110h0m0 40h0m0 -30h0m10 30h0m0 -60h0m0 120h0m0 -250h0m0 230h0m0 -30h0m0 -160h0m0 220h0m0 -130h0m0 140h0m0 -160h0m0 110h0m0 -90h0m0 -10h0m10 60h0m0 -50h0m0 40h0m0 -10h0m0 -20h0m0 80h0m0 -100h0m0 150h0m0 -140h0m0 50h0m10 -100h0m0 40h0m0 60h0m0 -60h0m0 -10h0m0 80h0m0 -20h0m0 20h0m0 -30h0m10 -10h0m0 0h0m0 10h0m0 20h0m0 -50h0m0 -40h0m0 30h0m0 80h0m0 -180h0m0 150h0m0 -30h0m0 -10h0m10 110h0m0 -130h0m0 30h0m0 20h0m0 -40h0m0 -40h0m0 50h0m0 100h0m0 -150h0m10 30h0m0 90h0m0 -130h0m0 100h0m0 -10h0m0 80h0m0 -230h0m0 150h0m0 30h0m0 -80h0m0 50h0m0 20h0m0 0h0m0 -50h0m0 40h0m10 -30h0m0 70h0m0 -10h0m0 -80h0m0 -50h0m0 170h0m0 -100h0m0 -50h0m0 30h0m0 -40h0m0 0h0m10 140h0m0 20h0m10 -120h0m0 10h0m0 -40h0m0 130h0m0 -130h0m0 20h0m0 70h0m0 -200h0m0 230h0m0 -140h0m0 50h0m0 -100h0m0 -10h0m0 80h0m0 110h0m0 -120h0m0 60h0m10 140h0m0 -180h0m0 -50h0m0 140h0m0 40h0m0 -90h0m0 20h0m0 -10h0m0 -60h0m10 150h0m0 -60h0m0 10h0m0 10h0m0 -70h0m0 40h0m0 -30h0m0 0h0m0 0h0m0 80h0m0 -70h0m0 10h0m0 -30h0m0 50h0m0 -40h0m10 30h0m0 -70h0m0 10h0m0 50h0m0 -100h0m0 80h0m0 10h0m0 -20h0m10 20h0m0 -10h0m0 -30h0m0 40h0m0 -140h0m0 60h0m0 -30h0m0 140h0m0 -30h0m0 -140h0m0 20h0m0 90h0m10 10h0m0 20h0m0 -10h0m0 -60h0m0 120h0m0 -20h0m0 -80h0m0 50h0m0 -30h0m0 10h0m10 -30h0m0 20h0m0 80h0m0 -80h0m0 120h0m0 -60h0m0 10h0m0 60h0m0 -180h0m0 50h0m0 30h0m0 -40h0m0 10h0m0 30h0m0 50h0m10 -200h0m0 120h0m0 70h0m0 -190h0m0 210h0m0 -30h0m0 -40h0m0 20h0m10 40h0m0 10h0m0 -30h0m0 -10h0m0 10h0m0 10h0m0 30h0m0 30h0m0 -230h0m0 90h0m0 90h0m0 -120h0m10 150h0m0 -120h0m0 90h0m0 -190h0m0 200h0m0 -70h0m0 100h0m10 -100h0m0 30h0m0 70h0m0 -100h0m0 120h0m0 -40h0m0 -110h0m0 30h0m0 70h0m0 0h0m0 -30h0m0 50h0m10 -20h0m0 -120h0m0 20h0m0 180h0m0 -90h0m0 10h0m0 -20h0m0 20h0m0 -50h0m0 30h0m0 -50h0m10 110h0m0 -60h0m0 10h0m0 20h0m0 -30h0m0 -110h0m0 120h0m0 10h0m0 50h0m10 20h0m0 -90h0m0 -70h0m0 40h0m0 80h0m0 -110h0m0 -20h0m10 -30h0m0 50h0m0 70h0m0 30h0m0 -70h0m0 -50h0m0 60h0m0 30h0m0 -70h0m0 100h0m0 -100h0m0 30h0m0 0h0m10 70h0m0 -110h0m0 -40h0m0 130h0m0 -90h0m0 60h0m0 30h0m0 -60h0m10 -110h0m0 150h0m0 -60h0m0 80h0m0 30h0m0 -50h0m0 -60h0m10 0h0m0 20h0m0 40h0m0 -50h0m0 140h0m0 -80h0m0 60h0m0 -80h0m0 -50h0m0 130h0m0 -120h0m0 40h0m0 -10h0m0 -50h0m0 130h0m0 -100h0m0 40h0m0 50h0m10 -180h0m0 40h0m0 50h0m0 10h0m0 20h0m0 -40h0m10 110h0m0 -60h0m0 -110h0m0 50h0m0 120h0m0 40h0m10 -160h0m0 40h0m0 30h0m0 -20h0m0 30h0m0 -40h0m0 20h0m0 -40h0m0 -50h0m0 60h0m10 30h0m0 -100h0m0 40h0m0 -40h0m0 10h0m0 70h0m0 50h0m0 -80h0m0 -30h0m0 20h0m0 110h0m10 -150h0m0 160h0m0 -80h0m0 -80h0m0 -60h0m0 40h0m0 150h0m0 -190h0m10 100h0m0 -80h0m0 150h0m0 -60h0m0 -10h0m0 -70h0m0 140h0m0 -180h0m0 120h0m0 40h0m0 20h0m10 -180h0m0 170h0m0 -20h0m0 -60h0m0 -10h0m0 70h0m0 -30h0m0 70h0m0 -170h0m0 130h0m0 -140h0m0 140h0m0 -180h0m10 160h0m0 -180h0m0 210h0m0 -120h0m0 0h0m0 80h0m0 0h0m0 70h0m10 -30h0m0 -70h0m0 50h0m0 -60h0m0 -60h0m0 80h0m0 50h0m0 -90h0m0 110h0m10 -180h0m0 120h0m0 -60h0m0 40h0m0 -70h0m0 80h0m0 90h0m0 -160h0m10 100h0m0 30h0m0 50h0m0 -90h0m0 -30h0m0 -50h0m0 50h0m0 0h0m0 10h0m0 -60h0m0 40h0m0 120h0m0 -70h0m10 10h0m0 -20h0m0 60h0m0 -60h0m0 60h0m0 -110h0m0 10h0m0 0h0m0 90h0m0 40h0m0 -100h0m0 50h0m0 -90h0m0 40h0m10 10h0m0 10h0m0 40h0m0 -20h0m0 -90h0m0 70h0m0 40h0m0 10h0m0 -50h0m0 -90h0m0 80h0m0 -50h0m10 -30h0m0 -90h0m0 70h0m0 70h0m0 -40h0m0 50h0m0 -70h0m0 10h0m0 80h0m10 90h0m0 -70h0m0 70h0m0 -70h0m0 -30h0m0 0h0m0 20h0m0 80h0m0 -70h0m0 40h0m0 0h0m0 -10h0m0 -60h0m0 20h0m10 -40h0m0 60h0m0 20h0m0 -10h0m0 10h0m0 -70h0m0 0h0m0 0h0m10 70h0m0 -10h0m0 -40h0m0 140h0m0 -260h0m0 110h0m0 0h0m0 30h0m0 -170h0m10 190h0m0 60h0m0 -90h0m0 -60h0m0 -110h0m0 180h0m0 80h0m0 -40h0m0 10h0m0 -60h0m0 -140h0m0 160h0m0 -60h0m10 100h0m0 60h0m0 -70h0m0 -10h0m0 -10h0m0 40h0m0 -120h0m0 60h0m10 70h0m0 -20h0m0 0h0m0 -80h0m0 40h0m0 0h0m0 60h0m0 -90h0m0 -70h0m0 120h0m0 30h0m0 0h0m0 -50h0m0 20h0m10 0h0m0 -60h0m0 110h0m0 -80h0m0 30h0m0 -80h0m0 70h0m0 10h0m0 -20h0m0 0h0m0 -20h0m10 90h0m0 30h0m0 -170h0m0 80h0m0 -70h0m0 30h0m0 60h0m0 10h0m0 -110h0m0 -30h0m0 250h0m0 -150h0m0 -20h0m10 70h0m0 -40h0m0 0h0m0 -10h0m0 10h0m0 -40h0m0 130h0m0 -160h0m0 40h0m0 -110h0m0 90h0m0 10h0m0 60h0m0 -60h0m0 -40h0m10 150h0m0 -30h0m0 10h0m0 -50h0m0 -10h0m0 0h0m0 60h0m0 -150h0m0 190h0m0 -50h0m0 30h0m0 20h0m0 -190h0m0 170h0m0 20h0m10 -40h0m0 -60h0m0 60h0m0 -40h0m0 10h0m0 0h0m0 -10h0m0 0h0m10 0h0m0 -80h0m0 0h0m0 50h0m0 20h0m0 60h0m0 -110h0m0 30h0m0 -60h0m0 80h0m0 50h0m0 0h0m0 0h0m0 -150h0m0 140h0m10 -30h0m0 -100h0m0 160h0m0 -100h0m0 80h0m0 -60h0m0 -40h0m0 60h0m0 -20h0m0 20h0m0 40h0m0 -70h0m0 20h0m10 -90h0m0 140h0m0 -110h0m0 80h0m0 20h0m0 0h0m0 -60h0m0 20h0m10 30h0m0 -150h0m0 100h0m0 -60h0m0 50h0m0 -50h0m0 20h0m10 40h0m0 60h0m0 -70h0m0 40h0m0 -100h0m0 130h0m0 -20h0m0 -90h0m0 60h0m0 20h0m10 -200h0m0 200h0m0 -30h0m0 -150h0m0 240h0m0 -60h0m0 -10h0m0 70h0m0 -10h0m0 -80h0" transform="scale(0.1)" fill="none" stroke="#000" stroke-width="37" stroke-linecap="round"/>
<path d="M1655 1125h0m320 10h0m-140 430h0m450 150h0m300 -590h0m160 430h0m120 -420h0m740 400h0m180 -420h0m130 20h0m940 440h0m710 -450h0m180 450h0m640 -30h0m-50 130h0m310 130h0m140 0h0m220 260h0m430 -940h0m740 480h0m810 -490h0m230 0h0m-280 450h0m90 10h0m40 290h0m360 710h0m490 -1030h0m80 220h0m230 350h0m200 -420h0m90 -150h0m120 60h0m260 -30h0m0 20h0m1530 -220h0m80 -380h0m100 450h0m420 0h0" transform="scale(0.1)" fill="none" stroke="#ffa500" stroke-width="34" stroke-linecap="round"/>
<line x1="162.00" y1="321.00" x2="162.00" y2="35.5" stroke="#800080" stroke-width="2.08" stroke-dasharray="2.08 3.44"/>
<line x1="1133.00" y1="321.00" x2="1133.00" y2="35.5" stroke="#800080" stroke-width="2.08" stroke-dasharray="2.08 3.44"/>
<line x1="1303.00" y1="321.00" x2="1303.00" y2="35.5" stroke="#800080" stroke-width="2.08" stroke-dasharray="2.08 3.44"/>
</g>
<text x="647.71" y="311.90" font-size="13.89" text-anchor="middle" textLength="44.18" lengthAdjust="spacingAndGlyphs">55241</text>
<text x="1217.98" y="291.90" font-size="13.89" text-anchor="middle" textLength="44.18" lengthAdjust="spacingAndGlyphs">54418</text>
<rect x="105.5" y="35.5" width="1380.0" height="286.0" fill="none" stroke="#000" stroke-width="1.1"/>
<line x1="162.50" y1="321.5" x2="162.50" y2="326.86" stroke="#000" stroke-width="1.1"/>
<text x="162.40" y="341.90" font-size="13.89" text-anchor="middle" textLength="8.84" lengthAdjust="spacingAndGlyphs">0</text>
<line x1="411.50" y1="321.5" x2="411.50" y2="326.86" stroke="#000" stroke-width="1.1"/>
<text x="411.02" y="341.90" font-size="13.89" text-anchor="middle" textLength="35.35" lengthAdjust="spacingAndGlyphs">2000</text>
<line x1="659.50" y1="321.5" x2="659.50" y2="326.86" stroke="#000" stroke-width="1.1"/>
<text x="659.64" y="341.90" font-size="13.89" text-anchor="middle" textLength="35.35" lengthAdjust="spacingAndGlyphs">4000</text>
<line x1="908.50" y1="321.5" x2="908.50" y2="326.86" stroke="#000" stroke-width="1.1"/>
<text x="908.26" y="341.90" font-size="13.89" text-anchor="middle" textLength="35.35" lengthAdjust="spacingAndGlyphs">6000</text>
<line x1="1156.50" y1="321.5" x2="1156.50" y2="326.86" stroke="#000" stroke-width="1.1"/>
<text x="1156.88" y="341.90" font-size="13.89" text-anchor="middle" textLength="35.35" lengthAdjust="spacingAndGlyphs">8000</text>
<line x1="1405.50" y1="321.5" x2="1405.50" y2="326.86" stroke="#000" stroke-width="1.1"/>
<text x="1405.50" y="341.90" font-size="13.89" text-anchor="middle" textLength="44.18" lengthAdjust="spacingAndGlyphs">10000</text>
<line x1="100.14" y1="60.50" x2="105.5" y2="60.50" stroke="#000" stroke-width="1.1"/>
<text x="95.80" y="65.00" font-size="13.89" text-anchor="end" textLength="30.92" lengthAdjust="spacingAndGlyphs">5.96</text>
<line x1="100.14" y1="103.50" x2="105.5" y2="103.50" stroke="#000" stroke-width="1.1"/>
<text x="95.80" y="108.00" font-size="13.89" text-anchor="end" textLength="30.92" lengthAdjust="spacingAndGlyphs">5.94</text>
<line x1="100.14" y1="146.50" x2="105.5" y2="146.50" stroke="#000" stroke-width="1.1"/>
<text x="95.80" y="151.00" font-size="13.89" text-anchor="end" textLength="30.92" lengthAdjust="spacingAndGlyphs">5.92</text>
<line x1="100.14" y1="188.50" x2="105.5" y2="188.50" stroke="#000" stroke-width="1.1"/>
<text x="95.80" y="194.00" font-size="13.89" text-anchor="end" textLength="30.92" lengthAdjust="spacingAndGlyphs">5.90</text>
<line x1="100.14" y1="231.50" x2="105.5" y2="231.50" stroke="#000" stroke-width="1.1"/>
<text x="95.80" y="237.00" font-size="13.89" text-anchor="end" textLength="30.92" lengthAdjust="spacingAndGlyphs">5.88</text>
<line x1="100.14" y1="274.50" x2="105.5" y2="274.50" stroke="#000" stroke-width="1.1"/>
<text x="95.80" y="280.00" font-size="13.89" text-anchor="end" textLength="30.92" lengthAdjust="spacingAndGlyphs">5.86</text>
<line x1="100.14" y1="317.50" x2="105.5" y2="317.50" stroke="#000" stroke-width="1.1"/>
<text x="95.80" y="322.00" font-size="13.89" text-anchor="end" textLength="30.92" lengthAdjust="spacingAndGlyphs">5.84</text>
<rect x="1361.4" y="42.3" width="117.29999999999995" height="27.0" rx="2.8" fill="#fff" fill-opacity="0.8" stroke="#d6d6d6" stroke-width="1.11"/>
<line x1="1366.4" y1="53.9" x2="1395.6" y2="53.9" stroke="#008000" stroke-width="2.08"/>
<text x="1406.00" y="58.70" font-size="13.89" text-anchor="start" textLength="30.86" lengthAdjust="spacingAndGlyphs">mag</text>
<text x="1436.86" y="60.90" font-size="10.00" text-anchor="start" textLength="34.76" lengthAdjust="spacingAndGlyphs" font-style="italic">AGASC</text>
<rect x="1348.5" y="268.5" width="130.0" height="46.0" rx="2.8" fill="#fff" fill-opacity="0.8" stroke="#d6d6d6" stroke-width="1.11"/>
<circle cx="1367.8" cy="281.6" r="1.9" fill="#ffa500"/>
<circle cx="1367.8" cy="302.4" r="1.9" fill="#000"/>
<text x="1392.50" y="284.80" font-size="13.89" text-anchor="start" textLength="80.07" lengthAdjust="spacingAndGlyphs">Highlighted</text>
<text x="1392.50" y="305.80" font-size="13.89" text-anchor="start" textLength="20.04" lengthAdjust="spacingAndGlyphs">OK</text>
<text x="795.50" y="371.70" font-size="16.67" text-anchor="middle" textLength="175.90" lengthAdjust="spacingAndGlyphs">Magnitude Estimates</text>
<g clip-path="url(#c2)">
<path d="M1625 5355h0m0 210h0m0 290h0m0 -450h0m0 -10h0m0 10h0m0 -170h0m0 250h0m0 -130h0m0 40h0m0 -110h0m10 40h0m0 150h0m0 -20h0m0 -210h0m0 150h0m0 190h0m0 -290h0m0 200h0m0 40h0m0 -190h0m0 20h0m0 -180h0m10 350h0m0 -80h0m0 -270h0m0 -210h0m0 340h0m0 30h0m0 -10h0m0 90h0m0 0h0m0 -240h0m0 50h0m0 290h0m0 -380h0m0 200h0m0 160h0m0 -170h0m10 -330h0m0 310h0m0 -90h0m0 -130h0m0 200h0m0 180h0m0 -270h0m0 -10h0m0 100h0m0 -40h0m0 200h0m0 -90h0m0 -120h0m10 360h0m0 -920h0m0 490h0m0 170h0m0 50h0m0 -40h0m0 -30h0m0 -180h0m10 30h0m0 -80h0m0 80h0m0 110h0m0 -30h0m0 260h0m0 -500h0m0 180h0m0 180h0m0 -250h0m0 -220h0m0 330h0m0 -160h0m10 -50h0m0 -170h0m0 200h0m0 -70h0m10 180h0m0 -170h0m0 190h0m0 -70h0m0 280h0m10 -290h0m0 130h0m0 -30h0m0 -30h0m0 70h0m10 -230h0m0 280h0m0 -450h0m0 140h0m0 370h0m0 180h0m0 -500h0m0 240h0m10 -40h0m0 -350h0m0 150h0m0 330h0m0 -260h0m0 250h0m0 -400h0m0 490h0m0 0h0m0 -290h0m10 -80h0m0 320h0m0 -300h0m0 -50h0m0 100h0m0 70h0m0 -110h0m0 210h0m0 -220h0m0 -150h0m0 150h0m0 260h0m0 -60h0m10 20h0m0 -20h0m0 -520h0m0 330h0m0 120h0m0 50h0m0 80h0m0 0h0m0 -260h0m0 300h0m10 -270h0m0 20h0m0 280h0m0 -140h0m0 -260h0m10 250h0m0 -40h0m0 -210h0m0 90h0m0 40h0m0 160h0m0 230h0m0 -190h0m0 -100h0m0 240h0m0 -470h0m0 330h0m10 70h0m0 50h0m0 -420h0m0 100h0m0 250h0m0 -260h0m0 140h0m0 -60h0m0 50h0m0 -10h0m0 140h0m0 -180h0m0 -10h0m10 250h0m0 -390h0m0 150h0m0 -110h0m0 110h0m0 180h0m0 10h0m0 -190h0m0 60h0m0 -70h0m10 50h0m0 20h0m0 -60h0m0 20h0m0 610h0m0 -960h0m0 620h0m0 -110h0m0 -80h0m0 50h0m0 230h0m0 -270h0m10 -80h0m0 -70h0m0 200h0m0 -160h0m0 -10h0m0 120h0m0 110h0m0 -560h0m0 570h0m0 -270h0m0 -190h0m10 430h0m0 40h0m0 -150h0m0 -120h0m0 270h0m0 -170h0m0 120h0m0 60h0m0 -110h0m0 250h0m0 -440h0m0 420h0m0 -370h0m10 170h0m0 0h0m0 -110h0m0 400h0m0 -230h0m0 30h0m0 -110h0m0 90h0m10 -310h0m0 330h0m0 50h0m0 -110h0m0 240h0m0 -140h0m0 -180h0m0 -160h0m0 170h0m0 220h0m10 110h0m0 -270h0m0 -260h0m0 370h0m0 -10h0m0 -320h0m10 290h0m0 -260h0m0 110h0m0 90h0m0 -160h0m0 -110h0m0 470h0m0 40h0m0 -530h0m0 50h0m0 340h0m0 -140h0m0 200h0m10 -150h0m0 0h0m0 160h0m0 -300h0m0 320h0m0 -290h0m0 -180h0m0 330h0m0 -290h0m0 90h0m0 180h0m0 -200h0m0 0h0m10 200h0m0 -10h0m0 40h0m0 40h0m0 -190h0m0 240h0m0 -270h0m0 -120h0m0 230h0m0 170h0m0 -180h0m0 -260h0m10 -120h0m0 390h0m0 -20h0m0 0h0m0 -50h0m0 210h0m0 -110h0m0 150h0m0 -170h0m0 20h0m0 30h0m10 140h0m0 -20h0m0 10h0m0 -490h0m0 370h0m0 -210h0m10 200h0m0 160h0m0 -200h0m0 80h0m0 -190h0m0 30h0m0 80h0m10 -190h0m0 260h0m0 60h0m0 -20h0m0 -580h0m0 580h0m10 50h0m0 -300h0m0 0h0m0 200h0m0 140h0m0 110h0m0 -300h0m0 140h0m0 -130h0m10 -330h0m0 410h0m0 160h0m0 -90h0m0 -400h0m0 180h0m0 -160h0m0 50h0m0 -160h0m0 310h0m0 -10h0m0 330h0m0 -470h0m10 90h0m0 210h0m0 -150h0m0 -90h0m0 0h0m0 40h0m0 -20h0m0 120h0m0 -380h0m0 10h0m0 510h0m0 -310h0m10 70h0m0 160h0m0 -50h0m0 -310h0m0 10h0m0 180h0m0 -60h0m0 30h0m0 0h0m0 310h0m0 -460h0m0 320h0m10 -530h0m0 570h0m0 -80h0m0 -180h0m0 -100h0m0 290h0m0 -200h0m0 90h0m0 -340h0m0 230h0m0 30h0m10 10h0m0 -100h0m0 180h0m0 -300h0m0 220h0m0 280h0m0 -120h0m0 -280h0m10 330h0m0 -130h0m0 -420h0m0 410h0m0 -400h0m0 230h0m0 0h0m0 60h0m0 130h0m0 20h0m10 -190h0m0 210h0m0 -200h0m0 30h0m0 -300h0m0 240h0m0 80h0m0 -220h0m0 90h0m0 130h0m0 -90h0m0 -210h0m0 240h0m10 -30h0m0 260h0m0 -450h0m0 110h0m0 340h0m0 -340h0m0 240h0m0 30h0m0 -30h0m0 80h0m0 0h0m0 -50h0m0 -240h0m10 200h0m0 -150h0m0 20h0m0 50h0m0 -100h0m0 170h0m0 -120h0m0 50h0m0 260h0m10 -340h0m0 240h0m0 -150h0m0 -50h0m0 250h0m0 -210h0m0 -250h0m0 280h0m0 20h0m10 -280h0m0 220h0m0 -40h0m0 10h0m0 100h0m10 -70h0m0 -160h0m0 350h0m0 -520h0m0 290h0m0 70h0m0 -190h0m0 290h0m0 -140h0m0 -50h0m0 20h0m0 -140h0m0 360h0m10 -170h0m0 -170h0m0 270h0m0 -90h0m0 30h0m0 -70h0m10 70h0m0 70h0m0 -150h0m0 -10h0m0 80h0m0 10h0m0 -30h0m10 -190h0m0 220h0m0 -190h0m0 10h0m0 -60h0m0 120h0m0 10h0m0 -40h0m0 -90h0m10 270h0m0 -90h0m0 200h0m0 -250h0m0 80h0m0 -180h0m0 270h0m0 -430h0m0 -20h0m0 570h0m0 -370h0m10 240h0m0 -200h0m0 330h0m0 -200h0m0 -200h0m0 30h0m0 200h0m10 -80h0m0 -140h0m0 -150h0m0 100h0m0 310h0m0 -20h0m0 -70h0m0 -50h0m0 310h0m0 -150h0m10 -90h0m0 90h0m0 210h0m0 -220h0m0 -230h0m0 -50h0m0 380h0m10 -240h0m0 90h0m0 -70h0m0 -210h0m0 260h0m0 90h0m0 -60h0m0 40h0m0 190h0m0 -350h0m0 210h0m0 -280h0m0 -20h0m0 220h0m10 10h0m0 0h0m0 0h0m0 110h0m0 -40h0m0 260h0m0 -450h0m0 -90h0m0 250h0m0 -50h0m10 -60h0m0 80h0m0 -60h0m0 220h0m0 -240h0m0 50h0m0 -30h0m0 230h0m0 -60h0m0 -280h0m0 290h0m0 -10h0m10 -230h0m0 70h0m0 150h0m0 -160h0m0 -20h0m0 -200h0m0 90h0m0 250h0m0 -90h0m0 180h0m10 -130h0m0 -140h0m0 170h0m0 -40h0m0 -150h0m0 -280h0m0 270h0m0 -10h0m0 160h0m0 -170h0m0 300h0m0 -50h0m0 130h0m0 -420h0m10 190h0m0 0h0m0 0h0m0 20h0m0 30h0m0 -50h0m0 210h0m0 110h0m0 -140h0m0 -60h0m10 -230h0m0 -40h0m0 200h0m0 -300h0m0 230h0m0 110h0m0 170h0m10 -260h0m0 -60h0m0 160h0m0 0h0m0 40h0m0 -360h0m0 290h0m10 -30h0m0 30h0m0 10h0m0 -20h0m0 -290h0m0 80h0m0 0h0m10 290h0m0 -140h0m0 280h0m0 -350h0m0 50h0m0 -210h0m0 210h0m0 -160h0m0 260h0m10 -50h0m0 260h0m0 -180h0m0 -50h0m0 140h0m0 -230h0m0 -190h0m0 330h0m0 20h0m0 -300h0m10 100h0m0 180h0m0 -170h0m0 190h0m0 190h0m0 -220h0m0 -190h0m0 50h0m0 10h0m10 170h0m0 50h0m0 -290h0m0 80h0m0 -260h0m0 520h0m0 -400h0m0 40h0m0 110h0m0 330h0m0 30h0m0 -440h0m10 -40h0m0 40h0m0 210h0m0 -40h0m0 -80h0m0 250h0m0 -240h0m0 -30h0m0 -80h0m0 290h0m10 -350h0m0 170h0m0 -20h0m0 170h0m0 -50h0m0 -180h0m0 190h0m0 -150h0m0 -10h0m0 90h0m0 120h0m0 -370h0m0 -80h0m0 -10h0m10 370h0m0 -70h0m0 60h0m0 -70h0m0 0h0m0 -10h0m0 -80h0m0 90h0m0 -110h0m0 640h0m0 -680h0m0 450h0m0 -660h0m0 590h0m0 -210h0m0 -40h0m10 -270h0m0 490h0m0 -90h0m0 -230h0m0 320h0m0 -560h0m0 180h0m0 410h0m0 -370h0m0 70h0m0 200h0m0 -310h0m10 190h0m0 -200h0m0 140h0m0 -270h0m0 110h0m0 110h0m0 80h0m0 100h0m0 -190h0m0 -90h0m0 50h0m10 140h0m0 -30h0m0 -140h0m0 20h0m0 -260h0m0 600h0m0 -200h0m0 30h0m0 -180h0m10 -180h0m0 470h0m0 -180h0m0 -190h0m0 210h0m0 -190h0m0 320h0m0 -460h0m0 120h0m0 220h0m0 -390h0m0 -50h0m0 270h0m10 0h0m0 80h0m0 140h0m10 -320h0m0 190h0m0 -90h0m0 130h0m0 -40h0m10 -90h0m0 -70h0m0 60h0m0 140h0m0 -290h0m0 140h0m0 -30h0m0 -30h0m0 30h0m0 230h0m0 -80h0m0 150h0m10 -340h0m0 390h0m0 -270h0m0 100h0m0 0h0m0 20h0m0 -190h0m0 110h0m0 80h0m0 -30h0m0 30h0m10 -350h0m0 350h0m0 -130h0m0 90h0m0 -120h0m0 90h0m0 150h0m0 -180h0m0 -170h0m0 30h0m0 380h0m10 -370h0m0 50h0m0 140h0m0 -120h0m0 240h0m0 -200h0m0 290h0m0 -280h0m0 -60h0m0 280h0m0 40h0m10 -160h0m0 250h0m0 -320h0m0 40h0m0 -350h0m0 410h0m0 200h0m0 -270h0m10 80h0m0 -190h0m0 270h0m0 -80h0m0 30h0m0 -20h0m0 70h0m0 -210h0m0 80h0m0 160h0m10 -200h0m0 -20h0m0 210h0m0 50h0m0 -90h0m0 -130h0m0 90h0m0 20h0m0 250h0m0 -180h0m10 -60h0m0 -100h0m0 110h0m0 100h0m0 -10h0m0 -150h0m0 90h0m0 470h0m10 -300h0m0 -40h0m0 -220h0m0 70h0m0 -20h0m0 50h0m0 130h0m0 30h0m0 -190h0m0 -40h0m0 -220h0m0 360h0m0 -60h0m10 10h0m0 -370h0m0 280h0m0 -60h0m0 170h0m0 10h0m0 -170h0m0 480h0m0 -260h0m0 -170h0m10 90h0m0 280h0m0 -230h0m0 -40h0m0 80h0m0 -240h0m0 240h0m0 -110h0m10 240h0m0 -220h0m0 -140h0m0 20h0m0 380h0m0 -230h0m0 90h0m10 -30h0m0 50h0m0 0h0m0 -130h0m0 -230h0m0 260h0m0 -300h0m0 390h0m0 140h0m0 -160h0m0 -110h0m0 150h0m10 70h0m0 -440h0m0 40h0m0 50h0m0 90h0m0 40h0m0 120h0m0 -50h0m0 -70h0m10 180h0m0 -150h0m0 -30h0m0 70h0m0 -30h0m0 10h0m0 -220h0m0 340h0m0 30h0m0 -90h0m0 -210h0m0 80h0m0 280h0m10 -100h0m0 -350h0m0 500h0m10 -360h0m0 -270h0m0 580h0m0 -330h0m0 250h0m0 -150h0m0 50h0m10 250h0m0 -270h0m0 -130h0m0 70h0m0 -310h0m0 510h0m0 -110h0m0 180h0m0 -60h0m0 -400h0m10 -60h0m0 40h0m0 150h0m0 0h0m0 -280h0m0 60h0m0 270h0m0 -230h0m0 180h0m0 -280h0m10 150h0m0 100h0m10 160h0m0 -130h0m0 -60h0m0 10h0m0 40h0m0 110h0m0 -130h0m10 -20h0m0 -210h0m0 170h0m0 -70h0m0 210h0m0 0h0m0 40h0m0 -60h0m0 -190h0m0 -180h0m0 340h0m0 -440h0m0 330h0m0 -110h0m10 390h0m0 -300h0m0 -40h0m0 -130h0m0 290h0m0 -70h0m0 0h0m0 160h0m0 -390h0m0 150h0m0 -320h0m10 350h0m0 -110h0m0 330h0m0 -110h0m0 0h0m0 -420h0m0 320h0m10 200h0m0 -220h0m0 210h0m0 -460h0m0 330h0m10 50h0m0 -50h0m0 -300h0m0 290h0m0 -260h0m0 210h0m0 -20h0m0 -160h0m0 260h0m0 -190h0m0 170h0m0 180h0m0 -230h0m0 40h0m0 50h0m0 -100h0m10 30h0m0 -200h0m0 150h0m0 190h0m0 -130h0m0 -40h0m0 -130h0m0 20h0m0 230h0m0 -370h0m0 120h0m0 90h0m0 90h0m0 280h0m10 -640h0m0 90h0m0 20h0m0 320h0m0 30h0m0 -110h0m0 -30h0m0 180h0m0 -160h0m10 -240h0m0 520h0m0 -400h0m0 -10h0m0 160h0m0 -50h0m0 20h0m0 -30h0m0 -170h0m10 350h0m0 -640h0m0 230h0m0 170h0m0 -50h0m10 80h0m0 -210h0m0 -20h0m0 410h0m0 -260h0m0 -100h0m0 280h0m0 -170h0m0 50h0m0 40h0m0 30h0m0 -200h0m10 320h0m0 -270h0m0 -30h0m0 110h0m0 170h0m0 80h0m0 -40h0m0 -110h0m0 -130h0m0 480h0m10 -590h0m0 340h0m0 -220h0m0 230h0m0 -30h0m0 -180h0m0 250h0m0 -470h0m0 430h0m0 40h0m0 -290h0m10 -40h0m0 340h0m0 -250h0m0 330h0m0 -460h0m0 280h0m0 130h0m0 -320h0m0 110h0m10 -50h0m0 220h0m0 -350h0m0 160h0m0 230h0m0 -160h0m0 160h0m0 40h0m0 -420h0m0 -20h0m0 -20h0m0 520h0m0 -200h0m0 -120h0m0 360h0m10 -10h0m0 -530h0m0 250h0m0 40h0m0 170h0m0 -530h0m0 410h0m0 80h0m0 -480h0m0 340h0m0 280h0m0 -410h0m0 30h0m0 220h0m0 -160h0m0 -200h0m0 -30h0m0 90h0m0 270h0m10 -280h0m0 80h0m0 340h0m0 -240h0m0 120h0m0 -180h0m0 200h0m0 -370h0m0 320h0m0 -50h0m0 50h0m0 -330h0m10 330h0m0 190h0m0 -150h0m0 -270h0m0 40h0m0 -340h0m0 410h0m0 -20h0m0 100h0m0 -100h0m0 10h0m0 -30h0m0 350h0m10 -510h0m0 230h0m0 60h0m0 40h0m0 -130h0m0 -90h0m0 -50h0m0 120h0m0 -230h0m0 580h0m10 -310h0m0 -120h0m0 20h0m0 80h0m0 180h0m0 -70h0m0 -150h0m0 170h0m10 -210h0m0 270h0m0 -120h0m0 210h0m0 -140h0m0 -190h0m0 110h0m0 130h0m0 -510h0m0 440h0m10 -150h0m0 -150h0m0 390h0m0 -130h0m0 0h0m0 -150h0m0 60h0m0 160h0m0 70h0m0 30h0m0 -290h0m10 -70h0m0 180h0m0 30h0m0 -200h0m0 300h0m0 -40h0m0 -430h0m0 230h0m10 100h0m0 360h0m0 -450h0m0 210h0m0 -260h0m0 30h0m0 110h0m0 -100h0m0 -130h0m10 30h0m0 220h0m0 -90h0m0 120h0m0 -50h0m0 180h0m0 -390h0m0 210h0m0 -90h0m0 250h0m0 160h0m0 -170h0m10 -200h0m0 -30h0m0 -190h0m0 230h0m0 40h0m0 -160h0m0 110h0m0 -60h0m0 -130h0m0 500h0m0 -430h0m0 510h0m10 -280h0m0 30h0m0 -90h0m0 -250h0m0 290h0m0 -50h0m0 -60h0m0 230h0m0 90h0m0 -320h0m0 0h0m0 20h0m0 70h0m0 130h0m0 -290h0m10 230h0m0 -290h0m0 320h0m0 -70h0m0 20h0m0 -350h0m0 280h0m0 -200h0m0 260h0m0 -380h0m10 230h0m0 -100h0m0 70h0m0 240h0m0 -370h0m0 150h0m0 -230h0m0 550h0m0 -80h0m0 -320h0m0 50h0m0 450h0m0 -240h0m0 30h0m0 -190h0m10 -110h0m0 40h0m0 170h0m0 -60h0m0 10h0m0 180h0m0 -280h0m0 100h0m10 380h0m0 -380h0m0 -100h0m0 -160h0m0 230h0m0 -80h0m0 140h0m0 -120h0m0 -10h0m0 50h0m0 100h0m0 10h0m0 -390h0m10 120h0m0 -40h0m0 180h0m0 -60h0m0 400h0m0 -250h0m0 -140h0m0 150h0m0 -100h0m10 260h0m0 -110h0m0 -300h0m0 550h0m0 -440h0m0 10h0m0 -30h0m0 -170h0m0 20h0m0 240h0m0 -30h0m10 110h0m0 30h0m0 100h0m0 -100h0m0 -330h0m0 0h0m0 70h0m0 50h0m0 140h0m0 -50h0m0 200h0m0 -280h0m10 40h0m0 -10h0m0 110h0m0 0h0m0 0h0m0 -270h0m0 60h0m0 150h0m0 -220h0m10 0h0m0 -50h0m0 370h0m0 -280h0m0 70h0m0 80h0m0 150h0m0 -140h0m0 50h0m0 -240h0m0 -210h0m0 590h0m0 -200h0m0 -110h0m10 290h0m0 -140h0m0 -210h0m0 390h0m0 -480h0m0 80h0m0 140h0m0 -10h0m10 30h0m0 80h0m0 -140h0m0 -110h0m0 0h0m0 60h0m0 260h0m0 -100h0m10 -300h0m0 120h0m0 -30h0m0 -200h0m0 470h0m0 -340h0m0 -10h0m10 320h0m0 140h0m0 -120h0m0 -170h0m0 280h0m0 -40h0m0 -220h0m0 100h0m0 -190h0m10 190h0m0 -100h0m0 -90h0m0 170h0m0 -130h0m0 -40h0m0 -40h0m0 130h0m0 90h0m0 -50h0m0 -150h0m10 200h0m0 -140h0m0 20h0m0 -80h0m0 -70h0m0 -30h0m0 280h0m0 -120h0m0 -70h0m10 100h0m0 -80h0m0 350h0m0 -610h0m0 290h0m0 -210h0m0 230h0m0 -140h0m10 20h0m0 -100h0m0 340h0m0 -220h0m0 300h0m0 -80h0m0 60h0m0 -200h0m0 -260h0m0 480h0m0 -420h0m0 180h0m10 110h0m0 50h0m0 -280h0m0 100h0m0 -80h0m0 190h0m0 260h0m0 0h0m10 -370h0m0 220h0m0 -180h0m0 120h0m0 0h0m0 270h0m0 -530h0m0 520h0m0 -230h0m0 -200h0m0 480h0m0 -400h0m0 -130h0m10 -150h0m0 370h0m0 -140h0m0 240h0m0 -340h0m0 190h0m0 200h0m0 -130h0m10 -130h0m0 100h0m0 -270h0m0 290h0m0 40h0m0 -240h0m0 200h0m0 120h0m0 -380h0m0 300h0m0 -200h0m0 130h0m0 -610h0m0 650h0m0 -50h0m10 10h0m0 120h0m0 -370h0m0 280h0m0 30h0m0 -150h0m0 430h0m10 -290h0m0 -50h0m0 -200h0m0 190h0m0 200h0m0 -170h0m0 -70h0m0 170h0m0 210h0m0 -200h0m0 -30h0m0 -120h0m10 260h0m0 110h0m0 -190h0m0 80h0m0 -300h0m0 -160h0m0 500h0m0 -370h0m10 400h0m0 170h0m0 -270h0m0 -140h0m0 10h0m0 0h0m0 50h0m0 30h0m0 -20h0m0 190h0m0 -280h0m0 -160h0m0 180h0m0 20h0m0 -130h0m0 90h0m0 -20h0m10 240h0m0 -50h0m0 110h0m0 -90h0m0 140h0m0 -230h0m0 80h0m10 0h0m0 -270h0m0 140h0m0 20h0m0 80h0m0 -90h0m0 60h0m0 -390h0m0 350h0m0 170h0m10 70h0m0 -350h0m0 110h0m0 -180h0m0 230h0m0 30h0m0 170h0m0 -150h0m0 -100h0m0 260h0m0 -260h0m0 140h0m0 100h0m0 -280h0m10 280h0m0 -150h0m0 -130h0m0 -110h0m0 0h0m0 260h0m0 -200h0m10 230h0m0 -90h0m0 -210h0m0 180h0m0 210h0m0 -60h0m0 130h0m0 -80h0m0 -510h0m0 290h0m0 80h0m0 30h0m0 -270h0m0 110h0m0 60h0m10 170h0m0 -110h0m0 -190h0m0 180h0m0 110h0m0 -220h0m0 20h0m0 180h0m0 -30h0m0 -210h0m10 -80h0m0 370h0m0 -250h0m0 280h0m0 -350h0m0 40h0m0 120h0m0 60h0m0 80h0m10 50h0m0 -250h0m0 90h0m0 -90h0m0 -160h0m0 240h0m0 -70h0m10 220h0m0 -460h0m0 160h0m0 50h0m0 -50h0m0 330h0m0 -160h0m0 -60h0m0 -90h0m0 170h0m0 -150h0m0 10h0m0 200h0m0 -240h0m0 100h0m0 -20h0m10 -30h0m0 150h0m0 -210h0m0 -10h0m0 200h0m0 -50h0m0 50h0m0 -510h0m0 330h0m0 150h0m0 100h0m10 -190h0m0 -100h0m0 210h0m0 -170h0m0 140h0m0 80h0m0 -270h0m0 420h0m0 -550h0m10 420h0m0 -220h0m0 -90h0m0 -10h0m0 50h0m0 160h0m10 -370h0m0 510h0m0 -420h0m0 90h0m0 -200h0m0 150h0m0 -110h0m0 460h0m0 -520h0m0 60h0m0 340h0m0 -60h0m0 -330h0m10 240h0m0 -40h0m0 -20h0m0 -180h0m0 390h0m0 -300h0m0 250h0m0 -20h0m10 60h0m0 60h0m0 -420h0m0 -50h0m0 180h0m0 -320h0m0 580h0m0 0h0m0 -310h0m0 -90h0m0 440h0m0 -150h0m0 -90h0m0 130h0m0 -130h0m0 380h0m0 -180h0m0 -340h0m0 50h0m0 -110h0m10 40h0m0 420h0m0 -270h0m0 -70h0m0 250h0m0 -170h0m0 120h0m0 170h0m0 -430h0m0 100h0m0 -130h0m0 -110h0m0 200h0m0 -50h0m0 0h0m0 330h0m0 -490h0m10 390h0m0 -20h0m0 170h0m0 -410h0m0 150h0m10 -260h0m0 320h0m0 0h0m0 180h0m0 -420h0m0 180h0m0 -110h0m0 350h0m0 -10h0m0 -300h0m0 190h0m0 -50h0m0 110h0m10 -160h0m0 60h0m0 -90h0m0 190h0m0 -530h0m0 410h0m0 -260h0m0 50h0m0 290h0m0 -240h0m0 390h0m0 70h0m0 -190h0m0 -140h0m0 -240h0m10 290h0m0 -220h0m0 60h0m0 270h0m0 -290h0m0 -70h0m0 20h0m0 270h0m0 -90h0m0 10h0m0 190h0m0 120h0m0 -210h0m0 -200h0m0 320h0m0 -340h0m10 300h0m0 -290h0m0 260h0m0 -200h0m0 190h0m0 -160h0m0 20h0m0 90h0m0 0h0m0 -100h0m0 -70h0m0 140h0m0 -120h0m10 80h0m0 -190h0m0 500h0m0 -200h0m0 -40h0m0 70h0m10 40h0m0 -30h0m0 -110h0m0 10h0m0 20h0m0 -80h0m0 100h0m0 90h0m10 -270h0m0 -140h0m0 130h0m0 260h0m0 -40h0m0 -390h0m0 580h0m0 -430h0m10 140h0m0 160h0m0 70h0m0 -380h0m0 100h0m0 50h0m0 100h0m0 50h0m0 -110h0m0 100h0m0 -60h0m10 100h0m0 -30h0m0 -270h0m0 230h0m0 250h0m0 -30h0m0 -240h0m0 30h0m0 270h0m0 -410h0m10 -320h0m0 480h0m0 140h0m0 -420h0m0 80h0m0 320h0m10 -20h0m0 -150h0m0 70h0m0 -160h0m0 180h0m0 -140h0m0 -160h0m0 130h0m10 -40h0m0 110h0m0 -220h0m0 70h0m0 380h0m0 -400h0m0 320h0m0 -360h0m0 360h0m0 -90h0m0 10h0m10 -10h0m0 50h0m0 270h0m0 -340h0m0 -310h0m0 170h0m0 220h0m0 -240h0m0 -190h0m10 480h0m0 30h0m0 -290h0m0 160h0m0 -110h0m0 200h0m0 -260h0m0 310h0m0 -80h0m0 -60h0m0 -20h0m0 90h0m10 -70h0m0 60h0m0 -180h0m0 200h0m0 -150h0m0 -220h0m0 120h0m0 40h0m0 190h0m0 160h0m0 -190h0m10 60h0m0 -70h0m0 -160h0m0 300h0m10 -30h0m0 -120h0m0 -130h0m0 140h0m0 290h0m0 -270h0m0 -190h0m0 200h0m0 -310h0m0 200h0m0 -10h0m10 140h0m0 -480h0m0 490h0m0 -80h0m0 -70h0m0 170h0m0 -250h0m0 10h0m0 110h0m0 40h0m0 -210h0m0 -160h0m0 130h0m10 200h0m0 170h0m0 -220h0m0 280h0m0 -570h0m0 380h0m0 -170h0m0 180h0m0 40h0m0 -460h0m0 180h0m10 290h0m0 -140h0m0 -90h0m0 280h0m0 -320h0m0 40h0m0 260h0m0 -280h0m10 200h0m0 -30h0m0 -30h0m0 -80h0m0 -180h0m0 -30h0m0 260h0m0 50h0m0 -60h0m0 60h0m10 -430h0m0 160h0m0 560h0m0 -290h0m0 -30h0m0 -240h0m0 220h0m10 -210h0m0 -60h0m0 100h0m0 130h0m0 40h0m0 -240h0m0 280h0m0 0h0m0 -190h0m0 130h0m0 -130h0m10 70h0m0 160h0m0 -120h0m0 120h0m0 -420h0m0 440h0m10 -220h0m0 250h0m0 -350h0m0 80h0m0 270h0m0 -300h0m10 -300h0m0 270h0m0 310h0m0 -420h0m0 430h0m10 -90h0m0 100h0m0 -20h0m0 100h0m0 -160h0m0 -160h0m0 -370h0m0 360h0m0 0h0m0 -30h0m0 -60h0m0 500h0m10 -330h0m0 -260h0m0 610h0m0 -360h0m0 -90h0m0 -140h0m0 340h0m10 110h0m0 -340h0m0 80h0m0 100h0m0 -280h0m0 430h0m0 -320h0m0 -140h0m0 -180h0m0 330h0m0 -70h0m0 20h0m0 -170h0m10 470h0m0 -200h0m0 150h0m0 -60h0m0 -130h0m0 -80h0m0 10h0m0 340h0m0 0h0m0 -230h0m0 -60h0m10 210h0m0 -190h0m0 70h0m0 -30h0m0 -100h0m0 210h0m0 -210h0m0 160h0m10 100h0m0 -30h0m0 -150h0m0 10h0m0 50h0m0 -180h0m0 130h0m0 310h0m0 -190h0m10 -180h0m0 -30h0m0 230h0m0 -290h0m0 -110h0m0 160h0m0 240h0m0 -100h0m0 10h0m0 -60h0m10 -180h0m0 50h0m0 -160h0m0 270h0m0 -70h0m0 0h0m0 -90h0m0 140h0m0 100h0m10 20h0m0 -440h0m0 510h0m0 70h0m0 -510h0m0 150h0m0 10h0m0 -80h0m0 270h0m0 60h0m0 -230h0m0 110h0m0 -80h0m0 -50h0m10 110h0m0 -140h0m0 380h0m0 -290h0m0 -90h0m0 90h0m0 50h0m0 -90h0m0 130h0m0 -60h0m0 50h0m0 -380h0m0 550h0m0 -160h0m0 20h0m10 -140h0m0 320h0m0 -160h0m0 200h0m0 -270h0m0 230h0m0 -160h0m0 -320h0m0 460h0m0 -250h0m0 -250h0m0 110h0m0 390h0m0 -370h0m0 70h0m0 10h0m10 310h0m0 -470h0m0 260h0m0 200h0m0 -180h0m0 -60h0m0 -190h0m0 160h0m0 120h0m0 -100h0m0 -90h0m0 120h0m0 -30h0m0 140h0m0 60h0m0 -140h0m10 -150h0m0 90h0m0 -80h0m0 -110h0m0 190h0m0 -90h0m0 70h0m0 160h0m0 -350h0m0 50h0m10 390h0m0 -180h0m0 -60h0m0 260h0m0 -100h0m0 -150h0m0 50h0m0 200h0m0 -140h0m0 -70h0m0 -50h0m0 20h0m0 60h0m0 10h0m0 -280h0m0 310h0m0 30h0m10 40h0m0 -30h0m0 30h0m0 -200h0m0 110h0m10 260h0m0 -220h0m0 80h0m0 -110h0m0 50h0m0 -50h0m10 160h0m0 -190h0m0 -180h0m0 -140h0m0 380h0m0 20h0m0 80h0m10 -110h0m0 260h0m0 -30h0m0 -500h0m0 -170h0m0 460h0m0 40h0m0 -10h0m0 -290h0m0 490h0m10 -90h0m0 -70h0m0 -310h0m0 50h0m0 240h0m0 20h0m0 20h0m0 20h0m0 -80h0m0 220h0m0 -110h0m0 70h0m0 -240h0m0 200h0m0 -130h0m10 -140h0m0 210h0m0 210h0m0 -130h0m0 240h0m0 -720h0m0 260h0m0 -30h0m10 420h0m0 -150h0m0 30h0m0 120h0m0 -450h0m0 -120h0m0 260h0m0 -160h0m0 70h0m0 340h0m0 -170h0m0 150h0m0 -110h0m0 -230h0m0 230h0m0 -170h0m0 150h0m10 -270h0m0 100h0m0 -20h0m0 90h0m0 80h0m0 -150h0m0 320h0m0 250h0m0 -520h0m0 130h0m0 40h0m10 70h0m0 -260h0m0 130h0m0 170h0m0 -500h0m0 130h0m0 550h0m10 -160h0m0 -230h0m0 -30h0m0 200h0m0 -490h0m0 140h0m0 160h0m0 -20h0m0 80h0m0 50h0m10 -290h0m0 430h0m0 -350h0m0 40h0m0 20h0m0 0h0m0 200h0m0 -70h0m0 90h0m0 -130h0m0 120h0m10 -70h0m0 40h0m0 190h0m0 -120h0m0 -60h0m0 -180h0m0 130h0m0 -110h0m0 120h0m0 -80h0m0 -30h0m10 160h0m0 60h0m0 -150h0m0 -10h0m0 -160h0m10 30h0m0 310h0m0 -130h0m0 -210h0m0 160h0m0 20h0m0 -160h0m0 130h0m0 -90h0m0 240h0m0 -210h0m0 260h0m0 -210h0m0 -50h0m0 20h0m0 40h0m0 0h0m10 130h0m0 -240h0m0 10h0m0 310h0m0 -330h0m0 270h0m10 -250h0m0 -220h0m0 510h0m0 -680h0m0 240h0m0 130h0m0 -250h0m0 290h0m0 -250h0m0 310h0m0 80h0m0 -20h0m0 -130h0m0 110h0m0 60h0m0 -230h0m0 70h0m10 -290h0m0 240h0m0 -200h0m0 60h0m0 160h0m0 90h0m0 -140h0m10 -30h0m0 -130h0m0 -240h0m0 340h0m0 120h0m0 -50h0m0 -300h0m0 260h0m0 100h0m10 -60h0m0 -90h0m0 20h0m0 -60h0m0 -110h0m0 390h0m0 -350h0m0 80h0m0 120h0m0 -270h0m0 -100h0m0 180h0m0 320h0m0 -350h0m10 60h0m0 20h0m0 120h0m0 -120h0m0 70h0m0 -340h0m0 20h0m0 570h0m0 -430h0m0 190h0m0 -40h0m0 80h0m0 -30h0m0 -260h0m0 360h0m0 -200h0m0 -320h0m0 650h0m0 -180h0m0 -70h0m0 -150h0m0 -100h0m0 70h0m0 170h0m0 -40h0m10 -100h0m0 110h0m0 -40h0m0 220h0m0 -160h0m0 -390h0m0 150h0m0 120h0m0 -160h0m0 240h0m10 260h0m0 -300h0m0 10h0m0 330h0m0 -340h0m0 -40h0m10 -350h0m0 370h0m0 -210h0m0 -40h0m0 90h0m0 230h0m0 -180h0m0 50h0m0 300h0m10 -210h0m0 280h0m0 10h0m0 -220h0m0 40h0m0 -30h0m0 -60h0m0 -60h0m0 260h0m0 -120h0m0 -240h0m0 -20h0m0 -60h0m0 -70h0m10 520h0m0 -140h0m0 -10h0m0 80h0m0 -80h0m0 -40h0m0 320h0m0 -270h0m0 120h0m0 90h0m0 40h0m0 -570h0m0 390h0m0 -90h0m10 -90h0m0 210h0m0 -140h0m0 60h0m0 70h0m0 -50h0m0 10h0m0 -160h0m0 100h0m0 10h0m0 -240h0m0 0h0m0 190h0m10 170h0m0 -340h0m0 150h0m0 50h0m0 190h0m0 -180h0m0 130h0m0 -250h0m0 240h0m0 -190h0m0 -160h0m0 410h0m0 170h0m10 -420h0m0 190h0m0 50h0m0 110h0m0 -60h0m0 0h0m0 -140h0m0 230h0m0 -40h0m0 -270h0m0 30h0m0 140h0m0 -310h0m0 120h0m10 160h0m0 70h0m0 -90h0m0 50h0m0 130h0m0 -470h0m0 80h0m0 30h0m0 80h0m0 60h0m0 80h0m0 -60h0m0 60h0m10 10h0m0 -140h0m0 100h0m0 80h0m0 80h0m0 -180h0m0 330h0m10 -340h0m0 -120h0m0 -250h0m0 490h0m0 -80h0m0 50h0m0 -60h0m0 230h0m0 -220h0m0 -60h0m0 30h0m0 170h0m0 -220h0m0 140h0m10 -30h0m0 10h0m0 -280h0m0 240h0m0 -10h0m0 -100h0m0 210h0m10 -120h0m0 180h0m0 0h0m0 -130h0m0 30h0m0 120h0m0 -140h0m0 -10h0m0 270h0m0 -330h0m0 10h0m0 -140h0m0 450h0m0 -290h0m0 -50h0m10 320h0m0 -120h0m0 -20h0m0 110h0m0 -370h0m0 -20h0m0 110h0m0 400h0m0 -180h0m0 -280h0m0 90h0m0 480h0m10 -650h0m0 170h0m0 170h0m0 -50h0m0 80h0m0 -130h0m0 -60h0m0 -80h0m0 70h0m0 -110h0m0 300h0m10 -480h0m0 250h0m0 110h0m0 20h0m0 -160h0m0 300h0m0 -240h0m0 320h0m0 -470h0m0 40h0m0 320h0m0 -330h0m10 220h0m0 120h0m0 -360h0m0 340h0m0 -300h0m0 -40h0m0 330h0m0 100h0m0 -140h0m0 180h0m0 -190h0m0 -80h0m0 30h0m10 20h0m0 90h0m0 -90h0m0 -160h0m0 20h0m0 40h0m0 300h0m0 -350h0m0 360h0m0 -370h0m0 110h0m10 90h0m0 80h0m0 -290h0m0 280h0m0 -90h0m0 -140h0m0 140h0m0 -180h0m0 150h0m0 -140h0m0 10h0m0 70h0m0 0h0m0 -260h0m0 370h0m10 90h0m0 -360h0m0 250h0m0 90h0m0 -210h0m0 -140h0m0 -10h0m0 80h0m0 -10h0m0 220h0m0 -200h0m0 20h0m0 50h0m0 -110h0m10 390h0m0 -120h0m0 120h0m0 -540h0m0 150h0m0 90h0m0 -80h0m0 160h0m0 -40h0m0 160h0m0 -170h0m0 70h0m10 -210h0m0 200h0m0 -100h0m0 60h0m0 -60h0m0 90h0m0 150h0m0 -380h0m0 70h0m0 -110h0m0 60h0m0 -70h0m0 30h0m10 120h0m0 -230h0m0 240h0m0 230h0m0 -40h0m0 -230h0m0 -70h0m0 190h0m0 80h0m0 -130h0m0 -150h0m0 180h0m0 70h0m0 -230h0m0 0h0m10 -90h0m0 320h0m0 -340h0m0 10h0m0 20h0m0 170h0m0 -60h0m0 230h0m0 -320h0m0 -100h0m0 270h0m0 180h0m10 -460h0m0 190h0m0 -70h0m0 0h0m0 230h0m0 -150h0m0 120h0m0 -30h0m0 -290h0m0 380h0m0 -300h0m10 150h0m0 0h0m0 -120h0m0 180h0m0 30h0m0 20h0m0 -180h0m0 -20h0m0 170h0m0 -70h0m0 -200h0m0 310h0m10 -140h0m0 130h0m0 -50h0m0 -10h0m0 -90h0m0 -30h0m0 110h0m10 -240h0m0 170h0m0 60h0m0 -80h0m0 230h0m0 -90h0m0 -180h0m10 -210h0m0 -110h0m0 260h0m0 120h0m0 -70h0m0 -30h0m0 -30h0m0 -180h0m0 540h0m0 -190h0m10 -90h0m0 190h0m0 -250h0m0 210h0m0 -230h0m0 210h0m0 260h0m0 -470h0m0 130h0m0 -10h0m0 60h0m0 -220h0m0 70h0m0 0h0m0 -80h0m0 470h0m0 -510h0m0 500h0m10 -380h0m0 -30h0m0 -80h0m0 -40h0m0 180h0m0 160h0m0 -350h0m0 50h0m0 30h0m0 300h0m0 -360h0m10 160h0m0 -30h0m0 80h0m0 20h0m0 -140h0m0 50h0m0 140h0m0 -110h0m0 -50h0m0 -10h0m0 90h0m0 130h0m0 -210h0m0 160h0m10 -90h0m0 -80h0m0 30h0m0 30h0m0 60h0m0 -270h0m0 200h0m0 -120h0m0 220h0m0 -160h0m0 140h0m0 -160h0m0 180h0m0 -140h0m10 70h0m0 -310h0m0 10h0m0 210h0m0 -90h0m0 230h0m0 290h0m0 -290h0m0 0h0m0 -110h0m10 60h0m0 -50h0m0 70h0m0 -310h0m0 90h0m0 60h0m0 150h0m0 170h0m0 -160h0m10 -20h0m0 -80h0m0 -10h0m0 -210h0m0 200h0m0 90h0m0 80h0m0 -10h0m0 0h0m0 0h0m0 -80h0m0 220h0m10 -360h0m0 430h0m0 -460h0m0 280h0m0 -40h0m0 -110h0m0 -200h0m0 530h0m0 -50h0m0 -170h0m10 -160h0m0 80h0m0 210h0m0 -360h0m0 0h0m0 180h0m0 280h0m0 -250h0m10 -130h0m0 -100h0m0 -10h0m0 360h0m0 -70h0m0 60h0m0 -250h0m0 60h0m0 -20h0m0 10h0m0 30h0m10 260h0m0 -190h0m0 90h0m0 -130h0m0 -50h0m0 120h0m0 220h0m0 -320h0m10 -210h0m0 330h0m0 70h0m0 -180h0m0 -10h0m0 -70h0m0 -210h0m0 300h0m10 -30h0m0 -90h0m0 130h0m0 -160h0m0 310h0m0 140h0m0 -180h0m0 90h0m0 -220h0m0 -300h0m0 100h0m0 200h0m0 80h0m10 -390h0m0 480h0m0 -60h0m0 -160h0m0 170h0m0 -90h0m0 120h0m0 -190h0m0 -140h0m0 310h0m0 90h0m0 -70h0m0 -150h0m0 -190h0m0 330h0m0 130h0m0 -100h0m0 -240h0m10 90h0m0 20h0m0 340h0m0 -290h0m0 230h0m0 -510h0m0 90h0m0 20h0m0 -30h0m0 200h0m0 40h0m0 -80h0m0 20h0m10 210h0m0 100h0m0 -240h0m0 -100h0m0 -150h0m0 90h0m0 -170h0m0 230h0m0 220h0m0 -300h0m0 170h0m0 -250h0m0 170h0m10 60h0m0 250h0m0 -590h0m0 120h0m0 360h0m0 -30h0m0 -10h0m0 -330h0m0 620h0m0 -150h0m0 -150h0m0 190h0m10 -240h0m0 -20h0m0 50h0m0 -50h0m0 10h0m0 50h0m0 -180h0m0 310h0m0 110h0m0 -440h0m0 -10h0m0 -160h0m10 420h0m0 60h0m0 -220h0m0 30h0m0 -160h0m0 90h0m0 170h0m0 400h0m0 -390h0m0 -290h0m0 280h0m0 -30h0m0 90h0m10 -170h0m0 -50h0m0 220h0m0 -130h0m0 340h0m0 -400h0m0 70h0m0 30h0m0 610h0m0 -810h0m0 340h0m10 -170h0m0 -120h0m0 -160h0m0 290h0m0 200h0m0 -230h0m0 -100h0m0 -100h0m0 200h0m0 -70h0m0 220h0m0 -240h0m10 -150h0m0 310h0m0 -130h0m0 150h0m0 180h0m0 -130h0m0 150h0m0 -240h0m0 20h0m0 -190h0m0 -60h0m10 220h0m0 -40h0m0 250h0m0 -440h0m0 420h0m0 -70h0m0 -40h0m0 -90h0m0 -130h0m0 250h0m0 -290h0m0 190h0m0 60h0m10 60h0m0 -240h0m0 80h0m0 50h0m0 50h0m0 -80h0m0 -280h0m0 230h0m0 -40h0m0 40h0m0 100h0m0 -10h0m0 -110h0m10 160h0m0 -10h0m0 -50h0m0 -60h0m0 310h0m10 -270h0m0 -220h0m0 150h0m0 100h0m0 230h0m0 -120h0m0 -80h0m0 -60h0m10 40h0m0 -110h0m0 -360h0m0 210h0m0 110h0m0 170h0m0 30h0m0 -70h0m0 -180h0m0 130h0m0 -340h0m0 470h0m0 100h0m0 -170h0m10 -100h0m0 150h0m0 -170h0m0 20h0m0 260h0m0 -290h0m0 190h0m0 -240h0m0 -150h0m0 170h0m0 370h0m0 0h0m0 -400h0m10 100h0m0 90h0m0 120h0m0 -450h0m0 430h0m0 -160h0m0 -70h0m0 210h0m10 -330h0m0 90h0m0 -10h0m0 10h0m0 120h0m0 150h0m0 -330h0m0 20h0m0 60h0m0 -240h0m10 160h0m0 150h0m0 170h0m0 -160h0m0 -30h0m0 -240h0m0 40h0m0 30h0m0 110h0m0 180h0m0 -290h0m0 0h0m0 250h0m10 -110h0m0 -100h0m0 130h0m0 10h0m0 -90h0m0 -50h0m0 160h0m0 -80h0m0 190h0m10 30h0m0 -510h0m0 310h0m0 30h0m0 -80h0m0 -70h0m0 -200h0m0 170h0m10 -80h0m0 140h0m0 70h0m0 0h0m0 -70h0m0 -30h0m0 20h0m0 140h0m0 -140h0m0 130h0m0 -240h0m0 210h0m0 -90h0m0 110h0m10 90h0m0 -310h0m0 -110h0m0 120h0m0 160h0m0 -140h0m0 -60h0m0 390h0m0 -390h0m0 350h0m10 -60h0m0 -30h0m0 -100h0m10 70h0m0 -90h0m0 -250h0m0 450h0m0 -230h0m0 210h0m0 -440h0m0 350h0m0 -230h0m0 190h0m10 60h0m0 -330h0m0 350h0m0 20h0m0 -180h0m0 50h0m0 -60h0m0 300h0m10 -380h0m0 210h0m0 -100h0m0 270h0m0 -80h0m0 -190h0m0 330h0m0 -170h0m10 -140h0m0 290h0m0 -90h0m0 40h0m0 -130h0m0 -240h0m0 440h0m0 -310h0m0 160h0m0 100h0m10 -40h0m0 -110h0m0 70h0m0 110h0m10 0h0m0 -380h0m0 -50h0m0 170h0m0 160h0m0 -120h0m0 -130h0m0 90h0m0 -140h0m0 290h0m10 20h0m0 -30h0m0 -70h0m0 -230h0m0 190h0m0 280h0m0 -410h0m0 180h0m0 -50h0m0 -70h0m0 30h0m0 520h0m0 -470h0m10 140h0m0 -30h0m0 -110h0m0 -70h0m0 380h0m0 -260h0m0 100h0m0 -220h0m0 520h0m0 -320h0m0 -90h0m10 290h0m0 -190h0m0 -70h0m0 350h0m0 -680h0m0 420h0m0 -170h0m0 240h0m0 -30h0m0 -120h0m0 420h0m0 -210h0m0 -160h0m0 -130h0m0 -160h0m0 760h0m0 -430h0m10 50h0m0 -90h0m0 70h0m0 -290h0m0 360h0m0 -280h0m0 90h0m0 70h0m0 -90h0m0 320h0m10 -480h0m0 310h0m0 -170h0m0 50h0m0 -60h0m0 90h0m0 80h0m0 200h0m10 40h0m0 -320h0m0 40h0m0 -210h0m0 540h0m0 -350h0m0 170h0m0 -100h0m0 -160h0m10 -100h0m0 250h0m0 30h0m0 -130h0m0 230h0m0 -180h0m0 -80h0m0 140h0m0 -90h0m10 130h0m0 -170h0m0 90h0m0 -80h0m0 -110h0m0 320h0m0 -200h0m0 -60h0m0 -10h0m0 0h0m0 210h0m0 -340h0m0 240h0m0 50h0m0 -150h0m10 300h0m0 -280h0m0 80h0m0 290h0m10 -250h0m0 -180h0m0 -160h0m10 150h0m0 190h0m0 -190h0m0 140h0m0 -180h0m0 200h0m0 20h0m10 -50h0m0 -220h0m0 450h0m0 -90h0m0 -190h0m0 170h0m0 -100h0m0 250h0m0 -450h0m0 160h0m0 -50h0m10 260h0m0 -330h0m0 40h0m0 110h0m0 -140h0m0 230h0m0 250h0m0 -310h0m0 -390h0m0 460h0m0 -90h0m10 40h0m0 -120h0m0 -30h0m0 90h0m0 -60h0m0 50h0m0 -60h0m0 -120h0m0 190h0m10 -170h0m0 210h0m0 -330h0m0 340h0m0 -80h0m0 -120h0m0 0h0m0 -170h0m0 490h0m0 -260h0m10 -40h0m0 10h0m0 160h0m0 250h0m0 -30h0m0 -690h0m0 0h0m0 590h0m0 -270h0m0 80h0m10 -150h0m0 10h0m0 100h0m0 -150h0m0 340h0m10 -120h0m0 -220h0m0 -140h0m0 580h0m0 -330h0m10 70h0m0 -80h0m0 -190h0m0 260h0m0 150h0m0 -200h0m0 230h0m0 -400h0m0 340h0m10 -90h0m0 -20h0m0 -130h0m0 -20h0m0 -20h0m0 110h0m0 80h0m0 -70h0m0 -150h0m0 170h0m10 10h0m0 -60h0m0 -70h0m0 210h0m0 -110h0m0 -140h0m0 510h0m10 -510h0m0 30h0m0 230h0m0 -20h0m0 -110h0m10 100h0m0 -290h0m0 110h0m0 410h0m0 -540h0m0 280h0m0 -140h0m0 390h0m0 -410h0m0 170h0m0 -50h0m0 -40h0m10 60h0m0 210h0m0 -100h0m0 -440h0m0 570h0m0 -80h0m0 50h0m0 -240h0m0 70h0m10 0h0m0 220h0m0 -630h0m0 240h0m0 180h0m0 -120h0m0 90h0m0 70h0m10 -330h0m0 130h0m0 210h0m0 -120h0m0 40h0m0 0h0m0 160h0m0 -220h0m0 180h0m0 -370h0m0 10h0m10 90h0m0 160h0m0 90h0m0 80h0m0 -290h0m0 110h0m0 0h0m0 120h0m0 -300h0m0 470h0m0 -330h0m0 170h0m10 -160h0m0 330h0m0 -500h0m0 540h0m0 -300h0m0 -60h0m0 -120h0m0 50h0m0 40h0m0 50h0m0 -270h0m0 560h0m0 -510h0m10 220h0m0 -150h0m0 250h0m0 -480h0m0 620h0m0 -400h0m0 320h0m0 -270h0m0 -30h0m0 150h0m0 -20h0m0 90h0m10 30h0m0 -20h0m0 -80h0m0 -30h0m0 150h0m0 -310h0m0 200h0m0 -60h0m0 30h0m0 30h0m0 70h0m0 -130h0m10 30h0m0 90h0m0 -220h0m0 160h0m0 70h0m0 -130h0m0 180h0m0 -50h0m0 -50h0m0 10h0m0 110h0m0 -420h0m0 430h0m0 -110h0m0 -240h0m10 30h0m0 -70h0m0 100h0m0 330h0m0 -60h0m0 -300h0m0 90h0m10 100h0m0 260h0m0 -320h0m0 60h0m0 -40h0m0 20h0m0 0h0m0 -100h0m0 100h0m0 -10h0m0 140h0m0 -230h0m0 280h0m0 -330h0m0 -40h0m10 150h0m0 110h0m0 -200h0m0 190h0m0 -80h0m0 -80h0m10 160h0m0 -260h0m0 190h0m0 10h0m0 370h0m0 -490h0m0 360h0m0 -260h0m0 80h0m0 -20h0m0 280h0m10 -290h0m0 -90h0m0 130h0m0 -20h0m0 -290h0m0 530h0m0 -450h0m0 290h0m10 -90h0m0 -210h0m0 160h0m0 60h0m0 -490h0m0 180h0m0 170h0m0 0h0m0 210h0m0 -110h0m10 -120h0m0 60h0m0 40h0m0 -60h0m0 150h0m0 -120h0m0 -280h0m10 620h0m0 -160h0m0 -90h0m0 -170h0m0 180h0m0 -90h0m0 60h0m0 -300h0m0 330h0m0 30h0m0 -140h0m0 120h0m0 -50h0m0 270h0m10 -180h0m0 -120h0m0 180h0m0 -190h0m0 90h0m0 -180h0m0 -350h0m0 400h0m0 -110h0m0 150h0m10 -10h0m0 60h0m0 80h0m0 20h0m0 -190h0m0 220h0m10 -180h0m0 -170h0m0 280h0m0 40h0m0 -160h0m0 -60h0m10 560h0m0 -160h0m0 -310h0m0 140h0m0 -140h0m0 -160h0m0 -160h0m0 370h0m0 -30h0m0 10h0m0 -360h0m0 70h0m0 460h0m10 -50h0m0 80h0m0 -170h0m0 250h0m0 -450h0m0 -20h0m0 60h0m0 190h0m0 -70h0m0 -190h0m10 140h0m0 130h0m0 -120h0m0 180h0m0 -170h0m0 -410h0m0 720h0m0 -380h0m0 30h0m0 -100h0m10 70h0m0 130h0m0 -60h0m0 -40h0m0 250h0m0 -150h0m0 270h0m0 -280h0m0 40h0m0 30h0m0 -150h0m0 -110h0m0 190h0m0 -390h0m0 530h0m0 -220h0m0 -310h0m10 360h0m0 -70h0m0 -220h0m0 240h0m0 200h0m0 -200h0m0 -120h0m0 170h0m0 50h0m10 -10h0m0 -160h0m0 130h0m0 -350h0m0 370h0m0 -140h0m0 -160h0m0 130h0m10 360h0m0 -340h0m0 100h0m0 -30h0m0 100h0m0 -130h0m0 -40h0m0 200h0m0 80h0m10 -340h0m0 -20h0m0 -80h0m0 160h0m0 90h0m10 70h0m0 -320h0m0 40h0m0 -200h0m0 400h0m0 -40h0m0 -290h0m0 430h0m0 70h0m0 -190h0m0 -220h0m10 -70h0m0 270h0m0 -50h0m0 210h0m0 -550h0m0 -20h0m0 290h0m10 120h0m0 -210h0m0 -10h0m0 220h0m0 110h0m0 -60h0m0 -530h0m0 570h0m0 -100h0m10 -130h0m0 100h0m0 0h0m0 -130h0m0 30h0m0 -190h0m0 300h0m0 -120h0m0 -80h0m0 90h0m0 80h0m10 -50h0m0 340h0m0 -420h0m0 0h0m0 60h0m0 -240h0m0 590h0m0 -360h0m0 150h0m0 -200h0m0 370h0m0 -210h0m0 -250h0m0 130h0m10 30h0m0 -90h0m0 -30h0m0 70h0m0 210h0m0 40h0m0 -380h0m0 -110h0m0 -110h0m10 260h0m0 150h0m0 -150h0m0 160h0m0 -270h0m0 90h0m0 570h0m0 -500h0m0 60h0m0 320h0m0 -80h0m10 -140h0m0 -100h0m0 90h0m0 -150h0m0 420h0m0 -280h0m0 -50h0m0 -90h0m0 150h0m0 200h0m10 -410h0m0 280h0m0 -180h0m0 200h0m0 -90h0m0 190h0m0 -50h0m0 -10h0m0 -230h0m0 -150h0m0 -10h0m0 210h0m0 40h0m10 460h0m0 -500h0m0 50h0m0 -50h0m0 130h0m0 -190h0m0 -120h0m0 230h0m10 -300h0m0 120h0m0 0h0m0 130h0m0 390h0m0 -370h0m0 40h0m0 -160h0m0 130h0m10 20h0m0 310h0m0 -260h0m0 -110h0m0 80h0m0 -260h0m0 320h0m0 -50h0m0 30h0m10 -40h0m0 160h0m0 -190h0m0 80h0m0 -80h0m0 -80h0m0 140h0m0 -180h0m0 360h0m0 -270h0m0 320h0m10 -270h0m0 80h0m0 60h0m0 190h0m0 -360h0m0 -100h0m0 350h0m0 -140h0m0 110h0m0 -30h0m0 -320h0m0 150h0m0 120h0m10 70h0m0 -10h0m0 -290h0m0 110h0m0 0h0m0 40h0m0 -90h0m0 540h0m0 -400h0m0 220h0m0 -220h0m0 -100h0m0 270h0m10 80h0m0 -10h0m0 -580h0m0 600h0m0 -300h0m0 -180h0m0 390h0m0 -170h0m0 470h0m0 -280h0m0 -90h0m10 90h0m0 -150h0m0 -250h0m0 280h0m0 70h0m0 -40h0m0 -120h0m0 150h0m0 -140h0m10 50h0m0 420h0m0 -300h0m0 190h0m0 -50h0m0 40h0m0 -80h0m0 -170h0m0 120h0m0 -290h0m0 300h0m0 60h0m10 80h0m0 -120h0m0 -80h0m0 -270h0m0 260h0m0 -70h0m0 230h0m0 -310h0m0 -30h0m0 50h0m0 -30h0m0 70h0m0 -80h0m0 270h0m10 160h0m0 -150h0m0 -200h0m0 -280h0m0 220h0m0 -100h0m0 360h0m0 -60h0m0 160h0m0 -280h0m0 -60h0m0 30h0m10 220h0m0 -120h0m0 -150h0m0 130h0m0 -140h0m0 160h0m0 -20h0m0 -140h0m0 140h0m0 -150h0m0 100h0m0 -20h0m10 -70h0m0 130h0m0 120h0m0 190h0m0 -240h0m0 50h0m0 -180h0m0 -110h0m0 140h0m0 -280h0m0 290h0m0 -160h0m0 100h0m10 -10h0m0 50h0m0 320h0m0 -220h0m0 -220h0m0 390h0m0 -360h0m10 70h0m0 -120h0m0 110h0m0 320h0m0 -530h0m0 240h0m0 -100h0m0 130h0m0 -80h0m0 -170h0m10 -90h0m0 160h0m0 -110h0m0 320h0m0 -80h0m0 390h0m0 -560h0m0 70h0m10 150h0m0 60h0m0 -100h0m0 -380h0m0 220h0m0 -200h0m0 210h0m0 90h0m0 10h0m0 -250h0m0 140h0m10 80h0m0 -310h0m0 650h0m0 -450h0m0 60h0m0 -400h0m0 530h0m0 -200h0m0 20h0m0 10h0m10 310h0m0 -490h0m0 110h0m0 -30h0m0 -120h0m0 10h0m0 380h0m0 -160h0m0 -190h0m0 220h0m0 -250h0m0 310h0m0 -420h0m0 180h0m10 30h0m0 150h0m0 -30h0m0 -10h0m0 -40h0m0 0h0m0 10h0m0 60h0m0 10h0m0 -70h0m0 -70h0m0 190h0m0 -130h0m0 180h0m0 -260h0m0 -220h0m0 420h0m0 -420h0m0 110h0m0 270h0m10 -80h0m0 -50h0m0 -130h0m0 330h0m0 -190h0m0 -170h0m10 250h0m0 -40h0m0 90h0m0 130h0m0 -60h0m0 -110h0m0 -290h0m0 -60h0m0 330h0m0 -20h0m10 -80h0m0 30h0m0 60h0m0 -120h0m0 120h0m0 -200h0m0 310h0m0 -110h0m0 -350h0m0 280h0m0 160h0m0 -130h0m10 -90h0m0 -20h0m0 50h0m0 -190h0m0 350h0m0 -230h0m10 190h0m0 -40h0m0 -230h0m0 180h0m0 290h0m0 -230h0m0 -210h0m0 290h0m0 -50h0m0 0h0m0 -160h0m0 120h0m0 170h0m10 -190h0m0 240h0m0 -420h0m0 290h0m0 -290h0m0 -100h0m0 290h0m0 290h0m0 -380h0m0 -80h0m0 220h0m10 10h0m0 -70h0m0 30h0m0 -30h0m0 60h0m0 -20h0m0 50h0m0 -210h0m0 110h0m0 180h0m10 280h0m0 -290h0m0 -260h0m0 240h0m0 -50h0m0 0h0m0 -280h0m0 370h0m0 90h0m0 -30h0m0 60h0m0 -390h0m0 360h0m0 -300h0m0 90h0m0 30h0m10 -120h0m0 320h0m0 -260h0m0 110h0m0 -40h0m0 160h0m0 -120h0m0 90h0m0 -110h0m0 -130h0m10 30h0m0 150h0m0 30h0m0 -220h0m0 -80h0m0 80h0m0 320h0m0 -120h0m0 -80h0m0 -70h0m0 -150h0m0 360h0m10 -130h0m0 -150h0m0 240h0m0 -210h0m0 290h0m0 -200h0m0 120h0m10 170h0m0 -80h0m0 -220h0m0 290h0m0 200h0m0 -380h0m0 -20h0m0 150h0m0 -550h0m10 280h0m0 100h0m0 240h0m0 -100h0m0 70h0m0 -50h0m0 -160h0m0 70h0m0 -100h0m0 200h0m10 -380h0m0 380h0m0 0h0m0 -40h0m0 -30h0m0 -340h0m0 300h0m0 140h0m0 -250h0m0 340h0m0 -550h0m0 370h0m0 20h0m0 100h0m0 -110h0m0 -150h0m0 -30h0m0 180h0m0 290h0m10 -440h0m0 0h0m0 30h0m0 190h0m0 -370h0m0 250h0m0 10h0m0 -80h0m0 -110h0m0 -40h0m0 340h0m0 20h0m10 0h0m0 -40h0m0 -320h0m0 180h0m0 -80h0m0 400h0m0 -630h0m0 560h0m0 -320h0m0 -90h0m0 390h0m0 140h0m0 -360h0m10 270h0m0 -190h0m0 0h0m0 -220h0m0 70h0m0 110h0m0 -130h0m0 60h0m10 -20h0m0 -10h0m0 220h0m0 70h0m0 -300h0m0 120h0m0 140h0m0 -20h0m0 -300h0m0 430h0m0 -270h0m10 120h0m0 120h0m0 -250h0m0 50h0m0 60h0m0 80h0m0 -200h0m0 10h0m0 -70h0m0 210h0m10 -200h0m0 -50h0m0 140h0m0 130h0m0 160h0m0 -520h0m0 100h0m0 -10h0m10 100h0m0 20h0m0 -130h0m0 50h0m0 -90h0m0 370h0m0 -190h0m0 130h0m0 -310h0m10 110h0m0 90h0m0 -110h0m0 170h0m0 -140h0m0 110h0m0 190h0m0 -210h0m0 -390h0m10 460h0m0 140h0m0 -410h0m0 160h0m0 80h0m0 -90h0m0 100h0m0 -280h0m0 100h0m0 190h0m10 -510h0m0 460h0m0 210h0m0 -490h0m0 210h0m0 -60h0m0 190h0m0 -40h0m0 -190h0m0 -240h0m0 240h0m0 -30h0m0 300h0m0 -380h0m10 180h0m0 50h0m0 -60h0m0 110h0m0 90h0m0 200h0m0 -420h0m0 -50h0m0 230h0m0 -310h0m0 280h0m10 0h0m0 140h0m0 -310h0m0 -90h0m0 100h0m0 170h0m0 0h0m10 -10h0m0 -390h0m0 -80h0m0 280h0m0 110h0m0 -110h0m0 -70h0m0 -130h0m10 450h0m0 -190h0m0 10h0m0 280h0m0 -260h0m0 210h0m0 -360h0m0 100h0m0 -60h0m10 50h0m0 100h0m0 200h0m0 0h0m0 -360h0m0 -380h0m0 450h0m0 -70h0m0 -40h0m0 0h0m0 0h0m0 10h0m0 150h0m0 30h0m10 -170h0m0 -10h0m0 320h0m0 -620h0m0 640h0m0 -230h0m0 150h0m0 -420h0m10 350h0m0 -140h0m0 60h0m0 -60h0m0 0h0m0 -70h0m0 230h0m0 -240h0m0 200h0m0 -70h0m0 60h0m0 -210h0m0 200h0m10 60h0m0 -150h0m0 -50h0m0 -10h0m0 90h0m0 20h0m0 210h0m0 -430h0m0 190h0m0 140h0m0 -250h0m0 170h0m0 -50h0m0 -120h0m0 150h0m10 110h0m0 -140h0m0 20h0m0 230h0m0 -270h0m0 -90h0m0 220h0m10 -150h0m0 -30h0m0 -20h0m0 80h0m0 570h0m0 -610h0m0 -100h0m0 50h0m0 370h0m0 -470h0m0 -20h0m0 510h0m0 -20h0m0 -190h0m0 -140h0m0 70h0m10 -160h0m0 40h0m0 -100h0m0 -90h0m0 360h0m0 -210h0m0 250h0m0 -130h0m0 190h0m0 -370h0m10 180h0m0 40h0m0 -220h0m0 200h0m0 90h0m0 240h0m0 -190h0m0 -440h0m0 460h0m0 -370h0m10 290h0m0 -330h0m0 180h0m0 130h0m0 -10h0m0 -130h0m0 120h0m0 -260h0m10 10h0m0 600h0m0 -470h0m0 -20h0m0 -80h0m0 190h0m0 -150h0m0 220h0m0 0h0m0 -10h0m0 20h0m10 -260h0m0 -50h0m0 -90h0m0 250h0m0 120h0m0 130h0m0 -430h0m0 120h0m0 50h0m10 -560h0m0 550h0m0 10h0m0 60h0m0 130h0m0 -430h0m10 210h0m0 -30h0m0 -50h0m0 440h0m0 -210h0m0 20h0m0 -350h0m0 330h0m10 120h0m0 -110h0m0 -90h0m0 80h0m0 -240h0m0 -70h0m0 240h0m0 230h0m0 -360h0m0 450h0m0 -50h0m0 -290h0m0 -150h0m10 20h0m0 210h0m0 -170h0m0 340h0m0 -30h0m0 -270h0m0 210h0m0 40h0m0 -140h0m0 -300h0m0 160h0m0 -140h0m10 280h0m0 10h0m0 -180h0m0 450h0m0 -360h0m0 470h0m0 -340h0m0 -110h0m0 40h0m0 -110h0m0 70h0m0 290h0m0 -40h0m0 -640h0m0 690h0m0 -170h0m0 -30h0m10 -70h0m0 -90h0m0 420h0m0 -260h0m0 -340h0m0 70h0m0 190h0m0 -120h0m0 0h0m0 370h0m10 -250h0m0 260h0m0 -360h0m0 -220h0m0 340h0m0 130h0m0 -310h0m0 440h0m0 -160h0m0 170h0m0 -390h0m0 150h0m10 -410h0m0 230h0m0 410h0m0 -150h0m0 30h0m0 -430h0m0 390h0m10 190h0m0 -110h0m0 -90h0m0 100h0m0 -100h0m0 260h0m0 -400h0m0 90h0m10 -30h0m0 -160h0m0 140h0m0 240h0m0 -130h0m0 -80h0m0 230h0m0 -200h0m0 10h0m10 20h0m0 150h0m0 50h0m0 -270h0m0 320h0m0 -270h0m0 -80h0m0 320h0m0 -240h0m0 80h0m0 -140h0m0 300h0m0 -50h0m10 -50h0m0 -170h0m0 280h0m0 -20h0m0 60h0m10 -530h0m0 460h0m0 10h0m0 -170h0m0 120h0m0 -20h0m0 -100h0m0 40h0m0 -330h0m0 170h0m10 170h0m0 -100h0m0 190h0m0 -30h0m0 -310h0m0 420h0m10 -110h0m0 20h0m0 -200h0m0 130h0m0 110h0m0 90h0m0 -110h0m0 -260h0m0 10h0m0 120h0m0 80h0m0 60h0m0 -240h0m0 450h0m10 -460h0m0 -160h0m0 300h0m0 -350h0m0 510h0m0 20h0m10 -400h0m0 100h0m0 40h0m0 -230h0m0 90h0m0 10h0m0 -30h0m0 190h0m0 -90h0m0 410h0m0 -160h0m0 -350h0m10 60h0m0 280h0m0 -250h0m0 90h0m0 180h0m0 -20h0m0 -110h0m0 270h0m0 -430h0m0 -70h0m0 130h0m10 60h0m0 20h0m0 200h0m0 -120h0m0 -70h0m0 -230h0m0 260h0m0 -320h0m0 220h0m0 120h0m0 -190h0m10 170h0m0 -190h0m0 90h0m0 -250h0m0 30h0m0 110h0m0 -140h0m0 240h0m0 240h0m0 -170h0m0 -160h0m0 -10h0m0 150h0m0 -260h0m0 10h0m0 190h0m0 60h0m0 240h0m10 -470h0m0 200h0m0 40h0m0 40h0m0 -230h0m0 170h0m0 -110h0m0 -170h0m0 -90h0m10 180h0m0 510h0m0 -340h0m0 -10h0m0 -180h0m0 260h0m0 -540h0m0 430h0m0 10h0m0 -40h0m10 140h0m0 0h0m0 -170h0m0 -210h0m0 220h0m0 -90h0m10 170h0m0 -300h0m0 60h0m0 210h0m0 -90h0m0 -110h0m0 150h0m0 -80h0m0 -70h0m0 330h0m0 -260h0m10 -60h0m0 200h0m0 -350h0m0 250h0m0 440h0m0 -460h0m0 -160h0m0 110h0m0 0h0m0 -40h0m0 370h0m0 -20h0m0 -110h0m0 -110h0m0 -190h0m0 50h0m0 100h0m10 -330h0m0 340h0m0 -180h0m0 230h0m0 10h0m0 -170h0m0 450h0m0 -510h0m0 -20h0m0 40h0m0 190h0m0 -270h0m10 210h0m0 -130h0m0 -110h0m0 340h0m0 -50h0m10 30h0m0 50h0m0 -440h0m0 230h0m0 250h0m0 -60h0m0 120h0m0 -210h0m0 90h0m0 -70h0m0 -40h0m0 -80h0m10 -210h0m0 260h0m0 80h0m0 -200h0m0 130h0m0 110h0m0 -60h0m0 -100h0m10 250h0m0 0h0m0 -350h0m0 210h0m0 20h0m0 150h0m0 -460h0m0 280h0m0 20h0m0 100h0m0 -340h0m0 380h0m0 -360h0m0 150h0m0 180h0m0 -200h0m0 60h0m10 30h0m0 120h0m0 -80h0m0 90h0m0 100h0m0 -410h0m0 420h0m0 -260h0m10 -140h0m0 210h0m0 -10h0m0 30h0m0 190h0m0 -380h0m0 330h0m0 -210h0m0 50h0m0 -170h0m0 170h0m0 -120h0m10 180h0m0 20h0m0 -210h0m0 70h0m0 120h0m0 30h0m0 -190h0m0 0h0m0 -40h0m0 -60h0m10 -50h0m0 160h0m0 400h0m0 -140h0m0 170h0m0 -470h0m0 -20h0m10 -30h0m0 120h0m0 220h0m0 -160h0m0 400h0m0 -220h0m0 -310h0m0 160h0m0 130h0m0 100h0m0 -220h0m0 -100h0m0 -30h0m10 150h0m0 60h0m0 50h0m0 190h0m0 -230h0m0 160h0m0 -290h0m0 180h0m0 70h0m0 -330h0m0 230h0m0 -90h0m0 210h0m0 -90h0m10 -110h0m0 200h0m0 -260h0m0 -30h0m0 0h0m0 280h0m0 -310h0m0 350h0m0 -370h0m0 230h0m10 -120h0m0 60h0m0 150h0m0 150h0m0 0h0m0 -500h0m0 70h0m0 480h0m0 -370h0m0 120h0m10 -180h0m0 430h0m0 -200h0m0 160h0m0 40h0m0 -440h0m0 250h0m0 -260h0m0 150h0m0 250h0m0 -250h0m10 -20h0m0 -300h0m0 310h0m0 -260h0m0 -70h0m0 270h0m0 -50h0m0 160h0m0 20h0m0 0h0m10 -300h0m0 190h0m0 300h0m0 170h0m0 -260h0m0 -90h0m0 -30h0m10 160h0m0 -50h0m0 70h0m0 -370h0m0 180h0m0 -60h0m0 30h0m0 110h0m0 -220h0m0 130h0m0 20h0m0 -60h0m10 70h0m0 -190h0m0 260h0m0 -250h0m0 -180h0m0 390h0m0 80h0m0 -100h0m0 20h0m10 -300h0m0 150h0m0 -150h0m0 110h0m0 190h0m0 -130h0m0 -180h0m0 140h0m0 160h0m0 50h0m0 -110h0m0 80h0m0 -420h0m0 540h0m10 -360h0m0 210h0m0 -140h0m0 130h0m0 -210h0m0 170h0m0 -40h0m0 -220h0m0 310h0m0 -120h0m0 -130h0m0 390h0m0 -260h0m10 70h0m0 -380h0m0 120h0m0 210h0m0 -140h0m0 400h0m0 -50h0m0 -290h0m0 180h0m0 -150h0m0 220h0m0 -310h0m0 160h0m10 -80h0m0 -270h0m0 400h0m0 140h0m0 -210h0m0 -410h0m0 400h0m0 90h0m0 -80h0m0 0h0m0 40h0m0 -70h0m10 -200h0m0 130h0m0 10h0m0 50h0m0 -90h0m0 230h0m0 -300h0m0 -200h0m0 170h0m0 170h0m0 -180h0m0 180h0m0 80h0m0 -100h0m0 -30h0m10 -150h0m0 50h0m0 -60h0m0 150h0m10 270h0m0 -130h0m0 -210h0m0 170h0m0 -190h0m0 270h0m0 -320h0m0 320h0m10 -270h0m0 -60h0m0 130h0m0 -200h0m0 40h0m0 170h0m0 -180h0m10 140h0m0 10h0m0 -100h0m0 100h0m0 360h0m0 -190h0m0 -400h0m0 -40h0m0 40h0m0 330h0m10 210h0m0 -350h0m0 -190h0m0 220h0m0 280h0m0 -370h0m0 80h0m0 100h0m0 -200h0m0 300h0m0 -330h0m0 180h0m0 120h0m10 -420h0m0 250h0m0 250h0m0 -360h0m0 100h0m0 -140h0m0 420h0m0 0h0m10 -190h0m0 -20h0m0 -180h0m0 50h0m0 -140h0m0 170h0m0 30h0m0 -90h0m0 -70h0m0 40h0m0 290h0m10 -240h0m0 60h0m0 -10h0m0 230h0m0 -490h0m0 180h0m0 240h0m0 -80h0m0 -100h0m0 60h0m0 100h0m0 -160h0m10 200h0m0 30h0m0 -150h0m0 -240h0m0 100h0m0 310h0m10 -420h0m0 170h0m0 80h0m0 200h0m0 110h0m0 -240h0m0 220h0m0 -230h0m0 -240h0m0 340h0m0 -370h0m10 60h0m0 20h0m0 190h0m0 -160h0m0 -90h0m0 160h0m0 120h0m0 -360h0m0 290h0m0 -190h0m10 30h0m0 200h0m0 -30h0m0 440h0m0 -360h0m0 -430h0m0 420h0m0 -30h0m0 10h0m0 60h0m0 -130h0m0 150h0m0 -420h0m10 350h0m0 -40h0m0 -320h0m0 450h0m0 -370h0m0 110h0m0 310h0m0 -250h0m0 170h0m0 -50h0m0 50h0m0 -70h0m0 -110h0m0 410h0m10 -300h0m0 -70h0m0 -10h0m0 110h0m0 160h0m0 -230h0m0 -20h0m0 -80h0m0 -180h0m0 210h0m0 -170h0m0 260h0m0 -200h0m10 200h0m0 -70h0m0 80h0m0 10h0m0 -160h0m0 50h0m0 140h0m0 -90h0m0 -160h0m0 -10h0m0 280h0m10 -90h0m0 -20h0m0 20h0m0 -110h0m0 90h0m0 -190h0m0 160h0m10 170h0m0 -70h0m0 -270h0m0 470h0m0 -260h0m0 -280h0m0 160h0m0 460h0m0 -220h0m0 -360h0m0 610h0m0 -410h0m0 -160h0m0 400h0m10 30h0m0 -190h0m0 -130h0m0 100h0m0 0h0m0 -60h0m0 -40h0m0 230h0m0 -50h0m0 40h0m0 -150h0m10 -100h0m0 -110h0m0 350h0m0 -70h0m0 290h0m0 -90h0m0 -210h0m0 -200h0m0 50h0m0 360h0m0 -140h0m0 -350h0m0 200h0m10 20h0m0 -20h0m0 120h0m0 -110h0m0 20h0m0 200h0m0 140h0m0 -270h0m0 -210h0m0 360h0m10 -140h0m0 -60h0m0 -120h0m0 140h0m0 220h0m0 -270h0m0 190h0m0 -110h0m0 -200h0m0 120h0m10 100h0m0 -250h0m0 210h0m0 220h0m0 -50h0m0 -260h0m0 40h0m0 410h0m0 50h0m0 -390h0m0 20h0m0 340h0m0 -380h0m0 20h0m10 300h0m0 -190h0m0 -270h0m0 240h0m0 110h0m0 -120h0m0 -340h0m0 580h0m0 -290h0m0 -100h0m10 -30h0m0 -100h0m0 520h0m0 -500h0m0 0h0m0 170h0m0 120h0m0 130h0m0 -50h0m0 -50h0m0 30h0m0 -210h0m10 330h0m0 -210h0m0 -220h0m0 260h0m0 70h0m0 -520h0m0 170h0m10 450h0m0 -320h0m0 0h0m0 90h0m0 10h0m0 -220h0m0 190h0m0 0h0m0 150h0m0 -370h0m0 180h0m10 30h0m0 -30h0m0 120h0m0 60h0m0 -10h0m0 -500h0m0 320h0m0 -40h0m0 0h0m0 190h0m10 -40h0m0 -100h0m0 60h0m0 -10h0m0 -230h0m0 110h0m0 -40h0m10 120h0m0 250h0m0 -50h0m0 -510h0m0 690h0m0 -490h0m0 -130h0m0 -10h0m0 20h0m0 430h0m0 -240h0m0 290h0m0 -270h0m0 -90h0m10 -60h0m0 350h0m0 0h0m0 -120h0m0 130h0m0 -370h0m0 60h0m0 90h0m0 40h0m0 200h0m10 -370h0m0 -190h0m0 400h0m0 40h0m0 -160h0m0 150h0m0 -40h0m0 -120h0m0 120h0m0 -140h0m0 170h0m0 -170h0m10 300h0m0 -500h0m0 10h0m0 310h0m0 -80h0m0 270h0m0 -170h0m0 -370h0m0 380h0m0 240h0m0 -280h0m0 -130h0m0 200h0m0 -80h0m10 -70h0m0 30h0m0 160h0m0 -300h0m0 10h0m0 120h0m0 -60h0m0 -330h0m0 320h0m0 130h0m0 -200h0m0 390h0m0 -370h0m10 300h0m0 -50h0m0 10h0m0 -200h0m0 -70h0m0 140h0m0 -170h0m0 -10h0m0 160h0m0 -270h0m0 0h0m10 170h0m0 -110h0m0 30h0m0 390h0m0 -310h0m0 350h0m0 -380h0m0 -10h0m0 130h0m0 -220h0m0 370h0m0 -410h0m10 110h0m0 170h0m0 -110h0m0 210h0m0 -240h0m0 90h0m0 -340h0m0 490h0m0 -390h0m0 180h0m0 250h0m0 -120h0m0 20h0m10 350h0m0 -300h0m0 -160h0m0 -110h0m0 -110h0m0 490h0m0 -200h0m0 140h0m0 -90h0m0 -230h0m0 160h0m0 60h0m10 -120h0m0 60h0m0 -170h0m0 -290h0m0 320h0m0 20h0m0 -90h0m0 190h0m0 -170h0m10 150h0m0 -220h0m0 10h0m0 280h0m0 -300h0m0 100h0m0 -30h0m0 140h0m0 -60h0m0 -90h0m0 120h0m0 10h0m0 -170h0m10 230h0m0 -130h0m0 -70h0m0 240h0m0 -180h0m0 -120h0m0 -20h0m0 340h0m0 -60h0m0 70h0m0 -150h0m0 140h0m0 -310h0m10 170h0m0 10h0m0 -300h0m0 520h0m0 -360h0m0 -80h0m0 -40h0m0 90h0m0 180h0m0 -350h0m10 320h0m0 -270h0m0 170h0m0 -140h0m0 300h0m0 -10h0m0 310h0m0 -480h0m0 -160h0m10 300h0m0 -270h0m0 50h0m0 70h0m0 120h0m0 60h0m0 -170h0m0 10h0m0 190h0m0 -180h0m0 120h0m0 80h0m0 -80h0m10 -40h0m0 80h0m0 -230h0m0 170h0m0 170h0m0 150h0m0 -160h0m0 -180h0m0 240h0m0 -40h0m10 -270h0m0 -140h0m0 140h0m0 -440h0m0 810h0m0 -110h0m0 -570h0m0 530h0m0 -120h0m0 -220h0m0 250h0m0 50h0m0 -50h0m0 -90h0m0 -20h0m0 170h0m10 -110h0m0 -300h0m0 270h0m10 180h0m0 -230h0m0 340h0m0 -200h0m0 -50h0m0 -180h0m0 60h0m0 200h0m0 -80h0m0 -150h0m0 0h0m0 150h0m0 90h0m10 -130h0m0 380h0m0 -10h0m0 20h0m0 -350h0m0 -70h0m0 210h0m0 -180h0m10 140h0m0 -340h0m0 470h0m0 -120h0m0 20h0m0 -160h0m0 200h0m0 -70h0m0 -50h0m10 80h0m0 -160h0m0 -320h0m0 510h0m0 280h0m0 -630h0m0 310h0m0 50h0m0 10h0m0 -10h0m0 190h0m0 -570h0m0 30h0m0 570h0m10 -270h0m0 120h0m0 -70h0m0 10h0m0 -80h0m0 -10h0m0 -10h0m0 -160h0m0 300h0m0 210h0m0 -410h0m0 90h0m0 -80h0m0 230h0m0 -50h0m0 -240h0m0 310h0m10 -140h0m0 -160h0m0 230h0m0 70h0m0 -470h0m0 390h0m0 -90h0m0 80h0m0 70h0m0 -210h0m0 120h0m0 130h0m0 -300h0m10 360h0m0 -80h0m0 -80h0m0 -330h0m0 140h0m0 30h0m0 -10h0m0 60h0m0 130h0m0 40h0m0 200h0m0 -80h0m0 -170h0m10 10h0m0 -170h0m0 210h0m0 180h0m0 -520h0m10 320h0m0 260h0m0 -620h0m10 460h0m0 -300h0m0 430h0m0 -220h0m0 -10h0m10 -40h0m0 300h0m0 -480h0m0 120h0m0 110h0m0 -10h0m0 120h0m10 -50h0m0 -130h0m0 -100h0m0 110h0m0 30h0m10 -270h0m0 520h0m0 80h0m0 -420h0m0 20h0m0 160h0m0 -230h0m0 -50h0m0 -50h0m0 180h0m0 -200h0m10 80h0m0 110h0m0 -30h0m0 260h0m0 -510h0m0 150h0m0 240h0m0 -360h0m0 510h0m0 -520h0m0 160h0m0 120h0m0 110h0m0 -300h0m10 -50h0m0 230h0m0 -140h0m0 -220h0m0 520h0m0 -400h0m0 320h0m0 -300h0m0 -50h0m10 190h0m0 -180h0m0 -250h0m0 660h0m0 -580h0m0 300h0m0 90h0m0 -30h0m0 -160h0m0 -200h0m0 230h0m0 -20h0m0 170h0m0 110h0m10 -350h0m0 190h0m0 370h0m0 -450h0m0 120h0m0 50h0m0 0h0m0 -330h0m0 330h0m0 -240h0m0 180h0m0 110h0m10 -430h0m0 120h0m0 -150h0m0 240h0m0 -120h0m0 -220h0m0 420h0m0 -230h0m0 120h0m0 -70h0m0 270h0m0 -110h0m0 250h0m0 -360h0m10 -20h0m0 180h0m0 -370h0m0 160h0m0 50h0m0 220h0m0 -170h0m0 -180h0m0 300h0m0 0h0m0 -100h0m0 -20h0m10 -110h0m0 50h0m0 220h0m0 -300h0m0 90h0m0 -60h0m0 280h0m0 -130h0m0 -60h0m0 -70h0m10 40h0m0 240h0m0 -450h0m0 280h0m0 -30h0m0 -250h0m0 290h0m10 -40h0m0 -130h0m0 30h0m0 290h0m0 -210h0m0 -240h0m0 -400h0m0 760h0m0 -370h0m10 90h0m0 60h0m0 -110h0m0 340h0m0 -120h0m0 80h0m0 -220h0m0 -90h0m0 230h0m10 -100h0m0 -110h0m0 240h0m0 40h0m0 360h0m0 -290h0m0 -210h0m0 150h0m10 50h0m0 -410h0m0 200h0m0 -100h0m0 -30h0m0 130h0m0 -110h0m0 350h0m0 -370h0m0 240h0m10 150h0m0 190h0m0 -600h0m0 460h0m0 -410h0m0 320h0m0 -190h0m0 -160h0m10 190h0m0 190h0m0 -140h0m0 0h0m0 160h0m0 -140h0m0 130h0m0 -130h0m0 -140h0m0 -90h0m0 330h0m0 -120h0m0 -160h0m0 -70h0m0 110h0m0 -150h0m10 120h0m0 350h0m0 -90h0m0 -460h0m0 400h0m10 -80h0m0 190h0m0 -80h0m0 -90h0m0 140h0m0 -520h0m0 480h0m10 -340h0m0 430h0m0 10h0m0 120h0m0 -220h0m0 -60h0m0 230h0m0 -50h0m0 -540h0m0 300h0m0 50h0m0 50h0m10 -150h0m0 290h0m0 -40h0m0 20h0m0 70h0m0 -110h0m0 -310h0m0 220h0m0 -160h0m0 320h0m10 -360h0m0 120h0m0 40h0m0 180h0m0 190h0m0 -370h0m0 150h0m0 20h0m10 -100h0m0 110h0m0 -440h0m0 310h0m0 50h0m0 -120h0m0 -80h0m0 300h0m0 -120h0m0 10h0m0 -190h0m10 180h0m0 120h0m0 -220h0m0 50h0m0 0h0m0 30h0m0 240h0m0 -190h0m0 30h0m0 30h0m0 -80h0m10 120h0m0 -80h0m0 -10h0m0 -190h0m0 50h0m0 100h0m0 -110h0m10 -30h0m0 50h0m0 40h0m0 70h0m0 190h0m10 -190h0m0 -240h0m0 130h0m0 100h0m0 130h0m0 -70h0m0 80h0m0 -200h0m0 80h0m0 -370h0m0 510h0m0 -20h0m0 -340h0m0 170h0m0 -120h0m0 160h0m10 -30h0m0 120h0m0 340h0m0 -430h0m0 430h0m0 -590h0m0 70h0m0 -50h0m0 -140h0m10 -100h0m0 350h0m0 30h0m0 -10h0m0 -160h0m0 530h0m0 -270h0m0 -50h0m0 40h0m0 -260h0m0 120h0m10 -20h0m0 -50h0m0 140h0m0 40h0m0 -190h0m0 320h0m0 -160h0m0 260h0m0 -160h0m0 -170h0m0 -110h0m0 380h0m0 -270h0m0 220h0m0 -130h0m0 40h0m0 -290h0m0 390h0m0 -120h0m10 110h0m0 -240h0m0 60h0m0 320h0m0 -280h0m0 200h0m0 -390h0m0 100h0m0 180h0m10 -20h0m0 160h0m0 -140h0m0 -260h0m0 390h0m0 -150h0m0 -160h0m0 -150h0m0 110h0m0 110h0m10 -180h0m0 260h0m0 -370h0m0 150h0m0 40h0m0 -20h0m0 90h0m0 20h0m0 280h0m0 -200h0m0 100h0m0 130h0m0 -300h0m0 150h0m10 -50h0m0 -310h0m0 110h0m0 130h0m0 -10h0m0 60h0m0 -70h0m0 -70h0m0 210h0m0 -170h0m0 140h0m0 -30h0m0 -140h0m0 160h0m0 -140h0m10 -30h0m0 -240h0m0 290h0m0 130h0m0 -70h0m0 10h0m0 -200h0m0 0h0m0 340h0m0 50h0m0 20h0m0 -570h0m10 240h0m0 130h0m0 -140h0m0 90h0m0 170h0m0 180h0m0 -220h0m0 -270h0m0 20h0m0 140h0m0 130h0m0 -510h0m0 330h0m10 -60h0m0 100h0m0 -230h0m0 -90h0m0 400h0m0 -350h0m0 220h0m0 60h0m0 70h0m0 -250h0m0 140h0m0 80h0m0 150h0m10 -370h0m0 220h0m0 -30h0m0 -150h0m0 110h0m0 10h0m0 -140h0m0 150h0m0 -50h0m0 -130h0m0 50h0m10 40h0m0 -10h0m0 -160h0m0 100h0m0 230h0m0 -240h0m0 170h0m0 140h0m0 10h0m0 160h0m0 -280h0m0 190h0m0 -420h0m0 210h0m0 50h0m0 -20h0m0 20h0m10 -80h0m0 100h0m0 -120h0m0 20h0m0 -20h0m0 290h0m0 -170h0m0 -260h0m0 -90h0m0 170h0m0 210h0m0 -50h0m0 -460h0m0 650h0m0 -340h0m10 -160h0m0 450h0m0 -120h0m0 -180h0m0 290h0m0 -120h0m0 -160h0m10 170h0m0 -270h0m0 200h0m0 10h0m0 200h0m0 -280h0m0 -130h0m0 80h0m0 250h0m0 -230h0m0 150h0m0 -140h0m10 -60h0m0 150h0m0 -180h0m0 140h0m0 -40h0m0 -60h0m0 90h0m0 -160h0m0 270h0m0 -310h0m0 310h0m0 -30h0m0 -90h0m0 -230h0m0 70h0m0 300h0m0 50h0m0 -20h0m0 -220h0m0 150h0m10 -320h0m0 70h0m0 150h0m0 -90h0m0 110h0m0 -10h0m0 180h0m0 -120h0m0 -40h0m0 -500h0m0 520h0m10 -10h0m0 -430h0m0 420h0m0 -380h0m0 110h0m0 450h0m10 -210h0m0 360h0m0 -440h0m0 90h0m0 80h0m0 10h0m0 -510h0m0 100h0m10 110h0m0 100h0m0 20h0m0 60h0m0 -80h0m0 -120h0m0 40h0m0 120h0m0 120h0m0 150h0m0 -430h0m10 110h0m0 0h0m0 -70h0m0 -280h0m0 550h0m0 -150h0m0 0h0m10 -290h0m0 340h0m0 -110h0m0 240h0m0 -280h0m0 190h0m10 -100h0m0 -80h0m0 110h0m0 30h0m0 -210h0m0 330h0m0 -160h0m0 170h0m10 -450h0m0 360h0m0 80h0m0 -200h0m0 -70h0m0 170h0m0 -210h0m0 -30h0m0 340h0m0 50h0m0 -90h0m0 -30h0m10 130h0m0 -150h0m0 130h0m0 -50h0m0 -390h0m0 230h0m0 -110h0m0 370h0m0 60h0m0 -250h0m0 30h0m0 130h0m0 -210h0m10 140h0m0 -70h0m0 -370h0m0 390h0m0 -90h0m0 350h0m0 -420h0m0 290h0m0 -110h0m0 100h0m10 70h0m0 -10h0m0 -350h0m0 -90h0m0 -10h0m0 410h0m0 40h0m0 -310h0m0 230h0m10 -250h0m0 90h0m0 10h0m0 160h0m0 -40h0m0 -230h0m0 320h0m0 -110h0m0 90h0m0 70h0m0 -430h0m10 380h0m0 -130h0m0 -90h0m0 -10h0m0 100h0m0 -170h0m10 90h0m0 130h0m0 -180h0m0 -50h0m0 50h0m0 160h0m0 -80h0m0 -120h0m0 260h0m10 -40h0m0 200h0m0 -300h0m0 100h0m0 150h0m0 -420h0m0 620h0m0 -190h0m0 60h0m0 -290h0m0 250h0m0 0h0m0 -150h0m10 -150h0m0 -20h0m0 150h0m0 -70h0m0 140h0m0 -170h0m0 -10h0m0 -70h0m0 340h0m0 -200h0m0 240h0m10 -120h0m0 -240h0m0 410h0m0 -320h0m0 10h0m0 200h0m0 -120h0m0 50h0m0 230h0m0 -420h0m0 310h0m0 -250h0m10 -10h0m0 100h0m0 90h0m0 50h0m0 -60h0m10 0h0m0 -160h0m0 60h0m0 300h0m10 -290h0m0 -80h0m0 50h0m0 140h0m0 -50h0m0 -360h0m0 170h0m0 0h0m0 -220h0m0 490h0m0 -270h0m10 20h0m0 -30h0m0 360h0m0 -120h0m0 -110h0m0 -140h0m0 -50h0m0 -80h0m10 170h0m0 -210h0m0 280h0m0 -90h0m0 0h0m0 310h0m0 -140h0m0 -170h0m0 220h0m0 -110h0m0 -90h0m0 40h0m10 -110h0m0 -50h0m0 140h0m0 0h0m0 -280h0m0 130h0m0 10h0m0 210h0m0 -220h0m0 50h0m10 370h0m0 -230h0m0 -300h0m0 20h0m0 -140h0m0 190h0m0 300h0m0 -150h0m0 -100h0m0 0h0m0 120h0m10 30h0m0 -10h0m0 -290h0m0 240h0m0 -420h0m0 350h0m0 -10h0m0 290h0m0 -20h0m0 -210h0m0 190h0m0 -220h0m10 -30h0m0 -150h0m0 -40h0m0 240h0m0 210h0m0 -180h0m0 -330h0m0 280h0m0 130h0m10 -10h0m0 -300h0m0 10h0m0 160h0m0 -430h0m0 230h0m0 180h0m0 -190h0m0 250h0m0 -140h0m0 230h0m10 -370h0m0 110h0m0 50h0m0 260h0m0 -320h0m0 80h0m0 50h0m0 40h0m0 170h0m0 -310h0m0 310h0m0 -220h0m10 -10h0m0 130h0m0 -500h0m0 680h0m0 -450h0m0 160h0m0 170h0m0 -190h0m0 240h0m0 -410h0m0 20h0m10 -40h0m0 190h0m0 170h0m0 -370h0m0 -100h0m0 150h0m0 50h0m0 260h0m10 -170h0m0 220h0m0 -150h0m0 -40h0m0 -190h0m0 70h0m0 -250h0m0 270h0m0 -50h0m0 0h0m0 50h0m0 50h0m10 -190h0m0 220h0m0 50h0m0 -20h0m0 -400h0m0 210h0m0 70h0m0 70h0m10 -260h0m0 700h0m0 -410h0m0 -50h0m0 140h0m0 20h0m0 70h0m0 -350h0m0 70h0m0 -110h0m0 310h0m10 0h0m0 80h0m0 -360h0m0 300h0m10 -290h0m0 40h0m0 150h0m0 -140h0m0 70h0m0 30h0m0 -120h0m0 40h0m0 100h0m0 -100h0m0 -70h0m0 400h0m0 -240h0m10 120h0m0 -170h0m0 180h0m0 90h0m0 -100h0m0 -240h0m0 190h0m0 120h0m10 220h0m0 -320h0m0 -20h0m0 -100h0m0 -160h0m0 160h0m0 130h0m0 10h0m0 260h0m0 -190h0m0 -210h0m10 -180h0m0 200h0m0 230h0m0 -140h0m0 220h0m0 -130h0m0 -30h0m0 60h0m0 -170h0m10 330h0m0 -180h0m0 -110h0m0 290h0m0 -630h0m10 500h0m0 -40h0m0 30h0m0 150h0m0 -290h0m0 250h0m0 -320h0m0 180h0m10 180h0m0 -360h0m0 -170h0m0 340h0m0 100h0m0 -260h0m0 10h0m0 310h0m0 -100h0m10 -350h0m0 330h0m0 -320h0m0 270h0m0 200h0m0 -400h0m0 190h0m0 -250h0m0 390h0m10 -120h0m0 -100h0m0 -20h0m0 40h0m0 120h0m0 -50h0m0 210h0m0 20h0m0 -110h0m0 40h0m10 310h0m0 -490h0m0 110h0m0 200h0m0 -390h0m0 150h0m0 60h0m0 -250h0m0 110h0m0 -250h0m0 290h0m0 -30h0m0 -140h0m0 340h0m0 -140h0m0 200h0m0 -480h0m0 110h0m0 510h0m10 -330h0m0 0h0m0 -180h0m0 280h0m0 -350h0m0 340h0m0 -270h0m0 270h0m0 -70h0m0 150h0m10 -180h0m0 300h0m0 -160h0m0 -310h0m0 -20h0m0 80h0m0 90h0m0 400h0m0 -690h0m0 410h0m0 -230h0m0 80h0m0 80h0m0 180h0m10 -420h0m0 320h0m0 50h0m0 -120h0m0 -70h0m0 -10h0m0 -140h0m10 290h0m0 -30h0m0 -300h0m0 320h0m0 20h0m0 -80h0m0 -60h0m0 90h0m10 -450h0m0 220h0m0 300h0m0 -110h0m0 -180h0m0 220h0m0 10h0m0 -580h0m0 280h0m0 330h0m0 20h0m0 -90h0m0 -110h0m0 -20h0m0 140h0m10 150h0m0 -160h0m0 -180h0m0 80h0m0 340h0m0 -150h0m0 -350h0m0 50h0m0 60h0m0 -200h0m10 160h0m0 -40h0m0 40h0m0 40h0m0 120h0m0 -110h0m0 0h0m0 130h0m0 40h0m0 -60h0m10 -40h0m0 -250h0m0 140h0m0 0h0m0 -70h0m10 20h0m0 110h0m0 80h0m0 -250h0m0 -10h0m0 320h0m0 -300h0m0 150h0m0 -190h0m0 -110h0m0 180h0m0 -130h0m0 230h0m0 -70h0m0 40h0m0 -200h0m0 260h0m10 -10h0m0 250h0m0 -390h0m0 240h0m0 -100h0m0 -310h0m0 10h0m0 -90h0m0 580h0m0 -340h0m0 270h0m0 -50h0m10 -300h0m0 180h0m0 260h0m0 -200h0m0 -600h0m0 650h0m0 -60h0m0 -20h0m0 -180h0m0 210h0m0 160h0m0 -240h0m10 -70h0m0 350h0m0 -60h0m0 -270h0m0 80h0m0 90h0m0 -390h0m0 60h0m0 100h0m0 -360h0m10 450h0m0 50h0m0 -320h0m0 400h0m0 210h0m0 -240h0m0 40h0m0 -230h0m0 80h0m0 -30h0m10 10h0m0 -160h0m0 350h0m0 0h0m0 -80h0m0 70h0m0 -280h0m0 290h0m10 -380h0m0 430h0m0 70h0m0 -230h0m0 -340h0m0 340h0m0 -100h0m0 160h0m10 -180h0m0 -100h0m0 210h0m0 80h0m0 -400h0m0 420h0m0 -30h0m0 -140h0m10 160h0m0 -190h0m0 -250h0m0 190h0m0 210h0m0 -250h0m0 540h0m0 -500h0m0 170h0m0 -160h0m0 320h0m10 -140h0m0 -340h0m0 230h0m0 110h0m0 160h0m0 -280h0m0 90h0m0 -260h0m0 430h0m0 -330h0m10 -140h0m0 110h0m0 450h0m0 10h0m0 -200h0m0 150h0m0 -160h0m0 -170h0m10 160h0m0 -10h0m0 60h0m0 -460h0m0 360h0m0 -10h0m0 10h0m0 80h0m0 -330h0m0 290h0m0 -150h0m0 -120h0m0 330h0m0 -130h0m0 -50h0m0 30h0m10 130h0m0 170h0m0 -400h0m0 220h0m0 -20h0m0 80h0m0 -270h0m0 -180h0m0 230h0m0 200h0m10 -170h0m0 -70h0m0 -180h0m0 220h0m0 130h0m10 -10h0m0 -80h0m0 100h0m0 -140h0m0 80h0m0 -10h0m0 90h0m0 80h0m0 -200h0m0 240h0m0 -270h0m10 160h0m0 -350h0m0 140h0m0 190h0m0 -260h0m10 200h0m0 -180h0m0 150h0m0 60h0m0 200h0m0 150h0m0 -420h0m0 -150h0m0 170h0m10 420h0m0 -520h0m0 60h0m0 170h0m0 -130h0m0 -20h0m0 140h0m0 -330h0m0 430h0m0 -500h0m0 220h0m0 130h0m10 70h0m0 40h0m0 -190h0m0 70h0m0 -80h0m0 -270h0m0 260h0m0 -60h0m0 50h0m0 90h0m0 -200h0m0 -80h0m0 400h0m10 -360h0m0 30h0m0 400h0m0 -290h0m0 270h0m0 -310h0m0 430h0m0 -380h0m0 -40h0m0 180h0m10 -80h0m0 -130h0m0 -110h0m0 380h0m0 -110h0m0 120h0m0 -100h0m0 0h0m0 -80h0m0 -20h0m10 300h0m0 -40h0m0 -170h0m0 60h0m0 -150h0m0 200h0m0 20h0m0 40h0m0 -80h0m0 -200h0m0 40h0m0 100h0m0 -50h0m10 170h0m0 -40h0m0 160h0m0 -320h0m0 230h0m0 -150h0m0 -190h0m0 520h0m10 -220h0m0 80h0m0 -180h0m0 340h0m0 -360h0m0 -190h0m0 460h0m0 -240h0m0 10h0m0 40h0m0 -50h0m0 -240h0m0 50h0m10 510h0m0 -300h0m0 170h0m0 -10h0m0 -140h0m0 110h0m0 -380h0m0 250h0m0 -120h0m0 190h0m0 -150h0m0 150h0m10 -10h0m0 -70h0m0 40h0m0 -250h0m0 220h0m0 230h0m0 -160h0m0 -20h0m0 -120h0m0 70h0m0 -230h0m0 140h0m0 -20h0m0 90h0m10 200h0m0 -120h0m0 140h0m0 -60h0m0 130h0m0 40h0m0 -340h0m0 280h0m0 -160h0m10 20h0m0 -390h0m0 320h0m0 260h0m0 -160h0m0 -80h0m0 -50h0m0 160h0m0 -10h0m0 40h0m0 -340h0m0 380h0m0 -330h0m10 40h0m0 50h0m0 -170h0m0 510h0m0 -460h0m0 60h0m0 -280h0m0 240h0m0 10h0m10 150h0m0 -310h0m0 120h0m0 370h0m0 0h0m0 -160h0m10 -270h0m0 490h0m0 -140h0m0 -160h0m0 0h0m0 -270h0m0 -20h0m0 210h0m0 130h0m0 -120h0m10 100h0m0 -170h0m0 350h0m0 -410h0m0 340h0m0 -310h0m0 200h0m10 -210h0m0 330h0m0 -40h0m0 -200h0m0 -60h0m0 -210h0m0 70h0m0 190h0m0 100h0m0 40h0m10 -300h0m0 300h0m0 0h0m0 -20h0m0 -130h0m0 -90h0m0 550h0m0 -550h0m10 370h0m0 -470h0m0 60h0m0 160h0m0 100h0m0 -260h0m0 70h0m10 110h0m0 100h0m0 -230h0m0 30h0m0 100h0m0 -130h0m0 -80h0m0 -380h0m0 430h0m0 100h0m10 -150h0m0 520h0m0 -500h0m0 0h0m0 -10h0m0 70h0m0 -60h0m0 160h0m0 -130h0m0 330h0m10 -310h0m0 400h0m0 -600h0m0 320h0m0 -30h0m0 -190h0m0 520h0m0 -260h0m0 -170h0m0 20h0m10 110h0m0 -10h0m0 20h0m0 -50h0m10 -140h0m0 -200h0m0 370h0m0 -340h0m0 30h0m0 130h0m0 430h0m0 -520h0m0 110h0m0 120h0m0 -190h0m0 -150h0m0 330h0m10 -70h0m0 -80h0m0 320h0m0 -270h0m10 90h0m0 -60h0m0 -110h0m0 -110h0m0 260h0m0 -130h0m0 -50h0m0 120h0m0 -140h0m10 -130h0m0 390h0m0 -130h0m0 280h0m0 20h0m0 -570h0m0 640h0m0 -590h0m0 -10h0m0 210h0m0 10h0m0 20h0m10 350h0m0 -330h0m0 50h0m0 0h0m0 240h0m0 -270h0m0 160h0m10 -290h0m0 280h0m0 -290h0m0 110h0m0 50h0m0 60h0m0 -420h0m0 330h0m0 350h0m0 -300h0m10 -150h0m0 220h0m0 -70h0m0 -300h0m0 200h0m0 110h0m0 -400h0m0 170h0m0 10h0m0 520h0m10 -130h0m0 -330h0m0 180h0m0 10h0m0 -250h0m0 300h0m10 -20h0m0 -120h0m0 70h0m0 50h0m0 80h0m0 -470h0m0 290h0m0 -30h0m0 -40h0m0 -10h0m0 250h0m0 -110h0m0 20h0m0 -110h0m0 240h0m0 60h0m10 -340h0m0 -70h0m0 180h0m0 -20h0m0 220h0m0 -10h0m0 -120h0m0 110h0m0 -120h0m0 60h0m10 210h0m0 -110h0m0 -150h0m0 300h0m0 -200h0m0 80h0m10 -40h0m0 -20h0m0 -140h0m0 220h0m0 0h0m0 -130h0m0 70h0m0 10h0m0 80h0m0 -190h0m0 190h0m0 -110h0m10 60h0m0 -190h0m0 60h0m0 270h0m0 -180h0m0 -170h0m10 50h0m0 200h0m0 -70h0m0 80h0m0 30h0m0 30h0m0 -240h0m0 0h0m0 -30h0m0 100h0m0 20h0m10 10h0m0 80h0m0 190h0m0 -100h0m0 -440h0m0 -70h0m0 230h0m0 120h0m0 -30h0m0 260h0m0 -290h0m0 120h0m0 -170h0m10 70h0m0 -40h0m0 -30h0m0 100h0m0 40h0m0 120h0m0 -70h0m0 -100h0m10 50h0m0 -320h0m0 250h0m0 -440h0m0 630h0m0 -440h0m0 540h0m0 -270h0m0 -10h0m0 -90h0m0 310h0m0 -320h0m10 -40h0m0 190h0m0 -20h0m0 -170h0m0 130h0m0 -130h0m0 0h0m0 60h0m10 180h0m0 -180h0m0 50h0m0 -40h0m0 80h0m0 -170h0m0 140h0m0 -170h0m0 -160h0m10 150h0m0 150h0m0 10h0m0 -60h0m0 120h0m0 -60h0m0 -140h0m10 310h0m0 -90h0m0 -190h0m0 170h0m0 -180h0m0 70h0m0 -130h0m0 0h0m10 220h0m0 -210h0m0 -30h0m0 260h0m0 -160h0m0 180h0m0 0h0m0 -290h0m10 -160h0m0 280h0m0 90h0m0 10h0m0 -180h0m0 -140h0m0 -30h0m0 340h0m10 -240h0m0 250h0m0 -150h0m0 60h0m0 -250h0m0 230h0m0 140h0m0 160h0m10 -200h0m0 -220h0m0 -150h0m0 80h0m0 40h0m0 120h0m0 -70h0m0 80h0m0 100h0m0 -260h0m0 250h0m0 -240h0m10 290h0m0 -230h0m0 -100h0m0 -50h0m0 320h0m0 -140h0m0 -160h0m0 320h0m0 -300h0m0 70h0m10 -30h0m0 140h0m0 10h0m0 -100h0m0 200h0m0 -310h0m0 130h0m0 -110h0m0 170h0m0 -150h0m0 10h0m0 110h0m0 -160h0m10 220h0m0 -80h0m0 -190h0m0 80h0m0 20h0m0 -10h0m0 -150h0m0 130h0m0 -160h0m0 -50h0m0 350h0m0 20h0m0 140h0m10 -150h0m0 -20h0m0 -220h0m0 290h0m0 -260h0m0 -20h0m10 140h0m0 -110h0m0 60h0m0 220h0m0 -190h0m0 -20h0m0 0h0m0 250h0m0 -370h0m0 350h0m0 -80h0m0 240h0m0 -260h0m10 -160h0m0 30h0m0 180h0m0 -130h0m0 -110h0m0 90h0m0 180h0m0 -170h0m0 140h0m10 -150h0m0 -140h0m0 160h0m0 80h0m0 -70h0m10 -240h0m0 230h0m0 120h0m0 180h0m0 -370h0m0 50h0m0 -210h0m10 270h0m0 -160h0m0 -240h0m0 560h0m0 0h0m0 -210h0m0 -60h0m0 -10h0m0 -10h0m0 270h0m10 -90h0m0 -60h0m0 230h0m0 -190h0m0 130h0m0 -200h0m0 160h0m0 160h0m0 -400h0m10 -30h0m0 50h0m0 200h0m0 -130h0m0 -120h0m0 450h0m0 -130h0m10 200h0m0 -440h0m0 80h0m0 -520h0m0 620h0m0 -110h0m0 400h0m0 -470h0m0 120h0m0 -40h0m0 -10h0m10 -80h0m0 100h0m0 -10h0m0 20h0m0 10h0m0 -100h0m0 40h0m0 90h0m0 240h0m0 -230h0m10 -320h0m0 160h0m0 -60h0m0 130h0m0 110h0m0 -60h0m0 -140h0m0 0h0m10 360h0m0 -180h0m0 30h0m0 70h0m0 180h0m0 -80h0m0 110h0m0 -400h0m10 190h0m0 -320h0m0 250h0m0 -200h0m0 100h0m0 50h0m0 150h0m0 -140h0m0 190h0m0 -280h0m0 90h0m10 100h0m0 -400h0m0 480h0m0 -110h0m0 -40h0m0 80h0m0 50h0m0 -250h0m0 150h0m0 -180h0m10 140h0m0 -10h0m0 -420h0m0 450h0m0 20h0m0 -40h0m0 60h0m0 -30h0m0 -290h0m0 60h0m10 310h0m0 -210h0m0 120h0m0 140h0m0 -270h0m0 130h0m0 150h0m0 -310h0m0 250h0m0 120h0m0 -350h0m0 -140h0m10 260h0m0 110h0m0 220h0m0 -350h0m0 -20h0m0 -20h0m0 140h0m0 -30h0m0 -180h0m0 250h0m0 -450h0m0 330h0m10 -180h0m0 -50h0m0 600h0m0 -160h0m0 -310h0m0 160h0m0 280h0m10 -140h0m0 -70h0m0 -250h0m0 160h0m0 -80h0m0 190h0m0 20h0m0 -230h0m0 170h0m0 -150h0m0 260h0m10 -100h0m0 -360h0m0 480h0m0 -130h0m0 -130h0m0 -20h0m10 100h0m0 50h0m0 20h0m0 390h0m0 -530h0m0 170h0m0 -200h0m0 -40h0m10 110h0m0 -120h0m0 20h0m0 240h0m0 -400h0m0 460h0m0 -210h0m0 -170h0m10 410h0m0 -140h0m0 -230h0m0 -50h0m0 -80h0m0 300h0m0 -90h0m0 110h0m0 -130h0m0 380h0m0 -220h0m0 -210h0m10 370h0m0 -260h0m0 -30h0m0 -80h0m0 10h0m10 540h0m0 -410h0m0 330h0m0 -350h0m0 -70h0m0 300h0m0 -400h0m0 170h0m0 50h0m10 140h0m0 -110h0m0 150h0m0 -140h0m0 -210h0m0 340h0m0 -10h0m0 0h0m0 -100h0m0 -170h0m0 80h0m0 -150h0m10 -40h0m0 -90h0m0 430h0m0 -190h0m0 -170h0m0 370h0m0 -40h0m0 140h0m0 -120h0m0 130h0m0 -420h0m0 350h0m0 -200h0m0 -260h0m0 100h0m10 210h0m0 -330h0m0 40h0m0 310h0m0 -160h0m0 80h0m0 80h0m0 30h0m0 -120h0m0 150h0m10 -70h0m0 -40h0m0 -130h0m0 -130h0m0 310h0m0 -140h0m0 -150h0m0 190h0m0 -50h0m0 -250h0m0 480h0m0 -220h0m10 -190h0m0 330h0m0 -240h0m0 -60h0m0 250h0m0 -130h0m10 140h0m0 -220h0m0 130h0m0 -10h0m0 40h0m0 -130h0m0 210h0m0 -110h0m0 -140h0m0 70h0m0 90h0m0 140h0m0 -220h0m10 10h0m0 -10h0m0 -40h0m0 40h0m0 -60h0m0 520h0m0 -270h0m0 -250h0m0 -20h0m0 160h0m0 120h0m0 -100h0m0 200h0m0 -140h0m0 -100h0m10 240h0m0 -240h0m0 -230h0m0 -30h0m0 -200h0m0 420h0m0 -30h0m0 -40h0m0 120h0m0 40h0m0 70h0m0 -350h0m0 230h0m10 180h0m0 -280h0m0 370h0m0 -200h0m0 -300h0m0 200h0m0 80h0m0 -320h0m0 350h0m0 -270h0m0 -60h0m0 390h0m0 -40h0m0 -310h0m0 -80h0m10 530h0m0 -500h0m0 460h0m0 -560h0m0 310h0m0 50h0m0 -30h0m0 -50h0m0 290h0m0 -490h0m0 160h0m0 -180h0m0 460h0m0 -390h0m0 240h0m0 -330h0m10 60h0m0 420h0m0 -130h0m0 -210h0m0 210h0m0 50h0m0 100h0m0 -780h0m0 450h0m0 240h0m0 -60h0m0 -310h0m0 180h0m10 -150h0m0 310h0m0 -200h0m0 20h0m0 130h0m0 -60h0m0 -430h0m0 440h0m0 120h0m0 -320h0m0 310h0m0 -170h0m0 -280h0m0 280h0m10 110h0m0 -290h0m0 450h0m0 80h0m0 -190h0m0 -110h0m0 -10h0m10 170h0m0 160h0m0 -240h0m0 -90h0m0 130h0m0 0h0m0 80h0m0 -480h0m0 500h0m0 -30h0m10 -200h0m0 -60h0m0 220h0m0 -60h0m0 -210h0m0 200h0m10 -40h0m0 200h0m0 -220h0m0 160h0m0 50h0m0 -180h0m0 20h0m0 -80h0m0 180h0m0 -120h0m0 -30h0m0 10h0m0 -280h0m0 110h0m0 200h0m0 -20h0m0 -190h0m0 120h0m10 260h0m0 -290h0m0 10h0m0 -150h0m0 220h0m0 260h0m0 -210h0m0 -90h0m0 220h0m0 60h0m0 40h0m0 -250h0m10 60h0m0 150h0m0 110h0m0 -420h0m0 220h0m0 -390h0m0 350h0m0 90h0m0 40h0m0 -480h0m10 470h0m0 -280h0m0 230h0m0 350h0m0 -650h0m0 10h0m0 560h0m0 -410h0m0 260h0m10 30h0m0 -400h0m0 140h0m0 170h0m0 50h0m0 -150h0m0 70h0m0 0h0m0 -120h0m0 100h0m0 -140h0m0 -50h0m10 10h0m0 250h0m0 -290h0m0 -60h0m0 350h0m0 -210h0m0 220h0m10 10h0m0 -480h0m0 0h0m0 450h0m0 20h0m0 -340h0m0 210h0m0 220h0m0 -240h0m0 30h0m0 210h0m0 -70h0m0 50h0m0 -130h0m0 -20h0m0 -190h0m0 270h0m0 -80h0m0 150h0m0 -130h0m0 0h0m10 -290h0m0 190h0m0 20h0m0 0h0m0 90h0m0 -250h0m0 110h0m0 250h0m10 -160h0m0 150h0m0 -140h0m0 160h0m0 -170h0m10 60h0m0 130h0m0 -70h0m0 -80h0m0 100h0m0 200h0m0 -300h0m0 120h0m0 -290h0m0 590h0m0 -160h0m0 -160h0m10 100h0m0 -100h0m0 -240h0m0 380h0m0 -90h0m0 -60h0m0 -150h0m0 260h0m0 -300h0m0 40h0m0 490h0m0 -690h0m0 120h0m10 -40h0m0 80h0m0 240h0m0 -190h0m0 260h0m0 -360h0m0 10h0m0 -80h0m0 180h0m0 140h0m0 -150h0m10 40h0m0 -280h0m0 290h0m0 160h0m0 -10h0m0 -300h0m0 160h0m0 200h0m0 -70h0m0 30h0m0 -160h0m0 -210h0m0 260h0m0 -150h0m10 100h0m0 200h0m0 -320h0m0 190h0m0 -300h0m0 180h0m0 -170h0m0 340h0m0 -250h0m0 -220h0m0 50h0m10 120h0m0 20h0m0 260h0m0 -190h0m0 80h0m0 -10h0m0 -320h0m0 190h0m0 -150h0m0 310h0m0 -10h0m10 -190h0m0 90h0m0 -90h0m0 -20h0m0 -320h0m0 350h0m0 -240h0m10 470h0m0 10h0m0 -290h0m0 220h0m0 -330h0m0 170h0m0 90h0m0 -210h0m0 -50h0m0 300h0m10 140h0m0 -220h0m0 0h0m0 -50h0m0 -190h0m0 170h0m0 -60h0m0 -190h0m0 450h0m0 -270h0m0 160h0m0 -230h0m0 280h0m0 -50h0m0 -230h0m10 170h0m0 -290h0m0 270h0m0 -170h0m0 10h0m0 140h0m0 -40h0m0 -90h0m0 40h0m0 -100h0m10 250h0m0 10h0m0 -310h0m0 140h0m0 230h0m0 -210h0m0 -280h0m0 260h0m0 60h0m0 70h0m0 -150h0m0 -90h0m0 20h0m0 200h0m0 0h0m0 110h0m0 -230h0m0 430h0m10 -450h0m0 130h0m0 -140h0m0 -160h0m0 600h0m0 -130h0m0 -160h0m0 -490h0m0 450h0m0 -430h0m0 270h0m0 -10h0m0 160h0m0 -130h0m0 30h0m0 30h0m0 10h0m10 250h0m0 -160h0m0 -130h0m0 70h0m0 170h0m0 -290h0m0 220h0m0 -140h0m0 0h0m0 -90h0m0 -20h0m10 550h0m0 -270h0m0 -110h0m0 0h0m0 90h0m0 -440h0m0 360h0m0 -220h0m0 110h0m0 -40h0m0 10h0m0 560h0m0 -510h0m0 80h0m10 110h0m0 -200h0m0 180h0m0 -80h0m0 -50h0m0 10h0m0 30h0m0 -80h0m0 200h0m0 -90h0m0 110h0m0 -170h0m0 -20h0m0 160h0m10 20h0m0 90h0m0 10h0m0 -490h0m0 600h0m0 -340h0m0 40h0m0 240h0m0 -490h0m0 240h0m0 50h0m0 -140h0m10 70h0m0 220h0m0 -220h0m0 -10h0m0 -40h0m0 -180h0m0 170h0m10 120h0m0 -90h0m0 -150h0m0 70h0m0 90h0m0 70h0m0 110h0m0 -160h0m0 110h0m0 -90h0m0 50h0m0 -10h0m0 -80h0m10 60h0m0 -220h0m0 190h0m0 -420h0m0 630h0m0 -110h0m0 -20h0m0 0h0m0 -170h0m0 -30h0m10 110h0m0 -30h0m0 150h0m0 -70h0m0 120h0m0 50h0m0 -180h0m0 -140h0m0 -20h0m0 370h0m0 -140h0m0 -240h0m0 270h0m0 -110h0m0 70h0m0 -120h0m10 210h0m0 -190h0m0 -300h0m0 650h0m0 -490h0m0 420h0m0 -140h0m0 -250h0m0 160h0m10 -150h0m0 -150h0m0 140h0m0 330h0m0 -70h0m0 130h0m0 -190h0m0 300h0m0 -510h0m0 80h0m0 270h0m0 -30h0m10 -90h0m0 -50h0m0 0h0m0 60h0m0 -150h0m0 80h0m0 30h0m0 230h0m0 -230h0m0 150h0m0 -310h0m0 470h0m10 -20h0m0 -220h0m0 -160h0m0 100h0m0 250h0m0 -390h0m0 370h0m0 -260h0m0 210h0m0 40h0m10 -80h0m0 -280h0m0 330h0m0 -170h0m0 110h0m0 -180h0m0 310h0m0 -190h0m0 90h0m0 -170h0m0 80h0m0 80h0m10 20h0m0 -100h0m0 -140h0m0 40h0m0 120h0m0 -90h0m0 180h0m10 -170h0m0 -30h0m0 50h0m0 200h0m0 -120h0m0 -50h0m0 110h0m0 80h0m0 -230h0m10 -80h0m0 160h0m0 -190h0m0 290h0m0 -350h0m0 340h0m0 -60h0m0 -50h0m0 -200h0m0 200h0m0 -20h0m0 -50h0m0 220h0m0 0h0m10 130h0m0 -110h0m0 -100h0m0 120h0m0 -400h0m0 360h0m0 -180h0m0 520h0m0 -660h0m0 220h0m0 -10h0m10 -90h0m0 -60h0m0 -170h0m0 530h0m0 -210h0m0 140h0m0 -190h0m10 100h0m0 80h0m0 190h0m0 -540h0m0 230h0m0 180h0m0 -120h0m0 140h0m0 110h0m0 -150h0m0 10h0m10 -460h0m0 270h0m0 140h0m0 60h0m0 -320h0m0 150h0m0 120h0m0 -140h0m0 60h0m0 -280h0m0 -80h0m0 330h0m0 -210h0m0 110h0m10 290h0m0 -250h0m0 230h0m0 -370h0m0 90h0m0 150h0m0 140h0m0 -250h0m0 120h0m0 50h0m0 -350h0m0 10h0m0 90h0m0 180h0m0 30h0m10 -540h0m0 460h0m0 -350h0m0 250h0m0 60h0m0 70h0m10 110h0m0 -90h0m0 -320h0m0 120h0m0 270h0m0 -40h0m0 -160h0m0 -50h0m0 300h0m10 -80h0m0 -10h0m0 -310h0m0 120h0m0 190h0m0 -250h0m10 530h0m0 -90h0m0 -230h0m0 100h0m0 -110h0m0 120h0m0 10h0m0 -310h0m10 160h0m0 -350h0m0 440h0m0 -190h0m0 -300h0m0 160h0m0 310h0m10 -40h0m0 -130h0m0 190h0m0 -260h0m0 90h0m0 -10h0m0 90h0m0 -40h0m0 250h0m0 -660h0m0 380h0m0 30h0m0 -120h0m0 -310h0m0 360h0m0 -20h0m10 40h0m0 -160h0m0 110h0m0 120h0m0 120h0m0 -180h0m0 -10h0m0 -280h0m0 210h0m0 -60h0m0 170h0m0 100h0m10 -110h0m0 -130h0m0 230h0m0 -180h0m0 -210h0m0 150h0m0 80h0m0 0h0m0 20h0m0 -140h0m0 -40h0m10 220h0m0 80h0m0 -270h0m0 -30h0m0 130h0m0 120h0m0 -330h0m10 460h0m0 20h0m0 -430h0m0 -110h0m0 170h0m0 -100h0m0 130h0m10 -140h0m0 300h0m0 -60h0m0 10h0m0 20h0m0 -210h0m0 130h0m10 190h0m0 -590h0m0 420h0m10 70h0m0 -50h0m0 -70h0m0 -80h0m0 -60h0m10 330h0m0 -610h0m0 150h0m0 450h0m0 -280h0m0 50h0m0 230h0m0 -140h0m0 -90h0m0 -260h0m0 320h0m0 -180h0m10 230h0m0 -180h0m0 -270h0m0 170h0m0 50h0m0 70h0m10 30h0m0 100h0m0 90h0m0 -240h0m0 40h0m0 310h0m0 -230h0m0 180h0m0 -390h0m0 320h0m10 -190h0m0 -290h0m0 -100h0m0 450h0m0 310h0m0 -330h0m10 -120h0m0 30h0m0 20h0m0 40h0m0 160h0m0 -60h0m0 -160h0m0 -10h0m0 160h0m0 -10h0m10 -70h0m0 -80h0m0 220h0m0 130h0m0 -140h0m0 -70h0m0 -320h0m0 170h0m0 210h0m10 -350h0m0 530h0m0 -160h0m0 -420h0m0 260h0m0 50h0m0 170h0m0 -70h0m0 -290h0m0 200h0m0 80h0m0 -250h0m0 -80h0m10 390h0m0 -260h0m0 100h0m0 10h0m0 200h0m0 -200h0m0 180h0m0 -120h0m0 -140h0m0 120h0m0 -60h0m0 -80h0m0 -80h0m10 130h0m0 -10h0m0 220h0m0 90h0m0 -300h0m0 240h0m0 -10h0m0 -120h0m0 -10h0m0 -190h0m0 430h0m0 -20h0m0 210h0m10 -470h0m0 20h0m0 100h0m0 10h0m0 10h0m0 150h0m0 10h0m0 -110h0m0 -210h0m0 -70h0m0 190h0m0 -50h0m10 120h0m0 -200h0m0 30h0m0 -170h0m0 270h0m0 130h0m0 -160h0m0 120h0m10 -90h0m0 -220h0m0 220h0m0 -20h0m0 40h0m0 -190h0m0 -130h0m0 400h0m0 -480h0m0 410h0m0 0h0m0 -50h0m0 170h0m0 -80h0m0 10h0m0 -160h0m10 230h0m0 -230h0m0 230h0m0 -70h0m0 -40h0m0 100h0m0 -120h0m0 100h0m0 -340h0m10 350h0m0 -20h0m0 -220h0m0 280h0m0 -90h0m0 -130h0m0 150h0m10 230h0m0 -170h0m0 -400h0m0 370h0m0 -200h0m0 90h0m0 60h0m0 30h0m0 -110h0m0 110h0m0 -190h0m10 110h0m0 50h0m0 -20h0m0 -100h0m0 100h0m0 120h0m0 50h0m0 -10h0m0 -110h0m0 -120h0m0 -140h0m0 80h0m0 -40h0m0 300h0m0 90h0m0 -360h0m0 -10h0m10 330h0m0 -210h0m0 -80h0m0 -110h0m0 550h0m0 -580h0m0 230h0m0 60h0m0 -100h0m0 220h0m10 80h0m0 -210h0m0 -60h0m0 150h0m0 80h0m0 -430h0m10 310h0m0 190h0m0 -130h0m0 30h0m0 -180h0m10 -120h0m0 -20h0m0 200h0m0 -90h0m0 260h0m0 -90h0m0 -280h0m0 450h0m0 -190h0m0 -450h0m0 380h0m0 -70h0m0 30h0m0 -10h0m0 30h0m0 -30h0m0 -290h0m10 220h0m0 -20h0m0 90h0m0 320h0m0 -430h0m0 250h0m0 -200h0m0 120h0m0 -320h0m0 290h0m10 70h0m0 -50h0m0 -100h0m0 60h0m0 220h0m0 -190h0m0 -190h0m0 -180h0m0 360h0m0 -240h0m10 270h0m0 50h0m0 -160h0m0 20h0m0 -30h0m0 360h0m0 -440h0m0 0h0m10 80h0m0 -100h0m0 -270h0m0 290h0m0 30h0m0 100h0m0 -240h0m0 240h0m0 -320h0m10 320h0m0 60h0m0 -110h0m0 -370h0m0 150h0m0 150h0m0 170h0m0 -240h0m0 190h0m0 -140h0m0 40h0m0 -60h0m0 -110h0m10 90h0m0 40h0m0 50h0m0 60h0m0 -230h0m0 180h0m0 -40h0m0 -160h0m0 -20h0m0 -70h0m10 120h0m0 -40h0m0 140h0m0 130h0m0 -200h0m0 -260h0m0 230h0m0 -170h0m0 320h0m10 80h0m0 -350h0m0 130h0m0 200h0m0 100h0m0 -150h0m0 190h0m0 -290h0m0 -240h0m0 150h0m0 350h0m0 -310h0m0 -80h0m10 110h0m0 -100h0m0 40h0m0 30h0m0 -300h0m0 460h0m0 -40h0m0 20h0m0 -580h0m0 820h0m0 -400h0m10 130h0m0 -40h0m0 -50h0m0 -130h0m0 110h0m0 160h0m0 -190h0m10 40h0m0 20h0m0 280h0m0 -450h0m0 120h0m0 80h0m0 -110h0m0 210h0m10 70h0m0 -170h0m0 210h0m0 -160h0m0 0h0m0 110h0m0 -80h0m0 210h0m0 -470h0m10 480h0m0 -280h0m0 -120h0m0 -30h0m0 440h0m0 -350h0m0 -30h0m10 130h0m0 -100h0m0 0h0m0 490h0m0 -370h0m0 -220h0m10 -100h0m0 350h0m0 80h0m0 -140h0m0 -170h0m0 160h0m0 -310h0m10 510h0m0 -80h0m0 -60h0m0 40h0m0 -130h0m0 40h0m0 320h0m0 -360h0m0 260h0m0 -90h0m0 80h0m0 -130h0m0 50h0m0 -160h0m0 100h0m0 -60h0m0 -240h0m0 100h0m0 380h0m0 -230h0m0 -210h0m10 590h0m0 -360h0m0 150h0m0 -330h0m0 140h0m0 -150h0m0 110h0m0 140h0m0 170h0m0 120h0m0 -170h0m0 -370h0m0 270h0m0 -290h0m10 410h0m0 0h0m0 -70h0m0 -190h0m0 190h0m0 -200h0m0 350h0m0 -240h0m0 -180h0m0 -100h0m0 -100h0m10 330h0m0 190h0m0 -330h0m0 510h0m0 -330h0m0 0h0m0 220h0m0 -30h0m0 40h0m10 -160h0m0 -240h0m0 -140h0m0 180h0m0 220h0m0 30h0m0 -370h0m0 50h0m0 350h0m0 -40h0m0 -90h0m0 510h0m0 -220h0m0 -130h0m10 -90h0m0 -20h0m0 20h0m0 -100h0m0 50h0m0 -170h0m0 90h0m0 140h0m10 -130h0m0 260h0m0 -240h0m0 320h0m0 -470h0m0 240h0m0 -280h0m0 150h0m0 190h0m10 -40h0m0 -20h0m0 -220h0m0 380h0m0 -240h0m0 -170h0m0 -40h0m0 220h0m0 90h0m0 200h0m10 -370h0m0 30h0m0 630h0m0 -240h0m0 -310h0m0 160h0m0 -220h0m0 70h0m0 50h0m0 50h0m0 -260h0m10 40h0m0 210h0m0 -280h0m0 200h0m0 220h0m0 -130h0m0 200h0m0 -320h0m10 -30h0m0 40h0m0 320h0m0 -140h0m0 230h0m0 -280h0m0 -190h0m0 140h0m0 -70h0m10 50h0m0 170h0m0 -90h0m0 40h0m0 -200h0m0 -30h0m0 270h0m0 -30h0m0 -240h0m0 30h0m0 130h0m10 -290h0m0 340h0m0 -210h0m0 80h0m0 -180h0m0 230h0m0 -230h0m0 70h0m0 470h0m0 -260h0m0 -210h0m10 190h0m0 -270h0m0 150h0m0 280h0m0 -340h0m0 -30h0m0 -60h0m0 50h0m0 -30h0m10 10h0m0 190h0m0 -320h0m0 190h0m0 310h0m0 50h0m0 -480h0m0 80h0m0 -10h0m0 240h0m0 -200h0m0 10h0m0 320h0m0 -190h0m10 -30h0m0 320h0m0 -130h0m0 -220h0m0 -120h0m0 110h0m0 40h0m0 -40h0m10 -110h0m0 180h0m0 -160h0m0 -50h0m0 50h0m0 -120h0m0 180h0m0 -70h0m0 280h0m0 -120h0m0 -520h0m0 620h0m10 110h0m0 -290h0m0 -60h0m0 -170h0m0 110h0m0 20h0m0 210h0m0 -400h0m10 30h0m0 10h0m0 210h0m0 -110h0m0 220h0m0 -40h0m0 -180h0m0 20h0m0 190h0m0 -40h0m10 -220h0m0 20h0m0 180h0m0 -90h0m0 270h0m0 -290h0m0 70h0m0 -60h0m0 10h0m10 -210h0m0 150h0m0 90h0m0 -90h0m0 80h0m0 150h0m0 -120h0m0 350h0m0 -430h0m10 70h0m0 -100h0m0 240h0m0 -70h0m0 -30h0m0 70h0m0 160h0m0 -260h0m0 140h0m10 -400h0m0 240h0m0 -30h0m0 -90h0m0 270h0m0 -310h0m0 180h0m0 -270h0m0 120h0m0 -80h0m0 220h0m0 120h0m0 -180h0m0 170h0m0 -160h0m0 40h0m0 10h0m0 60h0m10 -210h0m0 -190h0m0 510h0m0 -40h0m0 -120h0m0 -450h0m0 520h0m0 -400h0m10 360h0m0 -50h0m0 0h0m0 170h0m0 -310h0m0 140h0m0 210h0m0 -360h0m0 20h0m0 120h0m0 -170h0m10 60h0m0 240h0m0 -460h0m0 310h0m0 30h0m0 -290h0m0 190h0m0 150h0m0 -190h0m0 320h0m10 -450h0m0 570h0m0 -380h0m0 250h0m0 -180h0m0 100h0m10 10h0m0 -180h0m0 -70h0m0 110h0m0 -60h0m0 150h0m0 -60h0m0 -200h0m0 360h0m0 -330h0m10 310h0m0 -110h0m0 -10h0m0 150h0m0 -210h0m0 50h0m0 -200h0m0 130h0m0 -90h0m0 80h0m0 -260h0m10 300h0m0 110h0m0 120h0m0 -80h0m0 -130h0m0 20h0m0 -330h0m0 310h0m0 -10h0m10 -220h0m0 70h0m0 30h0m0 370h0m0 -140h0m0 -10h0m0 -290h0m0 -30h0m0 290h0m0 -180h0m0 -60h0m10 200h0m0 -10h0m0 -160h0m0 110h0m0 200h0m0 -160h0m0 0h0m0 60h0m0 20h0m0 -30h0m0 130h0m0 -30h0m0 -70h0m0 150h0m0 -30h0m0 -30h0m0 -280h0m0 260h0m10 -380h0m0 390h0m0 10h0m0 -160h0m0 -40h0m0 30h0m0 -30h0m10 80h0m0 -60h0m0 40h0m0 180h0m0 100h0m0 -70h0m0 -80h0m0 -210h0m10 170h0m0 -360h0m0 300h0m0 140h0m0 20h0m0 -110h0m0 -170h0m0 160h0m0 -80h0m0 150h0m10 120h0m0 190h0m0 -440h0m0 90h0m0 -200h0m0 10h0m0 230h0m0 -170h0m0 90h0m0 140h0m0 -90h0m0 -80h0m0 -150h0m0 280h0m10 40h0m0 -20h0m0 -360h0m0 240h0m0 40h0m0 60h0m0 -30h0m0 0h0m0 130h0m0 -240h0m0 -210h0m0 260h0m10 80h0m0 -180h0m0 80h0m0 -160h0m0 210h0m0 -380h0m0 340h0m0 -210h0m0 270h0m0 -40h0m0 -60h0m0 140h0m0 -360h0m10 590h0m0 -420h0m0 280h0m0 -220h0m0 120h0m0 -120h0m0 -30h0m0 180h0m0 -130h0m0 350h0m10 -240h0m0 -270h0m0 -20h0m0 30h0m0 190h0m0 -130h0m0 290h0m0 -150h0m0 100h0m0 -30h0m10 70h0m0 -300h0m0 -30h0m0 370h0m0 -220h0m0 -50h0m0 -10h0m0 140h0m0 -50h0m0 -90h0m0 250h0m10 -230h0m0 290h0m0 -210h0m0 -190h0m0 130h0m0 40h0m0 190h0m0 -250h0m0 -140h0m0 50h0m10 200h0m0 -140h0m0 190h0m0 -110h0m0 250h0m0 50h0m0 -70h0m0 -160h0m10 90h0m0 -300h0m0 210h0m0 -180h0m0 60h0m0 40h0m0 -100h0m0 100h0m10 130h0m0 100h0m0 10h0m0 -80h0m0 -210h0m0 -80h0m0 480h0m0 -140h0m0 -140h0m10 200h0m0 -310h0m0 190h0m0 -10h0m0 110h0m10 -80h0m0 -230h0m0 460h0m0 -650h0m0 310h0m0 110h0m0 -180h0m0 290h0m0 -190h0m0 -50h0m0 -140h0m10 250h0m0 -30h0m0 -100h0m0 120h0m0 -390h0m0 180h0m0 140h0m0 -20h0m0 -150h0m0 60h0m0 -10h0m0 -80h0m10 20h0m0 420h0m0 280h0m0 -640h0m0 -70h0m0 170h0m0 30h0m0 -80h0m0 230h0m0 -380h0m10 360h0m0 -390h0m0 220h0m0 100h0m0 -70h0m0 -170h0m0 110h0m0 -50h0m0 80h0m0 30h0m0 -140h0m10 430h0m0 -570h0m0 450h0m0 -160h0m0 20h0m0 -10h0m0 -250h0m0 260h0m0 -40h0m0 -530h0m0 290h0m10 280h0m0 -130h0m0 -60h0m0 -50h0m0 210h0m10 0h0m0 -340h0m0 190h0m0 120h0m0 -230h0m0 70h0m0 -210h0m0 350h0m0 -460h0m0 390h0m10 -360h0m0 420h0m0 140h0m0 -200h0m0 -200h0m0 -20h0m0 190h0m0 -30h0m0 -260h0m0 220h0m0 320h0m10 -480h0m0 230h0m0 40h0m0 0h0m0 -120h0m0 200h0m0 50h0m0 -210h0m0 290h0m10 -200h0m0 -200h0m0 110h0m0 -70h0m0 -50h0m0 420h0m0 -680h0m10 420h0m0 -10h0m0 -180h0m0 10h0m10 250h0m0 0h0m0 0h0m0 -110h0m0 -90h0m0 240h0m0 -50h0m0 -470h0m0 550h0m0 -290h0m0 230h0m10 -70h0m0 120h0m0 -190h0m0 -210h0m0 70h0m0 250h0m0 -170h0m0 270h0m10 -230h0m0 -120h0m0 230h0m0 -170h0m0 100h0m0 -30h0m0 20h0m0 200h0m10 -550h0m0 100h0m0 320h0m0 20h0m0 -160h0m0 -110h0m0 170h0m0 250h0m0 -310h0m0 50h0m0 30h0m0 -250h0m0 220h0m10 -80h0m0 10h0m0 -20h0m0 180h0m0 -350h0m0 320h0m0 -90h0m0 -140h0m0 150h0m10 150h0m0 -310h0m0 230h0m0 -60h0m0 30h0m0 40h0m0 -40h0m0 60h0m0 -50h0m0 90h0m0 -400h0m0 120h0m0 310h0m0 40h0m0 -340h0m0 20h0m0 400h0m10 -420h0m0 200h0m0 160h0m0 -100h0m0 -120h0m10 0h0m0 -350h0m0 400h0m0 100h0m0 -280h0m0 130h0m0 90h0m0 20h0m0 230h0m10 -270h0m0 250h0m0 -220h0m0 0h0m0 140h0m0 -80h0m0 -80h0m0 140h0m10 70h0m0 80h0m0 -190h0m0 -200h0m0 190h0m0 70h0m0 50h0m0 110h0m0 -400h0m10 290h0m0 10h0m0 -20h0m0 40h0m0 -90h0m10 60h0m0 -40h0m0 -40h0m0 -210h0m0 340h0m0 -320h0m0 290h0m0 30h0m0 -340h0m0 180h0m0 120h0m10 50h0m0 -50h0m0 210h0m0 -450h0m0 330h0m0 -290h0m10 250h0m0 -130h0m0 130h0m0 180h0m0 -250h0m0 80h0m0 -170h0m0 120h0m0 -380h0m0 720h0m10 -240h0m0 0h0m0 100h0m0 -30h0m0 -90h0m0 -280h0m10 -110h0m0 100h0m0 270h0m0 -230h0m0 20h0m0 10h0m10 -150h0m0 310h0m0 -110h0m0 -250h0m0 60h0m0 330h0m0 -330h0m0 80h0m0 50h0m0 190h0m0 -10h0m0 20h0m0 130h0m0 -480h0m10 200h0m0 70h0m0 190h0m0 -30h0m0 -360h0m0 280h0m0 -160h0m0 290h0m0 -340h0m0 -30h0m0 180h0m0 110h0m0 -380h0m0 60h0m0 30h0m10 140h0m0 -60h0m0 -100h0m0 290h0m0 -130h0m0 140h0m0 -120h0m0 60h0m10 -210h0m0 -70h0m0 320h0m0 -590h0m0 390h0m0 -80h0m0 250h0m0 -250h0m0 180h0m0 -10h0m0 30h0m0 -230h0m10 -90h0m0 120h0m0 -90h0m0 220h0m0 100h0m10 -160h0m0 170h0m0 -190h0m0 -90h0m0 -120h0m0 200h0m10 80h0m0 240h0m0 -380h0m0 170h0m0 -210h0m0 -40h0m0 230h0m0 -260h0m0 -120h0m0 230h0m0 0h0m0 80h0m0 80h0m10 100h0m0 -340h0m0 160h0m0 -150h0m0 -100h0m0 300h0m0 -230h0m0 240h0m0 -130h0m0 -100h0m0 50h0m0 200h0m10 -200h0m0 -50h0m0 470h0m0 -150h0m0 -30h0m0 250h0m0 -440h0m0 370h0m0 170h0m0 -270h0m0 -540h0m0 200h0m0 40h0m0 -180h0m0 360h0m0 -320h0m10 250h0m0 30h0m0 -200h0m0 10h0m0 70h0m10 40h0m0 -210h0m0 280h0m0 -360h0m0 50h0m0 140h0m0 130h0m10 -160h0m0 50h0m0 -30h0m0 260h0m0 -250h0m0 -350h0m0 390h0m0 150h0m0 -400h0m10 -100h0m0 310h0m0 40h0m0 40h0m0 -370h0m0 110h0m0 560h0m10 -620h0m0 190h0m0 120h0m0 -50h0m0 -60h0m0 70h0m0 -50h0m0 120h0m0 0h0m10 -10h0m0 -70h0m0 280h0m0 -380h0m0 350h0m0 -390h0m0 170h0m0 -40h0m0 250h0m0 -210h0m0 -80h0m10 180h0m0 350h0m0 -740h0m0 390h0m0 -200h0m0 140h0m0 -210h0m0 200h0m0 -70h0m0 20h0m10 330h0m0 -520h0m0 470h0m0 -390h0m10 50h0m0 130h0m0 60h0m0 -10h0m0 -50h0m0 -360h0m0 240h0m0 160h0m0 -10h0m0 130h0m0 -390h0m0 250h0m0 0h0m10 50h0m0 -110h0m0 50h0m0 70h0m0 -90h0m0 -170h0m0 160h0m0 -40h0m0 120h0m0 -70h0m10 -10h0m0 30h0m0 -190h0m0 340h0m0 -110h0m0 -150h0m0 110h0m10 70h0m0 -330h0m0 430h0m0 -350h0m0 250h0m0 -140h0m0 90h0m10 240h0m0 -270h0m0 240h0m0 -70h0m0 -160h0m0 170h0m0 -190h0m0 40h0m0 80h0m0 -200h0m0 40h0m0 240h0m10 120h0m0 -170h0m0 -390h0m0 220h0m0 50h0m0 -30h0m0 90h0m0 90h0m0 -10h0m0 40h0m10 -60h0m0 -100h0m0 10h0m0 -160h0m0 310h0m0 -210h0m0 -180h0m0 240h0m0 -360h0m0 100h0m0 240h0m0 -210h0m0 -30h0m0 140h0m0 150h0m10 -120h0m0 120h0m0 110h0m0 -280h0m0 70h0m0 540h0m0 -420h0m0 -100h0m0 70h0m0 -140h0m0 130h0m0 70h0m0 110h0m10 -310h0m0 0h0m0 -330h0m0 670h0m0 -250h0m0 20h0m10 -80h0m0 -150h0m0 250h0m0 30h0m0 -270h0m0 40h0m0 340h0m0 -170h0m10 -120h0m0 140h0m0 -170h0m0 170h0m0 -220h0m0 350h0m0 190h0m0 -410h0m0 20h0m10 260h0m0 -230h0m0 110h0m0 -160h0m0 180h0m0 -250h0m0 20h0m10 -70h0m0 230h0m0 -10h0m0 10h0m0 -20h0m0 -100h0m0 -80h0m0 290h0m0 -160h0m0 -130h0m0 200h0m0 0h0m10 -20h0m0 170h0m0 -90h0m0 130h0m0 -320h0m0 -80h0m0 330h0m0 -180h0m0 -60h0m10 -60h0m0 170h0m0 140h0m0 -280h0m0 140h0m0 -20h0m0 130h0m0 -190h0m0 10h0m0 -120h0m0 -130h0m0 270h0m0 50h0m0 -90h0m0 90h0m10 80h0m0 -300h0m0 120h0m0 60h0m0 290h0m0 -350h0m0 -180h0m0 220h0m0 0h0m10 110h0m0 -160h0m0 190h0m0 50h0m0 -40h0m0 20h0m0 -230h0m0 290h0m0 -210h0m0 -230h0m0 530h0m0 -320h0m10 -100h0m0 210h0m0 -20h0m0 -130h0m0 -50h0m10 200h0m0 -70h0m0 -80h0m0 340h0m0 -250h0m0 40h0m0 -80h0m0 90h0m0 -150h0m0 140h0m10 150h0m0 -350h0m0 -60h0m0 10h0m0 160h0m0 50h0m0 -40h0m0 80h0m0 -40h0m0 180h0m0 -310h0m0 260h0m0 20h0m0 -230h0m0 430h0m10 -80h0m0 -140h0m0 50h0m0 -250h0m0 0h0m0 130h0m0 -260h0m0 210h0m0 70h0m10 90h0m0 -500h0m0 540h0m0 160h0m0 -320h0m0 110h0m0 -460h0m0 140h0m0 -50h0m0 30h0m10 360h0m0 -370h0m0 210h0m0 -40h0m0 -310h0m0 500h0m0 -330h0m0 20h0m0 -30h0m0 -220h0m0 290h0m0 80h0m0 -60h0m10 120h0m0 140h0m0 -90h0m0 -280h0m0 370h0m0 -240h0m0 250h0m0 -220h0m10 30h0m0 -100h0m0 -80h0m0 80h0m0 180h0m10 -290h0m0 160h0m0 -110h0m0 130h0m0 -110h0m0 350h0m0 -120h0m0 50h0m0 -50h0m0 0h0m0 -190h0m0 170h0m0 -60h0m0 10h0m0 -300h0m0 160h0m0 200h0m10 -200h0m0 20h0m0 150h0m0 -70h0m0 80h0m0 -120h0m0 190h0m10 -190h0m0 -270h0m0 220h0m0 320h0m0 -290h0m0 80h0m0 20h0m0 -10h0m0 -200h0m10 100h0m0 290h0m0 -170h0m0 -370h0m0 140h0m0 450h0m0 -320h0m10 -220h0m0 280h0m0 -220h0m0 -80h0m0 -70h0m0 130h0m0 80h0m10 -100h0m0 80h0m0 340h0m0 -240h0m0 60h0m0 50h0m0 -120h0m0 -10h0m0 -10h0m10 120h0m0 -150h0m0 20h0m0 370h0m0 -280h0m0 -60h0m10 -240h0m0 540h0m0 -320h0m0 100h0m0 90h0m0 -330h0m0 -310h0m10 570h0m0 -260h0m0 220h0m0 -180h0m0 80h0m0 130h0m0 -80h0m0 240h0m0 -330h0m0 260h0m0 -70h0m0 -250h0m0 490h0m0 -270h0m0 -90h0m0 -130h0m0 180h0m10 150h0m0 -260h0m0 310h0m0 -220h0m0 100h0m0 100h0m0 -40h0m0 -20h0m0 -30h0m0 -130h0m0 110h0m10 10h0m0 -90h0m0 190h0m0 -220h0m0 380h0m0 -310h0m0 240h0m0 -220h0m0 -150h0m0 270h0m0 -230h0m0 60h0m0 -120h0m0 390h0m10 -210h0m0 -150h0m0 480h0m0 -430h0m0 50h0m0 240h0m0 -100h0m0 -270h0m0 110h0m10 70h0m0 -140h0m0 60h0m0 60h0m0 -20h0m0 -100h0m0 530h0m0 -440h0m0 30h0m0 -240h0m10 160h0m0 260h0m0 -60h0m0 -70h0m0 -60h0m0 50h0m0 280h0m0 -260h0m0 170h0m0 -300h0m0 190h0m0 -20h0m0 160h0m0 -150h0m10 100h0m0 -80h0m0 -70h0m0 -130h0m0 250h0m0 90h0m0 -430h0m0 490h0m0 -280h0m0 130h0m10 -210h0m0 180h0m0 -20h0m0 -210h0m0 120h0m0 220h0m0 -100h0m0 -60h0m0 -200h0m0 420h0m0 -170h0m0 -20h0m10 -270h0m0 280h0m0 30h0m0 -120h0m0 40h0m0 -230h0m0 380h0m0 -480h0m0 210h0m0 0h0m0 -140h0m0 610h0m10 -160h0m0 -170h0m0 -250h0m0 260h0m0 30h0m0 -10h0m0 80h0m0 20h0m0 -300h0m0 310h0m10 250h0m0 -260h0m0 -320h0m0 250h0m0 -10h0m0 -150h0m0 200h0m0 -210h0m0 170h0m0 -170h0m0 280h0m10 -450h0m0 350h0m0 -280h0m0 460h0m0 -480h0m0 250h0m0 170h0m0 -160h0m0 -190h0m0 300h0m0 -360h0m0 420h0m0 -360h0m10 340h0m0 -280h0m0 60h0m0 120h0m0 -460h0m10 550h0m0 90h0m0 -430h0m0 160h0m0 -220h0m0 200h0m0 -210h0m0 -60h0m10 200h0m0 30h0m0 60h0m0 -20h0m0 -50h0m0 -240h0m0 560h0m0 -420h0m0 90h0m0 130h0m0 -160h0m10 -30h0m0 20h0m0 -30h0m0 220h0m0 -250h0m0 290h0m0 -460h0m0 50h0m0 300h0m0 -140h0m10 80h0m0 -380h0m0 440h0m0 -40h0m0 70h0m0 90h0m0 -210h0m0 -100h0m0 10h0m0 300h0m0 -380h0m0 80h0m10 -30h0m0 100h0m0 160h0m0 40h0m0 -200h0m0 -300h0m10 260h0m0 -250h0m0 60h0m0 190h0m0 40h0m0 30h0m0 -50h0m0 -80h0m0 140h0m0 -240h0m0 10h0m0 250h0m0 -260h0m0 100h0m0 80h0m0 70h0m0 -80h0m0 -300h0m0 390h0m0 -400h0m0 190h0m10 180h0m0 -240h0m0 350h0m0 -110h0m0 -160h0m0 10h0m0 270h0m0 -620h0m10 340h0m0 20h0m0 0h0m0 20h0m0 70h0m0 80h0m0 140h0m0 -250h0m0 -70h0m10 100h0m0 60h0m0 90h0m0 -150h0m0 20h0m0 -190h0m0 -90h0m0 260h0m10 -40h0m0 -50h0m0 10h0m0 200h0m0 -110h0m0 -110h0m0 80h0m0 180h0m0 -120h0m0 -90h0m0 10h0m0 100h0m0 -170h0m0 10h0m10 -260h0m0 400h0m0 -300h0m0 390h0m0 20h0m0 -350h0m0 200h0m0 -180h0m0 270h0m0 -310h0m0 400h0m0 -550h0m0 -40h0m0 100h0m10 110h0m0 160h0m0 -190h0m0 60h0m0 200h0m0 120h0m0 -210h0m0 -100h0m0 150h0m0 130h0m0 -80h0m0 -70h0m0 -390h0m10 360h0m0 -80h0m0 350h0m0 -350h0m0 60h0m0 20h0m0 40h0m0 80h0m10 -170h0m0 170h0m0 -130h0m0 0h0m0 -160h0m0 -50h0m0 610h0m0 -360h0m0 -110h0m10 120h0m0 -190h0m0 -300h0m0 490h0m0 100h0m0 -330h0m0 330h0m0 -40h0m0 -170h0m10 100h0m0 220h0m0 -100h0m0 -40h0m0 -430h0m0 240h0m0 -80h0m0 320h0m0 -300h0m0 140h0m0 -110h0m0 20h0m0 90h0m10 -130h0m0 160h0m0 -210h0m0 150h0m0 150h0m0 -40h0m0 -240h0m0 60h0m0 230h0m0 -60h0m10 90h0m0 -160h0m0 190h0m0 -70h0m0 -50h0m0 260h0m0 -200h0m0 -10h0m10 180h0m0 -90h0m0 -210h0m0 20h0m0 230h0m0 -100h0m0 -280h0m0 -180h0m0 240h0m10 310h0m0 -430h0m0 60h0m0 130h0m0 20h0m0 -120h0m0 270h0m0 150h0m0 -360h0m0 150h0m0 140h0m0 20h0m0 -480h0m10 250h0m0 130h0m0 220h0m0 -250h0m0 270h0m0 -180h0m0 -90h0m10 20h0m0 0h0m0 250h0m0 -380h0m0 100h0m0 -30h0m0 20h0m0 660h0m0 -840h0m0 -110h0m10 370h0m0 -70h0m0 -230h0m0 340h0m0 -100h0m0 -30h0m0 -10h0m0 210h0m0 -310h0m0 260h0m0 190h0m0 -180h0m0 -30h0m0 -230h0m10 -190h0m0 270h0m0 -160h0m0 550h0m0 -230h0m0 -140h0m0 -50h0m0 350h0m10 -50h0m0 -220h0m0 -160h0m0 80h0m0 0h0m10 140h0m0 -210h0m0 80h0m0 250h0m0 0h0m0 -270h0m0 260h0m0 -180h0m0 -130h0m0 260h0m10 110h0m0 -200h0m0 -220h0m0 200h0m0 -60h0m0 -170h0m10 150h0m0 180h0m0 -110h0m0 30h0m0 160h0m0 -220h0m0 -30h0m0 -40h0m10 320h0m0 -400h0m0 230h0m0 140h0m0 -190h0m0 -180h0m0 20h0m0 -130h0m10 -230h0m0 -200h0m0 300h0m0 -240h0m0 140h0m0 140h0m0 -60h0m10 -90h0m0 -70h0m0 100h0m0 -140h0m0 350h0m0 -390h0m0 280h0m0 -60h0m0 -30h0m0 -110h0m10 -210h0m0 50h0m0 60h0m0 40h0m0 420h0m0 -280h0m0 110h0m0 -10h0m0 -120h0m0 -20h0m0 200h0m10 -380h0m0 -30h0m0 410h0m0 -150h0m0 80h0m0 -160h0m0 150h0m10 20h0m0 -210h0m0 490h0m0 -330h0m0 90h0m10 -180h0m0 -70h0m0 0h0m0 190h0m0 -70h0m0 30h0m0 -40h0m0 -20h0m0 110h0m0 -50h0m0 -40h0m0 110h0m0 30h0m0 -140h0m0 -30h0m0 70h0m0 -130h0m10 380h0m0 -200h0m0 -80h0m0 110h0m0 -50h0m0 130h0m0 -120h0m0 90h0m0 40h0m0 -200h0m10 -210h0m0 190h0m0 60h0m0 0h0m0 -20h0m0 0h0m0 -300h0m0 220h0m10 160h0m0 -190h0m0 170h0m0 40h0m0 -60h0m0 60h0m0 70h0m0 -140h0m0 210h0m0 10h0m0 140h0m0 -330h0m10 250h0m0 -40h0m0 -300h0m0 170h0m0 -30h0m0 -130h0m0 100h0m0 110h0m0 30h0m0 -460h0m0 400h0m10 -210h0m0 -370h0m0 420h0m0 490h0m0 -740h0m0 490h0m0 -100h0m0 -210h0m0 50h0m0 30h0m0 70h0m0 170h0m0 -150h0m10 50h0m0 -330h0m0 170h0m0 80h0m0 -10h0m0 110h0m0 50h0m0 -70h0m10 -70h0m0 100h0m0 -240h0m0 -190h0m0 520h0m0 -180h0m0 -300h0m0 110h0m10 250h0m0 -20h0m0 -100h0m0 240h0m0 10h0m0 -340h0m0 80h0m0 -240h0m0 510h0m0 -350h0m0 -40h0m0 230h0m0 -30h0m0 -40h0m0 -290h0m10 270h0m0 280h0m0 -270h0m0 -320h0m0 230h0m0 -20h0m0 80h0m10 90h0m0 -360h0m0 50h0m0 -70h0m0 290h0m0 40h0m0 -70h0m0 20h0m0 -180h0m0 530h0m0 -330h0m10 250h0m0 -120h0m0 40h0m0 -260h0m0 130h0m0 -90h0m0 400h0m0 -200h0m0 120h0m10 -240h0m0 -70h0m0 120h0m0 -60h0m0 50h0m0 -180h0m10 10h0m0 310h0m0 -410h0m0 350h0m0 -150h0m0 30h0m0 -460h0m0 -50h0m0 470h0m0 10h0m10 -110h0m0 -50h0m0 -200h0m0 340h0m0 20h0m0 70h0m0 -180h0m10 280h0m0 -400h0m0 240h0m0 210h0m0 -40h0m0 -270h0m0 310h0m0 -110h0m0 -270h0m0 160h0m10 -320h0m0 100h0m0 150h0m0 90h0m0 120h0m0 -110h0m0 -130h0m0 -30h0m0 220h0m0 -480h0m0 440h0m0 -200h0m0 -90h0m0 350h0m0 -580h0m10 350h0m0 110h0m0 -70h0m0 50h0m0 -180h0m0 80h0m0 -220h0m0 -40h0m0 440h0m10 -310h0m0 330h0m0 -150h0m0 170h0m0 -160h0m0 290h0m0 -120h0m0 -280h0m0 -140h0m0 200h0m0 -180h0m0 180h0m0 240h0m0 -440h0m0 250h0m0 60h0m10 30h0m0 20h0m0 -200h0m0 -90h0m0 -50h0m0 500h0m0 -330h0m10 -70h0m0 140h0m0 190h0m0 -260h0m0 140h0m0 -30h0m0 130h0m0 -180h0m0 240h0m10 -420h0m0 210h0m0 30h0m0 0h0m0 -90h0m0 -20h0m0 60h0m0 -160h0m0 140h0m10 150h0m0 -50h0m0 -140h0m0 -130h0m0 90h0m0 -20h0m0 200h0m0 200h0m10 20h0m0 -690h0m0 110h0m0 250h0m0 400h0m0 -100h0m0 -240h0m0 -280h0m0 -110h0m0 410h0m0 -40h0m0 20h0m10 90h0m0 -110h0m0 50h0m0 310h0m0 -500h0m0 190h0m0 -250h0m0 230h0m0 -120h0m0 -280h0m10 130h0m0 500h0m0 -500h0m0 280h0m0 0h0m0 -20h0m0 0h0m0 0h0m0 -20h0m0 -180h0m0 140h0m0 0h0m10 -340h0m0 370h0m0 220h0m0 -240h0m0 20h0m0 -130h0m0 270h0m0 -60h0m10 0h0m0 -400h0m0 590h0m0 -200h0m0 -250h0m0 320h0m0 120h0m0 -50h0m0 -360h0m0 450h0m0 -310h0m0 -60h0m10 320h0m0 -150h0m0 -170h0m0 330h0m0 -40h0m0 -380h0m0 260h0m0 -110h0m0 140h0m0 -190h0m0 110h0m0 -90h0m10 240h0m0 -350h0m0 210h0m0 160h0m0 -290h0m0 130h0m0 -250h0m0 130h0m0 270h0m10 -170h0m0 0h0m0 -20h0m0 -150h0m0 -190h0m0 290h0m0 260h0m0 -250h0m0 210h0m0 -260h0m10 290h0m0 -160h0m0 -100h0m0 -140h0m0 170h0m0 -30h0m0 40h0m0 -490h0m0 560h0m0 -10h0m0 -90h0m0 -140h0m0 340h0m0 -140h0m10 -70h0m0 -90h0m0 410h0m0 -310h0m0 80h0m0 -70h0m0 -80h0m0 -30h0m0 150h0m0 110h0m0 -320h0m10 170h0m0 -40h0m0 390h0m0 -220h0m0 240h0m0 -170h0m0 -470h0m0 450h0m0 -290h0m0 500h0m10 -680h0m0 460h0m0 -120h0m0 140h0m0 -40h0m0 -130h0m0 200h0m0 -90h0m0 -60h0m0 -110h0m0 -110h0m0 300h0m0 130h0m10 -90h0m0 130h0m10 -290h0m0 0h0m0 100h0m0 -110h0m0 110h0m0 -270h0m0 90h0m0 30h0m0 -40h0m0 140h0m10 170h0m0 -470h0m0 270h0m0 260h0m0 -130h0m0 -260h0m0 350h0m0 -250h0m10 30h0m0 -30h0m0 60h0m0 -80h0m0 260h0m0 -180h0m0 150h0m10 -140h0m0 -100h0m0 160h0m0 -10h0m0 -460h0m0 440h0m0 -310h0m0 480h0m10 -390h0m0 270h0m0 -50h0m0 -130h0m0 250h0m0 -200h0m0 70h0m0 -210h0m10 290h0m0 -290h0m0 320h0m0 -40h0m0 -200h0m0 170h0m0 -60h0m0 -380h0m0 410h0m0 90h0m0 -120h0m0 -320h0m0 400h0m0 -240h0m10 310h0m0 -390h0m0 510h0m0 -130h0m0 40h0m0 -530h0m0 60h0m0 120h0m10 170h0m0 -50h0m0 80h0m0 10h0m0 140h0m0 -250h0m0 -250h0m0 70h0m10 480h0m0 -310h0m0 10h0m0 140h0m0 150h0m0 -310h0m0 310h0m10 -150h0m0 -500h0m0 400h0m0 -30h0m0 160h0m0 -60h0m0 20h0m0 120h0m10 -100h0m0 -180h0m0 80h0m0 -150h0m0 100h0m10 0h0m0 -210h0m0 240h0m0 300h0m0 -220h0m0 -210h0m0 -20h0m0 160h0m0 90h0m10 -460h0m0 360h0m0 -250h0m0 190h0m0 20h0m0 20h0m0 50h0m0 40h0m0 -80h0m0 200h0m0 -400h0m10 90h0m0 140h0m0 -10h0m0 80h0m0 -310h0m0 150h0m0 40h0m0 140h0m10 -420h0m0 140h0m0 340h0m0 -310h0m0 -100h0m0 240h0m0 -220h0m0 360h0m0 -440h0m0 110h0m0 70h0m10 -10h0m0 180h0m0 -280h0m0 190h0m0 150h0m0 -40h0m0 10h0m0 -40h0m10 -650h0m0 630h0m0 -240h0m0 260h0m0 -540h0m0 470h0m0 -110h0m0 240h0m0 -480h0m0 140h0m0 270h0m0 -140h0m0 140h0m0 -200h0m10 0h0m0 240h0m0 90h0m0 -130h0m10 -130h0m0 -60h0m0 150h0m0 -170h0m0 250h0m0 -330h0m10 160h0m0 160h0m0 50h0m0 -50h0m0 40h0m0 -180h0m0 90h0m10 -330h0m0 500h0m0 -320h0m0 -250h0m0 250h0m0 -100h0m0 50h0m0 150h0m0 -190h0m0 310h0m10 -290h0m0 120h0m0 70h0m0 240h0m0 -570h0m0 260h0m0 70h0m0 50h0m0 -150h0m0 -30h0m0 -110h0m0 20h0m0 210h0m0 170h0m0 -560h0m10 130h0m0 120h0m0 70h0m0 80h0m0 240h0m0 -260h0m0 -20h0m0 120h0m0 -350h0m0 200h0m0 130h0m0 -10h0m0 -380h0m0 460h0m0 -310h0m10 -70h0m0 -10h0m0 300h0m0 60h0m0 -510h0m0 570h0m0 -300h0m0 -60h0m0 0h0m0 -100h0m0 530h0m10 -270h0m0 -50h0m0 20h0m0 60h0m0 80h0m0 -140h0m0 110h0m0 0h0m0 180h0m10 -230h0m0 210h0m0 -70h0m0 -320h0m0 200h0m0 -190h0m0 340h0m0 -210h0m0 -110h0m0 310h0m10 40h0m0 -110h0m0 -240h0m0 140h0m0 20h0m0 -120h0m0 240h0m0 -170h0m0 100h0m0 120h0m0 -560h0m0 310h0m10 380h0m0 -280h0m0 30h0m0 10h0m0 260h0m0 -90h0m0 30h0m0 -210h0m10 -150h0m0 220h0m0 -320h0m0 270h0m0 -330h0m0 140h0m0 360h0m0 -350h0m10 120h0m0 310h0m0 -110h0m0 -190h0m0 -50h0m0 140h0m0 -40h0m0 -210h0m0 40h0m10 210h0m0 -90h0m0 160h0m0 -170h0m0 -40h0m0 -330h0m0 450h0m10 20h0m0 20h0m0 130h0m0 70h0m0 -220h0m0 100h0m0 -330h0m0 340h0m0 -90h0m0 220h0m10 -400h0m0 -40h0m0 -90h0m0 320h0m0 240h0m0 -10h0m0 -290h0m0 -180h0m0 150h0m0 -170h0m0 300h0m0 -270h0m10 -30h0m0 150h0m0 100h0m0 -140h0m0 180h0m0 60h0m0 -470h0m0 150h0m0 -10h0m10 100h0m0 150h0m0 -70h0m0 -30h0m0 10h0m0 140h0m0 -70h0m0 -140h0m0 20h0m10 280h0m0 -610h0m0 390h0m0 -300h0m0 10h0m0 120h0m0 240h0m0 -210h0m0 520h0m0 -360h0m10 -180h0m0 290h0m0 -400h0m0 130h0m0 40h0m0 310h0m0 -550h0m0 400h0m0 -110h0m0 30h0m0 240h0m0 -250h0m0 140h0m0 -80h0m0 -120h0m10 240h0m0 -90h0m0 10h0m0 -100h0m0 20h0m0 -250h0m10 320h0m0 150h0m0 80h0m0 -120h0m0 -210h0m0 -290h0m0 360h0m10 -50h0m0 10h0m0 -140h0m0 -70h0m10 90h0m0 -30h0m0 -220h0m0 660h0m0 -550h0m0 320h0m0 -20h0m0 -170h0m0 -100h0m0 500h0m10 -580h0m0 30h0m0 160h0m0 -70h0m0 310h0m0 -220h0m0 240h0m0 -90h0m0 -320h0m0 310h0m0 -290h0m10 110h0m0 100h0m0 -200h0m0 210h0m0 -50h0m0 -360h0m0 310h0m0 -90h0m0 110h0m10 -140h0m0 320h0m0 110h0m0 -580h0m0 250h0m0 -30h0m0 40h0m0 40h0m0 60h0m0 -110h0m0 130h0m0 -60h0m0 70h0m0 -230h0m0 -210h0m10 410h0m0 0h0m0 50h0m0 -190h0m0 -350h0m0 350h0m0 160h0m0 -100h0m0 60h0m0 -180h0m0 120h0m0 -180h0m0 190h0m0 -210h0m0 230h0m0 140h0m0 100h0m10 -400h0m0 240h0m0 -50h0m0 200h0m0 -110h0m0 -40h0m0 -120h0m0 -130h0m0 190h0m0 -120h0m0 110h0m10 40h0m0 -220h0m0 -110h0m0 190h0m0 110h0m0 -90h0m0 -110h0m0 -90h0m0 250h0m0 -40h0m0 30h0m0 -130h0m0 310h0m0 -230h0m0 300h0m0 -170h0m0 -250h0m10 160h0m0 -30h0m0 40h0m0 0h0m0 -190h0m0 190h0m0 -30h0m0 -60h0m0 70h0m0 50h0m0 -10h0m0 -240h0m0 230h0m0 80h0m0 60h0m0 70h0m10 -270h0m0 40h0m0 -310h0m0 120h0m0 430h0m0 -260h0m0 -60h0m10 50h0m0 160h0m0 -130h0m0 0h0m0 -150h0m0 210h0m0 -140h0m10 30h0m0 270h0m0 0h0m0 -130h0m0 0h0m0 180h0m0 -20h0m10 -120h0m0 -50h0m0 180h0m0 -140h0m0 -170h0m0 250h0m0 0h0m10 90h0m0 -390h0m0 130h0m0 330h0m0 -320h0m0 200h0m0 -400h0m0 350h0m0 -200h0m0 70h0m10 -240h0m0 330h0m0 -180h0m0 100h0m0 110h0m0 -220h0m0 320h0m0 -330h0m0 -140h0m10 240h0m0 50h0m0 50h0m0 -80h0m0 -260h0m0 350h0m0 -180h0m0 250h0m0 -70h0m0 -80h0m0 260h0m0 -400h0m0 290h0m0 40h0m0 -460h0m0 600h0m0 -540h0m0 370h0m10 -150h0m0 -70h0m0 360h0m0 -220h0m0 40h0m0 120h0m0 -280h0m0 60h0m0 110h0m0 -250h0m0 290h0m10 -100h0m0 -120h0m0 250h0m0 -240h0m0 -30h0m0 190h0m0 -120h0m0 290h0m0 -250h0m0 -150h0m0 430h0m0 -220h0m0 260h0m0 -450h0m0 280h0m10 -50h0m0 -120h0m0 110h0m0 -110h0m0 220h0m0 -10h0m0 -160h0m0 90h0m0 -70h0m10 -270h0m0 270h0m0 -20h0m0 -130h0m0 190h0m0 30h0m0 150h0m0 -40h0m0 -340h0m0 70h0m10 -30h0m0 190h0m0 -260h0m0 310h0m0 30h0m0 60h0m0 -410h0m0 130h0m0 -60h0m0 20h0m10 -130h0m0 450h0m0 -220h0m0 250h0m0 60h0m0 -560h0m0 190h0m0 90h0m0 -200h0m0 20h0m0 -70h0m0 140h0m0 -50h0m0 170h0m0 -70h0m10 260h0m0 -430h0m0 110h0m0 -110h0m0 290h0m0 130h0m0 -90h0m0 -10h0m0 180h0m0 -390h0m0 -130h0m10 330h0m0 -350h0m0 240h0m0 -150h0m0 170h0m0 400h0m0 -310h0m0 -190h0m10 280h0m0 -320h0m0 100h0m0 -40h0m0 90h0m0 -380h0m0 590h0m0 -360h0m0 230h0m0 -170h0m0 170h0m0 0h0m0 -260h0m0 310h0m10 -480h0m0 340h0m0 170h0m0 -640h0m0 590h0m0 -330h0m0 160h0m0 -30h0m0 -110h0m0 100h0m0 30h0m0 -20h0m0 -180h0m0 340h0m0 290h0m10 -460h0m0 -280h0m0 160h0m0 410h0m0 -160h0m0 -200h0m0 340h0m0 -20h0m0 -90h0m0 -340h0m0 250h0m10 80h0m0 70h0m0 -300h0m0 10h0m0 -20h0m0 370h0m0 190h0m0 -10h0m10 -530h0m0 90h0m0 -40h0m0 50h0m0 -20h0m0 -140h0m0 80h0m0 40h0m0 60h0m0 -140h0m0 60h0m0 180h0m10 -140h0m0 -20h0m0 -240h0m0 310h0m0 -230h0m0 180h0m0 -80h0m0 90h0m0 -140h0m0 140h0m0 -190h0m0 550h0m10 -370h0m0 -150h0m0 580h0m0 -460h0m0 240h0m0 130h0m10 -400h0m0 290h0m0 -280h0m0 190h0m0 -90h0m0 -50h0m0 80h0m0 -170h0m0 160h0m0 -400h0m0 510h0m0 -160h0m10 40h0m0 0h0m0 270h0m0 -660h0m0 400h0m0 -70h0m0 -60h0m0 320h0m0 -280h0m0 140h0m0 -210h0m0 340h0m0 -580h0m0 310h0m0 120h0m0 -90h0m10 100h0m0 -190h0m0 350h0m0 -710h0m0 640h0m0 -70h0m0 -460h0m0 600h0m0 -340h0m0 380h0m0 -440h0m0 300h0m0 -240h0m0 -40h0m10 190h0m0 -150h0m0 120h0m0 -30h0m0 -50h0m0 200h0m0 -270h0m0 410h0m0 -370h0m0 140h0m10 -290h0m0 110h0m0 180h0m0 -190h0m0 -20h0m0 230h0m0 -50h0m0 30h0m0 -50h0m10 -60h0m0 10h0m0 30h0m0 50h0m0 -130h0m0 -100h0m0 80h0m0 220h0m0 -500h0m0 410h0m0 -90h0m0 -20h0m10 290h0m0 -350h0m0 90h0m0 50h0m0 -100h0m0 -130h0m0 160h0m0 270h0m0 -410h0m10 70h0m0 250h0m0 -360h0m0 290h0m0 -50h0m0 240h0m0 -640h0m0 430h0m0 60h0m0 -220h0m0 150h0m0 30h0m0 20h0m0 -150h0m0 110h0m10 -70h0m0 190h0m0 -30h0m0 -220h0m0 -140h0m0 460h0m0 -260h0m0 -140h0m0 90h0m0 -110h0m0 0h0m10 380h0m0 50h0m10 -320h0m0 10h0m0 -90h0m0 340h0m0 -340h0m0 60h0m0 170h0m0 -540h0m0 640h0m0 -380h0m0 130h0m0 -280h0m0 -40h0m0 230h0m0 310h0m0 -320h0m0 160h0m10 370h0m0 -480h0m0 -160h0m0 380h0m0 120h0m0 -260h0m0 70h0m0 -30h0m0 -150h0m10 410h0m0 -170h0m0 30h0m0 10h0m0 -190h0m0 130h0m0 -90h0m0 10h0m0 -20h0m0 230h0m0 -190h0m0 20h0m0 -80h0m0 130h0m0 -100h0m10 80h0m0 -190h0m0 10h0m0 150h0m0 -280h0m0 240h0m0 10h0m0 -40h0m10 40h0m0 -10h0m0 -80h0m0 110h0m0 -390h0m0 150h0m0 -70h0m0 390h0m0 -90h0m0 -380h0m0 50h0m0 240h0m10 20h0m0 60h0m0 -30h0m0 -160h0m0 340h0m0 -60h0m0 -210h0m0 120h0m0 -80h0m0 30h0m10 -90h0m0 70h0m0 220h0m0 -230h0m0 320h0m0 -140h0m0 20h0m0 160h0m0 -500h0m0 140h0m0 90h0m0 -110h0m0 40h0m0 70h0m0 130h0m10 -530h0m0 310h0m0 200h0m0 -530h0m0 580h0m0 -80h0m0 -120h0m0 50h0m10 120h0m0 40h0m0 -100h0m0 -30h0m0 30h0m0 30h0m0 90h0m0 90h0m0 -640h0m0 240h0m0 260h0m0 -350h0m10 430h0m0 -340h0m0 250h0m0 -530h0m0 560h0m0 -200h0m0 290h0m10 -270h0m0 60h0m0 200h0m0 -260h0m0 320h0m0 -120h0m0 -280h0m0 60h0m0 190h0m0 10h0m0 -90h0m0 140h0m10 -50h0m0 -320h0m0 40h0m0 490h0m0 -230h0m0 20h0m0 -40h0m0 30h0m0 -120h0m0 90h0m0 -160h0m10 310h0m0 -150h0m0 20h0m0 40h0m0 -80h0m0 -280h0m0 320h0m0 20h0m0 140h0m10 40h0m0 -230h0m0 -190h0m0 100h0m0 220h0m0 -290h0m0 -70h0m10 -70h0m0 120h0m0 200h0m0 90h0m0 -190h0m0 -150h0m0 170h0m0 90h0m0 -190h0m0 270h0m0 -280h0m0 90h0m0 -10h0m10 200h0m0 -300h0m0 -130h0m0 370h0m0 -240h0m0 170h0m0 70h0m0 -160h0m10 -300h0m0 400h0m0 -150h0m0 200h0m0 100h0m0 -130h0m0 -180h0m10 10h0m0 60h0m0 90h0m0 -140h0m0 400h0m0 -210h0m0 140h0m0 -220h0m0 -120h0m0 350h0m0 -320h0m0 100h0m0 -20h0m0 -150h0m0 360h0m0 -280h0m0 100h0m0 160h0m10 -500h0m0 110h0m0 140h0m0 20h0m0 50h0m0 -100h0m10 300h0m0 -150h0m0 -320h0m0 150h0m0 330h0m0 100h0m10 -440h0m0 100h0m0 90h0m0 -50h0m0 90h0m0 -130h0m0 70h0m0 -100h0m0 -150h0m0 150h0m10 90h0m0 -270h0m0 100h0m0 -100h0m0 30h0m0 190h0m0 130h0m0 -210h0m0 -80h0m0 50h0m0 310h0m10 -420h0m0 440h0m0 -230h0m0 -200h0m0 -180h0m0 130h0m0 400h0m0 -510h0m10 260h0m0 -230h0m0 440h0m0 -190h0m0 -30h0m0 -170h0m0 380h0m0 -500h0m0 340h0m0 110h0m0 30h0m10 -490h0m0 470h0m0 -40h0m0 -170h0m0 -40h0m0 210h0m0 -90h0m0 190h0m0 -470h0m0 350h0m0 -380h0m0 380h0m0 -480h0m10 420h0m0 -480h0m0 580h0m0 -340h0m0 10h0m0 220h0m0 0h0m0 190h0m10 -90h0m0 -190h0m0 150h0m0 -160h0m0 -170h0m0 210h0m0 140h0m0 -240h0m0 290h0m10 -490h0m0 320h0m0 -170h0m0 130h0m0 -200h0m0 220h0m0 250h0m0 -430h0m10 280h0m0 80h0m0 130h0m0 -250h0m0 -80h0m0 -140h0m0 140h0m0 -10h0m0 50h0m0 -180h0m0 100h0m0 330h0m0 -190h0m10 30h0m0 -60h0m0 170h0m0 -150h0m0 150h0m0 -300h0m0 40h0m0 -10h0m0 250h0m0 100h0m0 -280h0m0 160h0m0 -250h0m0 100h0m10 20h0m0 20h0m0 140h0m0 -80h0m0 -230h0m0 180h0m0 120h0m0 20h0m0 -120h0m0 -260h0m0 210h0m0 -140h0m10 -60h0m0 -250h0m0 200h0m0 160h0m0 -90h0m0 130h0m0 -190h0m0 30h0m0 220h0m10 230h0m0 -170h0m0 190h0m0 -210h0m0 -80h0m0 10h0m0 70h0m0 220h0m0 -220h0m0 110h0m0 20h0m0 -40h0m0 -150h0m0 50h0m10 -100h0m0 160h0m0 50h0m0 -40h0m0 40h0m0 -190h0m0 0h0m0 0h0m10 180h0m0 -10h0m0 -110h0m0 370h0m0 -700h0m0 280h0m0 0h0m0 90h0m0 -460h0m10 520h0m0 150h0m0 -240h0m0 -160h0m0 -300h0m0 500h0m0 200h0m0 -100h0m0 30h0m0 -150h0m0 -400h0m0 440h0m0 -160h0m10 260h0m0 170h0m0 -200h0m0 -20h0m0 -30h0m0 120h0m0 -330h0m0 160h0m10 190h0m0 -40h0m0 -20h0m0 -200h0m0 100h0m0 0h0m0 170h0m0 -250h0m0 -210h0m0 350h0m0 70h0m0 0h0m0 -130h0m0 60h0m10 -10h0m0 -150h0m0 300h0m0 -230h0m0 80h0m0 -210h0m0 180h0m0 30h0m0 -40h0m0 0h0m0 -50h0m10 230h0m0 90h0m0 -480h0m0 230h0m0 -190h0m0 60h0m0 190h0m0 10h0m0 -280h0m0 -110h0m0 710h0m0 -420h0m0 -40h0m10 190h0m0 -130h0m0 20h0m0 -30h0m0 10h0m0 -110h0m0 350h0m0 -430h0m0 120h0m0 -300h0m0 240h0m0 20h0m0 180h0m0 -170h0m0 -110h0m10 420h0m0 -90h0m0 20h0m0 -120h0m0 -50h0m0 0h0m0 160h0m0 -390h0m0 510h0m0 -140h0m0 100h0m0 40h0m0 -510h0m0 470h0m0 50h0m10 -110h0m0 -160h0m0 160h0m0 -130h0m0 40h0m0 0h0m0 -20h0m0 -10h0m10 -10h0m0 -200h0m0 0h0m0 140h0m0 50h0m0 170h0m0 -300h0m0 80h0m0 -160h0m0 200h0m0 130h0m0 30h0m0 -10h0m0 -430h0m0 380h0m10 -70h0m0 -260h0m0 430h0m0 -270h0m0 220h0m0 -160h0m0 -120h0m0 180h0m0 -70h0m0 40h0m0 120h0m0 -200h0m0 80h0m10 -270h0m0 410h0m0 -310h0m0 200h0m0 70h0m0 10h0m0 -190h0m0 60h0m10 80h0m0 -410h0m0 270h0m0 -160h0m0 160h0m0 -150h0m0 60h0m10 90h0m0 180h0m0 -200h0m0 110h0m0 -260h0m0 350h0m0 -50h0m0 -250h0m0 150h0m0 70h0m10 -550h0m0 550h0m0 -90h0m0 -410h0m0 670h0m0 -160h0m0 -50h0m0 210h0m0 -40h0m0 -220h0" transform="scale(0.1)" fill="none" stroke="#000" stroke-width="37" stroke-linecap="round"/>
<path d="M1655 4715h0m320 30h0m-140 1180h0m450 410h0m300 -1620h0m160 1180h0m120 -1150h0m740 1090h0m180 -1150h0m130 60h0m940 1200h0m710 -1230h0m180 1230h0m640 -80h0m-50 360h0m310 360h0m140 0h0m650 -1870h0m740 1320h0m810 -1350h0m230 0h0m-280 1240h0m90 20h0m890 -80h0m80 610h0m430 -200h0m90 -410h0m120 170h0m260 -90h0m0 60h0m1530 -600h0m80 -1050h0m100 1240h0m420 0h0" transform="scale(0.1)" fill="none" stroke="#ffa500" stroke-width="34" stroke-linecap="round"/>
<path d="M697.40 660.90L703.40 660.90L700.40 666.10Z" fill="#ffa500"/>
<path d="M903.40 660.90L909.40 660.90L906.40 666.10Z" fill="#ffa500"/>
<path d="M939.40 660.90L945.40 660.90L942.40 666.10Z" fill="#ffa500"/>
<path d="M1019.40 660.90L1025.40 660.90L1022.40 666.10Z" fill="#ffa500"/>
<rect x="105.5" y="499.3" width="1255.5" height="48.4" fill="#ff0000" fill-opacity="0.1" stroke="#ff0000" stroke-opacity="0.1" stroke-width="1.11"/>
<rect x="162.40" y="509.2" width="970.61" height="39.3" fill="#ffa500" fill-opacity="0.1" stroke="#ffa500" stroke-opacity="0.1" stroke-width="1.11"/>
<rect x="1133.01" y="472.2" width="169.93" height="36.8" fill="#ffa500" fill-opacity="0.1" stroke="#ffa500" stroke-opacity="0.1" stroke-width="1.11"/>
<line x1="105.5" y1="523.0" x2="1361" y2="523.0" stroke="#ff0000" stroke-width="2.08"/>
<line x1="162.40" y1="529.2" x2="1134.51" y2="529.2" stroke="#ffa500" stroke-width="3.2"/>
<line x1="1132.01" y1="490.4" x2="1304.44" y2="490.4" stroke="#ffa500" stroke-width="3.2"/>
<line x1="162.00" y1="666.00" x2="162.00" y2="380.5" stroke="#800080" stroke-width="2.08" stroke-dasharray="2.08 3.44"/>
<line x1="1133.00" y1="666.00" x2="1133.00" y2="380.5" stroke="#800080" stroke-width="2.08" stroke-dasharray="2.08 3.44"/>
<line x1="1303.00" y1="666.00" x2="1303.00" y2="380.5" stroke="#800080" stroke-width="2.08" stroke-dasharray="2.08 3.44"/>
</g>
<text x="647.71" y="657.00" font-size="13.89" text-anchor="middle" textLength="44.18" lengthAdjust="spacingAndGlyphs">55241</text>
<text x="1217.98" y="636.90" font-size="13.89" text-anchor="middle" textLength="44.18" lengthAdjust="spacingAndGlyphs">54418</text>
<rect x="105.5" y="380.5" width="1380.0" height="286.0" fill="none" stroke="#000" stroke-width="1.1"/>
<line x1="162.50" y1="666.5" x2="162.50" y2="671.86" stroke="#000" stroke-width="1.1"/>
<text x="162.40" y="686.90" font-size="13.89" text-anchor="middle" textLength="8.84" lengthAdjust="spacingAndGlyphs">0</text>
<line x1="411.50" y1="666.5" x2="411.50" y2="671.86" stroke="#000" stroke-width="1.1"/>
<text x="411.02" y="686.90" font-size="13.89" text-anchor="middle" textLength="35.35" lengthAdjust="spacingAndGlyphs">2000</text>
<line x1="659.50" y1="666.5" x2="659.50" y2="671.86" stroke="#000" stroke-width="1.1"/>
<text x="659.64" y="686.90" font-size="13.89" text-anchor="middle" textLength="35.35" lengthAdjust="spacingAndGlyphs">4000</text>
<line x1="908.50" y1="666.5" x2="908.50" y2="671.86" stroke="#000" stroke-width="1.1"/>
<text x="908.26" y="686.90" font-size="13.89" text-anchor="middle" textLength="35.35" lengthAdjust="spacingAndGlyphs">6000</text>
<line x1="1156.50" y1="666.5" x2="1156.50" y2="671.86" stroke="#000" stroke-width="1.1"/>
<text x="1156.88" y="686.90" font-size="13.89" text-anchor="middle" textLength="35.35" lengthAdjust="spacingAndGlyphs">8000</text>
<line x1="1405.50" y1="666.5" x2="1405.50" y2="671.86" stroke="#000" stroke-width="1.1"/>
<text x="1405.50" y="686.90" font-size="13.89" text-anchor="middle" textLength="44.18" lengthAdjust="spacingAndGlyphs">10000</text>
<line x1="100.14" y1="387.50" x2="105.5" y2="387.50" stroke="#000" stroke-width="1.1"/>
<text x="95.80" y="393.00" font-size="13.89" text-anchor="end" textLength="30.92" lengthAdjust="spacingAndGlyphs">5.95</text>
<line x1="100.14" y1="446.50" x2="105.5" y2="446.50" stroke="#000" stroke-width="1.1"/>
<text x="95.80" y="451.00" font-size="13.89" text-anchor="end" textLength="30.92" lengthAdjust="spacingAndGlyphs">5.94</text>
<line x1="100.14" y1="505.50" x2="105.5" y2="505.50" stroke="#000" stroke-width="1.1"/>
<text x="95.80" y="510.00" font-size="13.89" text-anchor="end" textLength="30.92" lengthAdjust="spacingAndGlyphs">5.93</text>
<line x1="100.14" y1="563.50" x2="105.5" y2="563.50" stroke="#000" stroke-width="1.1"/>
<text x="95.80" y="569.00" font-size="13.89" text-anchor="end" textLength="30.92" lengthAdjust="spacingAndGlyphs">5.92</text>
<line x1="100.14" y1="622.50" x2="105.5" y2="622.50" stroke="#000" stroke-width="1.1"/>
<text x="95.80" y="628.00" font-size="13.89" text-anchor="end" textLength="30.92" lengthAdjust="spacingAndGlyphs">5.91</text>
<rect x="1365.4" y="387.5" width="113.29999999999995" height="47.80000000000001" rx="2.8" fill="#fff" fill-opacity="0.8" stroke="#d6d6d6" stroke-width="1.11"/>
<line x1="1369" y1="399.4" x2="1400" y2="399.4" stroke="#ffa500" stroke-width="3.2"/>
<line x1="1369" y1="422.0" x2="1399" y2="422.0" stroke="#ff0000" stroke-width="2.08"/>
<text x="1409.60" y="403.80" font-size="13.89" text-anchor="start" textLength="30.86" lengthAdjust="spacingAndGlyphs">mag</text>
<text x="1440.46" y="406.00" font-size="10.00" text-anchor="start" textLength="31.73" lengthAdjust="spacingAndGlyphs" font-style="italic">OBSID</text>
<text x="1409.00" y="426.70" font-size="13.89" text-anchor="start" textLength="30.86" lengthAdjust="spacingAndGlyphs">mag</text>
<rect x="1348.5" y="613.5" width="130.0" height="46.0" rx="2.8" fill="#fff" fill-opacity="0.8" stroke="#d6d6d6" stroke-width="1.11"/>
<circle cx="1367.8" cy="626.6" r="1.9" fill="#ffa500"/>
<circle cx="1367.8" cy="647.4" r="1.9" fill="#000"/>
<text x="1392.50" y="629.80" font-size="13.89" text-anchor="start" textLength="80.07" lengthAdjust="spacingAndGlyphs">Highlighted</text>
<text x="1392.50" y="650.80" font-size="13.89" text-anchor="start" textLength="20.04" lengthAdjust="spacingAndGlyphs">OK</text>
<line x1="105.5" y1="758.5" x2="1485.5" y2="758.5" stroke="#b0b0b0" stroke-width="1.11" stroke-dasharray="1.11 1.83"/>
<line x1="105.5" y1="791.1" x2="1485.5" y2="791.1" stroke="#b0b0b0" stroke-width="1.11" stroke-dasharray="1.11 1.83"/>
<line x1="105.5" y1="823.7" x2="1485.5" y2="823.7" stroke="#b0b0b0" stroke-width="1.11" stroke-dasharray="1.11 1.83"/>
<line x1="105.5" y1="856.3" x2="1485.5" y2="856.3" stroke="#b0b0b0" stroke-width="1.11" stroke-dasharray="1.11 1.83"/>
<line x1="105.5" y1="888.9" x2="1485.5" y2="888.9" stroke="#b0b0b0" stroke-width="1.11" stroke-dasharray="1.11 1.83"/>
<line x1="105.5" y1="921.5" x2="1485.5" y2="921.5" stroke="#b0b0b0" stroke-width="1.11" stroke-dasharray="1.11 1.83"/>
<line x1="162.00" y1="954.00" x2="162.00" y2="725.5" stroke="#800080" stroke-width="2.08" stroke-dasharray="2.08 3.44"/>
<line x1="1133.00" y1="954.00" x2="1133.00" y2="725.5" stroke="#800080" stroke-width="2.08" stroke-dasharray="2.08 3.44"/>
<line x1="1303.00" y1="954.00" x2="1303.00" y2="725.5" stroke="#800080" stroke-width="2.08" stroke-dasharray="2.08 3.44"/>
<rect x="105.5" y="725.5" width="1380.0" height="229.0" fill="none" stroke="#000" stroke-width="1.1"/>
<line x1="100.14" y1="758.50" x2="105.5" y2="758.50" stroke="#000" stroke-width="1.1"/>
<text x="95.80" y="764.00" font-size="13.89" text-anchor="end" textLength="79.24" lengthAdjust="spacingAndGlyphs">not Kalman</text>
<line x1="100.14" y1="791.50" x2="105.5" y2="791.50" stroke="#000" stroke-width="1.1"/>
<text x="95.80" y="796.00" font-size="13.89" text-anchor="end" textLength="62.51" lengthAdjust="spacingAndGlyphs">not track</text>
<line x1="100.14" y1="823.50" x2="105.5" y2="823.50" stroke="#000" stroke-width="1.1"/>
<text x="95.80" y="829.00" font-size="13.89" text-anchor="end" textLength="68.89" lengthAdjust="spacingAndGlyphs">Sat. pixel.</text>
<line x1="100.14" y1="856.50" x2="105.5" y2="856.50" stroke="#000" stroke-width="1.1"/>
<text x="95.80" y="861.00" font-size="13.89" text-anchor="end" textLength="57.68" lengthAdjust="spacingAndGlyphs">Ion. rad.</text>
<line x1="100.14" y1="888.50" x2="105.5" y2="888.50" stroke="#000" stroke-width="1.1"/>
<text x="95.80" y="894.00" font-size="13.89" text-anchor="end" textLength="43.83" lengthAdjust="spacingAndGlyphs">dr &gt; 5</text>
<line x1="100.14" y1="921.50" x2="105.5" y2="921.50" stroke="#000" stroke-width="1.1"/>
<text x="95.80" y="927.00" font-size="13.89" text-anchor="end" textLength="80.65" lengthAdjust="spacingAndGlyphs">OBS not OK</text>
<line x1="105.5" y1="957.4" x2="1485.5" y2="957.4" stroke="#b0b0b0" stroke-width="1.11" stroke-dasharray="1.11 1.83"/>
<line x1="105.5" y1="983.4" x2="1485.5" y2="983.4" stroke="#b0b0b0" stroke-width="1.11" stroke-dasharray="1.11 1.83"/>
<line x1="105.5" y1="1009.4" x2="1485.5" y2="1009.4" stroke="#b0b0b0" stroke-width="1.11" stroke-dasharray="1.11 1.83"/>
<g clip-path="url(#c4)">
<path d="M1635 10075h0m10 10h0m10 0h0m20 0h0m0 0h0m0 -10h0m10 0h0m10 0h0m0 10h0m10 -10h0m0 -10h0m30 20h0m0 0h0m10 0h0m10 0h0m0 0h0m0 10h0m0 -10h0m10 0h0m0 0h0m0 0h0m10 0h0m0 0h0m20 0h0m0 0h0m0 -10h0m10 10h0m0 0h0m30 -10h0m10 0h0m0 10h0m0 0h0m0 -10h0m10 10h0m10 0h0m0 -10h0m0 10h0m0 -10h0m10 10h0m0 0h0m20 0h0m0 0h0m10 0h0m0 -10h0m0 0h0m20 -10h0m10 20h0m0 0h0m0 0h0m10 0h0m20 -10h0m0 0h0m0 0h0m10 -10h0m0 10h0m0 10h0m10 -10h0m0 0h0m10 0h0m10 0h0m0 10h0m10 0h0m0 -10h0m10 0h0m0 10h0m0 -10h0m0 0h0m10 0h0m0 -10h0m0 10h0m10 0h0m0 0h0m0 0h0m0 10h0m10 -10h0m0 0h0m0 0h0m0 0h0m10 0h0m10 0h0m10 0h0m0 10h0m0 -10h0m0 0h0m0 0h0m0 0h0m10 0h0m0 0h0m10 0h0m0 10h0m0 -10h0m10 10h0m0 0h0m0 0h0m10 0h0m0 -10h0m10 0h0m0 10h0m10 -10h0m20 0h0m0 10h0m20 -10h0m20 0h0m10 0h0m0 10h0m20 0h0m0 -10h0m10 0h0m10 10h0m10 0h0m0 0h0m0 -10h0m10 0h0m10 10h0m10 0h0m0 0h0m10 0h0m0 -10h0m10 10h0m0 -10h0m10 0h0m0 10h0m0 0h0m10 0h0m10 0h0m0 0h0m0 -10h0m0 10h0m20 0h0m10 0h0m0 0h0m10 -10h0m0 10h0m0 -20h0m10 0h0m0 20h0m20 0h0m0 -10h0m0 10h0m0 0h0m10 0h0m0 -20h0m10 10h0m0 0h0m0 10h0m10 -10h0m0 0h0m10 10h0m10 -10h0m0 10h0m0 0h0m10 0h0m10 -20h0m10 20h0m0 -10h0m0 0h0m10 20h0m0 -10h0m0 0h0m20 -10h0m10 10h0m0 0h0m10 0h0m0 -10h0m10 10h0m0 0h0m10 0h0m0 0h0m0 -10h0m10 10h0m0 0h0m0 -10h0m0 10h0m0 -10h0m0 10h0m10 0h0m10 -10h0m10 10h0m10 -10h0m0 0h0m10 10h0m10 -10h0m20 10h0m0 0h0m0 -10h0m10 0h0m10 0h0m0 10h0m0 -10h0m10 -10h0m0 10h0m10 0h0m0 10h0m0 -10h0m0 10h0m0 -10h0m10 0h0m0 0h0m10 10h0m0 0h0m0 -10h0m0 -10h0m10 10h0m0 10h0m10 0h0m10 0h0m10 0h0m0 -10h0m0 0h0m0 0h0m0 10h0m10 -10h0m0 0h0m0 10h0m10 -10h0m0 0h0m0 0h0m10 0h0m0 10h0m0 0h0m0 0h0m10 0h0m0 -10h0m10 10h0m20 0h0m0 -10h0m0 0h0m0 0h0m10 10h0m0 0h0m0 0h0m0 -10h0m0 0h0m0 10h0m10 0h0m0 0h0m10 0h0m0 -20h0m10 20h0m0 0h0m10 0h0m0 0h0m10 0h0m0 0h0m10 0h0m0 0h0m0 0h0m0 -10h0m20 10h0m0 0h0m0 -10h0m0 10h0m10 0h0m0 0h0m0 0h0m0 -10h0m10 10h0m0 -10h0m0 10h0m10 0h0m0 0h0m0 0h0m0 0h0m10 -20h0m0 20h0m0 -10h0m0 10h0m0 -10h0m20 10h0m0 -20h0m0 20h0m0 0h0m10 0h0m10 0h0m10 -10h0m0 0h0m0 10h0m10 -10h0m10 10h0m0 0h0m10 -10h0m0 0h0m0 0h0m10 0h0m20 0h0m10 10h0m10 0h0m10 0h0m0 0h0m0 10h0m10 -10h0m0 0h0m10 0h0m0 0h0m0 0h0m10 0h0m0 -10h0m10 10h0m0 0h0m0 10h0m0 -10h0m10 -10h0m0 10h0m20 0h0m10 0h0m0 0h0m0 0h0m0 0h0m10 0h0m0 0h0m10 0h0m0 0h0m10 0h0m0 0h0m0 -10h0m10 10h0m0 0h0m0 0h0m0 10h0m0 -10h0m10 0h0m0 0h0m10 0h0m0 0h0m10 -10h0m0 0h0m10 10h0m0 0h0m10 0h0m0 -10h0m10 10h0m0 0h0m0 -10h0m10 10h0m0 0h0m10 0h0m0 0h0m10 -10h0m0 0h0m0 10h0m10 -10h0m0 10h0m0 -20h0m0 10h0m10 0h0m0 0h0m10 0h0m0 0h0m0 0h0m10 10h0m0 -10h0m10 10h0m0 0h0m10 0h0m10 -20h0m0 10h0m0 10h0m10 -10h0m0 0h0m0 0h0m10 0h0m10 10h0m10 0h0m0 -10h0m0 0h0m10 10h0m0 -20h0m0 20h0m10 0h0m0 -10h0m0 0h0m10 10h0m0 -10h0m0 10h0m10 -10h0m20 10h0m0 -10h0m0 0h0m0 0h0m0 10h0m10 0h0m0 -10h0m0 0h0m10 10h0m0 0h0m0 -10h0m10 10h0m0 0h0m10 0h0m10 0h0m10 -10h0m0 10h0m0 -10h0m0 10h0m10 0h0m20 -10h0m0 10h0m10 0h0m0 0h0m10 -20h0m0 10h0m0 10h0m10 -10h0m0 0h0m0 10h0m10 -10h0m0 0h0m0 10h0m0 -10h0m0 10h0m10 0h0m10 0h0m0 0h0m10 -10h0m0 0h0m0 10h0m0 -10h0m0 0h0m0 0h0m10 10h0m0 -10h0m0 0h0m0 0h0m0 20h0m10 -10h0m0 -10h0m0 10h0m0 -10h0m10 0h0m10 10h0m0 0h0m0 0h0m0 0h0m0 -10h0m10 0h0m10 10h0m0 0h0m0 0h0m10 -20h0m0 20h0m0 0h0m0 0h0m10 0h0m0 0h0m0 0h0m20 0h0m0 10h0m0 -10h0m10 -10h0m0 20h0m0 -10h0m10 0h0m10 0h0m0 -10h0m0 0h0m0 0h0m10 10h0m0 0h0m0 0h0m10 -10h0m0 0h0m0 10h0m10 -10h0m0 0h0m10 10h0m0 0h0m0 0h0m0 0h0m10 -10h0m0 10h0m10 0h0m0 0h0m0 0h0m0 -10h0m10 10h0m10 -20h0m0 20h0m0 -10h0m0 0h0m10 0h0m10 10h0m0 0h0m0 -10h0m10 10h0m0 -10h0m10 10h0m0 -10h0m0 0h0m0 10h0m0 -10h0m10 10h0m0 -10h0m10 -10h0m10 20h0m0 0h0m10 0h0m0 0h0m0 -10h0m10 0h0m0 0h0m0 10h0m10 0h0m0 0h0m10 -10h0m10 0h0m0 0h0m10 10h0m0 -10h0m0 0h0m0 10h0m0 0h0m0 0h0m20 0h0m0 0h0m0 0h0m10 0h0m0 0h0m10 10h0m0 -10h0m10 10h0m10 -10h0m10 0h0m0 0h0m0 0h0m0 0h0m10 0h0m0 0h0m0 10h0m0 0h0m0 -10h0m10 0h0m0 0h0m10 -10h0m0 0h0m10 0h0m10 10h0m10 10h0m0 -10h0m0 -10h0m0 10h0m0 -10h0m10 0h0m10 10h0m0 -10h0m0 10h0m10 0h0m0 0h0m0 0h0m0 0h0m10 -10h0m0 10h0m0 0h0m20 0h0m0 0h0m0 0h0m0 0h0m10 0h0m0 0h0m0 0h0m10 0h0m0 -10h0m20 10h0m0 -10h0m10 10h0m10 -20h0m0 20h0m10 -10h0m10 10h0m0 0h0m0 -10h0m0 10h0m10 0h0m0 0h0m0 -10h0m10 0h0m0 0h0m0 10h0m0 -10h0m0 0h0m10 10h0m10 -10h0m0 10h0m10 -10h0m10 10h0m10 -10h0m10 0h0m10 -10h0m0 10h0m10 0h0m0 0h0m0 0h0m0 0h0m10 0h0m0 0h0m10 0h0m10 10h0m0 -10h0m0 10h0m10 -10h0m0 10h0m10 -10h0m0 0h0m0 10h0m0 0h0m0 0h0m20 -10h0m10 10h0m0 -10h0m0 0h0m10 10h0m30 0h0m0 0h0m0 0h0m10 0h0m0 0h0m0 0h0m0 0h0m10 0h0m10 0h0m0 0h0m0 0h0m10 0h0m0 10h0m0 -20h0m0 10h0m10 0h0m0 0h0m0 10h0m0 -10h0m20 0h0m0 10h0m0 0h0m0 -10h0m0 0h0m10 0h0m0 0h0m0 0h0m0 10h0m0 -10h0m0 0h0m10 0h0m10 0h0m0 0h0m0 10h0m20 -10h0m0 0h0m0 0h0m0 0h0m10 0h0m0 0h0m0 0h0m10 0h0m10 0h0m10 0h0m0 0h0m0 -10h0m0 10h0m10 0h0m10 0h0m0 -10h0m0 10h0m10 -10h0m0 0h0m10 0h0m0 10h0m0 -10h0m0 10h0m10 0h0m10 0h0m0 0h0m10 -10h0m0 10h0m0 0h0m20 -10h0m0 0h0m0 0h0m10 0h0m0 0h0m10 10h0m0 0h0m0 -10h0m10 0h0m0 10h0m10 -10h0m0 10h0m20 -10h0m0 10h0m0 0h0m10 0h0m10 -10h0m0 0h0m0 0h0m0 10h0m10 0h0m0 0h0m20 0h0m0 -10h0m0 0h0m10 0h0m0 10h0m0 0h0m10 -10h0m0 10h0m0 0h0m10 0h0m10 -10h0m0 -10h0m10 20h0m10 -10h0m10 0h0m0 10h0m0 -20h0m10 20h0m0 0h0m10 0h0m0 0h0m0 0h0m0 0h0m0 0h0m20 0h0m0 0h0m10 0h0m10 0h0m10 0h0m0 10h0m10 -20h0m0 -10h0m0 0h0m10 20h0m0 -10h0m0 10h0m0 0h0m0 -10h0m10 0h0m0 0h0m0 10h0m0 0h0m20 0h0m0 0h0m10 0h0m0 0h0m0 0h0m0 0h0m0 0h0m10 0h0m10 0h0m0 0h0m0 0h0m10 -10h0m0 10h0m10 0h0m0 0h0m0 0h0m10 -10h0m0 10h0m10 -10h0m0 10h0m0 0h0m0 0h0m0 0h0m10 -10h0m0 10h0m10 0h0m0 0h0m0 0h0m10 0h0m0 0h0m0 0h0m0 -10h0m10 -10h0m0 10h0m0 10h0m0 10h0m0 -10h0m10 0h0m0 0h0m10 0h0m0 0h0m0 0h0m10 -10h0m10 10h0m0 0h0m0 -10h0m0 10h0m10 0h0m0 0h0m10 -10h0m0 0h0m10 0h0m0 -10h0m10 20h0m10 0h0m0 0h0m0 -10h0m10 -10h0m0 20h0m0 0h0m10 -10h0m0 10h0m10 -10h0m0 10h0m0 -10h0m10 0h0m0 10h0m10 -10h0m0 10h0m10 -10h0m0 10h0m0 0h0m10 0h0m0 0h0m0 0h0m20 0h0m0 0h0m0 10h0m10 -20h0m10 0h0m0 10h0m10 -10h0m0 0h0m0 0h0m0 0h0m10 10h0m10 0h0m10 -10h0m10 10h0m0 -10h0m0 0h0m10 0h0m10 0h0m0 10h0m0 -10h0m0 0h0m0 10h0m0 -10h0m10 0h0m0 0h0m0 0h0m0 0h0m10 10h0m0 -10h0m0 -10h0m0 20h0m10 -10h0m0 10h0m0 -10h0m0 0h0m0 0h0m10 10h0m0 -20h0m10 20h0m0 0h0m0 0h0m10 -10h0m10 0h0m0 -10h0m20 10h0m0 0h0m0 10h0m0 -10h0m0 0h0m10 0h0m0 10h0m0 -10h0m10 10h0m0 0h0m0 0h0m0 0h0m10 -10h0m0 10h0m0 -10h0m10 0h0m0 10h0m0 -10h0m10 10h0m0 0h0m0 -10h0m10 10h0m10 0h0m10 0h0m0 -10h0m10 10h0m20 -10h0m0 0h0m0 10h0m0 -10h0m0 0h0m0 0h0m10 10h0m10 0h0m0 -10h0m10 10h0m10 0h0m0 0h0m0 -10h0m0 0h0m0 10h0m0 -10h0m10 10h0m0 -10h0m0 10h0m10 0h0m0 -10h0m0 0h0m10 10h0m0 0h0m10 -20h0m10 20h0m0 0h0m0 0h0m10 -10h0m10 10h0m10 -10h0m0 10h0m0 -10h0m0 10h0m10 0h0m10 -30h0m0 30h0m10 0h0m0 -10h0m10 0h0m10 10h0m10 0h0m0 -10h0m10 10h0m0 0h0m0 0h0m20 -10h0m0 0h0m0 0h0m0 0h0m10 0h0m0 10h0m0 -10h0m0 10h0m0 -10h0m10 10h0m0 -10h0m0 0h0m10 0h0m0 10h0m0 0h0m0 0h0m10 -10h0m20 10h0m0 0h0m0 -10h0m10 10h0m10 0h0m0 0h0m0 0h0m0 -10h0m0 0h0m10 10h0m0 0h0m10 0h0m0 0h0m0 0h0m10 0h0m0 0h0m0 10h0m10 -10h0m10 10h0m10 -10h0m0 -10h0m10 10h0m0 -20h0m0 20h0m0 0h0m10 0h0m0 0h0m10 0h0m0 0h0m0 0h0m0 0h0m0 -10h0m10 0h0m0 0h0m0 10h0m20 -10h0m0 0h0m0 10h0m0 0h0m10 -10h0m0 10h0m10 -10h0m0 10h0m0 -10h0m0 10h0m0 -10h0m0 0h0m0 10h0m10 0h0m0 -10h0m10 10h0m0 0h0m0 -10h0m0 0h0m0 10h0m0 0h0m10 -10h0m0 0h0m10 10h0m0 0h0m0 -10h0m10 10h0m0 -10h0m0 0h0m20 0h0m0 10h0m10 0h0m10 0h0m10 0h0m0 -10h0m10 10h0m0 0h0m10 -10h0m0 10h0m0 -10h0m0 10h0m0 0h0m10 -10h0m0 10h0m0 -10h0m0 0h0m10 10h0m10 0h0m10 0h0m0 0h0m0 0h0m0 0h0m20 0h0m0 0h0m0 -10h0m10 10h0m0 0h0m10 0h0m0 0h0m0 0h0m0 0h0m0 -10h0m10 10h0m0 0h0m10 0h0m0 -10h0m0 0h0m10 0h0m0 10h0m0 0h0m10 -10h0m0 0h0m0 10h0m0 0h0m10 -10h0m0 0h0m10 10h0m0 0h0m10 0h0m0 0h0m10 -10h0m0 10h0m0 -10h0m0 0h0m0 10h0m10 -10h0m10 10h0m10 -10h0m0 0h0m0 0h0m20 0h0m10 10h0m0 0h0m10 -10h0m0 0h0m0 0h0m10 10h0m10 -10h0m0 0h0m10 0h0m0 10h0m0 -10h0m10 0h0m0 10h0m0 -10h0m10 0h0m0 0h0m0 10h0m10 -10h0m0 0h0m10 0h0m0 -10h0m20 10h0m10 0h0m0 10h0m10 0h0m0 -10h0m0 10h0m0 -10h0m0 10h0m10 0h0m0 0h0m0 0h0m0 0h0m10 0h0m0 0h0m0 0h0m0 0h0m10 0h0m0 -10h0m0 10h0m0 -10h0m10 10h0m0 0h0m0 0h0m0 -20h0m20 20h0m10 0h0m0 -10h0m10 10h0m10 0h0m0 0h0m0 -10h0m10 0h0m0 10h0m0 0h0m0 0h0m10 0h0m0 0h0m10 0h0m10 0h0m0 0h0m0 0h0m0 10h0m10 -20h0m0 10h0m0 -10h0m0 10h0m10 -20h0m0 20h0m10 0h0m0 -10h0m0 10h0m10 -10h0m0 10h0m0 0h0m10 0h0m0 0h0m0 0h0m30 0h0m0 0h0m0 0h0m10 0h0m0 0h0m0 0h0m0 0h0m0 -10h0m10 10h0m0 -10h0m0 10h0m10 -20h0m0 20h0m10 0h0m0 -10h0m0 0h0m0 10h0m10 0h0m0 -10h0m10 10h0m0 -10h0m0 0h0m10 10h0m0 -10h0m0 0h0m0 0h0m0 10h0m0 0h0m10 -10h0m0 10h0m10 0h0m0 -10h0m10 0h0m0 10h0m0 0h0m30 0h0m0 -10h0m0 0h0m10 0h0m0 0h0m0 0h0m10 10h0m0 -10h0m0 10h0m0 -10h0m10 10h0m0 0h0m0 0h0m0 -10h0m10 0h0m0 0h0m10 10h0m0 -10h0m0 10h0m0 0h0m0 0h0m10 0h0m0 0h0m0 -10h0m0 10h0m20 0h0m0 -10h0m0 10h0m10 -20h0m0 10h0m10 0h0m10 0h0m0 10h0m10 0h0m0 -10h0m0 10h0m0 -10h0m10 0h0m0 10h0m0 0h0m10 0h0m10 0h0m10 -10h0m0 10h0m0 0h0m0 -10h0m10 10h0m0 0h0m0 0h0m0 -10h0m20 -10h0m0 20h0m0 0h0m10 -10h0m0 10h0m0 0h0m0 0h0m10 0h0m10 0h0m0 0h0m0 0h0m0 -10h0m0 -20h0m10 30h0m0 -10h0m0 10h0m0 0h0m0 0h0m10 -10h0m0 10h0m0 0h0m10 0h0m0 0h0m0 0h0m10 0h0m0 0h0m10 0h0m10 0h0m0 0h0m10 0h0m0 0h0m0 0h0m0 0h0m0 0h0m10 -10h0m0 10h0m10 0h0m10 -10h0m0 10h0m10 -10h0m0 0h0m20 0h0m0 10h0m10 0h0m0 -10h0m0 10h0m10 0h0m0 0h0m0 0h0m0 -10h0m0 10h0m20 0h0m0 0h0m20 0h0m10 0h0m20 0h0m10 -10h0m0 10h0m10 0h0m0 0h0m0 -10h0m0 0h0m10 0h0m0 0h0m20 0h0m0 0h0m0 -10h0m10 10h0m10 10h0m0 -10h0m0 0h0m10 0h0m0 10h0m0 0h0m10 0h0m0 -20h0m10 20h0m10 -10h0m10 0h0m10 10h0m0 0h0m0 -10h0m0 10h0m10 0h0m0 -10h0m10 0h0m0 0h0m10 0h0m0 10h0m10 -10h0m0 0h0m10 0h0m0 0h0m0 10h0m0 0h0m20 0h0m0 10h0m10 -20h0m0 0h0m0 0h0m10 10h0m0 0h0m0 0h0m10 -10h0m0 0h0m0 0h0m20 0h0m10 0h0m0 10h0m0 0h0m10 -10h0m0 10h0m10 0h0m0 -10h0m20 0h0m0 10h0m0 0h0m10 -10h0m0 0h0m0 0h0m0 0h0m10 0h0m10 0h0m0 10h0m0 -10h0m10 10h0m10 0h0m0 0h0m0 0h0m10 -10h0m0 -10h0m0 10h0m0 -10h0m0 -10h0m0 20h0m10 10h0m0 -10h0m0 10h0m0 0h0m10 0h0m0 -10h0m10 0h0m0 10h0m0 -10h0m0 10h0m0 0h0m0 0h0m0 -10h0m0 10h0m20 0h0m0 0h0m10 -10h0m0 0h0m0 0h0m0 10h0m10 0h0m0 0h0m0 0h0m0 0h0m0 0h0m10 -10h0m0 10h0m10 -10h0m0 0h0m10 10h0m20 0h0m0 -10h0m0 10h0m0 0h0m0 0h0m20 0h0m10 0h0m0 -10h0m10 10h0m0 -10h0m0 10h0m0 0h0m10 -10h0m0 0h0m0 0h0m0 0h0m10 10h0m10 -10h0m10 0h0m0 0h0m0 0h0m0 10h0m10 -10h0m0 10h0m0 0h0m0 -10h0m10 10h0m0 -10h0m10 0h0m10 10h0m10 -10h0m20 10h0m10 0h0m0 0h0m0 -10h0m0 10h0m10 0h0m10 0h0m10 0h0m0 0h0m10 -10h0m10 0h0m0 10h0m10 0h0m0 0h0m10 -10h0m0 0h0m10 10h0m0 -10h0m10 -10h0m10 10h0m0 10h0m0 0h0m0 -10h0m0 10h0m0 -10h0m10 0h0m0 -10h0m10 10h0m0 10h0m10 -10h0m0 10h0m0 0h0m10 -10h0m0 10h0m0 -10h0m0 10h0m20 -10h0m0 10h0m0 -10h0m10 10h0m0 -10h0m0 0h0m10 10h0m0 0h0m10 -10h0m30 10h0m30 0h0m0 -10h0m0 10h0m10 -10h0m0 0h0m10 0h0m0 0h0m0 0h0m10 0h0m0 10h0m10 0h0m10 0h0m0 0h0m10 0h0m0 0h0m0 -10h0m10 0h0m10 10h0m10 -10h0m10 0h0m0 10h0m0 0h0m10 -10h0m0 10h0m10 0h0m0 0h0m0 0h0m10 -10h0m0 10h0m0 0h0m10 0h0m0 0h0m10 0h0m0 -10h0m0 10h0m10 0h0m0 0h0m0 -10h0m10 10h0m10 -10h0m0 0h0m0 0h0m10 0h0m0 10h0m10 0h0m0 0h0m10 0h0m0 -10h0m0 0h0m10 0h0m0 10h0m0 -10h0m10 0h0m0 0h0m0 10h0m10 -10h0m0 10h0m0 -10h0m0 0h0m10 10h0m0 -10h0m0 0h0m0 0h0m10 0h0m0 0h0m10 0h0m0 0h0m10 10h0m0 -10h0m10 10h0m0 0h0m0 0h0m10 -10h0m20 10h0m10 -10h0m10 10h0m0 -10h0m10 10h0m0 -10h0m10 10h0m0 0h0m0 0h0m10 0h0m10 -10h0m0 10h0m10 0h0m0 -10h0m10 -10h0m0 20h0m0 0h0m10 0h0m0 -20h0m10 10h0m0 10h0m10 0h0m0 -10h0m0 0h0m0 10h0m0 -10h0m10 10h0m10 -10h0m0 10h0m0 -10h0m10 10h0m0 0h0m0 -20h0m10 20h0m0 0h0m0 0h0m20 0h0m0 0h0m0 0h0m10 0h0m0 0h0m0 0h0m10 0h0m0 -10h0m10 20h0m0 -10h0m0 0h0m20 10h0m0 -10h0m0 0h0m10 0h0m0 0h0m10 0h0m10 0h0m0 0h0m0 0h0m10 0h0m0 0h0m20 0h0m0 -10h0m0 10h0m10 -10h0m0 10h0m20 0h0m10 0h0m10 -10h0m0 0h0m0 10h0m0 0h0m10 0h0m0 -10h0m10 0h0m0 10h0m0 -10h0m0 0h0m0 0h0m10 0h0m0 0h0m0 10h0m10 0h0m0 -10h0m0 0h0m0 0h0m0 0h0m0 0h0m10 10h0m10 -10h0m10 0h0m0 10h0m0 0h0m10 -10h0m10 0h0m0 0h0m0 10h0m10 -10h0m0 0h0m10 -10h0m0 10h0m0 0h0m10 0h0m0 -10h0m10 20h0m0 -10h0m10 0h0m0 0h0m10 10h0m10 -10h0m0 0h0m0 10h0m10 -10h0m10 0h0m0 0h0m0 0h0m10 0h0m0 0h0m10 0h0m0 0h0m0 0h0m0 10h0m20 -10h0m0 0h0m10 0h0m0 -10h0m0 20h0m0 -10h0m20 0h0m0 0h0m0 0h0m0 0h0m10 0h0m0 10h0m10 0h0m0 -10h0m0 10h0m10 0h0m0 -10h0m0 0h0m0 0h0m10 10h0m0 -10h0m10 0h0m0 -10h0m0 20h0m0 -10h0m0 0h0m10 0h0m0 10h0m10 0h0m0 0h0m10 0h0m0 -10h0m10 0h0m0 0h0m0 10h0m0 0h0m0 -10h0m0 10h0m10 0h0m0 -10h0m0 10h0m0 0h0m10 0h0m10 0h0m10 -10h0m0 10h0m0 0h0m0 0h0m0 0h0m0 0h0m10 0h0m0 -10h0m10 10h0m0 0h0m0 0h0m0 0h0m0 0h0m10 -10h0m10 10h0m0 -10h0m10 0h0m0 10h0m0 0h0m0 0h0m20 0h0m0 0h0m0 -10h0m0 0h0m0 0h0m10 -10h0m0 10h0m10 0h0m0 10h0m0 -10h0m0 10h0m10 -10h0m10 0h0m0 0h0m10 0h0m0 10h0m0 -10h0m0 10h0m0 -10h0m10 10h0m0 -10h0m0 0h0m0 0h0m10 0h0m0 0h0m0 0h0m10 10h0m0 -10h0m0 0h0m20 10h0m0 -10h0m0 0h0m10 10h0m0 -10h0m10 10h0m0 -10h0m10 10h0m0 -10h0m0 0h0m10 0h0m0 0h0m30 10h0m0 -10h0m0 0h0m0 0h0m0 0h0m10 0h0m0 10h0m0 -10h0m30 10h0m0 0h0m0 -10h0m0 10h0m0 0h0m10 0h0m0 0h0m0 -10h0m0 0h0m0 0h0m10 10h0m10 0h0m0 0h0m0 -10h0m10 10h0m20 0h0m0 0h0m0 0h0m10 -10h0m0 10h0m0 0h0m10 0h0m0 -20h0m0 20h0m0 -10h0m20 10h0m10 -10h0m0 10h0m10 -10h0m20 10h0m0 -10h0m0 10h0m10 0h0m0 0h0m10 0h0m0 0h0m10 0h0m10 -10h0m0 0h0m0 0h0m10 0h0m0 10h0m0 0h0m10 0h0m0 -10h0m10 10h0m10 0h0m0 -10h0m0 10h0m10 0h0m0 -10h0m10 0h0m0 0h0m10 0h0m0 0h0m0 0h0m10 10h0m10 0h0m0 0h0m0 -10h0m0 0h0m0 10h0m0 0h0m0 -10h0m10 10h0m0 -10h0m10 0h0m0 10h0m0 0h0m0 -10h0m10 0h0m0 0h0m0 10h0m20 0h0m0 0h0m10 0h0m0 -10h0m0 10h0m10 -20h0m0 10h0m20 10h0m0 0h0m0 0h0m10 -10h0m10 0h0m0 10h0m0 0h0m10 -10h0m10 0h0m0 10h0m0 0h0m20 -10h0m10 10h0m10 0h0m0 0h0m0 -10h0m10 0h0m0 0h0m10 10h0m0 0h0m10 -10h0m10 10h0m10 0h0m0 -10h0m10 10h0m0 -10h0m0 10h0m20 0h0m0 0h0m0 0h0m10 -10h0m0 10h0m0 -10h0m10 10h0m0 0h0m0 0h0m0 0h0m0 0h0m10 0h0m10 -10h0m0 10h0m30 0h0m0 -10h0m0 10h0m10 0h0m0 -10h0m10 0h0m10 0h0m0 0h0m10 10h0m0 0h0m0 0h0m10 -20h0m0 20h0m10 0h0m10 0h0m0 -10h0m0 10h0m0 0h0m10 0h0m10 0h0m0 0h0m10 0h0m0 -10h0m10 10h0m0 0h0m0 -10h0m0 10h0m0 0h0m10 0h0m0 0h0m10 -10h0m0 10h0m10 0h0m0 0h0m0 -10h0m0 10h0m0 -10h0m10 20h0m10 -10h0m10 0h0m0 0h0m0 0h0m10 10h0m0 -10h0m10 0h0m0 0h0m0 0h0m0 0h0m0 0h0m10 0h0m0 0h0m0 0h0m0 0h0m10 -10h0m20 0h0m0 10h0m10 0h0m10 0h0m0 0h0m0 0h0m0 0h0m10 -10h0m0 10h0m0 0h0m0 -10h0m10 10h0m10 -10h0m0 0h0m0 0h0m10 10h0m0 0h0m0 -10h0m10 10h0m0 -10h0m0 10h0m10 -10h0m10 0h0m0 0h0m20 0h0m0 0h0m0 0h0m0 0h0m20 0h0m0 0h0m10 0h0m10 0h0m0 10h0m0 -10h0m0 0h0m0 0h0m0 0h0m0 0h0m10 0h0m0 0h0m0 0h0m10 0h0m0 0h0m0 10h0m10 0h0m10 -10h0m0 10h0m10 0h0m0 -10h0m0 0h0m10 0h0m10 10h0m0 0h0m0 0h0m10 0h0m0 -10h0m0 10h0m0 -10h0m0 10h0m10 -10h0m0 0h0m0 0h0m10 0h0m0 10h0m10 -10h0m10 10h0m0 0h0m10 0h0m0 10h0m10 -10h0m0 0h0m10 0h0m0 0h0m10 -10h0m10 10h0m0 0h0m0 0h0m0 0h0m10 0h0m0 0h0m0 0h0m10 0h0m0 0h0m0 0h0m10 0h0m0 10h0m10 -10h0m0 0h0m10 0h0m0 0h0m0 10h0m0 -10h0m10 0h0m10 0h0m0 0h0m10 0h0m10 0h0m0 10h0m10 -10h0m0 0h0m10 -10h0m0 10h0m0 0h0m0 0h0m0 0h0m10 0h0m10 0h0m0 -10h0m10 10h0m10 0h0m20 10h0m0 -10h0m0 0h0m10 0h0m0 0h0m0 0h0m10 0h0m0 0h0m0 0h0m0 0h0m10 0h0m0 0h0m10 0h0m0 0h0m0 0h0m0 0h0m10 0h0m10 0h0m0 0h0m10 -10h0m0 10h0m10 0h0m0 0h0m10 0h0m0 0h0m0 0h0m10 0h0m0 0h0m20 -10h0m0 10h0m0 -10h0m10 10h0m0 -10h0m10 0h0m0 10h0m0 0h0m0 0h0m10 0h0m0 0h0m0 -10h0m10 10h0m0 -10h0m10 10h0m0 -10h0m10 10h0m0 0h0m10 0h0m10 0h0m10 -10h0m10 0h0m0 0h0m0 10h0m0 0h0m10 0h0m10 -10h0m0 0h0m0 0h0m20 0h0m0 10h0m0 -10h0m0 -10h0m0 20h0m10 0h0m0 0h0m0 0h0m10 -10h0m10 10h0m0 -10h0m0 0h0m0 0h0m0 0h0m20 0h0m0 0h0m0 0h0m10 0h0m0 0h0m0 0h0m0 0h0m10 -10h0m0 0h0m0 20h0m10 0h0m10 0h0m0 -10h0m0 0h0m0 0h0m0 0h0m10 10h0m10 0h0m0 -10h0m10 0h0m0 0h0m0 0h0m0 10h0m10 -10h0m10 0h0m0 0h0m0 0h0m10 10h0m10 0h0m0 -10h0m0 0h0m0 10h0m10 0h0m0 0h0m0 0h0m10 -10h0m0 10h0m10 0h0m10 0h0m0 -10h0m0 0h0m0 0h0m0 10h0m10 0h0m0 0h0m10 -10h0m0 -10h0m10 20h0m10 0h0m0 -10h0m10 10h0m10 -10h0m10 10h0m0 0h0m10 0h0m0 0h0m10 0h0m0 0h0m10 0h0m0 0h0m0 0h0m0 0h0m10 -20h0m0 10h0m0 0h0m0 10h0m10 0h0m0 0h0m10 0h0m0 0h0m0 0h0m0 -10h0m0 10h0m20 0h0m0 -20h0m0 20h0m10 0h0m0 0h0m0 0h0m10 0h0m0 0h0m0 0h0m20 0h0m10 0h0m10 0h0m0 0h0m10 -10h0m0 0h0m0 10h0m0 -20h0m10 20h0m0 0h0m0 -10h0m10 0h0m0 0h0m0 0h0m0 10h0m0 0h0m10 0h0m0 0h0m10 0h0m10 -10h0m0 0h0m0 10h0m10 0h0m0 -10h0m0 10h0m20 -10h0m0 10h0m10 0h0m10 -20h0m0 10h0m0 0h0m0 0h0m0 10h0m10 -10h0m20 0h0m10 0h0m0 0h0m10 0h0m10 0h0m10 -10h0m0 10h0m10 0h0m0 10h0m0 0h0m10 0h0m0 0h0m10 -10h0m10 0h0m10 0h0m10 10h0m0 0h0m0 0h0m0 0h0m10 0h0m0 0h0m0 -10h0m0 10h0m10 -10h0m0 0h0m10 0h0m0 10h0m10 -10h0m10 10h0m0 0h0m10 0h0m0 0h0m10 -10h0m0 10h0m0 0h0m10 -20h0m0 20h0m0 0h0m0 0h0m10 -10h0m0 0h0m10 10h0m0 0h0m10 -10h0m0 10h0m0 0h0m10 0h0m0 0h0m0 10h0m0 -10h0m0 -10h0m20 0h0m0 10h0m0 0h0m0 0h0m0 0h0m20 -10h0m0 10h0m10 0h0m10 -10h0m0 0h0m10 20h0m0 -20h0m20 0h0m0 0h0m0 0h0m10 0h0m10 0h0m0 0h0m10 0h0m0 0h0m0 10h0m0 0h0m10 -10h0m0 0h0m0 10h0m0 -10h0m10 0h0m10 10h0m0 -10h0m0 10h0m0 -10h0m0 10h0m0 -10h0m10 0h0m0 0h0m0 -10h0m0 10h0m10 0h0m0 10h0m0 -10h0m10 0h0m0 0h0m0 0h0m0 0h0m0 0h0m10 0h0m0 0h0m10 10h0m0 -10h0m10 10h0m0 0h0m0 0h0m10 0h0m0 0h0m0 0h0m0 0h0m0 0h0m10 -10h0m0 0h0m20 10h0m0 0h0m20 0h0m0 0h0m10 0h0m10 0h0m0 0h0m0 0h0m10 0h0m0 0h0m0 0h0m0 -10h0m10 10h0m0 -10h0m10 0h0m0 0h0m10 10h0m0 -10h0m10 10h0m0 -10h0m0 0h0m10 0h0m0 10h0m0 0h0m10 -10h0m0 0h0m0 0h0m0 10h0m0 -10h0m0 10h0m0 -10h0m20 10h0m0 0h0m0 0h0m10 0h0m0 0h0m0 0h0m10 0h0m0 -10h0m10 0h0m0 0h0m0 0h0m10 10h0m0 -10h0m0 0h0m0 0h0m20 0h0m0 0h0m10 0h0m0 10h0m10 -10h0m0 0h0m0 0h0m10 10h0m20 0h0m10 -10h0m10 10h0m0 0h0m0 0h0m10 -10h0m0 10h0m0 -10h0m10 0h0m0 0h0m0 0h0m0 10h0m10 -10h0m0 -10h0m0 10h0m0 0h0m0 10h0m10 -10h0m10 0h0m0 0h0m0 -10h0m0 10h0m0 10h0m0 -10h0m0 0h0m10 10h0m10 -10h0m0 10h0m10 -10h0m0 0h0m0 0h0m0 0h0m0 0h0m0 10h0m10 -10h0m0 0h0m0 0h0m0 0h0m20 0h0m0 0h0m0 10h0m10 0h0m0 0h0m0 0h0m10 0h0m0 -10h0m0 0h0m0 0h0m10 0h0m0 0h0m10 10h0m0 0h0m0 0h0m20 0h0m0 -10h0m0 10h0m10 0h0m0 -10h0m10 10h0m0 0h0m0 -10h0m10 10h0m0 0h0m0 0h0m10 0h0m0 0h0m0 0h0m0 -10h0m10 10h0m0 0h0m0 0h0m0 0h0m10 0h0m0 -10h0m10 0h0m10 10h0m0 0h0m10 0h0m10 10h0m10 -10h0m20 0h0m0 0h0m0 0h0m0 -10h0m10 0h0m0 10h0m0 -10h0m10 0h0m0 -10h0m0 10h0m10 0h0m0 10h0m0 0h0m0 0h0m0 0h0m10 -10h0m10 10h0m0 0h0m10 0h0m0 -10h0m0 10h0m0 -10h0m10 10h0m0 -10h0m0 10h0m20 0h0m0 0h0m10 -10h0m0 10h0m0 -10h0m10 0h0m10 10h0m10 0h0m0 0h0m10 -10h0m0 0h0m10 0h0m10 0h0m0 0h0m0 0h0m0 10h0m20 -10h0m0 0h0m0 10h0m0 0h0m0 -10h0m10 0h0m0 0h0m0 0h0m0 0h0m0 10h0m10 -20h0m0 10h0m10 10h0m0 0h0m10 0h0m0 -10h0m0 10h0m10 -10h0m10 10h0m0 0h0m0 -10h0m0 0h0m10 10h0m0 0h0m10 0h0m10 0h0m0 0h0m10 0h0m0 0h0m0 0h0m20 0h0m10 0h0m10 -10h0m0 10h0m0 0h0m10 -10h0m0 0h0m10 10h0m0 -10h0m0 10h0m0 0h0m10 0h0m0 0h0m10 -10h0m0 10h0m0 -10h0m10 10h0m0 0h0m0 -10h0m10 10h0m0 -20h0m0 20h0m0 0h0m0 0h0m10 0h0m0 0h0m10 0h0m0 -10h0m0 0h0m0 0h0m10 10h0m0 0h0" transform="scale(0.1)" fill="none" stroke="#000" stroke-width="33" stroke-linecap="round"/>
<line x1="162.00" y1="1011.00" x2="162.00" y2="954.5" stroke="#800080" stroke-width="2.08" stroke-dasharray="2.08 3.44"/>
<line x1="1133.00" y1="1011.00" x2="1133.00" y2="954.5" stroke="#800080" stroke-width="2.08" stroke-dasharray="2.08 3.44"/>
<line x1="1303.00" y1="1011.00" x2="1303.00" y2="954.5" stroke="#800080" stroke-width="2.08" stroke-dasharray="2.08 3.44"/>
</g>
<rect x="105.5" y="954.5" width="1380.0" height="57.0" fill="none" stroke="#000" stroke-width="1.1"/>
<line x1="162.50" y1="1011.5" x2="162.50" y2="1016.86" stroke="#000" stroke-width="1.1"/>
<text x="162.40" y="1031.90" font-size="13.89" text-anchor="middle" textLength="8.84" lengthAdjust="spacingAndGlyphs">0</text>
<line x1="411.50" y1="1011.5" x2="411.50" y2="1016.86" stroke="#000" stroke-width="1.1"/>
<text x="411.02" y="1031.90" font-size="13.89" text-anchor="middle" textLength="35.35" lengthAdjust="spacingAndGlyphs">2000</text>
<line x1="659.50" y1="1011.5" x2="659.50" y2="1016.86" stroke="#000" stroke-width="1.1"/>
<text x="659.64" y="1031.90" font-size="13.89" text-anchor="middle" textLength="35.35" lengthAdjust="spacingAndGlyphs">4000</text>
<line x1="908.50" y1="1011.5" x2="908.50" y2="1016.86" stroke="#000" stroke-width="1.1"/>
<text x="908.26" y="1031.90" font-size="13.89" text-anchor="middle" textLength="35.35" lengthAdjust="spacingAndGlyphs">6000</text>
<line x1="1156.50" y1="1011.5" x2="1156.50" y2="1016.86" stroke="#000" stroke-width="1.1"/>
<text x="1156.88" y="1031.90" font-size="13.89" text-anchor="middle" textLength="35.35" lengthAdjust="spacingAndGlyphs">8000</text>
<line x1="1405.50" y1="1011.5" x2="1405.50" y2="1016.86" stroke="#000" stroke-width="1.1"/>
<text x="1405.50" y="1031.90" font-size="13.89" text-anchor="middle" textLength="44.18" lengthAdjust="spacingAndGlyphs">10000</text>
<line x1="100.14" y1="957.50" x2="105.5" y2="957.50" stroke="#000" stroke-width="1.1"/>
<text x="95.80" y="962.00" font-size="13.89" text-anchor="end" textLength="17.67" lengthAdjust="spacingAndGlyphs">10</text>
<line x1="100.14" y1="983.50" x2="105.5" y2="983.50" stroke="#000" stroke-width="1.1"/>
<text x="95.80" y="988.00" font-size="13.89" text-anchor="end" textLength="8.84" lengthAdjust="spacingAndGlyphs">5</text>
<line x1="100.14" y1="1009.50" x2="105.5" y2="1009.50" stroke="#000" stroke-width="1.1"/>
<text x="95.80" y="1014.00" font-size="13.89" text-anchor="end" textLength="8.84" lengthAdjust="spacingAndGlyphs">0</text>
<line x1="102.22" y1="970.50" x2="105.5" y2="970.50" stroke="#000" stroke-width="0.9"/>
<line x1="102.22" y1="996.50" x2="105.5" y2="996.50" stroke="#000" stroke-width="0.9"/>
<text x="0" y="0" font-size="13.89" text-anchor="middle" textLength="14.53" lengthAdjust="spacingAndGlyphs" transform="translate(69.1 983.7) rotate(-90)">dr</text>
</svg>
</body></html>
